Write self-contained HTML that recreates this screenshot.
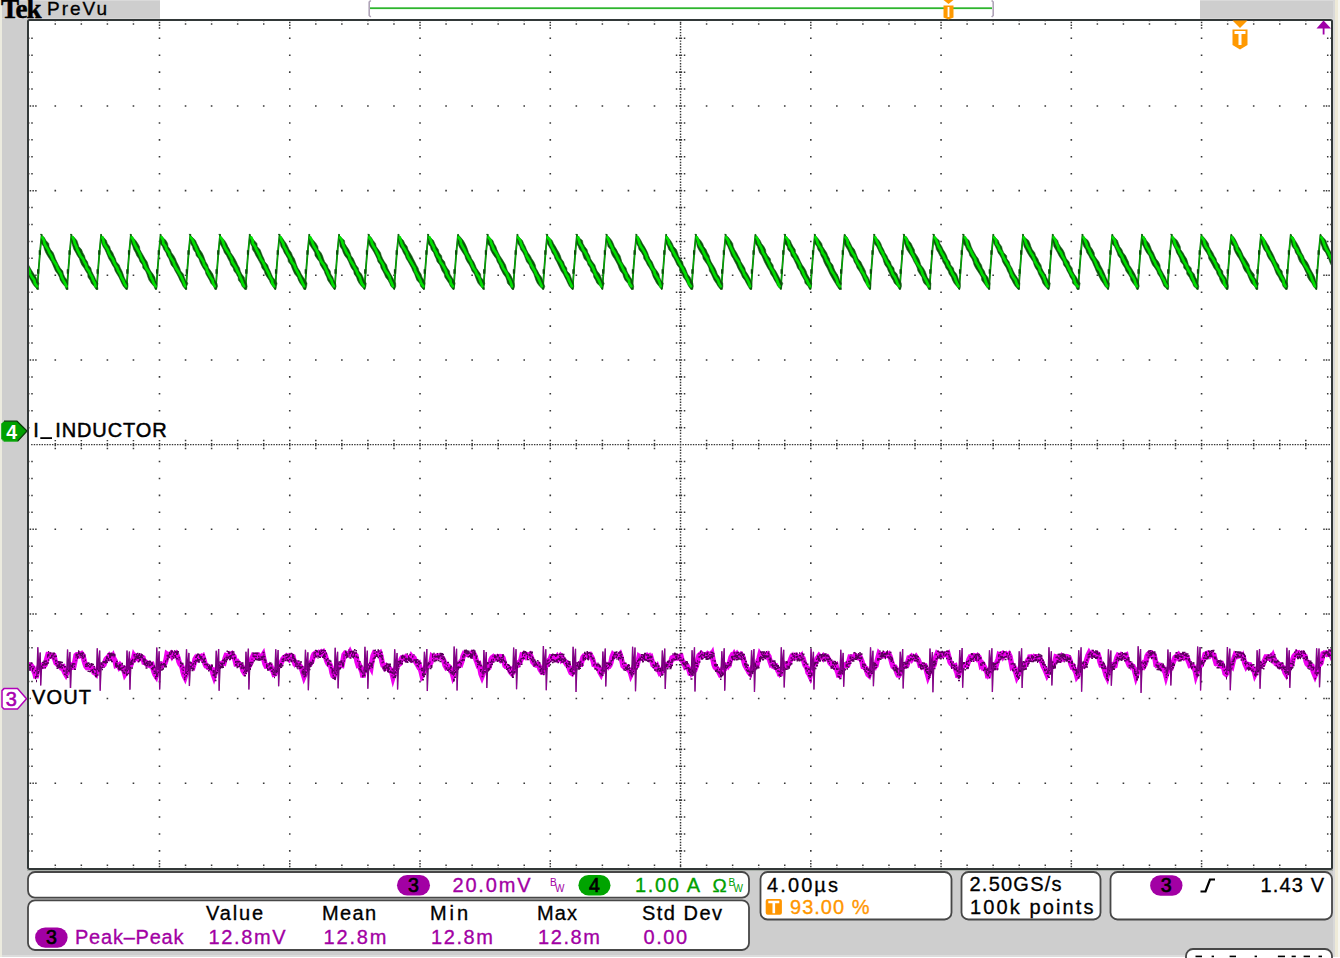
<!DOCTYPE html><html><head><meta charset="utf-8"><style>html,body{margin:0;padding:0;background:#fff;overflow:hidden}svg{display:block}</style></head><body><svg width="1340" height="958" viewBox="0 0 1340 958"><rect x="0" y="0" width="1340" height="958" fill="#cecece"/><rect x="0" y="0" width="2" height="958" fill="#ecebdf"/><rect x="1333" y="0" width="2" height="958" fill="#d9d9d9"/><rect x="1335" y="0" width="3" height="958" fill="#eeead8"/><rect x="1338" y="0" width="2" height="958" fill="#f6f6f0"/><rect x="2" y="0" width="1331" height="1" fill="#dadada"/><rect x="160" y="0" width="1040" height="19" fill="#ffffff"/><rect x="2" y="18" width="158" height="1" fill="#d8d8d8"/><rect x="1200" y="18" width="133" height="1" fill="#d8d8d8"/><rect x="2" y="955" width="1331" height="2" fill="#dcdcdc"/><rect x="0" y="957" width="1340" height="1" fill="#ffffff"/><rect x="28" y="20" width="1304" height="849" fill="#ffffff" stroke="#323838" stroke-width="2" rx="1.5"/><rect x="27" y="870" width="1306" height="1" fill="#aab0aa"/><path fill="#383838" d="M158.7 37.48h1.6v1.6h-1.6zM158.7 54.41h1.6v1.6h-1.6zM158.7 71.34h1.6v1.6h-1.6zM158.7 88.27h1.6v1.6h-1.6zM158.7 105.2h1.6v1.6h-1.6zM158.7 122.13h1.6v1.6h-1.6zM158.7 139.06h1.6v1.6h-1.6zM158.7 155.99h1.6v1.6h-1.6zM158.7 172.92h1.6v1.6h-1.6zM158.7 189.85h1.6v1.6h-1.6zM158.7 206.78h1.6v1.6h-1.6zM158.7 223.71h1.6v1.6h-1.6zM158.7 240.64h1.6v1.6h-1.6zM158.7 257.57h1.6v1.6h-1.6zM158.7 274.5h1.6v1.6h-1.6zM158.7 291.43h1.6v1.6h-1.6zM158.7 308.36h1.6v1.6h-1.6zM158.7 325.29h1.6v1.6h-1.6zM158.7 342.22h1.6v1.6h-1.6zM158.7 359.15h1.6v1.6h-1.6zM158.7 376.08h1.6v1.6h-1.6zM158.7 393.01h1.6v1.6h-1.6zM158.7 409.94h1.6v1.6h-1.6zM158.7 426.87h1.6v1.6h-1.6zM158.7 443.8h1.6v1.6h-1.6zM158.7 460.73h1.6v1.6h-1.6zM158.7 477.66h1.6v1.6h-1.6zM158.7 494.59h1.6v1.6h-1.6zM158.7 511.52h1.6v1.6h-1.6zM158.7 528.45h1.6v1.6h-1.6zM158.7 545.38h1.6v1.6h-1.6zM158.7 562.31h1.6v1.6h-1.6zM158.7 579.24h1.6v1.6h-1.6zM158.7 596.17h1.6v1.6h-1.6zM158.7 613.1h1.6v1.6h-1.6zM158.7 630.03h1.6v1.6h-1.6zM158.7 646.96h1.6v1.6h-1.6zM158.7 663.89h1.6v1.6h-1.6zM158.7 680.82h1.6v1.6h-1.6zM158.7 697.75h1.6v1.6h-1.6zM158.7 714.68h1.6v1.6h-1.6zM158.7 731.61h1.6v1.6h-1.6zM158.7 748.54h1.6v1.6h-1.6zM158.7 765.47h1.6v1.6h-1.6zM158.7 782.4h1.6v1.6h-1.6zM158.7 799.33h1.6v1.6h-1.6zM158.7 816.26h1.6v1.6h-1.6zM158.7 833.19h1.6v1.6h-1.6zM158.7 850.12h1.6v1.6h-1.6zM288.96 37.48h1.6v1.6h-1.6zM288.96 54.41h1.6v1.6h-1.6zM288.96 71.34h1.6v1.6h-1.6zM288.96 88.27h1.6v1.6h-1.6zM288.96 105.2h1.6v1.6h-1.6zM288.96 122.13h1.6v1.6h-1.6zM288.96 139.06h1.6v1.6h-1.6zM288.96 155.99h1.6v1.6h-1.6zM288.96 172.92h1.6v1.6h-1.6zM288.96 189.85h1.6v1.6h-1.6zM288.96 206.78h1.6v1.6h-1.6zM288.96 223.71h1.6v1.6h-1.6zM288.96 240.64h1.6v1.6h-1.6zM288.96 257.57h1.6v1.6h-1.6zM288.96 274.5h1.6v1.6h-1.6zM288.96 291.43h1.6v1.6h-1.6zM288.96 308.36h1.6v1.6h-1.6zM288.96 325.29h1.6v1.6h-1.6zM288.96 342.22h1.6v1.6h-1.6zM288.96 359.15h1.6v1.6h-1.6zM288.96 376.08h1.6v1.6h-1.6zM288.96 393.01h1.6v1.6h-1.6zM288.96 409.94h1.6v1.6h-1.6zM288.96 426.87h1.6v1.6h-1.6zM288.96 443.8h1.6v1.6h-1.6zM288.96 460.73h1.6v1.6h-1.6zM288.96 477.66h1.6v1.6h-1.6zM288.96 494.59h1.6v1.6h-1.6zM288.96 511.52h1.6v1.6h-1.6zM288.96 528.45h1.6v1.6h-1.6zM288.96 545.38h1.6v1.6h-1.6zM288.96 562.31h1.6v1.6h-1.6zM288.96 579.24h1.6v1.6h-1.6zM288.96 596.17h1.6v1.6h-1.6zM288.96 613.1h1.6v1.6h-1.6zM288.96 630.03h1.6v1.6h-1.6zM288.96 646.96h1.6v1.6h-1.6zM288.96 663.89h1.6v1.6h-1.6zM288.96 680.82h1.6v1.6h-1.6zM288.96 697.75h1.6v1.6h-1.6zM288.96 714.68h1.6v1.6h-1.6zM288.96 731.61h1.6v1.6h-1.6zM288.96 748.54h1.6v1.6h-1.6zM288.96 765.47h1.6v1.6h-1.6zM288.96 782.4h1.6v1.6h-1.6zM288.96 799.33h1.6v1.6h-1.6zM288.96 816.26h1.6v1.6h-1.6zM288.96 833.19h1.6v1.6h-1.6zM288.96 850.12h1.6v1.6h-1.6zM419.22 37.48h1.6v1.6h-1.6zM419.22 54.41h1.6v1.6h-1.6zM419.22 71.34h1.6v1.6h-1.6zM419.22 88.27h1.6v1.6h-1.6zM419.22 105.2h1.6v1.6h-1.6zM419.22 122.13h1.6v1.6h-1.6zM419.22 139.06h1.6v1.6h-1.6zM419.22 155.99h1.6v1.6h-1.6zM419.22 172.92h1.6v1.6h-1.6zM419.22 189.85h1.6v1.6h-1.6zM419.22 206.78h1.6v1.6h-1.6zM419.22 223.71h1.6v1.6h-1.6zM419.22 240.64h1.6v1.6h-1.6zM419.22 257.57h1.6v1.6h-1.6zM419.22 274.5h1.6v1.6h-1.6zM419.22 291.43h1.6v1.6h-1.6zM419.22 308.36h1.6v1.6h-1.6zM419.22 325.29h1.6v1.6h-1.6zM419.22 342.22h1.6v1.6h-1.6zM419.22 359.15h1.6v1.6h-1.6zM419.22 376.08h1.6v1.6h-1.6zM419.22 393.01h1.6v1.6h-1.6zM419.22 409.94h1.6v1.6h-1.6zM419.22 426.87h1.6v1.6h-1.6zM419.22 443.8h1.6v1.6h-1.6zM419.22 460.73h1.6v1.6h-1.6zM419.22 477.66h1.6v1.6h-1.6zM419.22 494.59h1.6v1.6h-1.6zM419.22 511.52h1.6v1.6h-1.6zM419.22 528.45h1.6v1.6h-1.6zM419.22 545.38h1.6v1.6h-1.6zM419.22 562.31h1.6v1.6h-1.6zM419.22 579.24h1.6v1.6h-1.6zM419.22 596.17h1.6v1.6h-1.6zM419.22 613.1h1.6v1.6h-1.6zM419.22 630.03h1.6v1.6h-1.6zM419.22 646.96h1.6v1.6h-1.6zM419.22 663.89h1.6v1.6h-1.6zM419.22 680.82h1.6v1.6h-1.6zM419.22 697.75h1.6v1.6h-1.6zM419.22 714.68h1.6v1.6h-1.6zM419.22 731.61h1.6v1.6h-1.6zM419.22 748.54h1.6v1.6h-1.6zM419.22 765.47h1.6v1.6h-1.6zM419.22 782.4h1.6v1.6h-1.6zM419.22 799.33h1.6v1.6h-1.6zM419.22 816.26h1.6v1.6h-1.6zM419.22 833.19h1.6v1.6h-1.6zM419.22 850.12h1.6v1.6h-1.6zM549.48 37.48h1.6v1.6h-1.6zM549.48 54.41h1.6v1.6h-1.6zM549.48 71.34h1.6v1.6h-1.6zM549.48 88.27h1.6v1.6h-1.6zM549.48 105.2h1.6v1.6h-1.6zM549.48 122.13h1.6v1.6h-1.6zM549.48 139.06h1.6v1.6h-1.6zM549.48 155.99h1.6v1.6h-1.6zM549.48 172.92h1.6v1.6h-1.6zM549.48 189.85h1.6v1.6h-1.6zM549.48 206.78h1.6v1.6h-1.6zM549.48 223.71h1.6v1.6h-1.6zM549.48 240.64h1.6v1.6h-1.6zM549.48 257.57h1.6v1.6h-1.6zM549.48 274.5h1.6v1.6h-1.6zM549.48 291.43h1.6v1.6h-1.6zM549.48 308.36h1.6v1.6h-1.6zM549.48 325.29h1.6v1.6h-1.6zM549.48 342.22h1.6v1.6h-1.6zM549.48 359.15h1.6v1.6h-1.6zM549.48 376.08h1.6v1.6h-1.6zM549.48 393.01h1.6v1.6h-1.6zM549.48 409.94h1.6v1.6h-1.6zM549.48 426.87h1.6v1.6h-1.6zM549.48 443.8h1.6v1.6h-1.6zM549.48 460.73h1.6v1.6h-1.6zM549.48 477.66h1.6v1.6h-1.6zM549.48 494.59h1.6v1.6h-1.6zM549.48 511.52h1.6v1.6h-1.6zM549.48 528.45h1.6v1.6h-1.6zM549.48 545.38h1.6v1.6h-1.6zM549.48 562.31h1.6v1.6h-1.6zM549.48 579.24h1.6v1.6h-1.6zM549.48 596.17h1.6v1.6h-1.6zM549.48 613.1h1.6v1.6h-1.6zM549.48 630.03h1.6v1.6h-1.6zM549.48 646.96h1.6v1.6h-1.6zM549.48 663.89h1.6v1.6h-1.6zM549.48 680.82h1.6v1.6h-1.6zM549.48 697.75h1.6v1.6h-1.6zM549.48 714.68h1.6v1.6h-1.6zM549.48 731.61h1.6v1.6h-1.6zM549.48 748.54h1.6v1.6h-1.6zM549.48 765.47h1.6v1.6h-1.6zM549.48 782.4h1.6v1.6h-1.6zM549.48 799.33h1.6v1.6h-1.6zM549.48 816.26h1.6v1.6h-1.6zM549.48 833.19h1.6v1.6h-1.6zM549.48 850.12h1.6v1.6h-1.6zM810 37.48h1.6v1.6h-1.6zM810 54.41h1.6v1.6h-1.6zM810 71.34h1.6v1.6h-1.6zM810 88.27h1.6v1.6h-1.6zM810 105.2h1.6v1.6h-1.6zM810 122.13h1.6v1.6h-1.6zM810 139.06h1.6v1.6h-1.6zM810 155.99h1.6v1.6h-1.6zM810 172.92h1.6v1.6h-1.6zM810 189.85h1.6v1.6h-1.6zM810 206.78h1.6v1.6h-1.6zM810 223.71h1.6v1.6h-1.6zM810 240.64h1.6v1.6h-1.6zM810 257.57h1.6v1.6h-1.6zM810 274.5h1.6v1.6h-1.6zM810 291.43h1.6v1.6h-1.6zM810 308.36h1.6v1.6h-1.6zM810 325.29h1.6v1.6h-1.6zM810 342.22h1.6v1.6h-1.6zM810 359.15h1.6v1.6h-1.6zM810 376.08h1.6v1.6h-1.6zM810 393.01h1.6v1.6h-1.6zM810 409.94h1.6v1.6h-1.6zM810 426.87h1.6v1.6h-1.6zM810 443.8h1.6v1.6h-1.6zM810 460.73h1.6v1.6h-1.6zM810 477.66h1.6v1.6h-1.6zM810 494.59h1.6v1.6h-1.6zM810 511.52h1.6v1.6h-1.6zM810 528.45h1.6v1.6h-1.6zM810 545.38h1.6v1.6h-1.6zM810 562.31h1.6v1.6h-1.6zM810 579.24h1.6v1.6h-1.6zM810 596.17h1.6v1.6h-1.6zM810 613.1h1.6v1.6h-1.6zM810 630.03h1.6v1.6h-1.6zM810 646.96h1.6v1.6h-1.6zM810 663.89h1.6v1.6h-1.6zM810 680.82h1.6v1.6h-1.6zM810 697.75h1.6v1.6h-1.6zM810 714.68h1.6v1.6h-1.6zM810 731.61h1.6v1.6h-1.6zM810 748.54h1.6v1.6h-1.6zM810 765.47h1.6v1.6h-1.6zM810 782.4h1.6v1.6h-1.6zM810 799.33h1.6v1.6h-1.6zM810 816.26h1.6v1.6h-1.6zM810 833.19h1.6v1.6h-1.6zM810 850.12h1.6v1.6h-1.6zM940.26 37.48h1.6v1.6h-1.6zM940.26 54.41h1.6v1.6h-1.6zM940.26 71.34h1.6v1.6h-1.6zM940.26 88.27h1.6v1.6h-1.6zM940.26 105.2h1.6v1.6h-1.6zM940.26 122.13h1.6v1.6h-1.6zM940.26 139.06h1.6v1.6h-1.6zM940.26 155.99h1.6v1.6h-1.6zM940.26 172.92h1.6v1.6h-1.6zM940.26 189.85h1.6v1.6h-1.6zM940.26 206.78h1.6v1.6h-1.6zM940.26 223.71h1.6v1.6h-1.6zM940.26 240.64h1.6v1.6h-1.6zM940.26 257.57h1.6v1.6h-1.6zM940.26 274.5h1.6v1.6h-1.6zM940.26 291.43h1.6v1.6h-1.6zM940.26 308.36h1.6v1.6h-1.6zM940.26 325.29h1.6v1.6h-1.6zM940.26 342.22h1.6v1.6h-1.6zM940.26 359.15h1.6v1.6h-1.6zM940.26 376.08h1.6v1.6h-1.6zM940.26 393.01h1.6v1.6h-1.6zM940.26 409.94h1.6v1.6h-1.6zM940.26 426.87h1.6v1.6h-1.6zM940.26 443.8h1.6v1.6h-1.6zM940.26 460.73h1.6v1.6h-1.6zM940.26 477.66h1.6v1.6h-1.6zM940.26 494.59h1.6v1.6h-1.6zM940.26 511.52h1.6v1.6h-1.6zM940.26 528.45h1.6v1.6h-1.6zM940.26 545.38h1.6v1.6h-1.6zM940.26 562.31h1.6v1.6h-1.6zM940.26 579.24h1.6v1.6h-1.6zM940.26 596.17h1.6v1.6h-1.6zM940.26 613.1h1.6v1.6h-1.6zM940.26 630.03h1.6v1.6h-1.6zM940.26 646.96h1.6v1.6h-1.6zM940.26 663.89h1.6v1.6h-1.6zM940.26 680.82h1.6v1.6h-1.6zM940.26 697.75h1.6v1.6h-1.6zM940.26 714.68h1.6v1.6h-1.6zM940.26 731.61h1.6v1.6h-1.6zM940.26 748.54h1.6v1.6h-1.6zM940.26 765.47h1.6v1.6h-1.6zM940.26 782.4h1.6v1.6h-1.6zM940.26 799.33h1.6v1.6h-1.6zM940.26 816.26h1.6v1.6h-1.6zM940.26 833.19h1.6v1.6h-1.6zM940.26 850.12h1.6v1.6h-1.6zM1070.52 37.48h1.6v1.6h-1.6zM1070.52 54.41h1.6v1.6h-1.6zM1070.52 71.34h1.6v1.6h-1.6zM1070.52 88.27h1.6v1.6h-1.6zM1070.52 105.2h1.6v1.6h-1.6zM1070.52 122.13h1.6v1.6h-1.6zM1070.52 139.06h1.6v1.6h-1.6zM1070.52 155.99h1.6v1.6h-1.6zM1070.52 172.92h1.6v1.6h-1.6zM1070.52 189.85h1.6v1.6h-1.6zM1070.52 206.78h1.6v1.6h-1.6zM1070.52 223.71h1.6v1.6h-1.6zM1070.52 240.64h1.6v1.6h-1.6zM1070.52 257.57h1.6v1.6h-1.6zM1070.52 274.5h1.6v1.6h-1.6zM1070.52 291.43h1.6v1.6h-1.6zM1070.52 308.36h1.6v1.6h-1.6zM1070.52 325.29h1.6v1.6h-1.6zM1070.52 342.22h1.6v1.6h-1.6zM1070.52 359.15h1.6v1.6h-1.6zM1070.52 376.08h1.6v1.6h-1.6zM1070.52 393.01h1.6v1.6h-1.6zM1070.52 409.94h1.6v1.6h-1.6zM1070.52 426.87h1.6v1.6h-1.6zM1070.52 443.8h1.6v1.6h-1.6zM1070.52 460.73h1.6v1.6h-1.6zM1070.52 477.66h1.6v1.6h-1.6zM1070.52 494.59h1.6v1.6h-1.6zM1070.52 511.52h1.6v1.6h-1.6zM1070.52 528.45h1.6v1.6h-1.6zM1070.52 545.38h1.6v1.6h-1.6zM1070.52 562.31h1.6v1.6h-1.6zM1070.52 579.24h1.6v1.6h-1.6zM1070.52 596.17h1.6v1.6h-1.6zM1070.52 613.1h1.6v1.6h-1.6zM1070.52 630.03h1.6v1.6h-1.6zM1070.52 646.96h1.6v1.6h-1.6zM1070.52 663.89h1.6v1.6h-1.6zM1070.52 680.82h1.6v1.6h-1.6zM1070.52 697.75h1.6v1.6h-1.6zM1070.52 714.68h1.6v1.6h-1.6zM1070.52 731.61h1.6v1.6h-1.6zM1070.52 748.54h1.6v1.6h-1.6zM1070.52 765.47h1.6v1.6h-1.6zM1070.52 782.4h1.6v1.6h-1.6zM1070.52 799.33h1.6v1.6h-1.6zM1070.52 816.26h1.6v1.6h-1.6zM1070.52 833.19h1.6v1.6h-1.6zM1070.52 850.12h1.6v1.6h-1.6zM1200.78 37.48h1.6v1.6h-1.6zM1200.78 54.41h1.6v1.6h-1.6zM1200.78 71.34h1.6v1.6h-1.6zM1200.78 88.27h1.6v1.6h-1.6zM1200.78 105.2h1.6v1.6h-1.6zM1200.78 122.13h1.6v1.6h-1.6zM1200.78 139.06h1.6v1.6h-1.6zM1200.78 155.99h1.6v1.6h-1.6zM1200.78 172.92h1.6v1.6h-1.6zM1200.78 189.85h1.6v1.6h-1.6zM1200.78 206.78h1.6v1.6h-1.6zM1200.78 223.71h1.6v1.6h-1.6zM1200.78 240.64h1.6v1.6h-1.6zM1200.78 257.57h1.6v1.6h-1.6zM1200.78 274.5h1.6v1.6h-1.6zM1200.78 291.43h1.6v1.6h-1.6zM1200.78 308.36h1.6v1.6h-1.6zM1200.78 325.29h1.6v1.6h-1.6zM1200.78 342.22h1.6v1.6h-1.6zM1200.78 359.15h1.6v1.6h-1.6zM1200.78 376.08h1.6v1.6h-1.6zM1200.78 393.01h1.6v1.6h-1.6zM1200.78 409.94h1.6v1.6h-1.6zM1200.78 426.87h1.6v1.6h-1.6zM1200.78 443.8h1.6v1.6h-1.6zM1200.78 460.73h1.6v1.6h-1.6zM1200.78 477.66h1.6v1.6h-1.6zM1200.78 494.59h1.6v1.6h-1.6zM1200.78 511.52h1.6v1.6h-1.6zM1200.78 528.45h1.6v1.6h-1.6zM1200.78 545.38h1.6v1.6h-1.6zM1200.78 562.31h1.6v1.6h-1.6zM1200.78 579.24h1.6v1.6h-1.6zM1200.78 596.17h1.6v1.6h-1.6zM1200.78 613.1h1.6v1.6h-1.6zM1200.78 630.03h1.6v1.6h-1.6zM1200.78 646.96h1.6v1.6h-1.6zM1200.78 663.89h1.6v1.6h-1.6zM1200.78 680.82h1.6v1.6h-1.6zM1200.78 697.75h1.6v1.6h-1.6zM1200.78 714.68h1.6v1.6h-1.6zM1200.78 731.61h1.6v1.6h-1.6zM1200.78 748.54h1.6v1.6h-1.6zM1200.78 765.47h1.6v1.6h-1.6zM1200.78 782.4h1.6v1.6h-1.6zM1200.78 799.33h1.6v1.6h-1.6zM1200.78 816.26h1.6v1.6h-1.6zM1200.78 833.19h1.6v1.6h-1.6zM1200.78 850.12h1.6v1.6h-1.6zM54.49 105.2h1.6v1.6h-1.6zM80.54 105.2h1.6v1.6h-1.6zM106.6 105.2h1.6v1.6h-1.6zM132.65 105.2h1.6v1.6h-1.6zM184.75 105.2h1.6v1.6h-1.6zM210.8 105.2h1.6v1.6h-1.6zM236.86 105.2h1.6v1.6h-1.6zM262.91 105.2h1.6v1.6h-1.6zM315.01 105.2h1.6v1.6h-1.6zM341.06 105.2h1.6v1.6h-1.6zM367.12 105.2h1.6v1.6h-1.6zM393.17 105.2h1.6v1.6h-1.6zM445.27 105.2h1.6v1.6h-1.6zM471.32 105.2h1.6v1.6h-1.6zM497.38 105.2h1.6v1.6h-1.6zM523.43 105.2h1.6v1.6h-1.6zM575.53 105.2h1.6v1.6h-1.6zM601.58 105.2h1.6v1.6h-1.6zM627.64 105.2h1.6v1.6h-1.6zM653.69 105.2h1.6v1.6h-1.6zM705.79 105.2h1.6v1.6h-1.6zM731.84 105.2h1.6v1.6h-1.6zM757.9 105.2h1.6v1.6h-1.6zM783.95 105.2h1.6v1.6h-1.6zM836.05 105.2h1.6v1.6h-1.6zM862.1 105.2h1.6v1.6h-1.6zM888.16 105.2h1.6v1.6h-1.6zM914.21 105.2h1.6v1.6h-1.6zM966.31 105.2h1.6v1.6h-1.6zM992.36 105.2h1.6v1.6h-1.6zM1018.42 105.2h1.6v1.6h-1.6zM1044.47 105.2h1.6v1.6h-1.6zM1096.57 105.2h1.6v1.6h-1.6zM1122.62 105.2h1.6v1.6h-1.6zM1148.68 105.2h1.6v1.6h-1.6zM1174.73 105.2h1.6v1.6h-1.6zM1226.83 105.2h1.6v1.6h-1.6zM1252.88 105.2h1.6v1.6h-1.6zM1278.94 105.2h1.6v1.6h-1.6zM1304.99 105.2h1.6v1.6h-1.6zM54.49 189.85h1.6v1.6h-1.6zM80.54 189.85h1.6v1.6h-1.6zM106.6 189.85h1.6v1.6h-1.6zM132.65 189.85h1.6v1.6h-1.6zM184.75 189.85h1.6v1.6h-1.6zM210.8 189.85h1.6v1.6h-1.6zM236.86 189.85h1.6v1.6h-1.6zM262.91 189.85h1.6v1.6h-1.6zM315.01 189.85h1.6v1.6h-1.6zM341.06 189.85h1.6v1.6h-1.6zM367.12 189.85h1.6v1.6h-1.6zM393.17 189.85h1.6v1.6h-1.6zM445.27 189.85h1.6v1.6h-1.6zM471.32 189.85h1.6v1.6h-1.6zM497.38 189.85h1.6v1.6h-1.6zM523.43 189.85h1.6v1.6h-1.6zM575.53 189.85h1.6v1.6h-1.6zM601.58 189.85h1.6v1.6h-1.6zM627.64 189.85h1.6v1.6h-1.6zM653.69 189.85h1.6v1.6h-1.6zM705.79 189.85h1.6v1.6h-1.6zM731.84 189.85h1.6v1.6h-1.6zM757.9 189.85h1.6v1.6h-1.6zM783.95 189.85h1.6v1.6h-1.6zM836.05 189.85h1.6v1.6h-1.6zM862.1 189.85h1.6v1.6h-1.6zM888.16 189.85h1.6v1.6h-1.6zM914.21 189.85h1.6v1.6h-1.6zM966.31 189.85h1.6v1.6h-1.6zM992.36 189.85h1.6v1.6h-1.6zM1018.42 189.85h1.6v1.6h-1.6zM1044.47 189.85h1.6v1.6h-1.6zM1096.57 189.85h1.6v1.6h-1.6zM1122.62 189.85h1.6v1.6h-1.6zM1148.68 189.85h1.6v1.6h-1.6zM1174.73 189.85h1.6v1.6h-1.6zM1226.83 189.85h1.6v1.6h-1.6zM1252.88 189.85h1.6v1.6h-1.6zM1278.94 189.85h1.6v1.6h-1.6zM1304.99 189.85h1.6v1.6h-1.6zM54.49 274.5h1.6v1.6h-1.6zM80.54 274.5h1.6v1.6h-1.6zM106.6 274.5h1.6v1.6h-1.6zM132.65 274.5h1.6v1.6h-1.6zM184.75 274.5h1.6v1.6h-1.6zM210.8 274.5h1.6v1.6h-1.6zM236.86 274.5h1.6v1.6h-1.6zM262.91 274.5h1.6v1.6h-1.6zM315.01 274.5h1.6v1.6h-1.6zM341.06 274.5h1.6v1.6h-1.6zM367.12 274.5h1.6v1.6h-1.6zM393.17 274.5h1.6v1.6h-1.6zM445.27 274.5h1.6v1.6h-1.6zM471.32 274.5h1.6v1.6h-1.6zM497.38 274.5h1.6v1.6h-1.6zM523.43 274.5h1.6v1.6h-1.6zM575.53 274.5h1.6v1.6h-1.6zM601.58 274.5h1.6v1.6h-1.6zM627.64 274.5h1.6v1.6h-1.6zM653.69 274.5h1.6v1.6h-1.6zM705.79 274.5h1.6v1.6h-1.6zM731.84 274.5h1.6v1.6h-1.6zM757.9 274.5h1.6v1.6h-1.6zM783.95 274.5h1.6v1.6h-1.6zM836.05 274.5h1.6v1.6h-1.6zM862.1 274.5h1.6v1.6h-1.6zM888.16 274.5h1.6v1.6h-1.6zM914.21 274.5h1.6v1.6h-1.6zM966.31 274.5h1.6v1.6h-1.6zM992.36 274.5h1.6v1.6h-1.6zM1018.42 274.5h1.6v1.6h-1.6zM1044.47 274.5h1.6v1.6h-1.6zM1096.57 274.5h1.6v1.6h-1.6zM1122.62 274.5h1.6v1.6h-1.6zM1148.68 274.5h1.6v1.6h-1.6zM1174.73 274.5h1.6v1.6h-1.6zM1226.83 274.5h1.6v1.6h-1.6zM1252.88 274.5h1.6v1.6h-1.6zM1278.94 274.5h1.6v1.6h-1.6zM1304.99 274.5h1.6v1.6h-1.6zM54.49 359.15h1.6v1.6h-1.6zM80.54 359.15h1.6v1.6h-1.6zM106.6 359.15h1.6v1.6h-1.6zM132.65 359.15h1.6v1.6h-1.6zM184.75 359.15h1.6v1.6h-1.6zM210.8 359.15h1.6v1.6h-1.6zM236.86 359.15h1.6v1.6h-1.6zM262.91 359.15h1.6v1.6h-1.6zM315.01 359.15h1.6v1.6h-1.6zM341.06 359.15h1.6v1.6h-1.6zM367.12 359.15h1.6v1.6h-1.6zM393.17 359.15h1.6v1.6h-1.6zM445.27 359.15h1.6v1.6h-1.6zM471.32 359.15h1.6v1.6h-1.6zM497.38 359.15h1.6v1.6h-1.6zM523.43 359.15h1.6v1.6h-1.6zM575.53 359.15h1.6v1.6h-1.6zM601.58 359.15h1.6v1.6h-1.6zM627.64 359.15h1.6v1.6h-1.6zM653.69 359.15h1.6v1.6h-1.6zM705.79 359.15h1.6v1.6h-1.6zM731.84 359.15h1.6v1.6h-1.6zM757.9 359.15h1.6v1.6h-1.6zM783.95 359.15h1.6v1.6h-1.6zM836.05 359.15h1.6v1.6h-1.6zM862.1 359.15h1.6v1.6h-1.6zM888.16 359.15h1.6v1.6h-1.6zM914.21 359.15h1.6v1.6h-1.6zM966.31 359.15h1.6v1.6h-1.6zM992.36 359.15h1.6v1.6h-1.6zM1018.42 359.15h1.6v1.6h-1.6zM1044.47 359.15h1.6v1.6h-1.6zM1096.57 359.15h1.6v1.6h-1.6zM1122.62 359.15h1.6v1.6h-1.6zM1148.68 359.15h1.6v1.6h-1.6zM1174.73 359.15h1.6v1.6h-1.6zM1226.83 359.15h1.6v1.6h-1.6zM1252.88 359.15h1.6v1.6h-1.6zM1278.94 359.15h1.6v1.6h-1.6zM1304.99 359.15h1.6v1.6h-1.6zM54.49 528.45h1.6v1.6h-1.6zM80.54 528.45h1.6v1.6h-1.6zM106.6 528.45h1.6v1.6h-1.6zM132.65 528.45h1.6v1.6h-1.6zM184.75 528.45h1.6v1.6h-1.6zM210.8 528.45h1.6v1.6h-1.6zM236.86 528.45h1.6v1.6h-1.6zM262.91 528.45h1.6v1.6h-1.6zM315.01 528.45h1.6v1.6h-1.6zM341.06 528.45h1.6v1.6h-1.6zM367.12 528.45h1.6v1.6h-1.6zM393.17 528.45h1.6v1.6h-1.6zM445.27 528.45h1.6v1.6h-1.6zM471.32 528.45h1.6v1.6h-1.6zM497.38 528.45h1.6v1.6h-1.6zM523.43 528.45h1.6v1.6h-1.6zM575.53 528.45h1.6v1.6h-1.6zM601.58 528.45h1.6v1.6h-1.6zM627.64 528.45h1.6v1.6h-1.6zM653.69 528.45h1.6v1.6h-1.6zM705.79 528.45h1.6v1.6h-1.6zM731.84 528.45h1.6v1.6h-1.6zM757.9 528.45h1.6v1.6h-1.6zM783.95 528.45h1.6v1.6h-1.6zM836.05 528.45h1.6v1.6h-1.6zM862.1 528.45h1.6v1.6h-1.6zM888.16 528.45h1.6v1.6h-1.6zM914.21 528.45h1.6v1.6h-1.6zM966.31 528.45h1.6v1.6h-1.6zM992.36 528.45h1.6v1.6h-1.6zM1018.42 528.45h1.6v1.6h-1.6zM1044.47 528.45h1.6v1.6h-1.6zM1096.57 528.45h1.6v1.6h-1.6zM1122.62 528.45h1.6v1.6h-1.6zM1148.68 528.45h1.6v1.6h-1.6zM1174.73 528.45h1.6v1.6h-1.6zM1226.83 528.45h1.6v1.6h-1.6zM1252.88 528.45h1.6v1.6h-1.6zM1278.94 528.45h1.6v1.6h-1.6zM1304.99 528.45h1.6v1.6h-1.6zM54.49 613.1h1.6v1.6h-1.6zM80.54 613.1h1.6v1.6h-1.6zM106.6 613.1h1.6v1.6h-1.6zM132.65 613.1h1.6v1.6h-1.6zM184.75 613.1h1.6v1.6h-1.6zM210.8 613.1h1.6v1.6h-1.6zM236.86 613.1h1.6v1.6h-1.6zM262.91 613.1h1.6v1.6h-1.6zM315.01 613.1h1.6v1.6h-1.6zM341.06 613.1h1.6v1.6h-1.6zM367.12 613.1h1.6v1.6h-1.6zM393.17 613.1h1.6v1.6h-1.6zM445.27 613.1h1.6v1.6h-1.6zM471.32 613.1h1.6v1.6h-1.6zM497.38 613.1h1.6v1.6h-1.6zM523.43 613.1h1.6v1.6h-1.6zM575.53 613.1h1.6v1.6h-1.6zM601.58 613.1h1.6v1.6h-1.6zM627.64 613.1h1.6v1.6h-1.6zM653.69 613.1h1.6v1.6h-1.6zM705.79 613.1h1.6v1.6h-1.6zM731.84 613.1h1.6v1.6h-1.6zM757.9 613.1h1.6v1.6h-1.6zM783.95 613.1h1.6v1.6h-1.6zM836.05 613.1h1.6v1.6h-1.6zM862.1 613.1h1.6v1.6h-1.6zM888.16 613.1h1.6v1.6h-1.6zM914.21 613.1h1.6v1.6h-1.6zM966.31 613.1h1.6v1.6h-1.6zM992.36 613.1h1.6v1.6h-1.6zM1018.42 613.1h1.6v1.6h-1.6zM1044.47 613.1h1.6v1.6h-1.6zM1096.57 613.1h1.6v1.6h-1.6zM1122.62 613.1h1.6v1.6h-1.6zM1148.68 613.1h1.6v1.6h-1.6zM1174.73 613.1h1.6v1.6h-1.6zM1226.83 613.1h1.6v1.6h-1.6zM1252.88 613.1h1.6v1.6h-1.6zM1278.94 613.1h1.6v1.6h-1.6zM1304.99 613.1h1.6v1.6h-1.6zM54.49 697.75h1.6v1.6h-1.6zM80.54 697.75h1.6v1.6h-1.6zM106.6 697.75h1.6v1.6h-1.6zM132.65 697.75h1.6v1.6h-1.6zM184.75 697.75h1.6v1.6h-1.6zM210.8 697.75h1.6v1.6h-1.6zM236.86 697.75h1.6v1.6h-1.6zM262.91 697.75h1.6v1.6h-1.6zM315.01 697.75h1.6v1.6h-1.6zM341.06 697.75h1.6v1.6h-1.6zM367.12 697.75h1.6v1.6h-1.6zM393.17 697.75h1.6v1.6h-1.6zM445.27 697.75h1.6v1.6h-1.6zM471.32 697.75h1.6v1.6h-1.6zM497.38 697.75h1.6v1.6h-1.6zM523.43 697.75h1.6v1.6h-1.6zM575.53 697.75h1.6v1.6h-1.6zM601.58 697.75h1.6v1.6h-1.6zM627.64 697.75h1.6v1.6h-1.6zM653.69 697.75h1.6v1.6h-1.6zM705.79 697.75h1.6v1.6h-1.6zM731.84 697.75h1.6v1.6h-1.6zM757.9 697.75h1.6v1.6h-1.6zM783.95 697.75h1.6v1.6h-1.6zM836.05 697.75h1.6v1.6h-1.6zM862.1 697.75h1.6v1.6h-1.6zM888.16 697.75h1.6v1.6h-1.6zM914.21 697.75h1.6v1.6h-1.6zM966.31 697.75h1.6v1.6h-1.6zM992.36 697.75h1.6v1.6h-1.6zM1018.42 697.75h1.6v1.6h-1.6zM1044.47 697.75h1.6v1.6h-1.6zM1096.57 697.75h1.6v1.6h-1.6zM1122.62 697.75h1.6v1.6h-1.6zM1148.68 697.75h1.6v1.6h-1.6zM1174.73 697.75h1.6v1.6h-1.6zM1226.83 697.75h1.6v1.6h-1.6zM1252.88 697.75h1.6v1.6h-1.6zM1278.94 697.75h1.6v1.6h-1.6zM1304.99 697.75h1.6v1.6h-1.6zM54.49 782.4h1.6v1.6h-1.6zM80.54 782.4h1.6v1.6h-1.6zM106.6 782.4h1.6v1.6h-1.6zM132.65 782.4h1.6v1.6h-1.6zM184.75 782.4h1.6v1.6h-1.6zM210.8 782.4h1.6v1.6h-1.6zM236.86 782.4h1.6v1.6h-1.6zM262.91 782.4h1.6v1.6h-1.6zM315.01 782.4h1.6v1.6h-1.6zM341.06 782.4h1.6v1.6h-1.6zM367.12 782.4h1.6v1.6h-1.6zM393.17 782.4h1.6v1.6h-1.6zM445.27 782.4h1.6v1.6h-1.6zM471.32 782.4h1.6v1.6h-1.6zM497.38 782.4h1.6v1.6h-1.6zM523.43 782.4h1.6v1.6h-1.6zM575.53 782.4h1.6v1.6h-1.6zM601.58 782.4h1.6v1.6h-1.6zM627.64 782.4h1.6v1.6h-1.6zM653.69 782.4h1.6v1.6h-1.6zM705.79 782.4h1.6v1.6h-1.6zM731.84 782.4h1.6v1.6h-1.6zM757.9 782.4h1.6v1.6h-1.6zM783.95 782.4h1.6v1.6h-1.6zM836.05 782.4h1.6v1.6h-1.6zM862.1 782.4h1.6v1.6h-1.6zM888.16 782.4h1.6v1.6h-1.6zM914.21 782.4h1.6v1.6h-1.6zM966.31 782.4h1.6v1.6h-1.6zM992.36 782.4h1.6v1.6h-1.6zM1018.42 782.4h1.6v1.6h-1.6zM1044.47 782.4h1.6v1.6h-1.6zM1096.57 782.4h1.6v1.6h-1.6zM1122.62 782.4h1.6v1.6h-1.6zM1148.68 782.4h1.6v1.6h-1.6zM1174.73 782.4h1.6v1.6h-1.6zM1226.83 782.4h1.6v1.6h-1.6zM1252.88 782.4h1.6v1.6h-1.6zM1278.94 782.4h1.6v1.6h-1.6zM1304.99 782.4h1.6v1.6h-1.6zM31.12 443.88h1.45v1.45h-1.45zM33.73 443.88h1.45v1.45h-1.45zM36.33 443.88h1.45v1.45h-1.45zM38.94 443.88h1.45v1.45h-1.45zM41.54 443.88h1.45v1.45h-1.45zM44.15 443.88h1.45v1.45h-1.45zM46.75 443.88h1.45v1.45h-1.45zM49.36 443.88h1.45v1.45h-1.45zM51.96 443.88h1.45v1.45h-1.45zM54.49 443h1.6v3.2h-1.6zM54.54 439.85h1.5v1.5h-1.5zM54.54 447.85h1.5v1.5h-1.5zM57.17 443.88h1.45v1.45h-1.45zM59.78 443.88h1.45v1.45h-1.45zM62.38 443.88h1.45v1.45h-1.45zM64.99 443.88h1.45v1.45h-1.45zM67.59 443.88h1.45v1.45h-1.45zM70.2 443.88h1.45v1.45h-1.45zM72.8 443.88h1.45v1.45h-1.45zM75.41 443.88h1.45v1.45h-1.45zM78.01 443.88h1.45v1.45h-1.45zM80.54 443h1.6v3.2h-1.6zM80.59 439.85h1.5v1.5h-1.5zM80.59 447.85h1.5v1.5h-1.5zM83.22 443.88h1.45v1.45h-1.45zM85.83 443.88h1.45v1.45h-1.45zM88.43 443.88h1.45v1.45h-1.45zM91.04 443.88h1.45v1.45h-1.45zM93.64 443.88h1.45v1.45h-1.45zM96.25 443.88h1.45v1.45h-1.45zM98.86 443.88h1.45v1.45h-1.45zM101.46 443.88h1.45v1.45h-1.45zM104.07 443.88h1.45v1.45h-1.45zM106.6 443h1.6v3.2h-1.6zM106.65 439.85h1.5v1.5h-1.5zM106.65 447.85h1.5v1.5h-1.5zM109.28 443.88h1.45v1.45h-1.45zM111.88 443.88h1.45v1.45h-1.45zM114.49 443.88h1.45v1.45h-1.45zM117.09 443.88h1.45v1.45h-1.45zM119.7 443.88h1.45v1.45h-1.45zM122.3 443.88h1.45v1.45h-1.45zM124.91 443.88h1.45v1.45h-1.45zM127.51 443.88h1.45v1.45h-1.45zM130.12 443.88h1.45v1.45h-1.45zM132.65 443h1.6v3.2h-1.6zM132.7 439.85h1.5v1.5h-1.5zM132.7 447.85h1.5v1.5h-1.5zM135.33 443.88h1.45v1.45h-1.45zM137.93 443.88h1.45v1.45h-1.45zM140.54 443.88h1.45v1.45h-1.45zM143.14 443.88h1.45v1.45h-1.45zM145.75 443.88h1.45v1.45h-1.45zM148.35 443.88h1.45v1.45h-1.45zM150.96 443.88h1.45v1.45h-1.45zM153.56 443.88h1.45v1.45h-1.45zM156.17 443.88h1.45v1.45h-1.45zM158.7 443h1.6v3.2h-1.6zM158.75 439.85h1.5v1.5h-1.5zM158.75 447.85h1.5v1.5h-1.5zM161.38 443.88h1.45v1.45h-1.45zM163.99 443.88h1.45v1.45h-1.45zM166.59 443.88h1.45v1.45h-1.45zM169.2 443.88h1.45v1.45h-1.45zM171.8 443.88h1.45v1.45h-1.45zM174.41 443.88h1.45v1.45h-1.45zM177.01 443.88h1.45v1.45h-1.45zM179.62 443.88h1.45v1.45h-1.45zM182.22 443.88h1.45v1.45h-1.45zM184.75 443h1.6v3.2h-1.6zM184.8 439.85h1.5v1.5h-1.5zM184.8 447.85h1.5v1.5h-1.5zM187.43 443.88h1.45v1.45h-1.45zM190.04 443.88h1.45v1.45h-1.45zM192.64 443.88h1.45v1.45h-1.45zM195.25 443.88h1.45v1.45h-1.45zM197.85 443.88h1.45v1.45h-1.45zM200.46 443.88h1.45v1.45h-1.45zM203.06 443.88h1.45v1.45h-1.45zM205.67 443.88h1.45v1.45h-1.45zM208.27 443.88h1.45v1.45h-1.45zM210.8 443h1.6v3.2h-1.6zM210.85 439.85h1.5v1.5h-1.5zM210.85 447.85h1.5v1.5h-1.5zM213.48 443.88h1.45v1.45h-1.45zM216.09 443.88h1.45v1.45h-1.45zM218.69 443.88h1.45v1.45h-1.45zM221.3 443.88h1.45v1.45h-1.45zM223.91 443.88h1.45v1.45h-1.45zM226.51 443.88h1.45v1.45h-1.45zM229.12 443.88h1.45v1.45h-1.45zM231.72 443.88h1.45v1.45h-1.45zM234.33 443.88h1.45v1.45h-1.45zM236.86 443h1.6v3.2h-1.6zM236.91 439.85h1.5v1.5h-1.5zM236.91 447.85h1.5v1.5h-1.5zM239.54 443.88h1.45v1.45h-1.45zM242.14 443.88h1.45v1.45h-1.45zM244.75 443.88h1.45v1.45h-1.45zM247.35 443.88h1.45v1.45h-1.45zM249.96 443.88h1.45v1.45h-1.45zM252.56 443.88h1.45v1.45h-1.45zM255.17 443.88h1.45v1.45h-1.45zM257.77 443.88h1.45v1.45h-1.45zM260.38 443.88h1.45v1.45h-1.45zM262.91 443h1.6v3.2h-1.6zM262.96 439.85h1.5v1.5h-1.5zM262.96 447.85h1.5v1.5h-1.5zM265.59 443.88h1.45v1.45h-1.45zM268.19 443.88h1.45v1.45h-1.45zM270.8 443.88h1.45v1.45h-1.45zM273.4 443.88h1.45v1.45h-1.45zM276.01 443.88h1.45v1.45h-1.45zM278.61 443.88h1.45v1.45h-1.45zM281.22 443.88h1.45v1.45h-1.45zM283.82 443.88h1.45v1.45h-1.45zM286.43 443.88h1.45v1.45h-1.45zM288.96 443h1.6v3.2h-1.6zM289.01 439.85h1.5v1.5h-1.5zM289.01 447.85h1.5v1.5h-1.5zM291.64 443.88h1.45v1.45h-1.45zM294.25 443.88h1.45v1.45h-1.45zM296.85 443.88h1.45v1.45h-1.45zM299.46 443.88h1.45v1.45h-1.45zM302.06 443.88h1.45v1.45h-1.45zM304.67 443.88h1.45v1.45h-1.45zM307.27 443.88h1.45v1.45h-1.45zM309.88 443.88h1.45v1.45h-1.45zM312.48 443.88h1.45v1.45h-1.45zM315.01 443h1.6v3.2h-1.6zM315.06 439.85h1.5v1.5h-1.5zM315.06 447.85h1.5v1.5h-1.5zM317.69 443.88h1.45v1.45h-1.45zM320.3 443.88h1.45v1.45h-1.45zM322.9 443.88h1.45v1.45h-1.45zM325.51 443.88h1.45v1.45h-1.45zM328.11 443.88h1.45v1.45h-1.45zM330.72 443.88h1.45v1.45h-1.45zM333.32 443.88h1.45v1.45h-1.45zM335.93 443.88h1.45v1.45h-1.45zM338.53 443.88h1.45v1.45h-1.45zM341.06 443h1.6v3.2h-1.6zM341.11 439.85h1.5v1.5h-1.5zM341.11 447.85h1.5v1.5h-1.5zM343.74 443.88h1.45v1.45h-1.45zM346.35 443.88h1.45v1.45h-1.45zM348.95 443.88h1.45v1.45h-1.45zM351.56 443.88h1.45v1.45h-1.45zM354.16 443.88h1.45v1.45h-1.45zM356.77 443.88h1.45v1.45h-1.45zM359.38 443.88h1.45v1.45h-1.45zM361.98 443.88h1.45v1.45h-1.45zM364.59 443.88h1.45v1.45h-1.45zM367.12 443h1.6v3.2h-1.6zM367.17 439.85h1.5v1.5h-1.5zM367.17 447.85h1.5v1.5h-1.5zM369.8 443.88h1.45v1.45h-1.45zM372.4 443.88h1.45v1.45h-1.45zM375.01 443.88h1.45v1.45h-1.45zM377.61 443.88h1.45v1.45h-1.45zM380.22 443.88h1.45v1.45h-1.45zM382.82 443.88h1.45v1.45h-1.45zM385.43 443.88h1.45v1.45h-1.45zM388.03 443.88h1.45v1.45h-1.45zM390.64 443.88h1.45v1.45h-1.45zM393.17 443h1.6v3.2h-1.6zM393.22 439.85h1.5v1.5h-1.5zM393.22 447.85h1.5v1.5h-1.5zM395.85 443.88h1.45v1.45h-1.45zM398.45 443.88h1.45v1.45h-1.45zM401.06 443.88h1.45v1.45h-1.45zM403.66 443.88h1.45v1.45h-1.45zM406.27 443.88h1.45v1.45h-1.45zM408.87 443.88h1.45v1.45h-1.45zM411.48 443.88h1.45v1.45h-1.45zM414.08 443.88h1.45v1.45h-1.45zM416.69 443.88h1.45v1.45h-1.45zM419.22 443h1.6v3.2h-1.6zM419.27 439.85h1.5v1.5h-1.5zM419.27 447.85h1.5v1.5h-1.5zM421.9 443.88h1.45v1.45h-1.45zM424.51 443.88h1.45v1.45h-1.45zM427.11 443.88h1.45v1.45h-1.45zM429.72 443.88h1.45v1.45h-1.45zM432.32 443.88h1.45v1.45h-1.45zM434.93 443.88h1.45v1.45h-1.45zM437.53 443.88h1.45v1.45h-1.45zM440.14 443.88h1.45v1.45h-1.45zM442.74 443.88h1.45v1.45h-1.45zM445.27 443h1.6v3.2h-1.6zM445.32 439.85h1.5v1.5h-1.5zM445.32 447.85h1.5v1.5h-1.5zM447.95 443.88h1.45v1.45h-1.45zM450.56 443.88h1.45v1.45h-1.45zM453.16 443.88h1.45v1.45h-1.45zM455.77 443.88h1.45v1.45h-1.45zM458.37 443.88h1.45v1.45h-1.45zM460.98 443.88h1.45v1.45h-1.45zM463.58 443.88h1.45v1.45h-1.45zM466.19 443.88h1.45v1.45h-1.45zM468.79 443.88h1.45v1.45h-1.45zM471.32 443h1.6v3.2h-1.6zM471.37 439.85h1.5v1.5h-1.5zM471.37 447.85h1.5v1.5h-1.5zM474 443.88h1.45v1.45h-1.45zM476.61 443.88h1.45v1.45h-1.45zM479.21 443.88h1.45v1.45h-1.45zM481.82 443.88h1.45v1.45h-1.45zM484.43 443.88h1.45v1.45h-1.45zM487.03 443.88h1.45v1.45h-1.45zM489.64 443.88h1.45v1.45h-1.45zM492.24 443.88h1.45v1.45h-1.45zM494.85 443.88h1.45v1.45h-1.45zM497.38 443h1.6v3.2h-1.6zM497.43 439.85h1.5v1.5h-1.5zM497.43 447.85h1.5v1.5h-1.5zM500.06 443.88h1.45v1.45h-1.45zM502.66 443.88h1.45v1.45h-1.45zM505.27 443.88h1.45v1.45h-1.45zM507.87 443.88h1.45v1.45h-1.45zM510.48 443.88h1.45v1.45h-1.45zM513.08 443.88h1.45v1.45h-1.45zM515.69 443.88h1.45v1.45h-1.45zM518.29 443.88h1.45v1.45h-1.45zM520.9 443.88h1.45v1.45h-1.45zM523.43 443h1.6v3.2h-1.6zM523.48 439.85h1.5v1.5h-1.5zM523.48 447.85h1.5v1.5h-1.5zM526.11 443.88h1.45v1.45h-1.45zM528.71 443.88h1.45v1.45h-1.45zM531.32 443.88h1.45v1.45h-1.45zM533.92 443.88h1.45v1.45h-1.45zM536.53 443.88h1.45v1.45h-1.45zM539.13 443.88h1.45v1.45h-1.45zM541.74 443.88h1.45v1.45h-1.45zM544.34 443.88h1.45v1.45h-1.45zM546.95 443.88h1.45v1.45h-1.45zM549.48 443h1.6v3.2h-1.6zM549.53 439.85h1.5v1.5h-1.5zM549.53 447.85h1.5v1.5h-1.5zM552.16 443.88h1.45v1.45h-1.45zM554.77 443.88h1.45v1.45h-1.45zM557.37 443.88h1.45v1.45h-1.45zM559.98 443.88h1.45v1.45h-1.45zM562.58 443.88h1.45v1.45h-1.45zM565.19 443.88h1.45v1.45h-1.45zM567.79 443.88h1.45v1.45h-1.45zM570.4 443.88h1.45v1.45h-1.45zM573 443.88h1.45v1.45h-1.45zM575.53 443h1.6v3.2h-1.6zM575.58 439.85h1.5v1.5h-1.5zM575.58 447.85h1.5v1.5h-1.5zM578.21 443.88h1.45v1.45h-1.45zM580.82 443.88h1.45v1.45h-1.45zM583.42 443.88h1.45v1.45h-1.45zM586.03 443.88h1.45v1.45h-1.45zM588.63 443.88h1.45v1.45h-1.45zM591.24 443.88h1.45v1.45h-1.45zM593.84 443.88h1.45v1.45h-1.45zM596.45 443.88h1.45v1.45h-1.45zM599.05 443.88h1.45v1.45h-1.45zM601.58 443h1.6v3.2h-1.6zM601.63 439.85h1.5v1.5h-1.5zM601.63 447.85h1.5v1.5h-1.5zM604.26 443.88h1.45v1.45h-1.45zM606.87 443.88h1.45v1.45h-1.45zM609.47 443.88h1.45v1.45h-1.45zM612.08 443.88h1.45v1.45h-1.45zM614.68 443.88h1.45v1.45h-1.45zM617.29 443.88h1.45v1.45h-1.45zM619.9 443.88h1.45v1.45h-1.45zM622.5 443.88h1.45v1.45h-1.45zM625.11 443.88h1.45v1.45h-1.45zM627.64 443h1.6v3.2h-1.6zM627.69 439.85h1.5v1.5h-1.5zM627.69 447.85h1.5v1.5h-1.5zM630.32 443.88h1.45v1.45h-1.45zM632.92 443.88h1.45v1.45h-1.45zM635.53 443.88h1.45v1.45h-1.45zM638.13 443.88h1.45v1.45h-1.45zM640.74 443.88h1.45v1.45h-1.45zM643.34 443.88h1.45v1.45h-1.45zM645.95 443.88h1.45v1.45h-1.45zM648.55 443.88h1.45v1.45h-1.45zM651.16 443.88h1.45v1.45h-1.45zM653.69 443h1.6v3.2h-1.6zM653.74 439.85h1.5v1.5h-1.5zM653.74 447.85h1.5v1.5h-1.5zM656.37 443.88h1.45v1.45h-1.45zM658.97 443.88h1.45v1.45h-1.45zM661.58 443.88h1.45v1.45h-1.45zM664.18 443.88h1.45v1.45h-1.45zM666.79 443.88h1.45v1.45h-1.45zM669.39 443.88h1.45v1.45h-1.45zM672 443.88h1.45v1.45h-1.45zM674.6 443.88h1.45v1.45h-1.45zM677.21 443.88h1.45v1.45h-1.45zM679.74 443.8h1.6v1.6h-1.6zM682.42 443.88h1.45v1.45h-1.45zM685.03 443.88h1.45v1.45h-1.45zM687.63 443.88h1.45v1.45h-1.45zM690.24 443.88h1.45v1.45h-1.45zM692.84 443.88h1.45v1.45h-1.45zM695.45 443.88h1.45v1.45h-1.45zM698.05 443.88h1.45v1.45h-1.45zM700.66 443.88h1.45v1.45h-1.45zM703.26 443.88h1.45v1.45h-1.45zM705.79 443h1.6v3.2h-1.6zM705.84 439.85h1.5v1.5h-1.5zM705.84 447.85h1.5v1.5h-1.5zM708.47 443.88h1.45v1.45h-1.45zM711.08 443.88h1.45v1.45h-1.45zM713.68 443.88h1.45v1.45h-1.45zM716.29 443.88h1.45v1.45h-1.45zM718.89 443.88h1.45v1.45h-1.45zM721.5 443.88h1.45v1.45h-1.45zM724.1 443.88h1.45v1.45h-1.45zM726.71 443.88h1.45v1.45h-1.45zM729.31 443.88h1.45v1.45h-1.45zM731.84 443h1.6v3.2h-1.6zM731.89 439.85h1.5v1.5h-1.5zM731.89 447.85h1.5v1.5h-1.5zM734.52 443.88h1.45v1.45h-1.45zM737.13 443.88h1.45v1.45h-1.45zM739.73 443.88h1.45v1.45h-1.45zM742.34 443.88h1.45v1.45h-1.45zM744.94 443.88h1.45v1.45h-1.45zM747.55 443.88h1.45v1.45h-1.45zM750.16 443.88h1.45v1.45h-1.45zM752.76 443.88h1.45v1.45h-1.45zM755.37 443.88h1.45v1.45h-1.45zM757.9 443h1.6v3.2h-1.6zM757.95 439.85h1.5v1.5h-1.5zM757.95 447.85h1.5v1.5h-1.5zM760.58 443.88h1.45v1.45h-1.45zM763.18 443.88h1.45v1.45h-1.45zM765.79 443.88h1.45v1.45h-1.45zM768.39 443.88h1.45v1.45h-1.45zM771 443.88h1.45v1.45h-1.45zM773.6 443.88h1.45v1.45h-1.45zM776.21 443.88h1.45v1.45h-1.45zM778.81 443.88h1.45v1.45h-1.45zM781.42 443.88h1.45v1.45h-1.45zM783.95 443h1.6v3.2h-1.6zM784 439.85h1.5v1.5h-1.5zM784 447.85h1.5v1.5h-1.5zM786.63 443.88h1.45v1.45h-1.45zM789.23 443.88h1.45v1.45h-1.45zM791.84 443.88h1.45v1.45h-1.45zM794.44 443.88h1.45v1.45h-1.45zM797.05 443.88h1.45v1.45h-1.45zM799.65 443.88h1.45v1.45h-1.45zM802.26 443.88h1.45v1.45h-1.45zM804.86 443.88h1.45v1.45h-1.45zM807.47 443.88h1.45v1.45h-1.45zM810 443h1.6v3.2h-1.6zM810.05 439.85h1.5v1.5h-1.5zM810.05 447.85h1.5v1.5h-1.5zM812.68 443.88h1.45v1.45h-1.45zM815.29 443.88h1.45v1.45h-1.45zM817.89 443.88h1.45v1.45h-1.45zM820.5 443.88h1.45v1.45h-1.45zM823.1 443.88h1.45v1.45h-1.45zM825.71 443.88h1.45v1.45h-1.45zM828.31 443.88h1.45v1.45h-1.45zM830.92 443.88h1.45v1.45h-1.45zM833.52 443.88h1.45v1.45h-1.45zM836.05 443h1.6v3.2h-1.6zM836.1 439.85h1.5v1.5h-1.5zM836.1 447.85h1.5v1.5h-1.5zM838.73 443.88h1.45v1.45h-1.45zM841.34 443.88h1.45v1.45h-1.45zM843.94 443.88h1.45v1.45h-1.45zM846.55 443.88h1.45v1.45h-1.45zM849.15 443.88h1.45v1.45h-1.45zM851.76 443.88h1.45v1.45h-1.45zM854.36 443.88h1.45v1.45h-1.45zM856.97 443.88h1.45v1.45h-1.45zM859.57 443.88h1.45v1.45h-1.45zM862.1 443h1.6v3.2h-1.6zM862.15 439.85h1.5v1.5h-1.5zM862.15 447.85h1.5v1.5h-1.5zM864.78 443.88h1.45v1.45h-1.45zM867.39 443.88h1.45v1.45h-1.45zM869.99 443.88h1.45v1.45h-1.45zM872.6 443.88h1.45v1.45h-1.45zM875.21 443.88h1.45v1.45h-1.45zM877.81 443.88h1.45v1.45h-1.45zM880.42 443.88h1.45v1.45h-1.45zM883.02 443.88h1.45v1.45h-1.45zM885.63 443.88h1.45v1.45h-1.45zM888.16 443h1.6v3.2h-1.6zM888.21 439.85h1.5v1.5h-1.5zM888.21 447.85h1.5v1.5h-1.5zM890.84 443.88h1.45v1.45h-1.45zM893.44 443.88h1.45v1.45h-1.45zM896.05 443.88h1.45v1.45h-1.45zM898.65 443.88h1.45v1.45h-1.45zM901.26 443.88h1.45v1.45h-1.45zM903.86 443.88h1.45v1.45h-1.45zM906.47 443.88h1.45v1.45h-1.45zM909.07 443.88h1.45v1.45h-1.45zM911.68 443.88h1.45v1.45h-1.45zM914.21 443h1.6v3.2h-1.6zM914.26 439.85h1.5v1.5h-1.5zM914.26 447.85h1.5v1.5h-1.5zM916.89 443.88h1.45v1.45h-1.45zM919.49 443.88h1.45v1.45h-1.45zM922.1 443.88h1.45v1.45h-1.45zM924.7 443.88h1.45v1.45h-1.45zM927.31 443.88h1.45v1.45h-1.45zM929.91 443.88h1.45v1.45h-1.45zM932.52 443.88h1.45v1.45h-1.45zM935.12 443.88h1.45v1.45h-1.45zM937.73 443.88h1.45v1.45h-1.45zM940.26 443h1.6v3.2h-1.6zM940.31 439.85h1.5v1.5h-1.5zM940.31 447.85h1.5v1.5h-1.5zM942.94 443.88h1.45v1.45h-1.45zM945.55 443.88h1.45v1.45h-1.45zM948.15 443.88h1.45v1.45h-1.45zM950.76 443.88h1.45v1.45h-1.45zM953.36 443.88h1.45v1.45h-1.45zM955.97 443.88h1.45v1.45h-1.45zM958.57 443.88h1.45v1.45h-1.45zM961.18 443.88h1.45v1.45h-1.45zM963.78 443.88h1.45v1.45h-1.45zM966.31 443h1.6v3.2h-1.6zM966.36 439.85h1.5v1.5h-1.5zM966.36 447.85h1.5v1.5h-1.5zM968.99 443.88h1.45v1.45h-1.45zM971.6 443.88h1.45v1.45h-1.45zM974.2 443.88h1.45v1.45h-1.45zM976.81 443.88h1.45v1.45h-1.45zM979.41 443.88h1.45v1.45h-1.45zM982.02 443.88h1.45v1.45h-1.45zM984.62 443.88h1.45v1.45h-1.45zM987.23 443.88h1.45v1.45h-1.45zM989.83 443.88h1.45v1.45h-1.45zM992.36 443h1.6v3.2h-1.6zM992.41 439.85h1.5v1.5h-1.5zM992.41 447.85h1.5v1.5h-1.5zM995.04 443.88h1.45v1.45h-1.45zM997.65 443.88h1.45v1.45h-1.45zM1000.25 443.88h1.45v1.45h-1.45zM1002.86 443.88h1.45v1.45h-1.45zM1005.47 443.88h1.45v1.45h-1.45zM1008.07 443.88h1.45v1.45h-1.45zM1010.68 443.88h1.45v1.45h-1.45zM1013.28 443.88h1.45v1.45h-1.45zM1015.89 443.88h1.45v1.45h-1.45zM1018.42 443h1.6v3.2h-1.6zM1018.47 439.85h1.5v1.5h-1.5zM1018.47 447.85h1.5v1.5h-1.5zM1021.1 443.88h1.45v1.45h-1.45zM1023.7 443.88h1.45v1.45h-1.45zM1026.31 443.88h1.45v1.45h-1.45zM1028.91 443.88h1.45v1.45h-1.45zM1031.52 443.88h1.45v1.45h-1.45zM1034.12 443.88h1.45v1.45h-1.45zM1036.73 443.88h1.45v1.45h-1.45zM1039.33 443.88h1.45v1.45h-1.45zM1041.94 443.88h1.45v1.45h-1.45zM1044.47 443h1.6v3.2h-1.6zM1044.52 439.85h1.5v1.5h-1.5zM1044.52 447.85h1.5v1.5h-1.5zM1047.15 443.88h1.45v1.45h-1.45zM1049.75 443.88h1.45v1.45h-1.45zM1052.36 443.88h1.45v1.45h-1.45zM1054.96 443.88h1.45v1.45h-1.45zM1057.57 443.88h1.45v1.45h-1.45zM1060.17 443.88h1.45v1.45h-1.45zM1062.78 443.88h1.45v1.45h-1.45zM1065.38 443.88h1.45v1.45h-1.45zM1067.99 443.88h1.45v1.45h-1.45zM1070.52 443h1.6v3.2h-1.6zM1070.57 439.85h1.5v1.5h-1.5zM1070.57 447.85h1.5v1.5h-1.5zM1073.2 443.88h1.45v1.45h-1.45zM1075.81 443.88h1.45v1.45h-1.45zM1078.41 443.88h1.45v1.45h-1.45zM1081.02 443.88h1.45v1.45h-1.45zM1083.62 443.88h1.45v1.45h-1.45zM1086.23 443.88h1.45v1.45h-1.45zM1088.83 443.88h1.45v1.45h-1.45zM1091.44 443.88h1.45v1.45h-1.45zM1094.04 443.88h1.45v1.45h-1.45zM1096.57 443h1.6v3.2h-1.6zM1096.62 439.85h1.5v1.5h-1.5zM1096.62 447.85h1.5v1.5h-1.5zM1099.25 443.88h1.45v1.45h-1.45zM1101.86 443.88h1.45v1.45h-1.45zM1104.46 443.88h1.45v1.45h-1.45zM1107.07 443.88h1.45v1.45h-1.45zM1109.67 443.88h1.45v1.45h-1.45zM1112.28 443.88h1.45v1.45h-1.45zM1114.88 443.88h1.45v1.45h-1.45zM1117.49 443.88h1.45v1.45h-1.45zM1120.09 443.88h1.45v1.45h-1.45zM1122.62 443h1.6v3.2h-1.6zM1122.67 439.85h1.5v1.5h-1.5zM1122.67 447.85h1.5v1.5h-1.5zM1125.3 443.88h1.45v1.45h-1.45zM1127.91 443.88h1.45v1.45h-1.45zM1130.51 443.88h1.45v1.45h-1.45zM1133.12 443.88h1.45v1.45h-1.45zM1135.72 443.88h1.45v1.45h-1.45zM1138.33 443.88h1.45v1.45h-1.45zM1140.94 443.88h1.45v1.45h-1.45zM1143.54 443.88h1.45v1.45h-1.45zM1146.15 443.88h1.45v1.45h-1.45zM1148.68 443h1.6v3.2h-1.6zM1148.73 439.85h1.5v1.5h-1.5zM1148.73 447.85h1.5v1.5h-1.5zM1151.36 443.88h1.45v1.45h-1.45zM1153.96 443.88h1.45v1.45h-1.45zM1156.57 443.88h1.45v1.45h-1.45zM1159.17 443.88h1.45v1.45h-1.45zM1161.78 443.88h1.45v1.45h-1.45zM1164.38 443.88h1.45v1.45h-1.45zM1166.99 443.88h1.45v1.45h-1.45zM1169.59 443.88h1.45v1.45h-1.45zM1172.2 443.88h1.45v1.45h-1.45zM1174.73 443h1.6v3.2h-1.6zM1174.78 439.85h1.5v1.5h-1.5zM1174.78 447.85h1.5v1.5h-1.5zM1177.41 443.88h1.45v1.45h-1.45zM1180.01 443.88h1.45v1.45h-1.45zM1182.62 443.88h1.45v1.45h-1.45zM1185.22 443.88h1.45v1.45h-1.45zM1187.83 443.88h1.45v1.45h-1.45zM1190.43 443.88h1.45v1.45h-1.45zM1193.04 443.88h1.45v1.45h-1.45zM1195.64 443.88h1.45v1.45h-1.45zM1198.25 443.88h1.45v1.45h-1.45zM1200.78 443h1.6v3.2h-1.6zM1200.83 439.85h1.5v1.5h-1.5zM1200.83 447.85h1.5v1.5h-1.5zM1203.46 443.88h1.45v1.45h-1.45zM1206.07 443.88h1.45v1.45h-1.45zM1208.67 443.88h1.45v1.45h-1.45zM1211.28 443.88h1.45v1.45h-1.45zM1213.88 443.88h1.45v1.45h-1.45zM1216.49 443.88h1.45v1.45h-1.45zM1219.09 443.88h1.45v1.45h-1.45zM1221.7 443.88h1.45v1.45h-1.45zM1224.3 443.88h1.45v1.45h-1.45zM1226.83 443h1.6v3.2h-1.6zM1226.88 439.85h1.5v1.5h-1.5zM1226.88 447.85h1.5v1.5h-1.5zM1229.51 443.88h1.45v1.45h-1.45zM1232.12 443.88h1.45v1.45h-1.45zM1234.72 443.88h1.45v1.45h-1.45zM1237.33 443.88h1.45v1.45h-1.45zM1239.93 443.88h1.45v1.45h-1.45zM1242.54 443.88h1.45v1.45h-1.45zM1245.14 443.88h1.45v1.45h-1.45zM1247.75 443.88h1.45v1.45h-1.45zM1250.35 443.88h1.45v1.45h-1.45zM1252.88 443h1.6v3.2h-1.6zM1252.93 439.85h1.5v1.5h-1.5zM1252.93 447.85h1.5v1.5h-1.5zM1255.56 443.88h1.45v1.45h-1.45zM1258.17 443.88h1.45v1.45h-1.45zM1260.77 443.88h1.45v1.45h-1.45zM1263.38 443.88h1.45v1.45h-1.45zM1265.98 443.88h1.45v1.45h-1.45zM1268.59 443.88h1.45v1.45h-1.45zM1271.2 443.88h1.45v1.45h-1.45zM1273.8 443.88h1.45v1.45h-1.45zM1276.41 443.88h1.45v1.45h-1.45zM1278.94 443h1.6v3.2h-1.6zM1278.99 439.85h1.5v1.5h-1.5zM1278.99 447.85h1.5v1.5h-1.5zM1281.62 443.88h1.45v1.45h-1.45zM1284.22 443.88h1.45v1.45h-1.45zM1286.83 443.88h1.45v1.45h-1.45zM1289.43 443.88h1.45v1.45h-1.45zM1292.04 443.88h1.45v1.45h-1.45zM1294.64 443.88h1.45v1.45h-1.45zM1297.25 443.88h1.45v1.45h-1.45zM1299.85 443.88h1.45v1.45h-1.45zM1302.46 443.88h1.45v1.45h-1.45zM1304.99 443h1.6v3.2h-1.6zM1305.04 439.85h1.5v1.5h-1.5zM1305.04 447.85h1.5v1.5h-1.5zM1307.67 443.88h1.45v1.45h-1.45zM1310.27 443.88h1.45v1.45h-1.45zM1312.88 443.88h1.45v1.45h-1.45zM1315.48 443.88h1.45v1.45h-1.45zM1318.09 443.88h1.45v1.45h-1.45zM1320.69 443.88h1.45v1.45h-1.45zM1323.3 443.88h1.45v1.45h-1.45zM1325.9 443.88h1.45v1.45h-1.45zM1328.51 443.88h1.45v1.45h-1.45zM679.81 23.45h1.45v1.45h-1.45zM679.81 26.27h1.45v1.45h-1.45zM679.81 29.09h1.45v1.45h-1.45zM679.81 31.91h1.45v1.45h-1.45zM679.81 34.73h1.45v1.45h-1.45zM678.94 37.48h3.2v1.6h-3.2zM675.79 37.53h1.5v1.5h-1.5zM683.79 37.53h1.5v1.5h-1.5zM679.81 40.38h1.45v1.45h-1.45zM679.81 43.2h1.45v1.45h-1.45zM679.81 46.02h1.45v1.45h-1.45zM679.81 48.84h1.45v1.45h-1.45zM679.81 51.66h1.45v1.45h-1.45zM678.94 54.41h3.2v1.6h-3.2zM675.79 54.46h1.5v1.5h-1.5zM683.79 54.46h1.5v1.5h-1.5zM679.81 57.31h1.45v1.45h-1.45zM679.81 60.13h1.45v1.45h-1.45zM679.81 62.95h1.45v1.45h-1.45zM679.81 65.77h1.45v1.45h-1.45zM679.81 68.59h1.45v1.45h-1.45zM678.94 71.34h3.2v1.6h-3.2zM675.79 71.39h1.5v1.5h-1.5zM683.79 71.39h1.5v1.5h-1.5zM679.81 74.24h1.45v1.45h-1.45zM679.81 77.06h1.45v1.45h-1.45zM679.81 79.88h1.45v1.45h-1.45zM679.81 82.7h1.45v1.45h-1.45zM679.81 85.52h1.45v1.45h-1.45zM678.94 88.27h3.2v1.6h-3.2zM675.79 88.32h1.5v1.5h-1.5zM683.79 88.32h1.5v1.5h-1.5zM679.81 91.17h1.45v1.45h-1.45zM679.81 93.99h1.45v1.45h-1.45zM679.81 96.81h1.45v1.45h-1.45zM679.81 99.63h1.45v1.45h-1.45zM679.81 102.45h1.45v1.45h-1.45zM678.94 105.2h3.2v1.6h-3.2zM675.79 105.25h1.5v1.5h-1.5zM683.79 105.25h1.5v1.5h-1.5zM679.81 108.1h1.45v1.45h-1.45zM679.81 110.92h1.45v1.45h-1.45zM679.81 113.74h1.45v1.45h-1.45zM679.81 116.56h1.45v1.45h-1.45zM679.81 119.38h1.45v1.45h-1.45zM678.94 122.13h3.2v1.6h-3.2zM675.79 122.18h1.5v1.5h-1.5zM683.79 122.18h1.5v1.5h-1.5zM679.81 125.03h1.45v1.45h-1.45zM679.81 127.85h1.45v1.45h-1.45zM679.81 130.67h1.45v1.45h-1.45zM679.81 133.49h1.45v1.45h-1.45zM679.81 136.31h1.45v1.45h-1.45zM678.94 139.06h3.2v1.6h-3.2zM675.79 139.11h1.5v1.5h-1.5zM683.79 139.11h1.5v1.5h-1.5zM679.81 141.96h1.45v1.45h-1.45zM679.81 144.78h1.45v1.45h-1.45zM679.81 147.6h1.45v1.45h-1.45zM679.81 150.42h1.45v1.45h-1.45zM679.81 153.24h1.45v1.45h-1.45zM678.94 155.99h3.2v1.6h-3.2zM675.79 156.04h1.5v1.5h-1.5zM683.79 156.04h1.5v1.5h-1.5zM679.81 158.89h1.45v1.45h-1.45zM679.81 161.71h1.45v1.45h-1.45zM679.81 164.53h1.45v1.45h-1.45zM679.81 167.35h1.45v1.45h-1.45zM679.81 170.17h1.45v1.45h-1.45zM678.94 172.92h3.2v1.6h-3.2zM675.79 172.97h1.5v1.5h-1.5zM683.79 172.97h1.5v1.5h-1.5zM679.81 175.82h1.45v1.45h-1.45zM679.81 178.64h1.45v1.45h-1.45zM679.81 181.46h1.45v1.45h-1.45zM679.81 184.28h1.45v1.45h-1.45zM679.81 187.1h1.45v1.45h-1.45zM678.94 189.85h3.2v1.6h-3.2zM675.79 189.9h1.5v1.5h-1.5zM683.79 189.9h1.5v1.5h-1.5zM679.81 192.75h1.45v1.45h-1.45zM679.81 195.57h1.45v1.45h-1.45zM679.81 198.39h1.45v1.45h-1.45zM679.81 201.21h1.45v1.45h-1.45zM679.81 204.03h1.45v1.45h-1.45zM678.94 206.78h3.2v1.6h-3.2zM675.79 206.83h1.5v1.5h-1.5zM683.79 206.83h1.5v1.5h-1.5zM679.81 209.68h1.45v1.45h-1.45zM679.81 212.5h1.45v1.45h-1.45zM679.81 215.32h1.45v1.45h-1.45zM679.81 218.14h1.45v1.45h-1.45zM679.81 220.96h1.45v1.45h-1.45zM678.94 223.71h3.2v1.6h-3.2zM675.79 223.76h1.5v1.5h-1.5zM683.79 223.76h1.5v1.5h-1.5zM679.81 226.61h1.45v1.45h-1.45zM679.81 229.43h1.45v1.45h-1.45zM679.81 232.25h1.45v1.45h-1.45zM679.81 235.07h1.45v1.45h-1.45zM679.81 237.89h1.45v1.45h-1.45zM678.94 240.64h3.2v1.6h-3.2zM675.79 240.69h1.5v1.5h-1.5zM683.79 240.69h1.5v1.5h-1.5zM679.81 243.54h1.45v1.45h-1.45zM679.81 246.36h1.45v1.45h-1.45zM679.81 249.18h1.45v1.45h-1.45zM679.81 252h1.45v1.45h-1.45zM679.81 254.82h1.45v1.45h-1.45zM678.94 257.57h3.2v1.6h-3.2zM675.79 257.62h1.5v1.5h-1.5zM683.79 257.62h1.5v1.5h-1.5zM679.81 260.47h1.45v1.45h-1.45zM679.81 263.29h1.45v1.45h-1.45zM679.81 266.11h1.45v1.45h-1.45zM679.81 268.93h1.45v1.45h-1.45zM679.81 271.75h1.45v1.45h-1.45zM678.94 274.5h3.2v1.6h-3.2zM675.79 274.55h1.5v1.5h-1.5zM683.79 274.55h1.5v1.5h-1.5zM679.81 277.4h1.45v1.45h-1.45zM679.81 280.22h1.45v1.45h-1.45zM679.81 283.04h1.45v1.45h-1.45zM679.81 285.86h1.45v1.45h-1.45zM679.81 288.68h1.45v1.45h-1.45zM678.94 291.43h3.2v1.6h-3.2zM675.79 291.48h1.5v1.5h-1.5zM683.79 291.48h1.5v1.5h-1.5zM679.81 294.33h1.45v1.45h-1.45zM679.81 297.15h1.45v1.45h-1.45zM679.81 299.97h1.45v1.45h-1.45zM679.81 302.79h1.45v1.45h-1.45zM679.81 305.61h1.45v1.45h-1.45zM678.94 308.36h3.2v1.6h-3.2zM675.79 308.41h1.5v1.5h-1.5zM683.79 308.41h1.5v1.5h-1.5zM679.81 311.26h1.45v1.45h-1.45zM679.81 314.08h1.45v1.45h-1.45zM679.81 316.9h1.45v1.45h-1.45zM679.81 319.72h1.45v1.45h-1.45zM679.81 322.54h1.45v1.45h-1.45zM678.94 325.29h3.2v1.6h-3.2zM675.79 325.34h1.5v1.5h-1.5zM683.79 325.34h1.5v1.5h-1.5zM679.81 328.19h1.45v1.45h-1.45zM679.81 331.01h1.45v1.45h-1.45zM679.81 333.83h1.45v1.45h-1.45zM679.81 336.65h1.45v1.45h-1.45zM679.81 339.47h1.45v1.45h-1.45zM678.94 342.22h3.2v1.6h-3.2zM675.79 342.27h1.5v1.5h-1.5zM683.79 342.27h1.5v1.5h-1.5zM679.81 345.12h1.45v1.45h-1.45zM679.81 347.94h1.45v1.45h-1.45zM679.81 350.76h1.45v1.45h-1.45zM679.81 353.58h1.45v1.45h-1.45zM679.81 356.4h1.45v1.45h-1.45zM678.94 359.15h3.2v1.6h-3.2zM675.79 359.2h1.5v1.5h-1.5zM683.79 359.2h1.5v1.5h-1.5zM679.81 362.05h1.45v1.45h-1.45zM679.81 364.87h1.45v1.45h-1.45zM679.81 367.69h1.45v1.45h-1.45zM679.81 370.51h1.45v1.45h-1.45zM679.81 373.33h1.45v1.45h-1.45zM678.94 376.08h3.2v1.6h-3.2zM675.79 376.13h1.5v1.5h-1.5zM683.79 376.13h1.5v1.5h-1.5zM679.81 378.98h1.45v1.45h-1.45zM679.81 381.8h1.45v1.45h-1.45zM679.81 384.62h1.45v1.45h-1.45zM679.81 387.44h1.45v1.45h-1.45zM679.81 390.26h1.45v1.45h-1.45zM678.94 393.01h3.2v1.6h-3.2zM675.79 393.06h1.5v1.5h-1.5zM683.79 393.06h1.5v1.5h-1.5zM679.81 395.91h1.45v1.45h-1.45zM679.81 398.73h1.45v1.45h-1.45zM679.81 401.55h1.45v1.45h-1.45zM679.81 404.37h1.45v1.45h-1.45zM679.81 407.19h1.45v1.45h-1.45zM678.94 409.94h3.2v1.6h-3.2zM675.79 409.99h1.5v1.5h-1.5zM683.79 409.99h1.5v1.5h-1.5zM679.81 412.84h1.45v1.45h-1.45zM679.81 415.66h1.45v1.45h-1.45zM679.81 418.48h1.45v1.45h-1.45zM679.81 421.3h1.45v1.45h-1.45zM679.81 424.12h1.45v1.45h-1.45zM678.94 426.87h3.2v1.6h-3.2zM675.79 426.92h1.5v1.5h-1.5zM683.79 426.92h1.5v1.5h-1.5zM679.81 429.77h1.45v1.45h-1.45zM679.81 432.59h1.45v1.45h-1.45zM679.81 435.41h1.45v1.45h-1.45zM679.81 438.23h1.45v1.45h-1.45zM679.81 441.05h1.45v1.45h-1.45zM679.81 446.7h1.45v1.45h-1.45zM679.81 449.52h1.45v1.45h-1.45zM679.81 452.34h1.45v1.45h-1.45zM679.81 455.16h1.45v1.45h-1.45zM679.81 457.98h1.45v1.45h-1.45zM678.94 460.73h3.2v1.6h-3.2zM675.79 460.78h1.5v1.5h-1.5zM683.79 460.78h1.5v1.5h-1.5zM679.81 463.63h1.45v1.45h-1.45zM679.81 466.45h1.45v1.45h-1.45zM679.81 469.27h1.45v1.45h-1.45zM679.81 472.09h1.45v1.45h-1.45zM679.81 474.91h1.45v1.45h-1.45zM678.94 477.66h3.2v1.6h-3.2zM675.79 477.71h1.5v1.5h-1.5zM683.79 477.71h1.5v1.5h-1.5zM679.81 480.56h1.45v1.45h-1.45zM679.81 483.38h1.45v1.45h-1.45zM679.81 486.2h1.45v1.45h-1.45zM679.81 489.02h1.45v1.45h-1.45zM679.81 491.84h1.45v1.45h-1.45zM678.94 494.59h3.2v1.6h-3.2zM675.79 494.64h1.5v1.5h-1.5zM683.79 494.64h1.5v1.5h-1.5zM679.81 497.49h1.45v1.45h-1.45zM679.81 500.31h1.45v1.45h-1.45zM679.81 503.13h1.45v1.45h-1.45zM679.81 505.95h1.45v1.45h-1.45zM679.81 508.77h1.45v1.45h-1.45zM678.94 511.52h3.2v1.6h-3.2zM675.79 511.57h1.5v1.5h-1.5zM683.79 511.57h1.5v1.5h-1.5zM679.81 514.42h1.45v1.45h-1.45zM679.81 517.24h1.45v1.45h-1.45zM679.81 520.06h1.45v1.45h-1.45zM679.81 522.88h1.45v1.45h-1.45zM679.81 525.7h1.45v1.45h-1.45zM678.94 528.45h3.2v1.6h-3.2zM675.79 528.5h1.5v1.5h-1.5zM683.79 528.5h1.5v1.5h-1.5zM679.81 531.35h1.45v1.45h-1.45zM679.81 534.17h1.45v1.45h-1.45zM679.81 536.99h1.45v1.45h-1.45zM679.81 539.81h1.45v1.45h-1.45zM679.81 542.63h1.45v1.45h-1.45zM678.94 545.38h3.2v1.6h-3.2zM675.79 545.43h1.5v1.5h-1.5zM683.79 545.43h1.5v1.5h-1.5zM679.81 548.28h1.45v1.45h-1.45zM679.81 551.1h1.45v1.45h-1.45zM679.81 553.92h1.45v1.45h-1.45zM679.81 556.74h1.45v1.45h-1.45zM679.81 559.56h1.45v1.45h-1.45zM678.94 562.31h3.2v1.6h-3.2zM675.79 562.36h1.5v1.5h-1.5zM683.79 562.36h1.5v1.5h-1.5zM679.81 565.21h1.45v1.45h-1.45zM679.81 568.03h1.45v1.45h-1.45zM679.81 570.85h1.45v1.45h-1.45zM679.81 573.67h1.45v1.45h-1.45zM679.81 576.49h1.45v1.45h-1.45zM678.94 579.24h3.2v1.6h-3.2zM675.79 579.29h1.5v1.5h-1.5zM683.79 579.29h1.5v1.5h-1.5zM679.81 582.14h1.45v1.45h-1.45zM679.81 584.96h1.45v1.45h-1.45zM679.81 587.78h1.45v1.45h-1.45zM679.81 590.6h1.45v1.45h-1.45zM679.81 593.42h1.45v1.45h-1.45zM678.94 596.17h3.2v1.6h-3.2zM675.79 596.22h1.5v1.5h-1.5zM683.79 596.22h1.5v1.5h-1.5zM679.81 599.07h1.45v1.45h-1.45zM679.81 601.89h1.45v1.45h-1.45zM679.81 604.71h1.45v1.45h-1.45zM679.81 607.53h1.45v1.45h-1.45zM679.81 610.35h1.45v1.45h-1.45zM678.94 613.1h3.2v1.6h-3.2zM675.79 613.15h1.5v1.5h-1.5zM683.79 613.15h1.5v1.5h-1.5zM679.81 616h1.45v1.45h-1.45zM679.81 618.82h1.45v1.45h-1.45zM679.81 621.64h1.45v1.45h-1.45zM679.81 624.46h1.45v1.45h-1.45zM679.81 627.28h1.45v1.45h-1.45zM678.94 630.03h3.2v1.6h-3.2zM675.79 630.08h1.5v1.5h-1.5zM683.79 630.08h1.5v1.5h-1.5zM679.81 632.93h1.45v1.45h-1.45zM679.81 635.75h1.45v1.45h-1.45zM679.81 638.57h1.45v1.45h-1.45zM679.81 641.39h1.45v1.45h-1.45zM679.81 644.21h1.45v1.45h-1.45zM678.94 646.96h3.2v1.6h-3.2zM675.79 647.01h1.5v1.5h-1.5zM683.79 647.01h1.5v1.5h-1.5zM679.81 649.86h1.45v1.45h-1.45zM679.81 652.68h1.45v1.45h-1.45zM679.81 655.5h1.45v1.45h-1.45zM679.81 658.32h1.45v1.45h-1.45zM679.81 661.14h1.45v1.45h-1.45zM678.94 663.89h3.2v1.6h-3.2zM675.79 663.94h1.5v1.5h-1.5zM683.79 663.94h1.5v1.5h-1.5zM679.81 666.79h1.45v1.45h-1.45zM679.81 669.61h1.45v1.45h-1.45zM679.81 672.43h1.45v1.45h-1.45zM679.81 675.25h1.45v1.45h-1.45zM679.81 678.07h1.45v1.45h-1.45zM678.94 680.82h3.2v1.6h-3.2zM675.79 680.87h1.5v1.5h-1.5zM683.79 680.87h1.5v1.5h-1.5zM679.81 683.72h1.45v1.45h-1.45zM679.81 686.54h1.45v1.45h-1.45zM679.81 689.36h1.45v1.45h-1.45zM679.81 692.18h1.45v1.45h-1.45zM679.81 695h1.45v1.45h-1.45zM678.94 697.75h3.2v1.6h-3.2zM675.79 697.8h1.5v1.5h-1.5zM683.79 697.8h1.5v1.5h-1.5zM679.81 700.65h1.45v1.45h-1.45zM679.81 703.47h1.45v1.45h-1.45zM679.81 706.29h1.45v1.45h-1.45zM679.81 709.11h1.45v1.45h-1.45zM679.81 711.93h1.45v1.45h-1.45zM678.94 714.68h3.2v1.6h-3.2zM675.79 714.73h1.5v1.5h-1.5zM683.79 714.73h1.5v1.5h-1.5zM679.81 717.58h1.45v1.45h-1.45zM679.81 720.4h1.45v1.45h-1.45zM679.81 723.22h1.45v1.45h-1.45zM679.81 726.04h1.45v1.45h-1.45zM679.81 728.86h1.45v1.45h-1.45zM678.94 731.61h3.2v1.6h-3.2zM675.79 731.66h1.5v1.5h-1.5zM683.79 731.66h1.5v1.5h-1.5zM679.81 734.51h1.45v1.45h-1.45zM679.81 737.33h1.45v1.45h-1.45zM679.81 740.15h1.45v1.45h-1.45zM679.81 742.97h1.45v1.45h-1.45zM679.81 745.79h1.45v1.45h-1.45zM678.94 748.54h3.2v1.6h-3.2zM675.79 748.59h1.5v1.5h-1.5zM683.79 748.59h1.5v1.5h-1.5zM679.81 751.44h1.45v1.45h-1.45zM679.81 754.26h1.45v1.45h-1.45zM679.81 757.08h1.45v1.45h-1.45zM679.81 759.9h1.45v1.45h-1.45zM679.81 762.72h1.45v1.45h-1.45zM678.94 765.47h3.2v1.6h-3.2zM675.79 765.52h1.5v1.5h-1.5zM683.79 765.52h1.5v1.5h-1.5zM679.81 768.37h1.45v1.45h-1.45zM679.81 771.19h1.45v1.45h-1.45zM679.81 774.01h1.45v1.45h-1.45zM679.81 776.83h1.45v1.45h-1.45zM679.81 779.65h1.45v1.45h-1.45zM678.94 782.4h3.2v1.6h-3.2zM675.79 782.45h1.5v1.5h-1.5zM683.79 782.45h1.5v1.5h-1.5zM679.81 785.3h1.45v1.45h-1.45zM679.81 788.12h1.45v1.45h-1.45zM679.81 790.94h1.45v1.45h-1.45zM679.81 793.76h1.45v1.45h-1.45zM679.81 796.58h1.45v1.45h-1.45zM678.94 799.33h3.2v1.6h-3.2zM675.79 799.38h1.5v1.5h-1.5zM683.79 799.38h1.5v1.5h-1.5zM679.81 802.23h1.45v1.45h-1.45zM679.81 805.05h1.45v1.45h-1.45zM679.81 807.87h1.45v1.45h-1.45zM679.81 810.69h1.45v1.45h-1.45zM679.81 813.51h1.45v1.45h-1.45zM678.94 816.26h3.2v1.6h-3.2zM675.79 816.31h1.5v1.5h-1.5zM683.79 816.31h1.5v1.5h-1.5zM679.81 819.16h1.45v1.45h-1.45zM679.81 821.98h1.45v1.45h-1.45zM679.81 824.8h1.45v1.45h-1.45zM679.81 827.62h1.45v1.45h-1.45zM679.81 830.44h1.45v1.45h-1.45zM678.94 833.19h3.2v1.6h-3.2zM675.79 833.24h1.5v1.5h-1.5zM683.79 833.24h1.5v1.5h-1.5zM679.81 836.09h1.45v1.45h-1.45zM679.81 838.91h1.45v1.45h-1.45zM679.81 841.73h1.45v1.45h-1.45zM679.81 844.55h1.45v1.45h-1.45zM679.81 847.37h1.45v1.45h-1.45zM678.94 850.12h3.2v1.6h-3.2zM675.79 850.17h1.5v1.5h-1.5zM683.79 850.17h1.5v1.5h-1.5zM679.81 853.02h1.45v1.45h-1.45zM679.81 855.84h1.45v1.45h-1.45zM679.81 858.66h1.45v1.45h-1.45zM679.81 861.48h1.45v1.45h-1.45zM679.81 864.3h1.45v1.45h-1.45zM54.54 19.75h1.5v1.5h-1.5zM54.54 23.15h1.5v1.5h-1.5zM54.54 867.65h1.5v1.5h-1.5zM54.54 864.45h1.5v1.5h-1.5zM80.59 19.75h1.5v1.5h-1.5zM80.59 23.15h1.5v1.5h-1.5zM80.59 867.65h1.5v1.5h-1.5zM80.59 864.45h1.5v1.5h-1.5zM106.65 19.75h1.5v1.5h-1.5zM106.65 23.15h1.5v1.5h-1.5zM106.65 867.65h1.5v1.5h-1.5zM106.65 864.45h1.5v1.5h-1.5zM132.7 19.75h1.5v1.5h-1.5zM132.7 23.15h1.5v1.5h-1.5zM132.7 867.65h1.5v1.5h-1.5zM132.7 864.45h1.5v1.5h-1.5zM158.75 21.85h1.5v1.5h-1.5zM158.75 865.65h1.5v1.5h-1.5zM158.75 24.5h1.5v1.5h-1.5zM158.75 863h1.5v1.5h-1.5zM158.75 27.15h1.5v1.5h-1.5zM158.75 860.35h1.5v1.5h-1.5zM184.8 19.75h1.5v1.5h-1.5zM184.8 23.15h1.5v1.5h-1.5zM184.8 867.65h1.5v1.5h-1.5zM184.8 864.45h1.5v1.5h-1.5zM210.85 19.75h1.5v1.5h-1.5zM210.85 23.15h1.5v1.5h-1.5zM210.85 867.65h1.5v1.5h-1.5zM210.85 864.45h1.5v1.5h-1.5zM236.91 19.75h1.5v1.5h-1.5zM236.91 23.15h1.5v1.5h-1.5zM236.91 867.65h1.5v1.5h-1.5zM236.91 864.45h1.5v1.5h-1.5zM262.96 19.75h1.5v1.5h-1.5zM262.96 23.15h1.5v1.5h-1.5zM262.96 867.65h1.5v1.5h-1.5zM262.96 864.45h1.5v1.5h-1.5zM289.01 21.85h1.5v1.5h-1.5zM289.01 865.65h1.5v1.5h-1.5zM289.01 24.5h1.5v1.5h-1.5zM289.01 863h1.5v1.5h-1.5zM289.01 27.15h1.5v1.5h-1.5zM289.01 860.35h1.5v1.5h-1.5zM315.06 19.75h1.5v1.5h-1.5zM315.06 23.15h1.5v1.5h-1.5zM315.06 867.65h1.5v1.5h-1.5zM315.06 864.45h1.5v1.5h-1.5zM341.11 19.75h1.5v1.5h-1.5zM341.11 23.15h1.5v1.5h-1.5zM341.11 867.65h1.5v1.5h-1.5zM341.11 864.45h1.5v1.5h-1.5zM367.17 19.75h1.5v1.5h-1.5zM367.17 23.15h1.5v1.5h-1.5zM367.17 867.65h1.5v1.5h-1.5zM367.17 864.45h1.5v1.5h-1.5zM393.22 19.75h1.5v1.5h-1.5zM393.22 23.15h1.5v1.5h-1.5zM393.22 867.65h1.5v1.5h-1.5zM393.22 864.45h1.5v1.5h-1.5zM419.27 21.85h1.5v1.5h-1.5zM419.27 865.65h1.5v1.5h-1.5zM419.27 24.5h1.5v1.5h-1.5zM419.27 863h1.5v1.5h-1.5zM419.27 27.15h1.5v1.5h-1.5zM419.27 860.35h1.5v1.5h-1.5zM445.32 19.75h1.5v1.5h-1.5zM445.32 23.15h1.5v1.5h-1.5zM445.32 867.65h1.5v1.5h-1.5zM445.32 864.45h1.5v1.5h-1.5zM471.37 19.75h1.5v1.5h-1.5zM471.37 23.15h1.5v1.5h-1.5zM471.37 867.65h1.5v1.5h-1.5zM471.37 864.45h1.5v1.5h-1.5zM497.43 19.75h1.5v1.5h-1.5zM497.43 23.15h1.5v1.5h-1.5zM497.43 867.65h1.5v1.5h-1.5zM497.43 864.45h1.5v1.5h-1.5zM523.48 19.75h1.5v1.5h-1.5zM523.48 23.15h1.5v1.5h-1.5zM523.48 867.65h1.5v1.5h-1.5zM523.48 864.45h1.5v1.5h-1.5zM549.53 21.85h1.5v1.5h-1.5zM549.53 865.65h1.5v1.5h-1.5zM549.53 24.5h1.5v1.5h-1.5zM549.53 863h1.5v1.5h-1.5zM549.53 27.15h1.5v1.5h-1.5zM549.53 860.35h1.5v1.5h-1.5zM575.58 19.75h1.5v1.5h-1.5zM575.58 23.15h1.5v1.5h-1.5zM575.58 867.65h1.5v1.5h-1.5zM575.58 864.45h1.5v1.5h-1.5zM601.63 19.75h1.5v1.5h-1.5zM601.63 23.15h1.5v1.5h-1.5zM601.63 867.65h1.5v1.5h-1.5zM601.63 864.45h1.5v1.5h-1.5zM627.69 19.75h1.5v1.5h-1.5zM627.69 23.15h1.5v1.5h-1.5zM627.69 867.65h1.5v1.5h-1.5zM627.69 864.45h1.5v1.5h-1.5zM653.74 19.75h1.5v1.5h-1.5zM653.74 23.15h1.5v1.5h-1.5zM653.74 867.65h1.5v1.5h-1.5zM653.74 864.45h1.5v1.5h-1.5zM679.79 21.85h1.5v1.5h-1.5zM679.79 865.65h1.5v1.5h-1.5zM705.84 19.75h1.5v1.5h-1.5zM705.84 23.15h1.5v1.5h-1.5zM705.84 867.65h1.5v1.5h-1.5zM705.84 864.45h1.5v1.5h-1.5zM731.89 19.75h1.5v1.5h-1.5zM731.89 23.15h1.5v1.5h-1.5zM731.89 867.65h1.5v1.5h-1.5zM731.89 864.45h1.5v1.5h-1.5zM757.95 19.75h1.5v1.5h-1.5zM757.95 23.15h1.5v1.5h-1.5zM757.95 867.65h1.5v1.5h-1.5zM757.95 864.45h1.5v1.5h-1.5zM784 19.75h1.5v1.5h-1.5zM784 23.15h1.5v1.5h-1.5zM784 867.65h1.5v1.5h-1.5zM784 864.45h1.5v1.5h-1.5zM810.05 21.85h1.5v1.5h-1.5zM810.05 865.65h1.5v1.5h-1.5zM810.05 24.5h1.5v1.5h-1.5zM810.05 863h1.5v1.5h-1.5zM810.05 27.15h1.5v1.5h-1.5zM810.05 860.35h1.5v1.5h-1.5zM836.1 19.75h1.5v1.5h-1.5zM836.1 23.15h1.5v1.5h-1.5zM836.1 867.65h1.5v1.5h-1.5zM836.1 864.45h1.5v1.5h-1.5zM862.15 19.75h1.5v1.5h-1.5zM862.15 23.15h1.5v1.5h-1.5zM862.15 867.65h1.5v1.5h-1.5zM862.15 864.45h1.5v1.5h-1.5zM888.21 19.75h1.5v1.5h-1.5zM888.21 23.15h1.5v1.5h-1.5zM888.21 867.65h1.5v1.5h-1.5zM888.21 864.45h1.5v1.5h-1.5zM914.26 19.75h1.5v1.5h-1.5zM914.26 23.15h1.5v1.5h-1.5zM914.26 867.65h1.5v1.5h-1.5zM914.26 864.45h1.5v1.5h-1.5zM940.31 21.85h1.5v1.5h-1.5zM940.31 865.65h1.5v1.5h-1.5zM940.31 24.5h1.5v1.5h-1.5zM940.31 863h1.5v1.5h-1.5zM940.31 27.15h1.5v1.5h-1.5zM940.31 860.35h1.5v1.5h-1.5zM966.36 19.75h1.5v1.5h-1.5zM966.36 23.15h1.5v1.5h-1.5zM966.36 867.65h1.5v1.5h-1.5zM966.36 864.45h1.5v1.5h-1.5zM992.41 19.75h1.5v1.5h-1.5zM992.41 23.15h1.5v1.5h-1.5zM992.41 867.65h1.5v1.5h-1.5zM992.41 864.45h1.5v1.5h-1.5zM1018.47 19.75h1.5v1.5h-1.5zM1018.47 23.15h1.5v1.5h-1.5zM1018.47 867.65h1.5v1.5h-1.5zM1018.47 864.45h1.5v1.5h-1.5zM1044.52 19.75h1.5v1.5h-1.5zM1044.52 23.15h1.5v1.5h-1.5zM1044.52 867.65h1.5v1.5h-1.5zM1044.52 864.45h1.5v1.5h-1.5zM1070.57 21.85h1.5v1.5h-1.5zM1070.57 865.65h1.5v1.5h-1.5zM1070.57 24.5h1.5v1.5h-1.5zM1070.57 863h1.5v1.5h-1.5zM1070.57 27.15h1.5v1.5h-1.5zM1070.57 860.35h1.5v1.5h-1.5zM1096.62 19.75h1.5v1.5h-1.5zM1096.62 23.15h1.5v1.5h-1.5zM1096.62 867.65h1.5v1.5h-1.5zM1096.62 864.45h1.5v1.5h-1.5zM1122.67 19.75h1.5v1.5h-1.5zM1122.67 23.15h1.5v1.5h-1.5zM1122.67 867.65h1.5v1.5h-1.5zM1122.67 864.45h1.5v1.5h-1.5zM1148.73 19.75h1.5v1.5h-1.5zM1148.73 23.15h1.5v1.5h-1.5zM1148.73 867.65h1.5v1.5h-1.5zM1148.73 864.45h1.5v1.5h-1.5zM1174.78 19.75h1.5v1.5h-1.5zM1174.78 23.15h1.5v1.5h-1.5zM1174.78 867.65h1.5v1.5h-1.5zM1174.78 864.45h1.5v1.5h-1.5zM1200.83 21.85h1.5v1.5h-1.5zM1200.83 865.65h1.5v1.5h-1.5zM1200.83 24.5h1.5v1.5h-1.5zM1200.83 863h1.5v1.5h-1.5zM1200.83 27.15h1.5v1.5h-1.5zM1200.83 860.35h1.5v1.5h-1.5zM1226.88 19.75h1.5v1.5h-1.5zM1226.88 23.15h1.5v1.5h-1.5zM1226.88 867.65h1.5v1.5h-1.5zM1226.88 864.45h1.5v1.5h-1.5zM1252.93 19.75h1.5v1.5h-1.5zM1252.93 23.15h1.5v1.5h-1.5zM1252.93 867.65h1.5v1.5h-1.5zM1252.93 864.45h1.5v1.5h-1.5zM1278.99 19.75h1.5v1.5h-1.5zM1278.99 23.15h1.5v1.5h-1.5zM1278.99 867.65h1.5v1.5h-1.5zM1278.99 864.45h1.5v1.5h-1.5zM1305.04 19.75h1.5v1.5h-1.5zM1305.04 23.15h1.5v1.5h-1.5zM1305.04 867.65h1.5v1.5h-1.5zM1305.04 864.45h1.5v1.5h-1.5zM27.95 37.53h1.5v1.5h-1.5zM31.25 37.53h1.5v1.5h-1.5zM1330.25 37.53h1.5v1.5h-1.5zM1326.95 37.53h1.5v1.5h-1.5zM27.95 54.46h1.5v1.5h-1.5zM31.25 54.46h1.5v1.5h-1.5zM1330.25 54.46h1.5v1.5h-1.5zM1326.95 54.46h1.5v1.5h-1.5zM27.95 71.39h1.5v1.5h-1.5zM31.25 71.39h1.5v1.5h-1.5zM1330.25 71.39h1.5v1.5h-1.5zM1326.95 71.39h1.5v1.5h-1.5zM27.95 88.32h1.5v1.5h-1.5zM31.25 88.32h1.5v1.5h-1.5zM1330.25 88.32h1.5v1.5h-1.5zM1326.95 88.32h1.5v1.5h-1.5zM29.65 105.25h1.5v1.5h-1.5zM1328.35 105.25h1.5v1.5h-1.5zM32.4 105.25h1.5v1.5h-1.5zM1325.8 105.25h1.5v1.5h-1.5zM35.15 105.25h1.5v1.5h-1.5zM1323.25 105.25h1.5v1.5h-1.5zM27.95 122.18h1.5v1.5h-1.5zM31.25 122.18h1.5v1.5h-1.5zM1330.25 122.18h1.5v1.5h-1.5zM1326.95 122.18h1.5v1.5h-1.5zM27.95 139.11h1.5v1.5h-1.5zM31.25 139.11h1.5v1.5h-1.5zM1330.25 139.11h1.5v1.5h-1.5zM1326.95 139.11h1.5v1.5h-1.5zM27.95 156.04h1.5v1.5h-1.5zM31.25 156.04h1.5v1.5h-1.5zM1330.25 156.04h1.5v1.5h-1.5zM1326.95 156.04h1.5v1.5h-1.5zM27.95 172.97h1.5v1.5h-1.5zM31.25 172.97h1.5v1.5h-1.5zM1330.25 172.97h1.5v1.5h-1.5zM1326.95 172.97h1.5v1.5h-1.5zM29.65 189.9h1.5v1.5h-1.5zM1328.35 189.9h1.5v1.5h-1.5zM32.4 189.9h1.5v1.5h-1.5zM1325.8 189.9h1.5v1.5h-1.5zM35.15 189.9h1.5v1.5h-1.5zM1323.25 189.9h1.5v1.5h-1.5zM27.95 206.83h1.5v1.5h-1.5zM31.25 206.83h1.5v1.5h-1.5zM1330.25 206.83h1.5v1.5h-1.5zM1326.95 206.83h1.5v1.5h-1.5zM27.95 223.76h1.5v1.5h-1.5zM31.25 223.76h1.5v1.5h-1.5zM1330.25 223.76h1.5v1.5h-1.5zM1326.95 223.76h1.5v1.5h-1.5zM27.95 240.69h1.5v1.5h-1.5zM31.25 240.69h1.5v1.5h-1.5zM1330.25 240.69h1.5v1.5h-1.5zM1326.95 240.69h1.5v1.5h-1.5zM27.95 257.62h1.5v1.5h-1.5zM31.25 257.62h1.5v1.5h-1.5zM1330.25 257.62h1.5v1.5h-1.5zM1326.95 257.62h1.5v1.5h-1.5zM29.65 274.55h1.5v1.5h-1.5zM1328.35 274.55h1.5v1.5h-1.5zM32.4 274.55h1.5v1.5h-1.5zM1325.8 274.55h1.5v1.5h-1.5zM35.15 274.55h1.5v1.5h-1.5zM1323.25 274.55h1.5v1.5h-1.5zM27.95 291.48h1.5v1.5h-1.5zM31.25 291.48h1.5v1.5h-1.5zM1330.25 291.48h1.5v1.5h-1.5zM1326.95 291.48h1.5v1.5h-1.5zM27.95 308.41h1.5v1.5h-1.5zM31.25 308.41h1.5v1.5h-1.5zM1330.25 308.41h1.5v1.5h-1.5zM1326.95 308.41h1.5v1.5h-1.5zM27.95 325.34h1.5v1.5h-1.5zM31.25 325.34h1.5v1.5h-1.5zM1330.25 325.34h1.5v1.5h-1.5zM1326.95 325.34h1.5v1.5h-1.5zM27.95 342.27h1.5v1.5h-1.5zM31.25 342.27h1.5v1.5h-1.5zM1330.25 342.27h1.5v1.5h-1.5zM1326.95 342.27h1.5v1.5h-1.5zM29.65 359.2h1.5v1.5h-1.5zM1328.35 359.2h1.5v1.5h-1.5zM32.4 359.2h1.5v1.5h-1.5zM1325.8 359.2h1.5v1.5h-1.5zM35.15 359.2h1.5v1.5h-1.5zM1323.25 359.2h1.5v1.5h-1.5zM27.95 376.13h1.5v1.5h-1.5zM31.25 376.13h1.5v1.5h-1.5zM1330.25 376.13h1.5v1.5h-1.5zM1326.95 376.13h1.5v1.5h-1.5zM27.95 393.06h1.5v1.5h-1.5zM31.25 393.06h1.5v1.5h-1.5zM1330.25 393.06h1.5v1.5h-1.5zM1326.95 393.06h1.5v1.5h-1.5zM27.95 409.99h1.5v1.5h-1.5zM31.25 409.99h1.5v1.5h-1.5zM1330.25 409.99h1.5v1.5h-1.5zM1326.95 409.99h1.5v1.5h-1.5zM27.95 426.92h1.5v1.5h-1.5zM31.25 426.92h1.5v1.5h-1.5zM1330.25 426.92h1.5v1.5h-1.5zM1326.95 426.92h1.5v1.5h-1.5zM27.95 460.78h1.5v1.5h-1.5zM31.25 460.78h1.5v1.5h-1.5zM1330.25 460.78h1.5v1.5h-1.5zM1326.95 460.78h1.5v1.5h-1.5zM27.95 477.71h1.5v1.5h-1.5zM31.25 477.71h1.5v1.5h-1.5zM1330.25 477.71h1.5v1.5h-1.5zM1326.95 477.71h1.5v1.5h-1.5zM27.95 494.64h1.5v1.5h-1.5zM31.25 494.64h1.5v1.5h-1.5zM1330.25 494.64h1.5v1.5h-1.5zM1326.95 494.64h1.5v1.5h-1.5zM27.95 511.57h1.5v1.5h-1.5zM31.25 511.57h1.5v1.5h-1.5zM1330.25 511.57h1.5v1.5h-1.5zM1326.95 511.57h1.5v1.5h-1.5zM29.65 528.5h1.5v1.5h-1.5zM1328.35 528.5h1.5v1.5h-1.5zM32.4 528.5h1.5v1.5h-1.5zM1325.8 528.5h1.5v1.5h-1.5zM35.15 528.5h1.5v1.5h-1.5zM1323.25 528.5h1.5v1.5h-1.5zM27.95 545.43h1.5v1.5h-1.5zM31.25 545.43h1.5v1.5h-1.5zM1330.25 545.43h1.5v1.5h-1.5zM1326.95 545.43h1.5v1.5h-1.5zM27.95 562.36h1.5v1.5h-1.5zM31.25 562.36h1.5v1.5h-1.5zM1330.25 562.36h1.5v1.5h-1.5zM1326.95 562.36h1.5v1.5h-1.5zM27.95 579.29h1.5v1.5h-1.5zM31.25 579.29h1.5v1.5h-1.5zM1330.25 579.29h1.5v1.5h-1.5zM1326.95 579.29h1.5v1.5h-1.5zM27.95 596.22h1.5v1.5h-1.5zM31.25 596.22h1.5v1.5h-1.5zM1330.25 596.22h1.5v1.5h-1.5zM1326.95 596.22h1.5v1.5h-1.5zM29.65 613.15h1.5v1.5h-1.5zM1328.35 613.15h1.5v1.5h-1.5zM32.4 613.15h1.5v1.5h-1.5zM1325.8 613.15h1.5v1.5h-1.5zM35.15 613.15h1.5v1.5h-1.5zM1323.25 613.15h1.5v1.5h-1.5zM27.95 630.08h1.5v1.5h-1.5zM31.25 630.08h1.5v1.5h-1.5zM1330.25 630.08h1.5v1.5h-1.5zM1326.95 630.08h1.5v1.5h-1.5zM27.95 647.01h1.5v1.5h-1.5zM31.25 647.01h1.5v1.5h-1.5zM1330.25 647.01h1.5v1.5h-1.5zM1326.95 647.01h1.5v1.5h-1.5zM27.95 663.94h1.5v1.5h-1.5zM31.25 663.94h1.5v1.5h-1.5zM1330.25 663.94h1.5v1.5h-1.5zM1326.95 663.94h1.5v1.5h-1.5zM27.95 680.87h1.5v1.5h-1.5zM31.25 680.87h1.5v1.5h-1.5zM1330.25 680.87h1.5v1.5h-1.5zM1326.95 680.87h1.5v1.5h-1.5zM29.65 697.8h1.5v1.5h-1.5zM1328.35 697.8h1.5v1.5h-1.5zM32.4 697.8h1.5v1.5h-1.5zM1325.8 697.8h1.5v1.5h-1.5zM35.15 697.8h1.5v1.5h-1.5zM1323.25 697.8h1.5v1.5h-1.5zM27.95 714.73h1.5v1.5h-1.5zM31.25 714.73h1.5v1.5h-1.5zM1330.25 714.73h1.5v1.5h-1.5zM1326.95 714.73h1.5v1.5h-1.5zM27.95 731.66h1.5v1.5h-1.5zM31.25 731.66h1.5v1.5h-1.5zM1330.25 731.66h1.5v1.5h-1.5zM1326.95 731.66h1.5v1.5h-1.5zM27.95 748.59h1.5v1.5h-1.5zM31.25 748.59h1.5v1.5h-1.5zM1330.25 748.59h1.5v1.5h-1.5zM1326.95 748.59h1.5v1.5h-1.5zM27.95 765.52h1.5v1.5h-1.5zM31.25 765.52h1.5v1.5h-1.5zM1330.25 765.52h1.5v1.5h-1.5zM1326.95 765.52h1.5v1.5h-1.5zM29.65 782.45h1.5v1.5h-1.5zM1328.35 782.45h1.5v1.5h-1.5zM32.4 782.45h1.5v1.5h-1.5zM1325.8 782.45h1.5v1.5h-1.5zM35.15 782.45h1.5v1.5h-1.5zM1323.25 782.45h1.5v1.5h-1.5zM27.95 799.38h1.5v1.5h-1.5zM31.25 799.38h1.5v1.5h-1.5zM1330.25 799.38h1.5v1.5h-1.5zM1326.95 799.38h1.5v1.5h-1.5zM27.95 816.31h1.5v1.5h-1.5zM31.25 816.31h1.5v1.5h-1.5zM1330.25 816.31h1.5v1.5h-1.5zM1326.95 816.31h1.5v1.5h-1.5zM27.95 833.24h1.5v1.5h-1.5zM31.25 833.24h1.5v1.5h-1.5zM1330.25 833.24h1.5v1.5h-1.5zM1326.95 833.24h1.5v1.5h-1.5zM27.95 850.17h1.5v1.5h-1.5zM31.25 850.17h1.5v1.5h-1.5zM1330.25 850.17h1.5v1.5h-1.5zM1326.95 850.17h1.5v1.5h-1.5z"/><clipPath id="pc"><rect x="29" y="21" width="1302" height="847"/></clipPath><g clip-path="url(#pc)" fill="none" stroke-linejoin="miter" stroke-linecap="butt"><path d="M7.46 289.4L9.06 267.4L10.16 253.4L11.96 234.3M37.2 289.4L38.8 267.4L39.9 253.4L41.7 234.3M66.94 289.4L68.54 267.4L69.64 253.4L71.44 234.3M96.68 289.4L98.28 267.4L99.38 253.4L101.18 234.3M126.42 289.4L128.02 267.4L129.12 253.4L130.92 234.3M156.16 289.4L157.76 267.4L158.86 253.4L160.66 234.3M185.9 289.4L187.5 267.4L188.6 253.4L190.4 234.3M215.64 289.4L217.24 267.4L218.34 253.4L220.14 234.3M245.38 289.4L246.98 267.4L248.08 253.4L249.88 234.3M275.12 289.4L276.72 267.4L277.82 253.4L279.62 234.3M304.86 289.4L306.46 267.4L307.56 253.4L309.36 234.3M334.6 289.4L336.2 267.4L337.3 253.4L339.1 234.3M364.34 289.4L365.94 267.4L367.04 253.4L368.84 234.3M394.08 289.4L395.68 267.4L396.78 253.4L398.58 234.3M423.82 289.4L425.42 267.4L426.52 253.4L428.32 234.3M453.56 289.4L455.16 267.4L456.26 253.4L458.06 234.3M483.3 289.4L484.9 267.4L486 253.4L487.8 234.3M513.04 289.4L514.64 267.4L515.74 253.4L517.54 234.3M542.78 289.4L544.38 267.4L545.48 253.4L547.28 234.3M572.52 289.4L574.12 267.4L575.22 253.4L577.02 234.3M602.26 289.4L603.86 267.4L604.96 253.4L606.76 234.3M632 289.4L633.6 267.4L634.7 253.4L636.5 234.3M661.74 289.4L663.34 267.4L664.44 253.4L666.24 234.3M691.48 289.4L693.08 267.4L694.18 253.4L695.98 234.3M721.22 289.4L722.82 267.4L723.92 253.4L725.72 234.3M750.96 289.4L752.56 267.4L753.66 253.4L755.46 234.3M780.7 289.4L782.3 267.4L783.4 253.4L785.2 234.3M810.44 289.4L812.04 267.4L813.14 253.4L814.94 234.3M840.18 289.4L841.78 267.4L842.88 253.4L844.68 234.3M869.92 289.4L871.52 267.4L872.62 253.4L874.42 234.3M899.66 289.4L901.26 267.4L902.36 253.4L904.16 234.3M929.4 289.4L931 267.4L932.1 253.4L933.9 234.3M959.14 289.4L960.74 267.4L961.84 253.4L963.64 234.3M988.88 289.4L990.48 267.4L991.58 253.4L993.38 234.3M1018.62 289.4L1020.22 267.4L1021.32 253.4L1023.12 234.3M1048.36 289.4L1049.96 267.4L1051.06 253.4L1052.86 234.3M1078.1 289.4L1079.7 267.4L1080.8 253.4L1082.6 234.3M1107.84 289.4L1109.44 267.4L1110.54 253.4L1112.34 234.3M1137.58 289.4L1139.18 267.4L1140.28 253.4L1142.08 234.3M1167.32 289.4L1168.92 267.4L1170.02 253.4L1171.82 234.3M1197.06 289.4L1198.66 267.4L1199.76 253.4L1201.56 234.3M1226.8 289.4L1228.4 267.4L1229.5 253.4L1231.3 234.3M1256.54 289.4L1258.14 267.4L1259.24 253.4L1261.04 234.3M1286.28 289.4L1287.88 267.4L1288.98 253.4L1290.78 234.3M1316.02 289.4L1317.62 267.4L1318.72 253.4L1320.52 234.3M1345.76 289.4L1347.36 267.4L1348.46 253.4L1350.26 234.3M1375.5 289.4L1377.1 267.4L1378.2 253.4L1380 234.3" stroke="#0b6a0b" stroke-width="1.8"/><path d="M7.46 289.4L9.06 267.4L10.16 253.4L11.96 234.3M37.2 289.4L38.8 267.4L39.9 253.4L41.7 234.3M66.94 289.4L68.54 267.4L69.64 253.4L71.44 234.3M96.68 289.4L98.28 267.4L99.38 253.4L101.18 234.3M126.42 289.4L128.02 267.4L129.12 253.4L130.92 234.3M156.16 289.4L157.76 267.4L158.86 253.4L160.66 234.3M185.9 289.4L187.5 267.4L188.6 253.4L190.4 234.3M215.64 289.4L217.24 267.4L218.34 253.4L220.14 234.3M245.38 289.4L246.98 267.4L248.08 253.4L249.88 234.3M275.12 289.4L276.72 267.4L277.82 253.4L279.62 234.3M304.86 289.4L306.46 267.4L307.56 253.4L309.36 234.3M334.6 289.4L336.2 267.4L337.3 253.4L339.1 234.3M364.34 289.4L365.94 267.4L367.04 253.4L368.84 234.3M394.08 289.4L395.68 267.4L396.78 253.4L398.58 234.3M423.82 289.4L425.42 267.4L426.52 253.4L428.32 234.3M453.56 289.4L455.16 267.4L456.26 253.4L458.06 234.3M483.3 289.4L484.9 267.4L486 253.4L487.8 234.3M513.04 289.4L514.64 267.4L515.74 253.4L517.54 234.3M542.78 289.4L544.38 267.4L545.48 253.4L547.28 234.3M572.52 289.4L574.12 267.4L575.22 253.4L577.02 234.3M602.26 289.4L603.86 267.4L604.96 253.4L606.76 234.3M632 289.4L633.6 267.4L634.7 253.4L636.5 234.3M661.74 289.4L663.34 267.4L664.44 253.4L666.24 234.3M691.48 289.4L693.08 267.4L694.18 253.4L695.98 234.3M721.22 289.4L722.82 267.4L723.92 253.4L725.72 234.3M750.96 289.4L752.56 267.4L753.66 253.4L755.46 234.3M780.7 289.4L782.3 267.4L783.4 253.4L785.2 234.3M810.44 289.4L812.04 267.4L813.14 253.4L814.94 234.3M840.18 289.4L841.78 267.4L842.88 253.4L844.68 234.3M869.92 289.4L871.52 267.4L872.62 253.4L874.42 234.3M899.66 289.4L901.26 267.4L902.36 253.4L904.16 234.3M929.4 289.4L931 267.4L932.1 253.4L933.9 234.3M959.14 289.4L960.74 267.4L961.84 253.4L963.64 234.3M988.88 289.4L990.48 267.4L991.58 253.4L993.38 234.3M1018.62 289.4L1020.22 267.4L1021.32 253.4L1023.12 234.3M1048.36 289.4L1049.96 267.4L1051.06 253.4L1052.86 234.3M1078.1 289.4L1079.7 267.4L1080.8 253.4L1082.6 234.3M1107.84 289.4L1109.44 267.4L1110.54 253.4L1112.34 234.3M1137.58 289.4L1139.18 267.4L1140.28 253.4L1142.08 234.3M1167.32 289.4L1168.92 267.4L1170.02 253.4L1171.82 234.3M1197.06 289.4L1198.66 267.4L1199.76 253.4L1201.56 234.3M1226.8 289.4L1228.4 267.4L1229.5 253.4L1231.3 234.3M1256.54 289.4L1258.14 267.4L1259.24 253.4L1261.04 234.3M1286.28 289.4L1287.88 267.4L1288.98 253.4L1290.78 234.3M1316.02 289.4L1317.62 267.4L1318.72 253.4L1320.52 234.3M1345.76 289.4L1347.36 267.4L1348.46 253.4L1350.26 234.3M1375.5 289.4L1377.1 267.4L1378.2 253.4L1380 234.3" stroke="#00c800" stroke-width="0.8"/><path d="M7.26 269.3h2.2v4.4h-2.2zM8.96 250.3h2.2v4.4h-2.2zM37 269.3h2.2v4.4h-2.2zM38.7 250.3h2.2v4.4h-2.2zM66.74 269.3h2.2v4.4h-2.2zM68.44 250.3h2.2v4.4h-2.2zM96.48 269.3h2.2v4.4h-2.2zM98.18 250.3h2.2v4.4h-2.2zM126.22 269.3h2.2v4.4h-2.2zM127.92 250.3h2.2v4.4h-2.2zM155.96 269.3h2.2v4.4h-2.2zM157.66 250.3h2.2v4.4h-2.2zM185.7 269.3h2.2v4.4h-2.2zM187.4 250.3h2.2v4.4h-2.2zM215.44 269.3h2.2v4.4h-2.2zM217.14 250.3h2.2v4.4h-2.2zM245.18 269.3h2.2v4.4h-2.2zM246.88 250.3h2.2v4.4h-2.2zM274.92 269.3h2.2v4.4h-2.2zM276.62 250.3h2.2v4.4h-2.2zM304.66 269.3h2.2v4.4h-2.2zM306.36 250.3h2.2v4.4h-2.2zM334.4 269.3h2.2v4.4h-2.2zM336.1 250.3h2.2v4.4h-2.2zM364.14 269.3h2.2v4.4h-2.2zM365.84 250.3h2.2v4.4h-2.2zM393.88 269.3h2.2v4.4h-2.2zM395.58 250.3h2.2v4.4h-2.2zM423.62 269.3h2.2v4.4h-2.2zM425.32 250.3h2.2v4.4h-2.2zM453.36 269.3h2.2v4.4h-2.2zM455.06 250.3h2.2v4.4h-2.2zM483.1 269.3h2.2v4.4h-2.2zM484.8 250.3h2.2v4.4h-2.2zM512.84 269.3h2.2v4.4h-2.2zM514.54 250.3h2.2v4.4h-2.2zM542.58 269.3h2.2v4.4h-2.2zM544.28 250.3h2.2v4.4h-2.2zM572.32 269.3h2.2v4.4h-2.2zM574.02 250.3h2.2v4.4h-2.2zM602.06 269.3h2.2v4.4h-2.2zM603.76 250.3h2.2v4.4h-2.2zM631.8 269.3h2.2v4.4h-2.2zM633.5 250.3h2.2v4.4h-2.2zM661.54 269.3h2.2v4.4h-2.2zM663.24 250.3h2.2v4.4h-2.2zM691.28 269.3h2.2v4.4h-2.2zM692.98 250.3h2.2v4.4h-2.2zM721.02 269.3h2.2v4.4h-2.2zM722.72 250.3h2.2v4.4h-2.2zM750.76 269.3h2.2v4.4h-2.2zM752.46 250.3h2.2v4.4h-2.2zM780.5 269.3h2.2v4.4h-2.2zM782.2 250.3h2.2v4.4h-2.2zM810.24 269.3h2.2v4.4h-2.2zM811.94 250.3h2.2v4.4h-2.2zM839.98 269.3h2.2v4.4h-2.2zM841.68 250.3h2.2v4.4h-2.2zM869.72 269.3h2.2v4.4h-2.2zM871.42 250.3h2.2v4.4h-2.2zM899.46 269.3h2.2v4.4h-2.2zM901.16 250.3h2.2v4.4h-2.2zM929.2 269.3h2.2v4.4h-2.2zM930.9 250.3h2.2v4.4h-2.2zM958.94 269.3h2.2v4.4h-2.2zM960.64 250.3h2.2v4.4h-2.2zM988.68 269.3h2.2v4.4h-2.2zM990.38 250.3h2.2v4.4h-2.2zM1018.42 269.3h2.2v4.4h-2.2zM1020.12 250.3h2.2v4.4h-2.2zM1048.16 269.3h2.2v4.4h-2.2zM1049.86 250.3h2.2v4.4h-2.2zM1077.9 269.3h2.2v4.4h-2.2zM1079.6 250.3h2.2v4.4h-2.2zM1107.64 269.3h2.2v4.4h-2.2zM1109.34 250.3h2.2v4.4h-2.2zM1137.38 269.3h2.2v4.4h-2.2zM1139.08 250.3h2.2v4.4h-2.2zM1167.12 269.3h2.2v4.4h-2.2zM1168.82 250.3h2.2v4.4h-2.2zM1196.86 269.3h2.2v4.4h-2.2zM1198.56 250.3h2.2v4.4h-2.2zM1226.6 269.3h2.2v4.4h-2.2zM1228.3 250.3h2.2v4.4h-2.2zM1256.34 269.3h2.2v4.4h-2.2zM1258.04 250.3h2.2v4.4h-2.2zM1286.08 269.3h2.2v4.4h-2.2zM1287.78 250.3h2.2v4.4h-2.2zM1315.82 269.3h2.2v4.4h-2.2zM1317.52 250.3h2.2v4.4h-2.2zM1345.56 269.3h2.2v4.4h-2.2zM1347.26 250.3h2.2v4.4h-2.2zM1375.3 269.3h2.2v4.4h-2.2zM1377 250.3h2.2v4.4h-2.2z" fill="#0b500b" stroke="none"/><path d="M12.26 234.3L12.01 237.36L11.76 240.42L11.51 243.48L13.7 246.54L14.51 249.61L16.07 252.67L18.47 255.73L20.44 258.79L21.55 261.85L22.41 264.91L24.5 267.97L25.59 271.03L26.93 274.09L29.06 277.16L30.74 280.22L32.27 283.28L34.4 286.34L37.5 289.4L38.69 289.4L38.24 286.34L38.9 283.28L37.31 280.22L36.03 277.16L33.93 274.09L32.06 271.03L30.24 267.97L28.61 264.91L27.89 261.85L26.82 258.79L23.96 255.73L23.47 252.67L21.2 249.61L20.32 246.54L18.37 243.48L16.91 240.42L14.02 237.36L11.14 234.3ZM42 234.3L41.75 237.36L41.5 240.42L41.46 243.48L43.61 246.54L44.46 249.61L45.76 252.67L47.49 255.73L49.43 258.79L51.39 261.85L52.83 264.91L54.09 267.97L55.44 271.03L57.75 274.09L59.43 277.16L60.3 280.22L62.21 283.28L64.88 286.34L66.2 289.4L68.12 289.4L67.89 286.34L67.85 283.28L67.35 280.22L64.88 277.16L63.45 274.09L62.82 271.03L60.19 267.97L58.5 264.91L56.95 261.85L55.47 258.79L54.43 255.73L53.2 252.67L50.66 249.61L49.12 246.54L48.74 243.48L45.95 240.42L44.2 237.36L40.2 234.3ZM71.74 234.3L71.49 237.36L71.24 240.42L71.97 243.48L72.88 246.54L73.91 249.61L75.75 252.67L77.34 255.73L79.38 258.79L80.36 261.85L81.77 264.91L84.02 267.97L85.66 271.03L87.65 274.09L87.95 277.16L90.11 280.22L91.3 283.28L94.04 286.34L96.09 289.4L98.03 289.4L97.51 286.34L97.97 283.28L95.97 280.22L94.7 277.16L93.05 274.09L91.59 271.03L90.83 267.97L88.39 264.91L87.52 261.85L85.36 258.79L84.54 255.73L82.81 252.67L81.6 249.61L78.84 246.54L77.97 243.48L76.9 240.42L74.16 237.36L70.11 234.3ZM101.48 234.3L101.23 237.36L100.98 240.42L101.75 243.48L102.99 246.54L104.82 249.61L106.27 252.67L107.53 255.73L108.82 258.79L110.7 261.85L112.31 264.91L114.21 267.97L115.08 271.03L116.92 274.09L118.84 277.16L120.28 280.22L121.64 283.28L123.3 286.34L126.02 289.4L127.38 289.4L128.05 286.34L127.87 283.28L125.67 280.22L124.18 277.16L123.12 274.09L121.97 271.03L120.4 267.97L119.2 264.91L116.36 261.85L115.5 258.79L114 255.73L112.77 252.67L110.58 249.61L109.69 246.54L107.36 243.48L106.42 240.42L103.62 237.36L100.61 234.3ZM131.22 234.3L130.97 237.36L130.72 240.42L131.38 243.48L132.77 246.54L133.72 249.61L135.53 252.67L136.76 255.73L138.9 258.79L140.03 261.85L142.53 264.91L142.82 267.97L145.5 271.03L146.84 274.09L147.84 277.16L149 280.22L151.17 283.28L153.88 286.34L155.26 289.4L156.33 289.4L157.14 286.34L156.97 283.28L155.56 280.22L154.91 277.16L153.04 274.09L150.74 271.03L149.16 267.97L148.19 264.91L147.16 261.85L145.12 258.79L143.44 255.73L141.69 252.67L139.97 249.61L139.5 246.54L137.8 243.48L135.74 240.42L132.77 237.36L129.86 234.3ZM160.96 234.3L160.71 237.36L160.46 240.42L160.21 243.48L162.52 246.54L163.71 249.61L165.91 252.67L167 255.73L168.88 258.79L169.98 261.85L171.18 264.91L173.6 267.97L175.02 271.03L176.84 274.09L178.51 277.16L179.82 280.22L181.55 283.28L182.95 286.34L185.42 289.4L186.77 289.4L186.66 286.34L187.87 283.28L185.56 280.22L184.3 277.16L183.36 274.09L180.72 271.03L179.75 267.97L178.3 264.91L176.64 261.85L175.49 258.79L173.83 255.73L171.57 252.67L170.35 249.61L168.1 246.54L167.66 243.48L166.06 240.42L162.62 237.36L159.92 234.3ZM190.7 234.3L190.45 237.36L190.2 240.42L190.58 243.48L192.43 246.54L193.25 249.61L195.56 252.67L196.23 255.73L198.86 258.79L199.87 261.85L201.38 264.91L203.04 267.97L205.12 271.03L205.88 274.09L207.67 277.16L209.42 280.22L210.77 283.28L213.54 286.34L214.92 289.4L216.4 289.4L217.58 286.34L216.99 283.28L214.94 280.22L213.97 277.16L212.84 274.09L210.88 271.03L208.64 267.97L207.74 264.91L205.75 261.85L204.64 258.79L203.53 255.73L202.04 252.67L199.75 249.61L198.44 246.54L196.82 243.48L195.55 240.42L192.55 237.36L188.92 234.3ZM220.44 234.3L220.19 237.36L219.94 240.42L219.71 243.48L221.6 246.54L223.14 249.61L224.34 252.67L226.57 255.73L227.99 258.79L229.67 261.85L230.7 264.91L233.07 267.97L233.94 271.03L236.36 274.09L238.02 277.16L238.38 280.22L240.77 283.28L242.07 286.34L244.87 289.4L246.59 289.4L247.19 286.34L246.52 283.28L244.93 280.22L244.27 277.16L241.77 274.09L240.34 271.03L239.6 267.97L237.81 264.91L236.41 261.85L234.84 258.79L232.98 255.73L230.81 252.67L229.7 249.61L227.92 246.54L226.57 243.48L224.62 240.42L221.72 237.36L218.69 234.3ZM250.18 234.3L249.93 237.36L249.68 240.42L250.35 243.48L252.03 246.54L252.38 249.61L254.51 252.67L255.88 255.73L257.71 258.79L259.39 261.85L261.09 264.91L261.93 267.97L264.28 271.03L265.08 274.09L267.08 277.16L269.18 280.22L270.48 283.28L272.56 286.34L274.86 289.4L275.93 289.4L276.33 286.34L277.1 283.28L275.45 280.22L272.79 277.16L271.43 274.09L270.21 271.03L268.71 267.97L267.7 264.91L264.97 261.85L263.99 258.79L262.48 255.73L261.33 252.67L260.03 249.61L257.27 246.54L256.96 243.48L254.29 240.42L251.49 237.36L249 234.3ZM279.92 234.3L279.67 237.36L279.42 240.42L280.23 243.48L280.95 246.54L282.83 249.61L284.15 252.67L286.06 255.73L287.79 258.79L288.32 261.85L290.89 264.91L291.98 267.97L293.25 271.03L294.68 274.09L297.37 277.16L298.38 280.22L300.03 283.28L302.31 286.34L303.87 289.4L305.8 289.4L306.64 286.34L307.03 283.28L305.42 280.22L303.28 277.16L301.29 274.09L299.91 271.03L297.89 267.97L296.61 264.91L295.55 261.85L294.5 258.79L292.55 255.73L291.4 252.67L289.18 249.61L287.8 246.54L286.24 243.48L284.07 240.42L281.92 237.36L278.03 234.3ZM309.66 234.3L309.41 237.36L309.16 240.42L308.91 243.48L310.76 246.54L312.82 249.61L314.72 252.67L315.01 255.73L317.07 258.79L319.39 261.85L320.33 264.91L322.17 267.97L324.09 271.03L325.13 274.09L326.72 277.16L327.7 280.22L329.71 283.28L331.78 286.34L334.14 289.4L335.07 289.4L336.18 286.34L335.55 283.28L333.88 280.22L332.88 277.16L330.84 274.09L330.26 271.03L328.21 267.97L327.31 264.91L324.77 261.85L323.54 258.79L322.57 255.73L321.06 252.67L318.25 249.61L317.87 246.54L316.11 243.48L313.55 240.42L310.79 237.36L308.76 234.3ZM339.4 234.3L339.15 237.36L338.9 240.42L339.62 243.48L340.04 246.54L342.11 249.61L343.22 252.67L344.74 255.73L347.15 258.79L348.65 261.85L350 264.91L351.38 267.97L353.63 271.03L354.19 274.09L356.46 277.16L357.45 280.22L359.07 283.28L361.42 286.34L364.62 289.4L364.9 289.4L365.9 286.34L366.25 283.28L364.14 280.22L363.06 277.16L361.56 274.09L358.96 271.03L358.34 267.97L356.03 264.91L354.69 261.85L353.38 258.79L351.16 255.73L350.24 252.67L348.79 249.61L346.73 246.54L344.85 243.48L344.51 240.42L340.86 237.36L338.55 234.3ZM369.14 234.3L368.89 237.36L368.64 240.42L368.63 243.48L370.21 246.54L372.25 249.61L374.11 252.67L375.66 255.73L377.07 258.79L377.95 261.85L380.38 264.91L380.98 267.97L382.71 271.03L384.32 274.09L385.6 277.16L388.01 280.22L389.62 283.28L390.89 286.34L394.21 289.4L394.57 289.4L395.79 286.34L395.64 283.28L394.05 280.22L392.52 277.16L390.71 274.09L389.11 271.03L387.54 267.97L386.73 264.91L384.47 261.85L382.77 258.79L381.4 255.73L380.54 252.67L378.45 249.61L376.26 246.54L375.55 243.48L373.17 240.42L371.22 237.36L367.67 234.3ZM398.88 234.3L398.63 237.36L398.38 240.42L398.94 243.48L399.91 246.54L401.94 249.61L403.31 252.67L405.11 255.73L406.26 258.79L408.18 261.85L409.94 264.91L411.62 267.97L412.84 271.03L414.5 274.09L415.66 277.16L416.83 280.22L419.58 283.28L420.61 286.34L423.31 289.4L424.33 289.4L424.75 286.34L425.12 283.28L424.07 280.22L422.06 277.16L421.03 274.09L419.07 271.03L418.12 267.97L416.38 264.91L414.84 261.85L413.24 258.79L411.8 255.73L409.97 252.67L408.09 249.61L407.19 246.54L404.82 243.48L403.44 240.42L400.3 237.36L397.89 234.3ZM428.62 234.3L428.37 237.36L428.12 240.42L428.05 243.48L430.32 246.54L431.1 249.61L433.58 252.67L434.63 255.73L436.1 258.79L437.06 261.85L439.68 264.91L440.86 267.97L442.06 271.03L444.16 274.09L444.82 277.16L446.89 280.22L448.93 283.28L450.34 286.34L452.91 289.4L454.02 289.4L454.43 286.34L455.18 283.28L453.89 280.22L451.87 277.16L449.98 274.09L449.47 271.03L447.24 267.97L445.49 264.91L444.72 261.85L442.14 258.79L441.6 255.73L439.18 252.67L438.38 249.61L436.24 246.54L434.78 243.48L433.51 240.42L430.12 237.36L427.03 234.3ZM458.36 234.3L458.11 237.36L457.86 240.42L457.93 243.48L459.04 246.54L460.77 249.61L462.78 252.67L464.77 255.73L465.6 258.79L467.16 261.85L469.29 264.91L470.82 267.97L471.97 271.03L474.34 274.09L475.46 277.16L476.64 280.22L478.01 283.28L480.5 286.34L483.59 289.4L484.52 289.4L483.96 286.34L484.86 283.28L483.5 280.22L480.96 277.16L480.54 274.09L478.47 271.03L476.4 267.97L475.2 264.91L473.78 261.85L471.67 258.79L470.44 255.73L468.66 252.67L467.64 249.61L466.47 246.54L465.03 243.48L463.29 240.42L460.67 237.36L457.8 234.3ZM488.1 234.3L487.85 237.36L487.6 240.42L487.35 243.48L489.83 246.54L490.34 249.61L492 252.67L493.91 255.73L496.2 258.79L497.19 261.85L499.11 264.91L500.14 267.97L501.74 271.03L503.28 274.09L505.66 277.16L506.77 280.22L507.44 283.28L510.08 286.34L512.09 289.4L513.67 289.4L514.6 286.34L514.28 283.28L513.1 280.22L511.79 277.16L510.1 274.09L507.58 271.03L506.46 267.97L505.58 264.91L503.78 261.85L501.9 258.79L499.85 255.73L498.35 252.67L496.93 249.61L495.88 246.54L494.05 243.48L492.92 240.42L489.34 237.36L486.33 234.3ZM517.84 234.3L517.59 237.36L517.34 240.42L517.81 243.48L519.69 246.54L520.6 249.61L522.88 252.67L524.35 255.73L525.43 258.79L526.58 261.85L529.16 264.91L530.18 267.97L532.05 271.03L533.72 274.09L534.83 277.16L535.85 280.22L537.26 283.28L539.59 286.34L543 289.4L543.8 289.4L544.81 286.34L543.6 283.28L542.76 280.22L541.59 277.16L539.2 274.09L537.7 271.03L535.91 267.97L535.32 264.91L533.88 261.85L531.83 258.79L530.24 255.73L528.11 252.67L526.53 249.61L525.3 246.54L523.69 243.48L522.47 240.42L519.06 237.36L516.82 234.3ZM547.58 234.3L547.33 237.36L547.08 240.42L547.23 243.48L549.01 246.54L550.76 249.61L551.94 252.67L554 255.73L554.96 258.79L556.74 261.85L558.25 264.91L559.68 267.97L561.09 271.03L563.22 274.09L564.79 277.16L566.38 280.22L567.72 283.28L569.25 286.34L572.12 289.4L573.18 289.4L573.79 286.34L573.39 283.28L572.16 280.22L571 277.16L569.86 274.09L567.12 271.03L566.74 267.97L564.65 264.91L563.62 261.85L561.39 258.79L560.42 255.73L559.05 252.67L557.15 249.61L555.5 246.54L553.55 243.48L552.25 240.42L548.89 237.36L545.73 234.3ZM577.32 234.3L577.07 237.36L576.82 240.42L576.57 243.48L578.29 246.54L579.52 249.61L582.14 252.67L583.06 255.73L584.19 258.79L586.95 261.85L587.95 264.91L590.18 267.97L590.67 271.03L593.24 274.09L593.78 277.16L595.57 280.22L596.87 283.28L600.21 286.34L602.05 289.4L602.63 289.4L603.19 286.34L604.26 283.28L602.13 280.22L601.08 277.16L599.6 274.09L597.19 271.03L595.88 267.97L594.96 264.91L592.52 261.85L590.57 258.79L589.78 255.73L587.96 252.67L587.09 249.61L584.73 246.54L583.05 243.48L582.48 240.42L578.6 237.36L575.56 234.3ZM607.06 234.3L606.81 237.36L606.56 240.42L607.29 243.48L607.93 246.54L610.47 249.61L611.13 252.67L612.43 255.73L614.48 258.79L616.17 261.85L617.83 264.91L618.91 267.97L620.24 271.03L622.74 274.09L623.64 277.16L625.07 280.22L627.76 283.28L629.21 286.34L631.44 289.4L633.4 289.4L633.7 286.34L632.82 283.28L632.47 280.22L630.41 277.16L628.43 274.09L626.92 271.03L626.08 267.97L623.79 264.91L621.89 261.85L621.01 258.79L620.08 255.73L618.04 252.67L616.51 249.61L614.43 246.54L613.28 243.48L611.81 240.42L609.27 237.36L605.49 234.3ZM636.8 234.3L636.55 237.36L636.3 240.42L636.47 243.48L638.17 246.54L638.97 249.61L641.48 252.67L643.27 255.73L643.82 258.79L645.86 261.85L647.35 264.91L649.41 267.97L651.13 271.03L652.18 274.09L653.32 277.16L654.99 280.22L656.55 283.28L659.03 286.34L661.46 289.4L661.96 289.4L662.76 286.34L663.38 283.28L661.01 280.22L659.59 277.16L658.93 274.09L657.06 271.03L654.8 267.97L653.5 264.91L652.18 261.85L650.03 258.79L648.7 255.73L647.68 252.67L646.15 249.61L644.45 246.54L642.5 243.48L640.96 240.42L639.01 237.36L635.52 234.3ZM666.54 234.3L666.29 237.36L666.04 240.42L666.08 243.48L667.69 246.54L668.7 249.61L671.29 252.67L672.11 255.73L674.12 258.79L675.56 261.85L676.98 264.91L679.41 267.97L679.66 271.03L682.07 274.09L683.21 277.16L685.5 280.22L687.09 283.28L688.59 286.34L690.91 289.4L692.67 289.4L693.31 286.34L692.9 283.28L691.52 280.22L690.1 277.16L687.65 274.09L686.56 271.03L685.29 267.97L683.35 264.91L682.62 261.85L680.09 258.79L678.54 255.73L677.65 252.67L676.45 249.61L673.6 246.54L672.35 243.48L670.56 240.42L667.98 237.36L665.68 234.3ZM696.28 234.3L696.03 237.36L695.78 240.42L696.56 243.48L697.21 246.54L698.61 249.61L700.46 252.67L702.54 255.73L703.12 258.79L705.19 261.85L707.45 264.91L708.86 267.97L709.42 271.03L711.24 274.09L712.68 277.16L714.07 280.22L716.19 283.28L717.97 286.34L720.48 289.4L722.34 289.4L722.86 286.34L722.75 283.28L720.87 280.22L719.7 277.16L717.36 274.09L716.29 271.03L714.9 267.97L713.07 264.91L711.17 261.85L709.94 258.79L709.19 255.73L707.43 252.67L706.11 249.61L703.74 246.54L702.67 243.48L700.66 240.42L697.64 237.36L694.76 234.3ZM726.02 234.3L725.77 237.36L725.52 240.42L725.94 243.48L727.79 246.54L729.02 249.61L730.3 252.67L731.35 255.73L733.29 258.79L734.78 261.85L736.52 264.91L737.75 267.97L739.42 271.03L741.12 274.09L742.42 277.16L744.75 280.22L746.31 283.28L748.07 286.34L749.95 289.4L751.63 289.4L752.12 286.34L751.77 283.28L750.94 280.22L749.42 277.16L747.63 274.09L745.61 271.03L744.85 267.97L743.02 264.91L741.01 261.85L739.92 258.79L738.2 255.73L736.65 252.67L734.66 249.61L733.3 246.54L732.75 243.48L730.81 240.42L728.41 237.36L724.54 234.3ZM755.76 234.3L755.51 237.36L755.26 240.42L755.33 243.48L757.47 246.54L758.41 249.61L759.49 252.67L761.71 255.73L763.07 258.79L764.34 261.85L766.01 264.91L767.59 267.97L769.58 271.03L770.72 274.09L772.86 277.16L774.38 280.22L776.24 283.28L777.73 286.34L780.84 289.4L781.24 289.4L781.83 286.34L782.83 283.28L780.7 280.22L779.11 277.16L777.47 274.09L775.77 271.03L773.66 267.97L773.05 264.91L770.8 261.85L770.33 258.79L767.84 255.73L766.03 252.67L765.55 249.61L763.94 246.54L761.54 243.48L760.16 240.42L757.75 237.36L755.18 234.3ZM785.5 234.3L785.25 237.36L785 240.42L784.75 243.48L787.13 246.54L787.84 249.61L790.4 252.67L791.1 255.73L793.42 258.79L794.87 261.85L796.44 264.91L797.46 267.97L799.74 271.03L800.92 274.09L802.68 277.16L804.41 280.22L804.99 283.28L807.94 286.34L809.6 289.4L810.56 289.4L811.41 286.34L811.74 283.28L810.77 280.22L808.96 277.16L807.11 274.09L806.12 271.03L804.46 267.97L802.29 264.91L800.62 261.85L799.26 258.79L797.85 255.73L795.65 252.67L795.23 249.61L793.13 246.54L791.52 243.48L790.31 240.42L786.7 237.36L783.78 234.3ZM815.24 234.3L814.99 237.36L814.74 240.42L814.66 243.48L816.97 246.54L817.91 249.61L819.99 252.67L821.03 255.73L822.81 258.79L823.82 261.85L825.32 264.91L827.09 267.97L828.47 271.03L829.89 274.09L831.63 277.16L833.37 280.22L835.23 283.28L837.1 286.34L839.17 289.4L841.53 289.4L840.9 286.34L841.47 283.28L839.71 280.22L838.7 277.16L837.06 274.09L835.15 271.03L833.82 267.97L832.88 264.91L830.26 261.85L829.57 258.79L827.86 255.73L826.69 252.67L824.62 249.61L822.59 246.54L821.75 243.48L819.59 240.42L817.11 237.36L813.8 234.3ZM844.98 234.3L844.73 237.36L844.48 240.42L844.23 243.48L845.7 246.54L847.6 249.61L849.09 252.67L850.24 255.73L853.13 258.79L854.09 261.85L856.02 264.91L857.04 267.97L859.2 271.03L860.98 274.09L862.5 277.16L863.72 280.22L865.57 283.28L867.29 286.34L869.36 289.4L870.54 289.4L870.89 286.34L870.73 283.28L869.48 280.22L868.13 277.16L866.14 274.09L865.51 271.03L864 267.97L862.34 264.91L860.88 261.85L858.2 258.79L856.92 255.73L855.78 252.67L854.55 249.61L852.04 246.54L850.61 243.48L849.05 240.42L847.25 237.36L844.47 234.3ZM874.72 234.3L874.47 237.36L874.22 240.42L874.16 243.48L876.61 246.54L878.07 249.61L879.46 252.67L881.35 255.73L882.87 258.79L883.66 261.85L884.9 264.91L887.16 267.97L888.23 271.03L889.84 274.09L891.11 277.16L893 280.22L894.33 283.28L897.46 286.34L899.44 289.4L900.47 289.4L901.51 286.34L901.3 283.28L899.77 280.22L898.2 277.16L897.13 274.09L894.44 271.03L893.94 267.97L891.44 264.91L890.48 261.85L888.23 258.79L886.97 255.73L884.95 252.67L883.69 249.61L881.96 246.54L880.86 243.48L879.11 240.42L875.84 237.36L873.31 234.3ZM904.46 234.3L904.21 237.36L903.96 240.42L904.48 243.48L905.58 246.54L906.75 249.61L908.83 252.67L910.88 255.73L912.58 258.79L913.95 261.85L915.78 264.91L917.17 267.97L917.87 271.03L919.72 274.09L921.86 277.16L922.6 280.22L923.88 283.28L927.06 286.34L928.64 289.4L930.62 289.4L930.73 286.34L930.95 283.28L929.51 280.22L927.32 277.16L926.23 274.09L925.05 271.03L923.35 267.97L920.88 264.91L919.95 261.85L918.83 258.79L917.01 255.73L914.87 252.67L914.36 249.61L912.63 246.54L911.24 243.48L908.72 240.42L906.96 237.36L902.77 234.3ZM934.2 234.3L933.95 237.36L933.7 240.42L934.21 243.48L935.69 246.54L936.34 249.61L938.32 252.67L939.83 255.73L941.98 258.79L942.75 261.85L944.79 264.91L945.86 267.97L948.11 271.03L949.1 274.09L951.35 277.16L952.45 280.22L954.08 283.28L956.58 286.34L959.19 289.4L959.81 289.4L960.38 286.34L960.12 283.28L958.78 280.22L957.82 277.16L956.62 274.09L954.16 271.03L953.41 267.97L950.71 264.91L949.94 261.85L947.66 258.79L946.69 255.73L945.16 252.67L943.19 249.61L941.76 246.54L939.87 243.48L939.25 240.42L935.6 237.36L932.4 234.3ZM963.94 234.3L963.69 237.36L963.44 240.42L963.34 243.48L965.43 246.54L966.63 249.61L968.87 252.67L969.77 255.73L971.9 258.79L973.14 261.85L974.01 264.91L975.56 267.97L977.52 271.03L979.5 274.09L981.38 277.16L981.72 280.22L983.91 283.28L986.09 286.34L988.72 289.4L989.83 289.4L989.97 286.34L990.16 283.28L988.98 280.22L987.86 277.16L985.44 274.09L984.41 271.03L982.35 267.97L981.53 264.91L979.47 261.85L978.34 258.79L976.06 255.73L974.37 252.67L972.64 249.61L971.24 246.54L970.3 243.48L969.1 240.42L965.44 237.36L962.13 234.3ZM993.68 234.3L993.43 237.36L993.18 240.42L993.71 243.48L995.37 246.54L996.88 249.61L998.02 252.67L1000.13 255.73L1001.74 258.79L1002.54 261.85L1004.36 264.91L1006.28 267.97L1007.45 271.03L1009.1 274.09L1009.99 277.16L1011.84 280.22L1013.34 283.28L1015.25 286.34L1018.15 289.4L1019.5 289.4L1019.57 286.34L1019.97 283.28L1018.92 280.22L1016.98 277.16L1014.88 274.09L1013.31 271.03L1012 267.97L1010.17 264.91L1009.2 261.85L1006.92 258.79L1006.65 255.73L1003.78 252.67L1002.36 249.61L1001.66 246.54L999.42 243.48L998.38 240.42L995.02 237.36L992.82 234.3ZM1023.42 234.3L1023.17 237.36L1022.92 240.42L1023.31 243.48L1024.04 246.54L1025.65 249.61L1027.26 252.67L1029.12 255.73L1031.14 258.79L1033.12 261.85L1034.05 264.91L1035.47 267.97L1037.52 271.03L1038.56 274.09L1040.27 277.16L1041.77 280.22L1042.8 283.28L1045.01 286.34L1048.03 289.4L1049.02 289.4L1049.75 286.34L1050.3 283.28L1048.2 280.22L1046.51 277.16L1045.04 274.09L1043.24 271.03L1041.74 267.97L1041.02 264.91L1038.99 261.85L1037.87 258.79L1035.75 255.73L1034.79 252.67L1032.3 249.61L1030.96 246.54L1030 243.48L1028.6 240.42L1024.68 237.36L1022.26 234.3ZM1053.16 234.3L1052.91 237.36L1052.66 240.42L1053.21 243.48L1053.84 246.54L1055.65 249.61L1057.44 252.67L1058.97 255.73L1060.92 258.79L1062.91 261.85L1063.55 264.91L1065.8 267.97L1067.12 271.03L1068.85 274.09L1070.22 277.16L1072.21 280.22L1072.5 283.28L1075.71 286.34L1077.01 289.4L1079.23 289.4L1079.56 286.34L1080.18 283.28L1078.2 280.22L1076.52 277.16L1074.25 274.09L1072.7 271.03L1072.16 267.97L1069.94 264.91L1069.09 261.85L1066.49 258.79L1065.2 255.73L1064.44 252.67L1062.79 249.61L1060.47 246.54L1058.62 243.48L1057.71 240.42L1054.71 237.36L1052.11 234.3ZM1082.9 234.3L1082.65 237.36L1082.4 240.42L1082.67 243.48L1083.75 246.54L1085.77 249.61L1086.75 252.67L1088.8 255.73L1090.31 258.79L1092.21 261.85L1093.52 264.91L1094.94 267.97L1096.11 271.03L1097.76 274.09L1099.37 277.16L1100.88 280.22L1103.04 283.28L1104.94 286.34L1107.92 289.4L1108.44 289.4L1109.29 286.34L1109.34 283.28L1107.54 280.22L1105.97 277.16L1104.74 274.09L1103.4 271.03L1101.89 267.97L1100.2 264.91L1098.97 261.85L1096.64 258.79L1094.59 255.73L1094.2 252.67L1092.59 249.61L1090.43 246.54L1089.58 243.48L1088.06 240.42L1084.17 237.36L1081.77 234.3ZM1112.64 234.3L1112.39 237.36L1112.14 240.42L1111.89 243.48L1114.38 246.54L1115.73 249.61L1117.09 252.67L1118.1 255.73L1120.52 258.79L1121.15 261.85L1122.88 264.91L1124.89 267.97L1125.87 271.03L1128.08 274.09L1130.12 277.16L1130.9 280.22L1132.96 283.28L1135.34 286.34L1136.85 289.4L1138.03 289.4L1139.25 286.34L1138.76 283.28L1138.12 280.22L1136.19 277.16L1134.92 274.09L1133.17 271.03L1131.39 267.97L1129.25 264.91L1128.51 261.85L1126.97 258.79L1125.61 255.73L1123.19 252.67L1121.95 249.61L1119.64 246.54L1118.46 243.48L1117.52 240.42L1114.43 237.36L1112.01 234.3ZM1142.38 234.3L1142.13 237.36L1141.88 240.42L1141.63 243.48L1143.44 246.54L1144.82 249.61L1146.58 252.67L1148.94 255.73L1149.98 258.79L1151.08 261.85L1152.47 264.91L1154.8 267.97L1156.7 271.03L1157.79 274.09L1159.95 277.16L1161.35 280.22L1162.63 283.28L1163.92 286.34L1167.6 289.4L1168.38 289.4L1168.77 286.34L1168.19 283.28L1166.62 280.22L1165.4 277.16L1163.57 274.09L1161.98 271.03L1160.38 267.97L1160.03 264.91L1158.48 261.85L1156.07 258.79L1154.73 255.73L1153.48 252.67L1151.53 249.61L1150.44 246.54L1149.08 243.48L1146.57 240.42L1144.77 237.36L1141.23 234.3ZM1172.12 234.3L1171.87 237.36L1171.62 240.42L1172.48 243.48L1173.97 246.54L1175.55 249.61L1176.49 252.67L1178.32 255.73L1179.79 258.79L1180.61 261.85L1183.4 264.91L1183.77 267.97L1186.52 271.03L1186.79 274.09L1189.27 277.16L1190.68 280.22L1192.56 283.28L1193.71 286.34L1197.33 289.4L1198.33 289.4L1198.82 286.34L1197.83 283.28L1197.33 280.22L1195.43 277.16L1194.3 274.09L1191.61 271.03L1191.23 267.97L1188.5 264.91L1187.62 261.85L1186.63 258.79L1184.62 255.73L1183.03 252.67L1180.66 249.61L1180.28 246.54L1178.84 243.48L1177.26 240.42L1173.7 237.36L1170.41 234.3ZM1201.86 234.3L1201.61 237.36L1201.36 240.42L1201.21 243.48L1202.67 246.54L1204.4 249.61L1206.56 252.67L1208.21 255.73L1208.78 258.79L1210.57 261.85L1212.37 264.91L1213.88 267.97L1216.2 271.03L1217.03 274.09L1219.15 277.16L1220.08 280.22L1221.7 283.28L1224.19 286.34L1226.37 289.4L1228.05 289.4L1228.49 286.34L1227.98 283.28L1227.12 280.22L1225.54 277.16L1223.07 274.09L1222.71 271.03L1220.26 267.97L1219.58 264.91L1216.93 261.85L1216.14 258.79L1214.26 255.73L1212.88 252.67L1210.84 249.61L1209.14 246.54L1208.48 243.48L1206.42 240.42L1203.88 237.36L1200.43 234.3ZM1231.6 234.3L1231.35 237.36L1231.1 240.42L1230.85 243.48L1233.47 246.54L1233.98 249.61L1235.35 252.67L1237.1 255.73L1239.14 258.79L1240.76 261.85L1242.27 264.91L1243.21 267.97L1244.77 271.03L1247.29 274.09L1248.49 277.16L1249.81 280.22L1251.33 283.28L1254.46 286.34L1256.28 289.4L1257.82 289.4L1257.83 286.34L1258.42 283.28L1256.55 280.22L1254.41 277.16L1253.92 274.09L1251.49 271.03L1249.81 267.97L1249.26 264.91L1247.44 261.85L1245.56 258.79L1243.42 255.73L1242.11 252.67L1240.6 249.61L1238.65 246.54L1237.37 243.48L1235.95 240.42L1234.04 237.36L1230.94 234.3ZM1261.34 234.3L1261.09 237.36L1260.84 240.42L1261.2 243.48L1262.56 246.54L1263.9 249.61L1266.26 252.67L1267.17 255.73L1268.79 258.79L1270.99 261.85L1272.58 264.91L1274.07 267.97L1275.11 271.03L1276.37 274.09L1278.54 277.16L1279.91 280.22L1281.98 283.28L1282.97 286.34L1285.67 289.4L1287.16 289.4L1287.89 286.34L1287.45 283.28L1285.71 280.22L1284.26 277.16L1282.6 274.09L1282.18 271.03L1279.46 267.97L1278.87 264.91L1276.44 261.85L1275.01 258.79L1273.74 255.73L1272.23 252.67L1270.36 249.61L1269.17 246.54L1267.25 243.48L1265.53 240.42L1262.87 237.36L1259.7 234.3ZM1291.08 234.3L1290.83 237.36L1290.58 240.42L1291.33 243.48L1292.23 246.54L1294.52 249.61L1295.44 252.67L1297.5 255.73L1298.37 258.79L1299.75 261.85L1302.14 264.91L1303.86 267.97L1305.26 271.03L1306.84 274.09L1307.51 277.16L1309.25 280.22L1311.68 283.28L1313.3 286.34L1316.03 289.4L1316.97 289.4L1317.15 286.34L1316.83 283.28L1315.57 280.22L1314.81 277.16L1313.23 274.09L1311.54 271.03L1309.94 267.97L1308.78 264.91L1307.02 261.85L1304.56 258.79L1303.43 255.73L1301.57 252.67L1300.28 249.61L1298.81 246.54L1297.18 243.48L1295.26 240.42L1293.35 237.36L1290.3 234.3ZM1320.82 234.3L1320.57 237.36L1320.32 240.42L1320.7 243.48L1321.91 246.54L1322.97 249.61L1325.61 252.67L1326.98 255.73L1328.6 258.79L1329.63 261.85L1331.02 264.91L1333.28 267.97L1334.34 271.03L1336.72 274.09L1338.34 277.16L1339.92 280.22L1340.6 283.28L1343.05 286.34L1344.71 289.4L1347.07 289.4L1347.09 286.34L1346.92 283.28L1346.05 280.22L1344.27 277.16L1342.25 274.09L1341.58 271.03L1340.04 267.97L1338.06 264.91L1335.97 261.85L1334.75 258.79L1333.55 255.73L1331.22 252.67L1329.56 249.61L1328.27 246.54L1326.9 243.48L1325.97 240.42L1323.15 237.36L1320 234.3ZM1350.56 234.3L1350.31 237.36L1350.06 240.42L1350.33 243.48L1352.43 246.54L1353.03 249.61L1355.64 252.67L1356.07 255.73L1357.45 258.79L1359.7 261.85L1361.5 264.91L1362.5 267.97L1364.53 271.03L1365.82 274.09L1366.9 277.16L1369.65 280.22L1369.95 283.28L1372.44 286.34L1375.01 289.4L1375.78 289.4L1377.12 286.34L1376.37 283.28L1375.95 280.22L1373.81 277.16L1372.19 274.09L1371.01 271.03L1369.53 267.97L1367.91 264.91L1365.71 261.85L1363.98 258.79L1363.28 255.73L1361.38 252.67L1359.83 249.61L1358.78 246.54L1356.85 243.48L1355.45 240.42L1352.27 237.36L1350 234.3ZM1380.3 234.3L1380.05 237.36L1379.8 240.42L1379.55 243.48L1381.16 246.54L1383.13 249.61L1384.54 252.67L1385.9 255.73L1388.1 258.79L1389.18 261.85L1390.87 264.91L1392.67 267.97L1393.79 271.03L1395.56 274.09L1397.72 277.16L1398.58 280.22L1400.98 283.28L1402.36 286.34L1405.18 289.4L1405.75 289.4L1406.83 286.34L1407.11 283.28L1405.71 280.22L1403.52 277.16L1401.99 274.09L1400.84 271.03L1398.77 267.97L1397.08 264.91L1395.68 261.85L1394.13 258.79L1393.05 255.73L1391.62 252.67L1389.39 249.61L1388.47 246.54L1386.12 243.48L1385.5 240.42L1382.23 237.36L1379.59 234.3Z" fill="#0c540c" stroke="#0c540c" stroke-width="0.5"/><path d="M13.16 237.36L14.59 240.42L14.97 243.48L16.44 246.54L18.07 249.61L19.41 252.67L21.67 255.73L22.87 258.79L24.88 261.85L25.98 264.91L28.11 267.97L29.57 271.03L30.28 274.09L32.06 277.16L34.32 280.22L34.84 283.28L36.92 286.34M42.39 237.36L43.92 240.42L44.46 243.48L46.04 246.54L48.1 249.61L49.32 252.67L51.24 255.73L52.58 258.79L54.22 261.85L56.29 264.91L57.38 267.97L59.03 271.03L60.89 274.09L61.77 277.16L63.3 280.22L65.02 283.28L66.49 286.34M72.78 237.36L74.02 240.42L74.82 243.48L76.28 246.54L77.4 249.61L78.86 252.67L80.4 255.73L82.86 258.79L84.21 261.85L86.04 264.91L86.66 267.97L88.84 271.03L90.25 274.09L92.06 277.16L93.21 280.22L94.85 283.28L95.49 286.34M102.46 237.36L103.36 240.42L103.88 243.48L105.73 246.54L107.67 249.61L108.76 252.67L110.29 255.73L112.59 258.79L113.91 261.85L115.26 264.91L117.27 267.97L118.27 271.03L120.17 274.09L121.27 277.16L123.06 280.22L124.4 283.28L126.07 286.34M131.91 237.36L133.29 240.42L134.24 243.48L135.83 246.54L137.54 249.61L139.26 252.67L140.55 255.73L141.63 258.79L143.47 261.85L144.73 264.91L146.13 267.97L148.15 271.03L149.96 274.09L150.99 277.16L152.64 280.22L153.68 283.28L155.59 286.34M161.79 237.36L163.07 240.42L163.38 243.48L165.72 246.54L166.54 249.61L168.84 252.67L169.78 255.73L171.5 258.79L173.52 261.85L174.43 264.91L176.01 267.97L177.94 271.03L179.71 274.09L181.39 277.16L182.8 280.22L184.02 283.28L185.13 286.34M190.89 237.36L192.76 240.42L193.91 243.48L195.55 246.54L196.69 249.61L198.1 252.67L199.53 255.73L201.52 258.79L203.4 261.85L204.16 264.91L206.38 267.97L207.18 271.03L208.92 274.09L210.51 277.16L212.54 280.22L213.14 283.28L214.73 286.34M220.63 237.36L222.47 240.42L223.52 243.48L224.41 246.54L226.16 249.61L228.2 252.67L229.99 255.73L231.62 258.79L232.33 261.85L234.28 264.91L236.09 267.97L237.4 271.03L239.15 274.09L240.22 277.16L241.66 280.22L242.66 283.28L244.15 286.34M251.23 237.36L252.61 240.42L252.83 243.48L255.04 246.54L256.44 249.61L258.04 252.67L259.64 255.73L260.79 258.79L262.85 261.85L264.39 264.91L265.77 267.97L267.41 271.03L268.97 274.09L270.17 277.16L272.05 280.22L272.36 283.28L274.2 286.34M280.74 237.36L281.59 240.42L283.24 243.48L284.03 246.54L285.91 249.61L287.17 252.67L289.06 255.73L290.74 258.79L291.75 261.85L294.2 264.91L295.24 267.97L296.91 271.03L298.54 274.09L299.87 277.16L301.36 280.22L302.69 283.28L304.16 286.34M310.31 237.36L311.71 240.42L312.83 243.48L314.14 246.54L316.17 249.61L317.69 252.67L319.04 255.73L320.11 258.79L321.54 261.85L323.89 264.91L325.34 267.97L326.74 271.03L328.04 274.09L329.52 277.16L331.5 280.22L332.34 283.28L333.93 286.34M340.01 237.36L341.77 240.42L342.71 243.48L343.78 246.54L345.29 249.61L346.58 252.67L348.92 255.73L349.69 258.79L351.25 261.85L353.3 264.91L354.78 267.97L356.55 271.03L357.72 274.09L359.76 277.16L360.63 280.22L361.73 283.28L363.74 286.34M369.23 237.36L371.28 240.42L372.07 243.48L373.66 246.54L375.62 249.61L376.87 252.67L378.59 255.73L379.41 258.79L381.46 261.85L383.26 264.91L384.12 267.97L385.68 271.03L387.9 274.09L389.63 277.16L390.37 280.22L391.89 283.28L392.96 286.34M399.91 237.36L400.57 240.42L401.58 243.48L402.95 246.54L405.04 249.61L406.74 252.67L407.7 255.73L409.15 258.79L411.11 261.85L412.8 264.91L414.69 267.97L415.38 271.03L417.01 274.09L418.65 277.16L420.25 280.22L421.23 283.28L423.27 286.34M429.55 237.36L430.76 240.42L431.65 243.48L433.57 246.54L434.4 249.61L436.23 252.67L437.41 255.73L439.6 258.79L440.39 261.85L442.77 264.91L444.36 267.97L445.9 271.03L446.73 274.09L448.48 277.16L450.49 280.22L450.83 283.28L452.78 286.34M458.63 237.36L460.6 240.42L461.04 243.48L462.69 246.54L464.42 249.61L465.74 252.67L467.34 255.73L468.96 258.79L470.8 261.85L471.95 264.91L473.46 267.97L475.55 271.03L476.71 274.09L478.89 277.16L480.07 280.22L481.2 283.28L482.37 286.34M488.67 237.36L490.52 240.42L491.32 243.48L492.66 246.54L493.78 249.61L495.95 252.67L497.65 255.73L498.85 258.79L500.22 261.85L501.93 264.91L503.14 267.97L505.27 271.03L507.11 274.09L508.2 277.16L509.97 280.22L511.05 283.28L511.97 286.34M518.21 237.36L520.14 240.42L520.97 243.48L522.17 246.54L523.95 249.61L525.72 252.67L526.5 255.73L528.25 258.79L530.08 261.85L531.32 264.91L533.12 267.97L534.87 271.03L536.04 274.09L537.95 277.16L539.25 280.22L540.52 283.28L541.85 286.34M547.7 237.36L549.9 240.42L550.5 243.48L551.77 246.54L553.4 249.61L555.06 252.67L556.46 255.73L557.86 258.79L560.26 261.85L561.88 264.91L563.14 267.97L564.91 271.03L566.02 274.09L567.97 277.16L568.95 280.22L570.44 283.28L571.82 286.34M578.26 237.36L579 240.42L579.82 243.48L582 246.54L583.15 249.61L585.3 252.67L586.83 255.73L588.24 258.79L589.22 261.85L591.35 264.91L593.15 267.97L594.23 271.03L595.42 274.09L597.13 277.16L598.78 280.22L600.14 283.28L601.19 286.34M607.62 237.36L608.87 240.42L610.01 243.48L611.66 246.54L612.94 249.61L614.8 252.67L616.49 255.73L617.78 258.79L619.34 261.85L621.24 264.91L622.64 267.97L624.04 271.03L626.03 274.09L626.82 277.16L628.99 280.22L629.34 283.28L631.34 286.34M637.68 237.36L638.6 240.42L639.44 243.48L640.91 246.54L643.01 249.61L644.71 252.67L646.23 255.73L647.07 258.79L648.98 261.85L650.5 264.91L651.91 267.97L654.23 271.03L654.87 274.09L656.88 277.16L658.71 280.22L659.9 283.28L660.62 286.34M666.82 237.36L668.51 240.42L669.11 243.48L671.04 246.54L672.22 249.61L673.82 252.67L675.4 255.73L677.21 258.79L678.62 261.85L680.32 264.91L682.43 267.97L683.68 271.03L685.43 274.09L686.33 277.16L688.07 280.22L688.73 283.28L690.91 286.34M697.01 237.36L698.05 240.42L698.87 243.48L700.51 246.54L702.51 249.61L703.77 252.67L705.31 255.73L707.35 258.79L708.28 261.85L709.91 264.91L711.52 267.97L712.96 271.03L714.34 274.09L715.89 277.16L718.06 280.22L718.96 283.28L720.77 286.34M726.14 237.36L728.14 240.42L729 243.48L730.44 246.54L731.86 249.61L733.35 252.67L734.69 255.73L736.57 258.79L738.68 261.85L739.92 264.91L741.18 267.97L743.15 271.03L744.23 274.09L746.08 277.16L747.79 280.22L749.09 283.28L750.06 286.34M756.54 237.36L758.08 240.42L758.84 243.48L760.68 246.54L762.1 249.61L763 252.67L765.02 255.73L766.46 258.79L768.09 261.85L769.46 264.91L770.94 267.97L772.97 271.03L774.32 274.09L775.58 277.16L777.16 280.22L778.2 283.28L779.61 286.34M786.15 237.36L788.07 240.42L788.86 243.48L789.59 246.54L791.7 249.61L793 252.67L794.77 255.73L796.1 258.79L798.2 261.85L799.82 264.91L800.45 267.97L802.67 271.03L803.64 274.09L805.13 277.16L806.94 280.22L808.34 283.28L810.17 286.34M815.61 237.36L816.95 240.42L817.81 243.48L819.68 246.54L821.75 249.61L822.52 252.67L824.75 255.73L825.93 258.79L827.42 261.85L829.38 264.91L830.53 267.97L831.76 271.03L833.81 274.09L835.48 277.16L837.01 280.22L837.63 283.28L839.86 286.34M845.7 237.36L847.42 240.42L847.73 243.48L849.57 246.54L850.85 249.61L852.34 252.67L854.53 255.73L855.51 258.79L856.84 261.85L858.65 264.91L860.62 267.97L861.65 271.03L863.75 274.09L865.11 277.16L866.81 280.22L867.27 283.28L868.76 286.34M875.35 237.36L876.46 240.42L877.95 243.48L879.36 246.54L880.69 249.61L882.47 252.67L883.78 255.73L885.31 258.79L886.72 261.85L888.65 264.91L890.19 267.97L891.7 271.03L892.78 274.09L894.93 277.16L896.32 280.22L897.43 283.28L898.99 286.34M905.38 237.36L906.86 240.42L907.4 243.48L909.32 246.54L910.77 249.61L911.69 252.67L913.47 255.73L914.77 258.79L916.27 261.85L918.14 264.91L920.22 267.97L921.75 271.03L922.6 274.09L924.23 277.16L926 280.22L927.42 283.28L928.75 286.34M934.72 237.36L936.33 240.42L937.53 243.48L938.5 246.54L940.42 249.61L941.52 252.67L943.42 255.73L944.69 258.79L946.84 261.85L947.82 264.91L949.95 267.97L951.34 271.03L952.68 274.09L954.72 277.16L955.74 280.22L957.06 283.28L958.48 286.34M964.97 237.36L966.54 240.42L967.32 243.48L968.29 246.54L970.29 249.61L971.67 252.67L973.28 255.73L975.14 258.79L975.78 261.85L977.74 264.91L979.24 267.97L981.06 271.03L982.18 274.09L984.52 277.16L985.3 280.22L986.42 283.28L987.76 286.34M994.2 237.36L996.16 240.42L996.17 243.48L998.48 246.54L999.35 249.61L1001.73 252.67L1002.85 255.73L1004.29 258.79L1006.06 261.85L1007.88 264.91L1009.54 267.97L1010.55 271.03L1011.71 274.09L1013.42 277.16L1015.65 280.22L1016.53 283.28L1018.07 286.34M1023.71 237.36L1025.15 240.42L1026.18 243.48L1027.69 246.54L1029.42 249.61L1030.73 252.67L1032.81 255.73L1034.11 258.79L1035.2 261.85L1037.16 264.91L1039.28 267.97L1039.89 271.03L1042.04 274.09L1043.97 277.16L1044.94 280.22L1046.13 283.28L1047.47 286.34M1053.64 237.36L1055.47 240.42L1056.53 243.48L1058.03 246.54L1058.75 249.61L1061.02 252.67L1062.24 255.73L1064.12 258.79L1065.31 261.85L1066.94 264.91L1068.49 267.97L1069.74 271.03L1071.5 274.09L1073.48 277.16L1074.38 280.22L1075.39 283.28L1077.67 286.34M1083.55 237.36L1085.01 240.42L1086.27 243.48L1087.18 246.54L1089.11 249.61L1090.21 252.67L1091.8 255.73L1093.84 258.79L1095.24 261.85L1096.49 264.91L1097.86 267.97L1100.18 271.03L1101.3 274.09L1103.2 277.16L1104.48 280.22L1105.63 283.28L1107.14 286.34M1112.72 237.36L1114.8 240.42L1115.28 243.48L1116.89 246.54L1118.41 249.61L1119.85 252.67L1121.77 255.73L1123.12 258.79L1124.7 261.85L1126.25 264.91L1128.05 267.97L1129.97 271.03L1130.82 274.09L1133.09 277.16L1134.64 280.22L1135.36 283.28L1136.86 286.34M1143.3 237.36L1144.79 240.42L1145.29 243.48L1146.41 246.54L1148.42 249.61L1149.64 252.67L1151.55 255.73L1152.94 258.79L1154.65 261.85L1155.91 264.91L1157.98 267.97L1159.26 271.03L1160.89 274.09L1162.05 277.16L1164.02 280.22L1165.05 283.28L1167.03 286.34M1172.59 237.36L1174.08 240.42L1174.86 243.48L1176.09 246.54L1178.41 249.61L1179.46 252.67L1181.35 255.73L1182.85 258.79L1184.23 261.85L1186.13 264.91L1187.47 267.97L1188.81 271.03L1191.03 274.09L1191.88 277.16L1193.42 280.22L1194.49 283.28L1196.28 286.34M1201.94 237.36L1203.99 240.42L1204.63 243.48L1205.88 246.54L1208.29 249.61L1209.08 252.67L1210.71 255.73L1212.94 258.79L1214.59 261.85L1216.12 264.91L1217.1 267.97L1219.25 271.03L1220.03 274.09L1222.16 277.16L1223.96 280.22L1224.17 283.28L1225.67 286.34M1232.13 237.36L1233.42 240.42L1234.93 243.48L1236.53 246.54L1237.14 249.61L1239.44 252.67L1240.64 255.73L1241.86 258.79L1243.53 261.85L1245.11 264.91L1247.23 267.97L1248.27 271.03L1249.64 274.09L1251.41 277.16L1253.55 280.22L1254.21 283.28L1255.93 286.34M1261.9 237.36L1263.89 240.42L1264.24 243.48L1265.67 246.54L1266.86 249.61L1268.92 252.67L1270.25 255.73L1272.12 258.79L1273.74 261.85L1275.14 264.91L1276.33 267.97L1278.3 271.03L1279.85 274.09L1281.57 277.16L1283.46 280.22L1283.73 283.28L1285.46 286.34M1292.05 237.36L1293.64 240.42L1294.11 243.48L1295.1 246.54L1297.26 249.61L1298.27 252.67L1300.71 255.73L1302.16 258.79L1303.16 261.85L1304.6 264.91L1306.67 267.97L1308.3 271.03L1310.09 274.09L1311.29 277.16L1312.36 280.22L1313.92 283.28L1314.82 286.34M1321.42 237.36L1322.92 240.42L1323.95 243.48L1325.02 246.54L1326.54 249.61L1328.48 252.67L1329.7 255.73L1331.35 258.79L1332.66 261.85L1334.21 264.91L1336.07 267.97L1337.81 271.03L1339.79 274.09L1341.05 277.16L1342.38 280.22L1343.34 283.28L1344.73 286.34M1351.05 237.36L1352.76 240.42L1353.69 243.48L1354.92 246.54L1356.73 249.61L1358.32 252.67L1359.82 255.73L1360.81 258.79L1363.04 261.85L1364.02 264.91L1365.51 267.97L1367.49 271.03L1368.6 274.09L1370.22 277.16L1372.1 280.22L1373.14 283.28L1374.34 286.34M1381.09 237.36L1382.88 240.42L1383.35 243.48L1384.92 246.54L1386.25 249.61L1388.03 252.67L1389.17 255.73L1391.28 258.79L1392.61 261.85L1394.61 264.91L1395.54 267.97L1397.47 271.03L1398.34 274.09L1400.3 277.16L1402.22 280.22L1402.67 283.28L1404.59 286.34" stroke="#00e000" stroke-width="2.7" stroke-linecap="round"/><path d="M28 666.74L29 667.01L30 665.17L31 665.53L32 667.62L33 667.8L34 671.18L35 673.84L36 678.09L37 672.52L38 670.14L39 666.8L40 665.76L41 665.44L42 665.99L43 666.41L44 666.06L45 664.85L46 662.02L47 657.97L48 654.5L49 654.48L50 655.53L51 655.18L52 655.32L53 656.55L54 656.32L55 660.02L56 662.87L57 663.74L58 664.78L59 664.64L60 665.85L61 667.34L62 666.87L63 666.65L64 670.8L65 673.01L66 674.72L67 672.76L68 670.05L69 667.74L70 665.67L71 667.21L72 667.21L73 665.32L74 665.54L75 660.77L76 655.49L77 654.55L78 654.45L79 655.49L80 654.48L81 655.27L82 654.12L83 655.39L84 660.05L85 663.68L86 666.47L87 667.6L88 667.42L89 667.14L90 666.79L91 667.33L92 668.52L93 668.5L94 672.31L95 672.8L96 673.84L97 670.24L98 669.64L99 666.88L100 665.84L101 665.67L102 665.79L103 665.43L104 664.57L105 661.88L106 659.46L107 658.13L108 657.38L109 656.07L110 657.86L111 657.63L112 658.07L113 656.35L114 659.07L115 660.58L116 665.15L117 664.73L118 664.95L119 666.83L120 665.31L121 666.64L122 667.76L123 668.13L124 670.21L125 673.98L126 672.43L127 670.87L128 666.96L129 665.59L130 664.08L131 664.23L132 661L133 660.71L134 656.28L135 657.97L136 656.27L137 656.83L138 658.17L139 656.6L140 656.66L141 657.88L142 657.15L143 657.68L144 662.33L145 662.55L146 662.56L147 663.58L148 664.52L149 665.11L150 663.88L151 664.71L152 664.46L153 668.26L154 671.82L155 674.56L156 676.04L157 672.28L158 669.12L159 666.42L160 665.63L161 664.81L162 665.63L163 664.58L164 663.84L165 662.91L166 660L167 654.26L168 655.01L169 654.54L170 654.84L171 653.95L172 655.91L173 654.22L174 655.06L175 654.61L176 653.65L177 655.11L178 658.05L179 661.79L180 664.03L181 665.24L182 666.95L183 671.94L184 675.34L185 677.36L186 674.24L187 671.39L188 666.56L189 665.91L190 665.53L191 666.42L192 666.58L193 667.08L194 663.8L195 659.26L196 657.55L197 657.8L198 656.55L199 656.62L200 657.52L201 656.8L202 658.27L203 657.11L204 660.14L205 663.79L206 665.88L207 666.19L208 667.26L209 667.46L210 667.43L211 668.57L212 669.29L213 673.64L214 676.46L215 673.45L216 670.54L217 668.53L218 666.5L219 664.47L220 664.83L221 664.56L222 663.22L223 662.48L224 662.9L225 658.67L226 655.86L227 656.14L228 655.39L229 654.62L230 656.29L231 654.82L232 653.97L233 655.57L234 656.45L235 660.12L236 663.98L237 663.95L238 662.75L239 664.17L240 664.44L241 665L242 666.8L243 670.53L244 672.1L245 671.1L246 669.36L247 668.76L248 664.94L249 666.22L250 664.52L251 662.29L252 658.26L253 656.13L254 656.82L255 655.96L256 655.31L257 655.31L258 655.21L259 657.05L260 656.55L261 657.32L262 656.68L263 655.07L264 660.06L265 663.94L266 665.92L267 665.75L268 665.79L269 666.4L270 667.6L271 666.88L272 669.35L273 671.08L274 674.07L275 673.75L276 671.38L277 668.47L278 665.26L279 664.43L280 664.38L281 663.11L282 660.88L283 658.85L284 658.19L285 657.39L286 657.95L287 656.21L288 656.84L289 658.38L290 656.33L291 656.98L292 656.14L293 656.65L294 661.23L295 664.08L296 664.37L297 663.5L298 664.28L299 664.51L300 665.94L301 667.39L302 669.96L303 673.31L304 676.61L305 674.2L306 671.75L307 667.85L308 664.47L309 664.62L310 664.22L311 662.26L312 661.01L313 656.44L314 654.24L315 653.53L316 654.94L317 654.44L318 653.93L319 652.9L320 653.62L321 652.63L322 653.98L323 654.67L324 652.99L325 654.72L326 658.18L327 661.53L328 663.59L329 664.77L330 664.85L331 667.33L332 672.89L333 675.76L334 676.35L335 672.99L336 670.09L337 667.16L338 664.97L339 665.52L340 664.59L341 664.81L342 665.15L343 660.55L344 654.9L345 653.5L346 654.09L347 654.5L348 653.94L349 654.34L350 652.42L351 654.65L352 654.13L353 653.84L354 654.55L355 654.5L356 655.75L357 661.62L358 664.82L359 664.31L360 666.47L361 669.43L362 672.1L363 677.19L364 671.44L365 670.36L366 667.71L367 665.42L368 666.24L369 666.08L370 665.53L371 667.43L372 661.03L373 655.82L374 653.68L375 654.52L376 654.09L377 654.32L378 653.67L379 654.13L380 653.31L381 656.23L382 661.84L383 665.22L384 665.63L385 667.54L386 666.43L387 668.1L388 668.47L389 667.85L390 669.03L391 671.11L392 673.1L393 677.24L394 673.92L395 671.06L396 667.88L397 665.19L398 663.74L399 664.29L400 663.43L401 659.51L402 657.77L403 657.4L404 657.55L405 658.57L406 657.22L407 658.04L408 657.64L409 657.78L410 658.68L411 656.67L412 658.46L413 657.21L414 658.03L415 660.29L416 662.42L417 663.81L418 665.58L419 664.49L420 667.84L421 671.18L422 675.43L423 673.85L424 671.61L425 669.09L426 666.21L427 665.26L428 665.65L429 664.96L430 664.07L431 662.3L432 656.87L433 657.75L434 656.7L435 656.67L436 656.55L437 655.98L438 656.89L439 656.19L440 656.85L441 656.49L442 657.94L443 659L444 661.25L445 665.13L446 666.91L447 665.95L448 665.89L449 666.71L450 668.07L451 671.19L452 672.4L453 676.03L454 673.69L455 668.95L456 666.94L457 665.75L458 664.59L459 665L460 663.24L461 663.92L462 661.12L463 656.43L464 654.12L465 654.74L466 654.25L467 654.27L468 654.55L469 654.71L470 654.27L471 654.81L472 653.16L473 653.96L474 654.07L475 655.97L476 659.71L477 662.27L478 665.03L479 664.46L480 668.8L481 674.05L482 676.6L483 674L484 669.54L485 666.84L486 665.65L487 665.73L488 667.13L489 667.11L490 663.96L491 659.75L492 657.73L493 657L494 658.43L495 657.37L496 657.11L497 657.96L498 656.79L499 657.19L500 658.65L501 656.66L502 656.77L503 658.09L504 661.63L505 665.46L506 666.06L507 666.83L508 667.15L509 668L510 671.01L511 672.48L512 673.54L513 672.27L514 668.36L515 666.34L516 666.49L517 664.72L518 664.79L519 662.48L520 661.99L521 659.61L522 655.23L523 655.57L524 655.19L525 654.67L526 656.12L527 654.67L528 654.86L529 655.21L530 654.49L531 656.5L532 659.08L533 662.21L534 663.19L535 664.64L536 665.02L537 665.05L538 664.5L539 665.94L540 669.13L541 670.9L542 672.25L543 672.18L544 667.91L545 667.66L546 665.51L547 664.81L548 661.45L549 660.11L550 659.41L551 656.81L552 657.04L553 657.63L554 657.2L555 657.14L556 658.39L557 657.01L558 659.12L559 658.34L560 656.9L561 658.94L562 657.36L563 658.75L564 660.82L565 661.69L566 663.28L567 662.84L568 663.8L569 667.81L570 670.5L571 672.71L572 673.4L573 671.56L574 667.49L575 666.03L576 664.93L577 664.71L578 664.5L579 664.56L580 663.99L581 664.07L582 660.64L583 657.4L584 656.19L585 656.3L586 655.85L587 655.34L588 656.33L589 654.52L590 654.38L591 656.09L592 657.72L593 660.53L594 664.6L595 664.9L596 665.72L597 666.2L598 666.62L599 669.91L600 672.31L601 674.08L602 671.54L603 669.05L604 668.18L605 667.18L606 665.39L607 666.56L608 666.58L609 666.51L610 665.04L611 662.26L612 657.12L613 654.66L614 655.59L615 655.75L616 655.7L617 655.98L618 655.88L619 655.34L620 654.31L621 657.06L622 661.49L623 665.82L624 666.73L625 665.83L626 666.65L627 666.89L628 668.88L629 670.3L630 671.08L631 674.6L632 672.51L633 670.17L634 666.99L635 665.37L636 664.9L637 665L638 661.44L639 657.17L640 658.24L641 657.44L642 657.06L643 657.07L644 657.8L645 657.17L646 657.66L647 656.37L648 657.76L649 656.73L650 658.26L651 657.52L652 661.06L653 664.82L654 665.53L655 666.32L656 667.74L657 666.48L658 669.08L659 670.9L660 673.12L661 672.7L662 670.61L663 668.24L664 666.44L665 665.18L666 664.72L667 665.1L668 664.12L669 664.48L670 664.43L671 661.02L672 657.81L673 657.3L674 657.91L675 656.38L676 657.32L677 657.43L678 657.97L679 657.48L680 656.58L681 656.34L682 660.14L683 661.72L684 663.23L685 665.86L686 664.81L687 665.65L688 667.58L689 669.77L690 673.24L691 673.48L692 671.08L693 668.39L694 666.8L695 665.04L696 666.58L697 663.64L698 659.02L699 655.44L700 654.53L701 653.78L702 655.04L703 655.82L704 655.17L705 654.82L706 655.55L707 655.82L708 653.99L709 654.35L710 655.94L711 655.85L712 654.11L713 659.4L714 664.47L715 667.03L716 668.15L717 668.6L718 670.13L719 672.31L720 674.17L721 673.72L722 669.76L723 668.23L724 665.71L725 665.71L726 666.88L727 665.39L728 665.48L729 665.14L730 661.29L731 657.36L732 655.62L733 656.3L734 654.56L735 656.61L736 655.96L737 654.47L738 656.04L739 655.3L740 655.58L741 654.58L742 655.57L743 657.22L744 661.8L745 665.26L746 667.03L747 668.72L748 670.12L749 672.28L750 673.45L751 670.44L752 668.31L753 666.57L754 665.82L755 665.49L756 665.06L757 665.26L758 660.88L759 658.5L760 654.32L761 655.73L762 655.17L763 654.45L764 654.86L765 655.7L766 655.25L767 656.38L768 654.97L769 656.46L770 661.34L771 664.05L772 663.41L773 665.41L774 664.77L775 666.54L776 666.16L777 668.08L778 670.78L779 672.34L780 675.78L781 670.82L782 668.87L783 667.35L784 664.53L785 665.77L786 666.19L787 665.15L788 665.14L789 662.89L790 661.4L791 658.55L792 656.17L793 656.13L794 657.02L795 655.51L796 655.23L797 656.54L798 657.44L799 657.11L800 656.74L801 655.83L802 657.36L803 658.29L804 661.8L805 665.15L806 666.57L807 668.14L808 672.51L809 673.74L810 675.85L811 671.31L812 668.43L813 665.2L814 663.89L815 663.98L816 662L817 658.7L818 657.38L819 655.94L820 657.06L821 657.09L822 656.79L823 658.01L824 656.12L825 656.84L826 656.92L827 656.71L828 658.33L829 660.13L830 662.77L831 664.01L832 664.36L833 665.96L834 665.96L835 665.96L836 665.36L837 670.16L838 672.81L839 677.11L840 672.79L841 671.46L842 669.16L843 666.3L844 666.05L845 665.19L846 665.56L847 665.53L848 664.73L849 660.79L850 657.11L851 657.23L852 657.71L853 657.4L854 656.92L855 655.49L856 656.15L857 657.44L858 657.76L859 656.74L860 656.79L861 659.06L862 661.57L863 666.09L864 665.99L865 667.87L866 668.38L867 671.76L868 674.41L869 675.27L870 672.41L871 670.9L872 667.74L873 665.74L874 665.82L875 666.64L876 665.63L877 661.07L878 657.48L879 653.85L880 655L881 655.06L882 654.65L883 655.88L884 655.89L885 654.5L886 655.04L887 655.4L888 655.23L889 654.43L890 656.37L891 659.62L892 663.46L893 666.43L894 667.03L895 667.09L896 669.07L897 672.82L898 674.97L899 675.06L900 673.33L901 669.58L902 666.24L903 666.14L904 666.23L905 666.25L906 665.46L907 665.01L908 661.54L909 657.85L910 657.65L911 656.83L912 658.82L913 657.42L914 658.01L915 658.31L916 656.98L917 658.56L918 659.38L919 661.62L920 665.15L921 665.04L922 666.65L923 665.89L924 665.42L925 665.61L926 668.3L927 672.52L928 676.16L929 673.54L930 671.24L931 668.62L932 666.87L933 666.24L934 665.04L935 660.59L936 656.54L937 653.96L938 654.9L939 653.83L940 654.16L941 655.42L942 654.79L943 655.17L944 654.55L945 654.1L946 654.64L947 654.8L948 654.01L949 657.76L950 661.97L951 663.63L952 664.28L953 666.15L954 666.43L955 666.02L956 670.18L957 672.64L958 677.43L959 672.75L960 670.09L961 666.77L962 665.71L963 665.7L964 665.25L965 664.64L966 664.51L967 665.26L968 662.6L969 659.21L970 657.37L971 657.79L972 656.21L973 656.39L974 657.58L975 655.89L976 656.09L977 657.76L978 656.36L979 657.29L980 660.99L981 665.24L982 664.37L983 667.03L984 666.24L985 668.15L986 670.4L987 672.06L988 678.02L989 672.91L990 671.19L991 668.14L992 665.89L993 667.1L994 664.94L995 665.14L996 665.94L997 662.04L998 659.44L999 655.14L1000 655.79L1001 654.56L1002 653.94L1003 656.01L1004 654.38L1005 654.88L1006 654.18L1007 655.28L1008 654.99L1009 654.35L1010 656.43L1011 661.51L1012 666.71L1013 666.02L1014 667.02L1015 670.17L1016 673.29L1017 676.77L1018 674.88L1019 672.64L1020 668.24L1021 667.34L1022 664.61L1023 664.54L1024 664.21L1025 665.53L1026 664.28L1027 662.56L1028 659.96L1029 658.89L1030 658.08L1031 657.45L1032 658.9L1033 658.36L1034 657.07L1035 657.93L1036 656.65L1037 656.65L1038 658.14L1039 658.33L1040 658.7L1041 661.17L1042 662.41L1043 665.82L1044 667.63L1045 669.63L1046 672.1L1047 674.59L1048 672.6L1049 671.27L1050 669.41L1051 665.04L1052 666.46L1053 666.36L1054 663.48L1055 661.64L1056 656.97L1057 657.24L1058 657.88L1059 658.63L1060 657.8L1061 656.73L1062 658.75L1063 657.89L1064 658.39L1065 657.07L1066 657.32L1067 656.73L1068 656.97L1069 657.68L1070 660.64L1071 664.25L1072 666.52L1073 666.15L1074 668.66L1075 670.67L1076 672.59L1077 676.54L1078 675.25L1079 671.39L1080 666.79L1081 666.35L1082 665.37L1083 665.23L1084 665.82L1085 664.27L1086 662.07L1087 658.5L1088 655.24L1089 653.28L1090 655.07L1091 654.8L1092 653.5L1093 654.66L1094 654.56L1095 654.78L1096 654.36L1097 653.83L1098 654.28L1099 657.37L1100 662.11L1101 664.85L1102 664.81L1103 665.78L1104 667.78L1105 671.24L1106 674.98L1107 677.04L1108 672.74L1109 670.32L1110 666.67L1111 665.21L1112 664.8L1113 666.56L1114 666.29L1115 665.84L1116 660.77L1117 657.23L1118 655.36L1119 655.83L1120 656.13L1121 655.12L1122 656.12L1123 656.76L1124 657.11L1125 655.56L1126 655.11L1127 659.97L1128 662.47L1129 664.75L1130 664.79L1131 665.49L1132 665.91L1133 666.32L1134 668.55L1135 672.49L1136 676.45L1137 673.61L1138 671.25L1139 668.79L1140 667.03L1141 666.47L1142 666.81L1143 664.68L1144 666.01L1145 664.44L1146 660.77L1147 656.29L1148 654.4L1149 653.79L1150 653.19L1151 653.04L1152 655.25L1153 655.15L1154 655.29L1155 658.75L1156 664.9L1157 665.33L1158 665.55L1159 666.24L1160 665.38L1161 665.82L1162 667.54L1163 667.64L1164 670.7L1165 672.03L1166 675.97L1167 672.6L1168 669.67L1169 668.59L1170 665.09L1171 664.31L1172 665.53L1173 662.55L1174 660.23L1175 657.54L1176 656.77L1177 655.67L1178 657.03L1179 655.24L1180 656.49L1181 657.29L1182 656.45L1183 655.87L1184 657.53L1185 656.88L1186 657.04L1187 657.29L1188 660.3L1189 662.66L1190 665.42L1191 665.26L1192 665.29L1193 666.25L1194 668.39L1195 670L1196 674.94L1197 671.98L1198 670.77L1199 666.28L1200 666.26L1201 663.89L1202 663.25L1203 660.78L1204 658.72L1205 654.45L1206 654.02L1207 653.34L1208 653.02L1209 653.78L1210 655.24L1211 653.97L1212 654.52L1213 655.01L1214 655.36L1215 659.67L1216 663.07L1217 662.91L1218 663.58L1219 664.6L1220 663.59L1221 665.23L1222 664.57L1223 666.94L1224 668.81L1225 673.32L1226 674.14L1227 672.61L1228 670.41L1229 666.95L1230 664.59L1231 665.03L1232 666.12L1233 661.85L1234 658.36L1235 655.54L1236 656.65L1237 656.57L1238 655.86L1239 655.81L1240 654.64L1241 654.41L1242 654.89L1243 656.14L1244 660.18L1245 663.74L1246 666.02L1247 664.26L1248 664.55L1249 665.39L1250 665.11L1251 666.77L1252 667.89L1253 669.72L1254 670.41L1255 674.34L1256 672.32L1257 670.35L1258 667.81L1259 665.45L1260 666.51L1261 666.12L1262 665.24L1263 664.4L1264 661.43L1265 659.39L1266 656.94L1267 656.95L1268 656.88L1269 657.97L1270 658L1271 656.79L1272 658.53L1273 656.37L1274 659.06L1275 660.78L1276 663.56L1277 663.83L1278 665.16L1279 665.96L1280 664.7L1281 664.87L1282 666.8L1283 667.62L1284 669.47L1285 672.59L1286 674.18L1287 671.03L1288 667.99L1289 664.86L1290 665.98L1291 664.73L1292 663.94L1293 659.08L1294 656.25L1295 655.12L1296 655.22L1297 652.92L1298 653.56L1299 653.03L1300 653.96L1301 654.4L1302 654.28L1303 653.67L1304 655.13L1305 656.17L1306 661.06L1307 663.68L1308 664.75L1309 663.86L1310 665.33L1311 666.02L1312 666.17L1313 670.79L1314 673.3L1315 675.68L1316 673.26L1317 670.17L1318 666.61L1319 664.78L1320 664.22L1321 662.89L1322 658.39L1323 653.86L1324 653.54L1325 653.47L1326 653.06L1327 654.14L1328 653.86L1329 653.51L1330 652.73L1331 654.92L1332 652.84L1333 653" stroke="#ee00ee" stroke-width="5.4"/><path d="M28 664.38L29.5 664.18L31 666.02L32.5 665.31L34 668.69L35.5 675.6L37 674.27L38.5 670.23L40 667.2L41.5 664.24L43 665.4L44.5 663.79L46 660.58L47.5 654.82L49 654.24L50.5 657.66L52 657.19L53.5 657.08L55 661.32L56.5 663.26L58 664.29L59.5 666.28L61 667.26L62.5 668.31L64 671.68L65.5 671.54L67 672.29L68.5 669.05L70 666.05L71.5 664.53L73 666.01L74.5 660.62L76 657.66L77.5 656.23L79 654.7L80.5 653.52L82 656.44L83.5 657.1L85 665.61L86.5 668.12L88 666.92L89.5 666.9L91 668.22L92.5 667.96L94 669.71L95.5 673.44L97 672.2L98.5 665.27L100 663.66L101.5 666.13L103 664.17L104.5 664.33L106 659.29L107.5 656.33L109 659.47L110.5 655.63L112 656.67L113.5 655.66L115 662.27L116.5 664.04L118 664.91L119.5 667.28L121 665.72L122.5 667.94L124 672.85L125.5 671.83L127 668.24L128.5 665.65L130 666.14L131.5 663.74L133 658.36L134.5 656.61L136 655.87L137.5 657.22L139 655.23L140.5 658.37L142 659.32L143.5 662.15L145 664.51L146.5 666.02L148 661.93L149.5 663.66L151 667.34L152.5 668.31L154 670.75L155.5 678.91L157 672.24L158.5 668.07L160 664.7L161.5 663.88L163 664.75L164.5 662.93L166 658.53L167.5 657.02L169 653.99L170.5 652.45L172 652.62L173.5 653.22L175 656.16L176.5 654.14L178 657.9L179.5 662.76L181 668.37L182.5 669.4L184 673.92L185.5 672.58L187 668.06L188.5 664.42L190 666.97L191.5 664.56L193 664.15L194.5 661.53L196 656.53L197.5 660.12L199 655.92L200.5 657.87L202 659.05L203.5 658.93L205 666.89L206.5 666.59L208 665.97L209.5 667.29L211 666.01L212.5 670.94L214 674.14L215.5 673.67L217 670.09L218.5 665.8L220 662.78L221.5 663.06L223 662.22L224.5 659.18L226 654.52L227.5 656.9L229 653.41L230.5 652.97L232 657.18L233.5 656.13L235 662.94L236.5 662.88L238 665.84L239.5 665.21L241 666.43L242.5 670.08L244 673.1L245.5 668.69L247 666.33L248.5 667.58L250 667.18L251.5 662.36L253 655.43L254.5 656.97L256 657.65L257.5 656.9L259 657.73L260.5 656.35L262 656.96L263.5 658.77L265 662.17L266.5 667.6L268 668.32L269.5 664.65L271 669.69L272.5 672.42L274 673.79L275.5 669.49L277 669.58L278.5 663.63L280 666.66L281.5 663.17L283 656.31L284.5 655.59L286 657.83L287.5 657.52L289 658.37L290.5 659.24L292 655.83L293.5 656.58L295 664.94L296.5 661.87L298 666.58L299.5 663.5L301 668.45L302.5 673.04L304 679.35L305.5 672.63L307 669.05L308.5 663.58L310 664.53L311.5 661.02L313 658.41L314.5 655.07L316 653.62L317.5 653.88L319 651.48L320.5 651.52L322 654.21L323.5 653.7L325 656.44L326.5 660.51L328 661.35L329.5 663.38L331 668.68L332.5 674.09L334 673.41L335.5 672.66L337 667.89L338.5 663.44L340 665.03L341.5 663.64L343 661.6L344.5 653.09L346 652.3L347.5 653.52L349 655.82L350.5 651.64L352 651.73L353.5 654.16L355 655.43L356.5 658.85L358 663.86L359.5 667.17L361 670.55L362.5 672.57L364 674.14L365.5 667.52L367 665.06L368.5 667.74L370 665.86L371.5 666.01L373 655.41L374.5 655.51L376 652.16L377.5 652.03L379 653.68L380.5 653.49L382 662.03L383.5 668.44L385 667.94L386.5 664.99L388 666.89L389.5 668.44L391 670.35L392.5 674.16L394 674.65L395.5 667.62L397 664.46L398.5 666.21L400 661.62L401.5 659.87L403 660.02L404.5 658.29L406 658.53L407.5 658.21L409 656.79L410.5 659.66L412 657.53L413.5 659.66L415 658.64L416.5 665.06L418 666.14L419.5 666.36L421 671.16L422.5 675.59L424 672.2L425.5 667.07L427 666.68L428.5 663.92L430 662.6L431.5 657.8L433 658.47L434.5 655.44L436 658.92L437.5 656.38L439 657.35L440.5 656.27L442 657.57L443.5 657.74L445 664.33L446.5 668.22L448 665.31L449.5 668.58L451 669.93L452.5 677.11L454 670.69L455.5 665.59L457 667.59L458.5 666.11L460 665.06L461.5 663.42L463 658.6L464.5 652.03L466 654.07L467.5 653.64L469 654.02L470.5 655.77L472 654.91L473.5 655.91L475 654.44L476.5 662.53L478 664.77L479.5 667.91L481 673.67L482.5 675.72L484 669.49L485.5 668.79L487 665.62L488.5 666.63L490 665.23L491.5 659.17L493 656.72L494.5 656.34L496 656.8L497.5 658.24L499 660.01L500.5 659.55L502 657.15L503.5 660.03L505 667.17L506.5 665.9L508 667.33L509.5 667.35L511 671.35L512.5 672.93L514 670.34L515.5 666.64L517 664.24L518.5 665.91L520 662.52L521.5 655.55L523 652.85L524.5 657.2L526 657.27L527.5 656.94L529 655.42L530.5 654.02L532 656.88L533.5 661.74L535 662.14L536.5 666.1L538 666.49L539.5 668.95L541 670.31L542.5 670.84L544 667.84L545.5 667.87L547 662.19L548.5 662.91L550 659.56L551.5 658.21L553 660.19L554.5 656.84L556 658.1L557.5 656.34L559 656.05L560.5 655.74L562 657.1L563.5 657.92L565 660.46L566.5 665.95L568 663.51L569.5 670.14L571 673.63L572.5 672.92L574 669.1L575.5 668.08L577 667.44L578.5 666.4L580 665.35L581.5 663.77L583 658.18L584.5 655.58L586 655.34L587.5 653.67L589 656.98L590.5 655.25L592 655.34L593.5 661.55L595 667.19L596.5 664.96L598 666.34L599.5 671.25L601 675.66L602.5 669.76L604 667L605.5 665.65L607 663.8L608.5 667.92L610 663.85L611.5 662.19L613 653.73L614.5 653.75L616 657.07L617.5 656.95L619 654.11L620.5 655.65L622 660.6L623.5 667.32L625 665.42L626.5 669.17L628 670.94L629.5 672L631 675.53L632.5 672.39L634 666.49L635.5 667.4L637 665.82L638.5 659.75L640 655.39L641.5 657.85L643 659.25L644.5 656.34L646 657.98L647.5 659.18L649 657.75L650.5 655.05L652 662.1L653.5 664.39L655 667.98L656.5 667.74L658 667.5L659.5 673.33L661 673.43L662.5 668.89L664 668.11L665.5 667.5L667 667.05L668.5 666.55L670 665.01L671.5 660.99L673 657.55L674.5 657.18L676 659.39L677.5 656.34L679 655.04L680.5 658.07L682 659.32L683.5 663.86L685 665.44L686.5 664.62L688 666.58L689.5 669.47L691 675.21L692.5 671.86L694 666.95L695.5 664.45L697 666.82L698.5 659.09L700 654.87L701.5 652.43L703 656.48L704.5 655.42L706 655.41L707.5 652.51L709 655.95L710.5 652.59L712 654.72L713.5 659.54L715 666.14L716.5 669.96L718 671.96L719.5 675.63L721 672.35L722.5 668.75L724 666.47L725.5 663.57L727 665.23L728.5 667.77L730 663.2L731.5 657.79L733 654.58L734.5 656.46L736 656.93L737.5 656.52L739 655.24L740.5 653.98L742 653.23L743.5 661L745 667.14L746.5 666.07L748 672.02L749.5 674.29L751 671.95L752.5 669.72L754 664.87L755.5 665.54L757 663.03L758.5 660.15L760 653.06L761.5 654.18L763 654.3L764.5 657.31L766 653.55L767.5 656.56L769 654.86L770.5 664.39L772 662.75L773.5 662.95L775 664.08L776.5 668.19L778 670.64L779.5 675.43L781 671.95L782.5 666.04L784 664.95L785.5 664.96L787 666.98L788.5 662.49L790 660.08L791.5 658.43L793 654.47L794.5 658.58L796 655.35L797.5 656.64L799 657.09L800.5 658.28L802 654.35L803.5 662.57L805 662.92L806.5 667.85L808 669.26L809.5 678.53L811 670.81L812.5 666.03L814 662.84L815.5 662.54L817 658.4L818.5 659.34L820 657.53L821.5 656.37L823 659.37L824.5 655.44L826 655.65L827.5 659.21L829 662.13L830.5 664.85L832 666.81L833.5 662.93L835 667.54L836.5 669.04L838 674.51L839.5 677.06L841 669.07L842.5 665.09L844 664.14L845.5 665.65L847 665.83L848.5 663.32L850 657.12L851.5 657.8L853 658.25L854.5 657.87L856 654.41L857.5 654.96L859 655.28L860.5 655.58L862 662.53L863.5 664.48L865 667.64L866.5 669.17L868 673.62L869.5 674.84L871 671.95L872.5 664.51L874 665.08L875.5 667.94L877 659.33L878.5 652.49L880 653.28L881.5 656.33L883 655.87L884.5 656.87L886 654.75L887.5 652.56L889 653.83L890.5 658.87L892 663.79L893.5 664.62L895 666.71L896.5 670.19L898 673.54L899.5 673.56L901 667.66L902.5 663.66L904 666.91L905.5 666.29L907 664.21L908.5 658.52L910 656.77L911.5 658.03L913 659.65L914.5 657.67L916 660.03L917.5 658.52L919 661.1L920.5 665.64L922 666.13L923.5 666.68L925 667.84L926.5 668.69L928 675.34L929.5 674.57L931 666.94L932.5 663.32L934 662.62L935.5 657.28L937 654.32L938.5 653.74L940 655.27L941.5 653.04L943 653.89L944.5 655.47L946 654.84L947.5 656.83L949 659.02L950.5 661.6L952 664.11L953.5 665.83L955 666.89L956.5 670.98L958 678.3L959.5 669.84L961 667.45L962.5 664.02L964 667.42L965.5 665.78L967 667.12L968.5 658.27L970 658.1L971.5 657.55L973 654.94L974.5 658.63L976 658.89L977.5 655.08L979 660.17L980.5 664.2L982 666.04L983.5 666.62L985 666.84L986.5 669.59L988 676.81L989.5 673.83L991 665.83L992.5 665.86L994 664.95L995.5 666.9L997 665.27L998.5 658.38L1000 654.06L1001.5 654.68L1003 652.69L1004.5 655.22L1006 656.77L1007.5 656.73L1009 653.02L1010.5 659.4L1012 664.02L1013.5 666.9L1015 671.87L1016.5 673.46L1018 676.2L1019.5 672.62L1021 667.86L1022.5 664.17L1024 667.17L1025.5 666.76L1027 663.94L1028.5 655.46L1030 655.42L1031.5 656.8L1033 657.89L1034.5 657.44L1036 655.85L1037.5 658.48L1039 658.61L1040.5 659.82L1042 663.34L1043.5 666.09L1045 670.12L1046.5 671.52L1048 673.34L1049.5 667.89L1051 664.06L1052.5 666.81L1054 662.99L1055.5 658.53L1057 656.65L1058.5 658.14L1060 655.89L1061.5 658.4L1063 655.66L1064.5 659.9L1066 656.07L1067.5 659L1069 658.05L1070.5 662L1072 664.78L1073.5 666.29L1075 671.54L1076.5 674.41L1078 674.33L1079.5 668.24L1081 666.5L1082.5 663.96L1084 665.1L1085.5 665.46L1087 658.62L1088.5 654.66L1090 654.61L1091.5 652.8L1093 656.47L1094.5 655.16L1096 655.36L1097.5 656.46L1099 657.77L1100.5 663.53L1102 664.81L1103.5 665.87L1105 670.53L1106.5 675.61L1108 671.92L1109.5 668.55L1111 664.87L1112.5 664.93L1114 666.04L1115.5 662.42L1117 659.81L1118.5 657.73L1120 655.48L1121.5 657.91L1123 654.75L1124.5 654.37L1126 658.68L1127.5 658.77L1129 662.82L1130.5 667.6L1132 664.09L1133.5 668.31L1135 672.71L1136.5 674.04L1138 670.22L1139.5 669.76L1141 665.32L1142.5 664.31L1144 665L1145.5 663.87L1147 655.22L1148.5 652.25L1150 655.62L1151.5 652.28L1153 652.09L1154.5 655.19L1156 666.46L1157.5 665.15L1159 667.05L1160.5 666.62L1162 669.06L1163.5 667.46L1165 671.47L1166.5 673.54L1168 667.26L1169.5 665.99L1171 666.58L1172.5 664.85L1174 660.14L1175.5 658.44L1177 656.02L1178.5 657.45L1180 655.82L1181.5 654.35L1183 655.8L1184.5 654.95L1186 654.07L1187.5 656.62L1189 660.68L1190.5 664.74L1192 667.02L1193.5 669.11L1195 672.98L1196.5 672.56L1198 670.6L1199.5 668.01L1201 664.13L1202.5 665.08L1204 655.72L1205.5 656.12L1207 655.93L1208.5 656.4L1210 655.69L1211.5 655.11L1213 653.79L1214.5 659.31L1216 665.09L1217.5 664.08L1219 664.75L1220.5 666.65L1222 664.03L1223.5 667.28L1225 670.39L1226.5 674.88L1228 669.9L1229.5 666.75L1231 664.1L1232.5 661.84L1234 657.64L1235.5 657.4L1237 654.9L1238.5 655.22L1240 655.2L1241.5 657.25L1243 653.8L1244.5 662.98L1246 662.75L1247.5 666.49L1249 667.24L1250.5 666.27L1252 668.02L1253.5 669.01L1255 672.23L1256.5 670.27L1258 666.9L1259.5 666.84L1261 665.46L1262.5 665.28L1264 664.83L1265.5 659.93L1267 658.96L1268.5 659.82L1270 659.62L1271.5 658.72L1273 656.83L1274.5 659.31L1276 664.44L1277.5 665.9L1279 666.97L1280.5 666.74L1282 666.92L1283.5 668.14L1285 673.19L1286.5 671.83L1288 669.21L1289.5 663.98L1291 662.26L1292.5 663.76L1294 657.37L1295.5 653.08L1297 651.83L1298.5 655.55L1300 655.32L1301.5 652.36L1303 655.54L1304.5 655.64L1306 660.22L1307.5 663.11L1309 662.69L1310.5 663.36L1312 666.52L1313.5 673.4L1315 676.44L1316.5 670.29L1318 668.88L1319.5 662.92L1321 663.07L1322.5 655L1324 651.55L1325.5 652.46L1327 655.35L1328.5 652.58L1330 651.59L1331.5 653.84L1333 653.2" stroke="#ee00ee" stroke-width="2.2"/><path d="M28 664.93h1.5v1.5h-1.5zM28 663.29h1v1.5h-1zM28 668.32h1v1.5h-1zM28 663.89h1.5v1.5h-1.5zM29 664.14h2v1.5h-2zM29 667.22h2v1.5h-2zM29 664.52h2v1.5h-2zM29 669.29h2v1.5h-2zM30.5 663.1h1v1.5h-1zM30.5 662.21h1v1.5h-1zM30.5 666.03h2v1.5h-2zM30.5 662.31h2v1.5h-2zM32 668.85h1v1.5h-1zM32 669.93h1v1.5h-1zM32 667.88h2v1.5h-2zM32 668.88h1v1.5h-1zM33.5 672.06h1.5v1.5h-1.5zM33.5 666.77h1v1.5h-1zM33.5 666.08h1v1.5h-1zM33.5 671.79h1v1.5h-1zM35 676.81h1v1.5h-1zM35 669.9h1.5v1.5h-1.5zM35 675.89h1v1.5h-1zM35 677.8h1v1.5h-1zM36 679.66h1v1.5h-1zM36 680.76h1v1.5h-1zM36 676.01h1v1.5h-1zM36 674.35h1v1.5h-1zM37 672.48h2v1.5h-2zM37 675.4h1.5v1.5h-1.5zM37 668.25h1v1.5h-1zM37 673.03h1v1.5h-1zM38 666.8h2v1.5h-2zM38 671.39h1v1.5h-1zM38 665.8h2v1.5h-2zM38 671.09h1v1.5h-1zM39.5 668.05h2v1.5h-2zM39.5 670.25h1v1.5h-1zM39.5 669.16h1.5v1.5h-1.5zM39.5 669.85h1v1.5h-1zM40.5 666.34h1v1.5h-1zM40.5 667.39h2v1.5h-2zM40.5 665.6h2v1.5h-2zM40.5 667.72h1v1.5h-1zM42 661.78h2v1.5h-2zM42 663.93h1v1.5h-1zM42 664.23h2v1.5h-2zM42 667.12h1.5v1.5h-1.5zM43.5 660.51h1v1.5h-1zM43.5 662.29h1.5v1.5h-1.5zM43.5 662.77h1v1.5h-1zM43.5 663.08h1.5v1.5h-1.5zM44.5 664.61h1v1.5h-1zM44.5 660.48h2v1.5h-2zM44.5 667.05h1.5v1.5h-1.5zM44.5 663.17h1v1.5h-1zM45.5 662.93h1v1.5h-1zM45.5 660.17h1.5v1.5h-1.5zM45.5 663.65h2v1.5h-2zM45.5 662.47h2v1.5h-2zM47 655.36h1.5v1.5h-1.5zM47 654.17h1v1.5h-1zM47 656.13h1v1.5h-1zM47 662.21h2v1.5h-2zM48 651.11h1v1.5h-1zM48 654.79h1.5v1.5h-1.5zM48 653.48h1v1.5h-1zM48 659.13h1.5v1.5h-1.5zM49.5 652.19h2v1.5h-2zM49.5 653.34h1v1.5h-1zM49.5 657.29h1.5v1.5h-1.5zM49.5 656.86h1v1.5h-1zM51 654.8h2v1.5h-2zM51 655.73h1.5v1.5h-1.5zM51 655.95h1v1.5h-1zM51 656.58h1.5v1.5h-1.5zM52.5 653.94h1v1.5h-1zM52.5 653.34h1v1.5h-1zM52.5 652.47h2v1.5h-2zM52.5 657.9h1v1.5h-1zM53.5 658.23h1v1.5h-1zM53.5 652.49h1.5v1.5h-1.5zM53.5 655.98h2v1.5h-2zM53.5 654.27h1v1.5h-1zM55 660.26h1.5v1.5h-1.5zM55 659.78h2v1.5h-2zM55 655.52h2v1.5h-2zM55 662.75h2v1.5h-2zM56.5 664.53h2v1.5h-2zM56.5 665.52h1v1.5h-1zM56.5 667.5h2v1.5h-2zM56.5 664.68h1.5v1.5h-1.5zM57.5 666.53h2v1.5h-2zM57.5 661.6h1v1.5h-1zM57.5 666.32h1.5v1.5h-1.5zM57.5 660.95h2v1.5h-2zM58.5 666.46h1v1.5h-1zM58.5 663.89h1.5v1.5h-1.5zM58.5 662.7h2v1.5h-2zM58.5 665.57h1.5v1.5h-1.5zM59.5 661.37h2v1.5h-2zM59.5 661.78h1v1.5h-1zM59.5 666.77h1.5v1.5h-1.5zM59.5 666.02h1v1.5h-1zM60.5 661.67h1v1.5h-1zM60.5 662.09h1v1.5h-1zM60.5 664.37h1.5v1.5h-1.5zM60.5 665.98h1.5v1.5h-1.5zM61.5 667.61h1v1.5h-1zM61.5 664.5h1.5v1.5h-1.5zM61.5 661.77h1.5v1.5h-1.5zM61.5 666.66h1.5v1.5h-1.5zM63 669.8h1v1.5h-1zM63 670.31h2v1.5h-2zM63 664.75h1v1.5h-1zM63 664.42h1v1.5h-1zM64 666.18h1v1.5h-1zM64 665.88h2v1.5h-2zM64 673.46h1.5v1.5h-1.5zM64 666.13h1v1.5h-1zM65.5 674.19h1v1.5h-1zM65.5 672.03h2v1.5h-2zM65.5 669.61h1v1.5h-1zM65.5 671.08h2v1.5h-2zM66.5 668.5h1.5v1.5h-1.5zM66.5 676.3h1v1.5h-1zM66.5 676.44h2v1.5h-2zM66.5 675.09h1v1.5h-1zM68 668.81h1.5v1.5h-1.5zM68 669.9h1v1.5h-1zM68 670.18h2v1.5h-2zM68 667.13h1.5v1.5h-1.5zM69 669.17h1.5v1.5h-1.5zM69 669.05h1.5v1.5h-1.5zM69 670.26h1.5v1.5h-1.5zM69 670.57h1v1.5h-1zM70 664.09h1v1.5h-1zM70 664.92h1.5v1.5h-1.5zM70 665.55h1.5v1.5h-1.5zM70 668.82h1.5v1.5h-1.5zM71.5 663.23h1.5v1.5h-1.5zM71.5 664.01h1.5v1.5h-1.5zM71.5 666.61h2v1.5h-2zM71.5 665.31h1.5v1.5h-1.5zM72.5 664.29h1v1.5h-1zM72.5 664.25h1v1.5h-1zM72.5 664.18h1v1.5h-1zM72.5 663.1h2v1.5h-2zM74 665.86h1v1.5h-1zM74 668.26h1v1.5h-1zM74 663.17h1.5v1.5h-1.5zM74 668.41h2v1.5h-2zM75.5 655.09h2v1.5h-2zM75.5 659.8h1v1.5h-1zM75.5 653.48h2v1.5h-2zM75.5 656.86h1v1.5h-1zM77 656.29h2v1.5h-2zM77 654.1h1.5v1.5h-1.5zM77 655.9h1.5v1.5h-1.5zM77 657.58h1v1.5h-1zM78 651.75h1.5v1.5h-1.5zM78 650.23h1v1.5h-1zM78 652.64h2v1.5h-2zM78 650.68h1.5v1.5h-1.5zM79.5 653.15h2v1.5h-2zM79.5 654.13h1v1.5h-1zM79.5 654.15h1.5v1.5h-1.5zM79.5 652.89h1.5v1.5h-1.5zM80.5 652.57h1.5v1.5h-1.5zM80.5 654.64h2v1.5h-2zM80.5 656.4h1v1.5h-1zM80.5 654.67h1v1.5h-1zM82 655.62h1v1.5h-1zM82 652.21h2v1.5h-2zM82 657.15h2v1.5h-2zM82 653.46h1v1.5h-1zM83.5 654.55h2v1.5h-2zM83.5 655.95h2v1.5h-2zM83.5 660.51h1v1.5h-1zM83.5 654.94h2v1.5h-2zM85 665.42h1v1.5h-1zM85 663.75h1.5v1.5h-1.5zM85 659.39h1v1.5h-1zM85 663.69h2v1.5h-2zM86 665.52h1.5v1.5h-1.5zM86 663.48h2v1.5h-2zM86 662.83h1.5v1.5h-1.5zM86 663.53h1v1.5h-1zM87.5 662.22h2v1.5h-2zM87.5 670.53h2v1.5h-2zM87.5 665.12h1.5v1.5h-1.5zM87.5 662.65h1.5v1.5h-1.5zM89 666.25h2v1.5h-2zM89 670.67h2v1.5h-2zM89 663.4h1v1.5h-1zM89 670.67h1v1.5h-1zM90.5 665.19h1v1.5h-1zM90.5 669.45h2v1.5h-2zM90.5 664.57h2v1.5h-2zM90.5 663.11h2v1.5h-2zM92 669.07h1v1.5h-1zM92 663.67h2v1.5h-2zM92 670.61h2v1.5h-2zM92 671.59h2v1.5h-2zM93.5 668.1h1v1.5h-1zM93.5 668.49h1.5v1.5h-1.5zM93.5 666.02h1.5v1.5h-1.5zM93.5 672.62h1v1.5h-1zM95 672.66h2v1.5h-2zM95 669.11h1v1.5h-1zM95 675.81h2v1.5h-2zM95 674.73h2v1.5h-2zM96.5 674.28h2v1.5h-2zM96.5 668.46h1.5v1.5h-1.5zM96.5 667.46h1.5v1.5h-1.5zM96.5 668.36h1.5v1.5h-1.5zM98 670.23h2v1.5h-2zM98 669.29h1v1.5h-1zM98 668.25h1.5v1.5h-1.5zM98 668.32h1.5v1.5h-1.5zM99.5 666.48h1.5v1.5h-1.5zM99.5 665.84h1v1.5h-1zM99.5 667.54h2v1.5h-2zM99.5 665.78h1.5v1.5h-1.5zM100.5 662.86h1v1.5h-1zM100.5 662.79h2v1.5h-2zM100.5 662.17h1.5v1.5h-1.5zM100.5 663.61h1v1.5h-1zM101.5 666.55h1.5v1.5h-1.5zM101.5 668.79h1.5v1.5h-1.5zM101.5 668.85h1.5v1.5h-1.5zM101.5 663.64h1v1.5h-1zM102.5 661.84h1v1.5h-1zM102.5 661.47h1v1.5h-1zM102.5 660.89h2v1.5h-2zM102.5 664.41h1.5v1.5h-1.5zM103.5 661.31h1.5v1.5h-1.5zM103.5 666.47h1v1.5h-1zM103.5 661.02h2v1.5h-2zM103.5 661.83h2v1.5h-2zM105 661.04h2v1.5h-2zM105 659.6h2v1.5h-2zM105 660.91h2v1.5h-2zM105 662.31h1.5v1.5h-1.5zM106 656.18h2v1.5h-2zM106 657.46h1.5v1.5h-1.5zM106 657.27h1.5v1.5h-1.5zM106 661.53h2v1.5h-2zM107.5 658.77h1v1.5h-1zM107.5 652.97h1.5v1.5h-1.5zM107.5 659.38h2v1.5h-2zM107.5 658.02h1.5v1.5h-1.5zM109 655.55h1.5v1.5h-1.5zM109 653.03h1.5v1.5h-1.5zM109 656.76h2v1.5h-2zM109 654.02h2v1.5h-2zM110 659.2h2v1.5h-2zM110 655.2h1.5v1.5h-1.5zM110 652.65h1.5v1.5h-1.5zM110 653.15h1.5v1.5h-1.5zM111 660.67h1.5v1.5h-1.5zM111 653.91h1v1.5h-1zM111 654.52h2v1.5h-2zM111 652.55h1v1.5h-1zM112 654.17h2v1.5h-2zM112 653.34h2v1.5h-2zM112 654.79h1v1.5h-1zM112 660.65h1v1.5h-1zM113.5 653.7h2v1.5h-2zM113.5 656.02h1v1.5h-1zM113.5 654.15h1.5v1.5h-1.5zM113.5 654.87h2v1.5h-2zM115 663.82h2v1.5h-2zM115 662.45h1.5v1.5h-1.5zM115 665.26h2v1.5h-2zM115 663.53h1.5v1.5h-1.5zM116 665.15h2v1.5h-2zM116 666.15h1v1.5h-1zM116 660.87h2v1.5h-2zM116 663.02h1.5v1.5h-1.5zM117 665.61h2v1.5h-2zM117 665.8h2v1.5h-2zM117 664.78h1.5v1.5h-1.5zM117 665.18h1v1.5h-1zM118 666.91h1.5v1.5h-1.5zM118 666.9h1v1.5h-1zM118 668.23h2v1.5h-2zM118 666.88h2v1.5h-2zM119 663.65h1.5v1.5h-1.5zM119 665.62h1.5v1.5h-1.5zM119 668.76h1.5v1.5h-1.5zM119 664.05h1v1.5h-1zM120 667.5h1.5v1.5h-1.5zM120 667.5h1.5v1.5h-1.5zM120 664.44h1v1.5h-1zM120 669.06h1.5v1.5h-1.5zM121.5 669.79h2v1.5h-2zM121.5 664.3h1v1.5h-1zM121.5 667.26h1.5v1.5h-1.5zM121.5 662.73h1.5v1.5h-1.5zM122.5 666.86h1.5v1.5h-1.5zM122.5 666.86h1v1.5h-1zM122.5 671.35h1v1.5h-1zM122.5 670.05h1v1.5h-1zM123.5 665.9h2v1.5h-2zM123.5 672.5h1.5v1.5h-1.5zM123.5 665.3h1.5v1.5h-1.5zM123.5 671.76h1.5v1.5h-1.5zM124.5 668.72h1v1.5h-1zM124.5 669.63h1v1.5h-1zM124.5 668.4h1v1.5h-1zM124.5 669.5h1.5v1.5h-1.5zM126 669.88h2v1.5h-2zM126 673.85h2v1.5h-2zM126 674.26h1.5v1.5h-1.5zM126 672.74h1v1.5h-1zM127.5 672.73h2v1.5h-2zM127.5 666.88h1v1.5h-1zM127.5 668h1v1.5h-1zM127.5 666.76h1v1.5h-1zM128.5 668.67h2v1.5h-2zM128.5 667.38h1v1.5h-1zM128.5 666.18h1v1.5h-1zM128.5 667.39h2v1.5h-2zM130 663.58h1.5v1.5h-1.5zM130 661.39h1.5v1.5h-1.5zM130 667.05h1v1.5h-1zM130 663.27h2v1.5h-2zM131 660.12h1v1.5h-1zM131 662.26h1.5v1.5h-1.5zM131 667.16h2v1.5h-2zM131 661.06h1.5v1.5h-1.5zM132 662.66h1.5v1.5h-1.5zM132 663.15h1.5v1.5h-1.5zM132 658.72h1v1.5h-1zM132 659.86h1v1.5h-1zM133.5 658.98h1.5v1.5h-1.5zM133.5 660.72h1v1.5h-1zM133.5 654.06h2v1.5h-2zM133.5 655.11h1v1.5h-1zM134.5 657.94h2v1.5h-2zM134.5 660.44h1v1.5h-1zM134.5 656.34h2v1.5h-2zM134.5 658.62h2v1.5h-2zM136 653.44h1v1.5h-1zM136 655.18h2v1.5h-2zM136 657.07h1v1.5h-1zM136 656.83h1.5v1.5h-1.5zM137 655.91h1v1.5h-1zM137 657.59h2v1.5h-2zM137 655.19h1v1.5h-1zM137 652.83h1.5v1.5h-1.5zM138 657.21h1.5v1.5h-1.5zM138 660.75h1.5v1.5h-1.5zM138 654.49h2v1.5h-2zM138 655.66h1v1.5h-1zM139 659.95h1v1.5h-1zM139 652.89h1.5v1.5h-1.5zM139 658.78h2v1.5h-2zM139 656.86h2v1.5h-2zM140 659.06h1v1.5h-1zM140 655.34h2v1.5h-2zM140 655.37h1v1.5h-1zM140 656.48h1v1.5h-1zM141 653.6h1v1.5h-1zM141 654.63h1v1.5h-1zM141 656.68h2v1.5h-2zM141 654.37h2v1.5h-2zM142.5 657.96h1v1.5h-1zM142.5 659.59h2v1.5h-2zM142.5 660.46h2v1.5h-2zM142.5 655.15h1v1.5h-1zM143.5 658.43h1v1.5h-1zM143.5 662.52h1.5v1.5h-1.5zM143.5 661.22h1.5v1.5h-1.5zM143.5 663.14h2v1.5h-2zM144.5 659.23h2v1.5h-2zM144.5 658.19h1v1.5h-1zM144.5 663.69h1.5v1.5h-1.5zM144.5 663.63h1v1.5h-1zM145.5 667.27h2v1.5h-2zM145.5 665.08h2v1.5h-2zM145.5 662.78h1.5v1.5h-1.5zM145.5 661.59h2v1.5h-2zM147 664.32h1v1.5h-1zM147 661.01h1.5v1.5h-1.5zM147 663.07h1.5v1.5h-1.5zM147 664.18h1v1.5h-1zM148.5 661.12h1v1.5h-1zM148.5 663.35h2v1.5h-2zM148.5 661.35h1.5v1.5h-1.5zM148.5 665.02h2v1.5h-2zM149.5 661.21h1.5v1.5h-1.5zM149.5 660.66h1.5v1.5h-1.5zM149.5 664.38h1.5v1.5h-1.5zM149.5 661.07h1.5v1.5h-1.5zM151 663.97h1.5v1.5h-1.5zM151 662.33h2v1.5h-2zM151 663.82h2v1.5h-2zM151 668.06h1.5v1.5h-1.5zM152 662.66h1v1.5h-1zM152 668.19h1.5v1.5h-1.5zM152 667.07h2v1.5h-2zM152 668.75h1.5v1.5h-1.5zM153.5 670.49h2v1.5h-2zM153.5 672.54h2v1.5h-2zM153.5 665.34h1.5v1.5h-1.5zM153.5 666.72h2v1.5h-2zM155 671.53h1v1.5h-1zM155 675.91h1.5v1.5h-1.5zM155 671.35h1.5v1.5h-1.5zM155 677.67h1.5v1.5h-1.5zM156 672.23h1v1.5h-1zM156 673.21h2v1.5h-2zM156 673.89h1.5v1.5h-1.5zM156 675.55h2v1.5h-2zM157.5 668.25h1v1.5h-1zM157.5 671.28h1v1.5h-1zM157.5 668.83h1v1.5h-1zM157.5 671.68h1.5v1.5h-1.5zM159 664.32h2v1.5h-2zM159 665.97h1v1.5h-1zM159 666.59h2v1.5h-2zM159 664.82h2v1.5h-2zM160.5 661.11h1v1.5h-1zM160.5 662.96h1.5v1.5h-1.5zM160.5 669.36h2v1.5h-2zM160.5 664.25h2v1.5h-2zM161.5 663.68h1.5v1.5h-1.5zM161.5 666.33h1v1.5h-1zM161.5 668.8h1.5v1.5h-1.5zM161.5 668.32h1v1.5h-1zM163 667.79h1v1.5h-1zM163 668.33h1v1.5h-1zM163 663.98h1.5v1.5h-1.5zM163 663.01h2v1.5h-2zM164 663.45h2v1.5h-2zM164 665.9h1.5v1.5h-1.5zM164 665.14h2v1.5h-2zM164 663.06h1v1.5h-1zM165 664.76h1.5v1.5h-1.5zM165 661.28h1v1.5h-1zM165 666.02h2v1.5h-2zM165 660.3h1v1.5h-1zM166.5 658.22h2v1.5h-2zM166.5 658.85h1.5v1.5h-1.5zM166.5 660.26h1v1.5h-1zM166.5 655.01h2v1.5h-2zM167.5 657.72h1v1.5h-1zM167.5 657.35h1v1.5h-1zM167.5 654.41h2v1.5h-2zM167.5 655.77h2v1.5h-2zM169 652.06h1v1.5h-1zM169 652.78h1v1.5h-1zM169 653.43h2v1.5h-2zM169 656.82h1v1.5h-1zM170.5 652.1h1.5v1.5h-1.5zM170.5 653.31h1v1.5h-1zM170.5 650.22h1.5v1.5h-1.5zM170.5 650.88h2v1.5h-2zM171.5 658.27h1v1.5h-1zM171.5 651.62h1v1.5h-1zM171.5 655.74h2v1.5h-2zM171.5 650.46h1.5v1.5h-1.5zM173 654.04h1v1.5h-1zM173 657.35h1.5v1.5h-1.5zM173 652.27h2v1.5h-2zM173 657.27h1.5v1.5h-1.5zM174 654.76h2v1.5h-2zM174 655.09h2v1.5h-2zM174 654.69h2v1.5h-2zM174 650.24h1v1.5h-1zM175 656.54h1.5v1.5h-1.5zM175 650.89h1v1.5h-1zM175 651.18h2v1.5h-2zM175 651.56h2v1.5h-2zM176 653.51h2v1.5h-2zM176 652.03h2v1.5h-2zM176 652.43h2v1.5h-2zM176 658.03h2v1.5h-2zM177 652.38h1v1.5h-1zM177 652.36h1.5v1.5h-1.5zM177 651.09h2v1.5h-2zM177 650.59h1v1.5h-1zM178.5 659.01h1v1.5h-1zM178.5 656.48h1v1.5h-1zM178.5 656.5h1v1.5h-1zM178.5 657.03h1.5v1.5h-1.5zM180 665.24h1.5v1.5h-1.5zM180 662.62h2v1.5h-2zM180 661.15h1v1.5h-1zM180 665.79h1v1.5h-1zM181.5 668.37h1v1.5h-1zM181.5 662.73h2v1.5h-2zM181.5 663.26h2v1.5h-2zM181.5 663.96h1v1.5h-1zM182.5 672.37h1v1.5h-1zM182.5 666.79h2v1.5h-2zM182.5 672.81h1v1.5h-1zM182.5 669.51h1.5v1.5h-1.5zM184 676.64h1.5v1.5h-1.5zM184 678.6h1.5v1.5h-1.5zM184 678.73h1v1.5h-1zM184 673.64h1v1.5h-1zM185.5 675.85h1v1.5h-1zM185.5 672.62h2v1.5h-2zM185.5 675.04h1.5v1.5h-1.5zM185.5 671.4h1.5v1.5h-1.5zM187 670.49h1v1.5h-1zM187 673.26h1v1.5h-1zM187 667.8h1v1.5h-1zM187 666.92h2v1.5h-2zM188 669.67h1.5v1.5h-1.5zM188 669.04h1.5v1.5h-1.5zM188 663.23h1v1.5h-1zM188 669.48h2v1.5h-2zM189 667.74h1v1.5h-1zM189 665.29h1v1.5h-1zM189 661.57h2v1.5h-2zM189 669.5h1.5v1.5h-1.5zM190 662.27h2v1.5h-2zM190 661.91h1.5v1.5h-1.5zM190 667.41h2v1.5h-2zM190 665.69h2v1.5h-2zM191.5 669.47h2v1.5h-2zM191.5 667.6h2v1.5h-2zM191.5 669.77h2v1.5h-2zM191.5 664.18h2v1.5h-2zM192.5 668.22h1.5v1.5h-1.5zM192.5 668.05h1v1.5h-1zM192.5 662.95h2v1.5h-2zM192.5 667.83h1.5v1.5h-1.5zM193.5 660.98h2v1.5h-2zM193.5 668.01h1v1.5h-1zM193.5 665.86h1v1.5h-1zM193.5 660.63h2v1.5h-2zM195 661.97h1v1.5h-1zM195 656.49h2v1.5h-2zM195 659.69h2v1.5h-2zM195 663.42h1v1.5h-1zM196 660.2h1.5v1.5h-1.5zM196 655.12h2v1.5h-2zM196 660.03h2v1.5h-2zM196 654.84h1v1.5h-1zM197 659.04h2v1.5h-2zM197 654h1.5v1.5h-1.5zM197 657.88h1v1.5h-1zM197 653.41h2v1.5h-2zM198 661.28h2v1.5h-2zM198 660.17h1.5v1.5h-1.5zM198 653.75h1.5v1.5h-1.5zM198 660.47h1v1.5h-1zM199 656.16h1v1.5h-1zM199 659.05h1.5v1.5h-1.5zM199 654.71h1.5v1.5h-1.5zM199 654.73h1.5v1.5h-1.5zM200 657.25h1.5v1.5h-1.5zM200 656.04h1.5v1.5h-1.5zM200 657.35h2v1.5h-2zM200 657.75h1.5v1.5h-1.5zM201.5 661.38h2v1.5h-2zM201.5 658.92h1v1.5h-1zM201.5 658.2h2v1.5h-2zM201.5 655.9h1v1.5h-1zM203 660.4h2v1.5h-2zM203 659.42h1v1.5h-1zM203 660.87h1.5v1.5h-1.5zM203 653.92h1.5v1.5h-1.5zM204 661.32h1.5v1.5h-1.5zM204 663.87h1v1.5h-1zM204 658.8h1v1.5h-1zM204 657.76h2v1.5h-2zM205 663.62h1v1.5h-1zM205 663.61h2v1.5h-2zM205 663.79h1v1.5h-1zM205 661.06h1v1.5h-1zM206.5 665.08h1.5v1.5h-1.5zM206.5 667.74h1v1.5h-1zM206.5 663.53h2v1.5h-2zM206.5 664.93h1.5v1.5h-1.5zM208 670.01h1.5v1.5h-1.5zM208 667.62h2v1.5h-2zM208 666.85h1.5v1.5h-1.5zM208 665.92h2v1.5h-2zM209 667.64h1.5v1.5h-1.5zM209 668.75h1.5v1.5h-1.5zM209 664.49h1v1.5h-1zM209 667.1h1v1.5h-1zM210 666.96h2v1.5h-2zM210 668.55h2v1.5h-2zM210 667.83h2v1.5h-2zM210 666.34h1.5v1.5h-1.5zM211 664.62h2v1.5h-2zM211 665.61h2v1.5h-2zM211 664.5h1v1.5h-1zM211 669.23h1v1.5h-1zM212.5 674.46h2v1.5h-2zM212.5 671.26h1.5v1.5h-1.5zM212.5 670.07h1.5v1.5h-1.5zM212.5 674.33h2v1.5h-2zM213.5 672.34h1.5v1.5h-1.5zM213.5 674.82h2v1.5h-2zM213.5 673.89h1v1.5h-1zM213.5 670.36h1.5v1.5h-1.5zM214.5 675.23h1v1.5h-1zM214.5 673.95h1v1.5h-1zM214.5 679.81h2v1.5h-2zM214.5 676.51h2v1.5h-2zM215.5 672.58h1.5v1.5h-1.5zM215.5 673.04h1.5v1.5h-1.5zM215.5 672.31h1.5v1.5h-1.5zM215.5 671.82h1.5v1.5h-1.5zM217 669.41h1v1.5h-1zM217 671.77h1v1.5h-1zM217 664.2h1.5v1.5h-1.5zM217 669.04h1v1.5h-1zM218.5 667.43h1.5v1.5h-1.5zM218.5 661.47h1v1.5h-1zM218.5 664.61h2v1.5h-2zM218.5 666.59h1.5v1.5h-1.5zM220 662.62h1v1.5h-1zM220 667.54h1v1.5h-1zM220 666.03h2v1.5h-2zM220 666.28h2v1.5h-2zM221 662.99h2v1.5h-2zM221 664.11h2v1.5h-2zM221 662.45h2v1.5h-2zM221 666.73h2v1.5h-2zM222 665.04h1.5v1.5h-1.5zM222 666.59h2v1.5h-2zM222 662.65h2v1.5h-2zM222 659.83h2v1.5h-2zM223 659.73h1.5v1.5h-1.5zM223 662.79h1.5v1.5h-1.5zM223 662.82h2v1.5h-2zM223 659.13h2v1.5h-2zM224 660.78h1v1.5h-1zM224 659.94h2v1.5h-2zM224 661.91h1v1.5h-1zM224 657.86h1v1.5h-1zM225.5 656.77h2v1.5h-2zM225.5 658.82h1v1.5h-1zM225.5 660.4h1.5v1.5h-1.5zM225.5 660.88h1v1.5h-1zM226.5 655.29h1v1.5h-1zM226.5 657.09h2v1.5h-2zM226.5 650.59h1.5v1.5h-1.5zM226.5 658.77h1.5v1.5h-1.5zM228 652.39h2v1.5h-2zM228 657.23h1v1.5h-1zM228 656.19h1.5v1.5h-1.5zM228 651.03h1v1.5h-1zM229 658.49h2v1.5h-2zM229 651.82h1.5v1.5h-1.5zM229 652.63h1v1.5h-1zM229 655.58h1.5v1.5h-1.5zM230 658.3h1v1.5h-1zM230 656.81h1.5v1.5h-1.5zM230 655.81h1.5v1.5h-1.5zM230 655.06h2v1.5h-2zM231.5 650.91h1v1.5h-1zM231.5 651.63h1.5v1.5h-1.5zM231.5 653.5h2v1.5h-2zM231.5 657.54h2v1.5h-2zM232.5 651.26h2v1.5h-2zM232.5 653.55h2v1.5h-2zM232.5 654.45h1v1.5h-1zM232.5 651.35h1.5v1.5h-1.5zM234 658.71h1v1.5h-1zM234 657.64h1.5v1.5h-1.5zM234 653.82h1v1.5h-1zM234 656.76h2v1.5h-2zM235 661.05h1.5v1.5h-1.5zM235 664.01h2v1.5h-2zM235 661.62h1.5v1.5h-1.5zM235 664.14h1.5v1.5h-1.5zM236.5 663.09h1v1.5h-1zM236.5 666.83h1.5v1.5h-1.5zM236.5 660.82h2v1.5h-2zM236.5 664.88h1v1.5h-1zM237.5 666.09h1.5v1.5h-1.5zM237.5 661.73h1v1.5h-1zM237.5 660.92h1.5v1.5h-1.5zM237.5 661.1h1.5v1.5h-1.5zM239 665.55h1v1.5h-1zM239 664.54h1v1.5h-1zM239 663.57h1.5v1.5h-1.5zM239 661.01h1.5v1.5h-1.5zM240.5 667.83h1v1.5h-1zM240.5 666.58h1.5v1.5h-1.5zM240.5 663.77h1.5v1.5h-1.5zM240.5 663.46h1v1.5h-1zM241.5 667.25h1.5v1.5h-1.5zM241.5 665.14h2v1.5h-2zM241.5 664.53h2v1.5h-2zM241.5 662.18h2v1.5h-2zM243 671.82h1v1.5h-1zM243 667.01h2v1.5h-2zM243 667.98h1v1.5h-1zM243 666.75h1.5v1.5h-1.5zM244 670.61h1v1.5h-1zM244 670.17h1.5v1.5h-1.5zM244 675.11h2v1.5h-2zM244 674.86h1v1.5h-1zM245 668h1.5v1.5h-1.5zM245 672.71h2v1.5h-2zM245 667.76h1.5v1.5h-1.5zM245 668.35h1.5v1.5h-1.5zM246 669.52h1v1.5h-1zM246 667.05h1.5v1.5h-1.5zM246 670.47h1.5v1.5h-1.5zM246 669.96h1.5v1.5h-1.5zM247.5 668.51h1.5v1.5h-1.5zM247.5 669.35h2v1.5h-2zM247.5 663.3h2v1.5h-2zM247.5 668.7h2v1.5h-2zM249 666.27h1v1.5h-1zM249 662.28h1.5v1.5h-1.5zM249 663.9h2v1.5h-2zM249 665.55h2v1.5h-2zM250 668.39h1v1.5h-1zM250 661.85h1.5v1.5h-1.5zM250 667.76h1v1.5h-1zM250 665.03h2v1.5h-2zM251.5 661.76h2v1.5h-2zM251.5 663.63h1v1.5h-1zM251.5 662.11h1v1.5h-1zM251.5 658.59h1v1.5h-1zM252.5 652.77h1v1.5h-1zM252.5 653.9h1v1.5h-1zM252.5 652.21h1v1.5h-1zM252.5 655.43h1v1.5h-1zM253.5 659.94h1.5v1.5h-1.5zM253.5 655.97h1.5v1.5h-1.5zM253.5 655.58h2v1.5h-2zM253.5 652.54h2v1.5h-2zM255 657.89h1.5v1.5h-1.5zM255 658.87h1.5v1.5h-1.5zM255 655.63h2v1.5h-2zM255 652.38h2v1.5h-2zM256.5 652.55h2v1.5h-2zM256.5 653.86h1v1.5h-1zM256.5 659.09h2v1.5h-2zM256.5 658.65h2v1.5h-2zM258 655.61h1v1.5h-1zM258 657.83h1.5v1.5h-1.5zM258 659.13h1.5v1.5h-1.5zM258 657.86h2v1.5h-2zM259.5 657.61h1v1.5h-1zM259.5 655.78h1v1.5h-1zM259.5 659.46h1v1.5h-1zM259.5 658.7h2v1.5h-2zM261 656.4h1.5v1.5h-1.5zM261 656.33h1.5v1.5h-1.5zM261 658.28h1v1.5h-1zM261 658.55h2v1.5h-2zM262.5 651.65h2v1.5h-2zM262.5 655.58h2v1.5h-2zM262.5 657.07h1v1.5h-1zM262.5 656.01h1v1.5h-1zM263.5 653.87h1v1.5h-1zM263.5 655.88h2v1.5h-2zM263.5 659.16h2v1.5h-2zM263.5 658.56h1v1.5h-1zM264.5 661.27h2v1.5h-2zM264.5 661.52h2v1.5h-2zM264.5 659.47h2v1.5h-2zM264.5 658.46h1v1.5h-1zM266 663.77h1.5v1.5h-1.5zM266 666.19h1.5v1.5h-1.5zM266 666.58h1v1.5h-1zM266 665.27h1v1.5h-1zM267 669.21h2v1.5h-2zM267 667.92h1v1.5h-1zM267 669.23h1v1.5h-1zM267 665.25h1.5v1.5h-1.5zM268.5 663.98h1.5v1.5h-1.5zM268.5 662.95h1v1.5h-1zM268.5 664.06h1v1.5h-1zM268.5 668.28h1v1.5h-1zM269.5 668.24h1.5v1.5h-1.5zM269.5 666.67h2v1.5h-2zM269.5 662.9h2v1.5h-2zM269.5 662.23h2v1.5h-2zM271 666.41h1.5v1.5h-1.5zM271 663.96h1v1.5h-1zM271 670.39h2v1.5h-2zM271 667.43h1.5v1.5h-1.5zM272.5 673.58h1.5v1.5h-1.5zM272.5 671.69h2v1.5h-2zM272.5 669.97h1v1.5h-1zM272.5 668.84h1.5v1.5h-1.5zM274 674.09h1.5v1.5h-1.5zM274 670.17h1.5v1.5h-1.5zM274 676.68h1v1.5h-1zM274 670.89h1v1.5h-1zM275.5 674.5h1v1.5h-1zM275.5 668.96h2v1.5h-2zM275.5 671.83h1.5v1.5h-1.5zM275.5 670.6h1.5v1.5h-1.5zM277 663.65h1v1.5h-1zM277 670.73h1v1.5h-1zM277 668.9h1.5v1.5h-1.5zM277 667.86h1.5v1.5h-1.5zM278.5 665.76h1.5v1.5h-1.5zM278.5 665.48h1v1.5h-1zM278.5 669.05h1v1.5h-1zM278.5 664.13h2v1.5h-2zM280 666.53h2v1.5h-2zM280 665.39h1v1.5h-1zM280 663.01h2v1.5h-2zM280 664.25h2v1.5h-2zM281.5 660.44h2v1.5h-2zM281.5 658.46h1.5v1.5h-1.5zM281.5 664.72h2v1.5h-2zM281.5 665.74h1v1.5h-1zM283 657.83h1.5v1.5h-1.5zM283 658.51h1v1.5h-1zM283 660.27h1v1.5h-1zM283 654.93h1v1.5h-1zM284.5 654.53h2v1.5h-2zM284.5 659.71h1.5v1.5h-1.5zM284.5 659.46h1.5v1.5h-1.5zM284.5 654.89h1v1.5h-1zM285.5 653.99h1.5v1.5h-1.5zM285.5 653.66h1.5v1.5h-1.5zM285.5 657.62h1v1.5h-1zM285.5 657.04h1.5v1.5h-1.5zM286.5 656.69h1v1.5h-1zM286.5 659.78h2v1.5h-2zM286.5 653.92h2v1.5h-2zM286.5 659.26h1.5v1.5h-1.5zM287.5 655.76h2v1.5h-2zM287.5 655.33h1v1.5h-1zM287.5 660.03h1.5v1.5h-1.5zM287.5 656.52h1v1.5h-1zM289 658.73h1.5v1.5h-1.5zM289 653.56h1.5v1.5h-1.5zM289 654.07h1v1.5h-1zM289 654.93h1v1.5h-1zM290.5 659.57h2v1.5h-2zM290.5 657.02h1v1.5h-1zM290.5 652.87h1.5v1.5h-1.5zM290.5 660.74h2v1.5h-2zM292 653.47h1v1.5h-1zM292 657.31h1.5v1.5h-1.5zM292 655.77h2v1.5h-2zM292 654.97h1.5v1.5h-1.5zM293 660.02h1.5v1.5h-1.5zM293 654.1h1v1.5h-1zM293 657.75h2v1.5h-2zM293 656.06h1.5v1.5h-1.5zM294 661.51h1v1.5h-1zM294 659.86h1.5v1.5h-1.5zM294 660.49h2v1.5h-2zM294 658.57h2v1.5h-2zM295 665.2h1.5v1.5h-1.5zM295 661.3h1.5v1.5h-1.5zM295 663.17h2v1.5h-2zM295 659.89h1.5v1.5h-1.5zM296.5 666.92h1v1.5h-1zM296.5 663.13h2v1.5h-2zM296.5 662.32h1v1.5h-1zM296.5 665.77h2v1.5h-2zM297.5 660.29h2v1.5h-2zM297.5 665.66h1v1.5h-1zM297.5 665.2h2v1.5h-2zM297.5 668.01h1v1.5h-1zM299 663.19h2v1.5h-2zM299 665.86h1v1.5h-1zM299 665.4h1.5v1.5h-1.5zM299 667.62h2v1.5h-2zM300 666.85h1v1.5h-1zM300 666.54h2v1.5h-2zM300 667.09h2v1.5h-2zM300 661.18h2v1.5h-2zM301.5 672.29h2v1.5h-2zM301.5 666.06h2v1.5h-2zM301.5 670.76h2v1.5h-2zM301.5 670.51h1.5v1.5h-1.5zM302.5 668.52h1v1.5h-1zM302.5 669.05h1.5v1.5h-1.5zM302.5 673.9h1v1.5h-1zM302.5 671.45h2v1.5h-2zM303.5 670.95h2v1.5h-2zM303.5 673.14h2v1.5h-2zM303.5 672.49h2v1.5h-2zM303.5 676.03h1.5v1.5h-1.5zM304.5 675.38h1v1.5h-1zM304.5 674.08h2v1.5h-2zM304.5 674.2h1v1.5h-1zM304.5 672.74h1.5v1.5h-1.5zM305.5 671.67h1.5v1.5h-1.5zM305.5 671.2h1v1.5h-1zM305.5 668.1h2v1.5h-2zM305.5 674.98h1v1.5h-1zM307 669.99h2v1.5h-2zM307 668.78h1.5v1.5h-1.5zM307 665.94h1.5v1.5h-1.5zM307 663.82h1.5v1.5h-1.5zM308.5 662.97h1.5v1.5h-1.5zM308.5 668.79h2v1.5h-2zM308.5 664.44h1.5v1.5h-1.5zM308.5 666.17h2v1.5h-2zM309.5 663.59h1v1.5h-1zM309.5 665.09h1.5v1.5h-1.5zM309.5 661.45h1v1.5h-1zM309.5 664.61h2v1.5h-2zM310.5 665.42h1v1.5h-1zM310.5 662.15h1.5v1.5h-1.5zM310.5 661.66h1.5v1.5h-1.5zM310.5 663.43h2v1.5h-2zM312 659.61h1v1.5h-1zM312 659.92h1.5v1.5h-1.5zM312 662.25h2v1.5h-2zM312 660.37h2v1.5h-2zM313.5 653.75h1v1.5h-1zM313.5 652.18h2v1.5h-2zM313.5 655.36h1v1.5h-1zM313.5 656.89h1.5v1.5h-1.5zM315 654.28h1v1.5h-1zM315 655.84h1.5v1.5h-1.5zM315 649.68h1.5v1.5h-1.5zM315 652.1h1v1.5h-1zM316 649.94h1.5v1.5h-1.5zM316 650.73h2v1.5h-2zM316 655.85h1v1.5h-1zM316 655.38h1v1.5h-1zM317.5 655.08h1v1.5h-1zM317.5 657.2h1v1.5h-1zM317.5 655.7h2v1.5h-2zM317.5 651.56h1v1.5h-1zM319 656.5h2v1.5h-2zM319 652.05h2v1.5h-2zM319 650.6h1v1.5h-1zM319 653.46h2v1.5h-2zM320.5 649.73h2v1.5h-2zM320.5 650.39h1.5v1.5h-1.5zM320.5 649.89h1v1.5h-1zM320.5 652.85h1.5v1.5h-1.5zM322 652.36h1v1.5h-1zM322 656.28h1.5v1.5h-1.5zM322 656.49h1.5v1.5h-1.5zM322 649.57h2v1.5h-2zM323 654.48h2v1.5h-2zM323 655.5h1.5v1.5h-1.5zM323 656.87h1.5v1.5h-1.5zM323 651.62h1v1.5h-1zM324 657.38h1.5v1.5h-1.5zM324 655.5h2v1.5h-2zM324 649.92h2v1.5h-2zM324 653.22h1v1.5h-1zM325.5 659.1h2v1.5h-2zM325.5 653.51h1v1.5h-1zM325.5 652.57h1.5v1.5h-1.5zM325.5 659.88h1.5v1.5h-1.5zM327 658.01h1.5v1.5h-1.5zM327 662.11h2v1.5h-2zM327 664.7h1v1.5h-1zM327 663.4h2v1.5h-2zM328.5 661.32h1v1.5h-1zM328.5 663.26h1v1.5h-1zM328.5 663.26h2v1.5h-2zM328.5 659.64h2v1.5h-2zM330 660.4h1.5v1.5h-1.5zM330 667.11h2v1.5h-2zM330 664.14h2v1.5h-2zM330 666.82h1.5v1.5h-1.5zM331.5 669.77h2v1.5h-2zM331.5 671.95h1v1.5h-1zM331.5 671.28h1.5v1.5h-1.5zM331.5 668.32h2v1.5h-2zM332.5 669.91h2v1.5h-2zM332.5 677.59h2v1.5h-2zM332.5 673.17h1v1.5h-1zM332.5 675.1h1.5v1.5h-1.5zM334 678.24h2v1.5h-2zM334 676.49h1.5v1.5h-1.5zM334 676.75h2v1.5h-2zM334 672.2h2v1.5h-2zM335.5 673.64h2v1.5h-2zM335.5 670.37h1v1.5h-1zM335.5 669.75h1.5v1.5h-1.5zM335.5 673.9h1v1.5h-1zM336.5 669.06h1v1.5h-1zM336.5 667.76h1.5v1.5h-1.5zM336.5 671.67h1.5v1.5h-1.5zM336.5 666.74h2v1.5h-2zM337.5 668.6h2v1.5h-2zM337.5 663.64h1v1.5h-1zM337.5 668.86h2v1.5h-2zM337.5 663.3h2v1.5h-2zM338.5 668.05h1v1.5h-1zM338.5 661.2h2v1.5h-2zM338.5 667.76h1.5v1.5h-1.5zM338.5 663.05h1v1.5h-1zM339.5 666.9h2v1.5h-2zM339.5 664.1h1v1.5h-1zM339.5 667.88h1.5v1.5h-1.5zM339.5 667.18h1.5v1.5h-1.5zM340.5 660.14h2v1.5h-2zM340.5 663.19h1v1.5h-1zM340.5 661.53h1.5v1.5h-1.5zM340.5 662.62h1v1.5h-1zM342 665.31h2v1.5h-2zM342 662.27h2v1.5h-2zM342 664.03h2v1.5h-2zM342 663.34h1.5v1.5h-1.5zM343.5 654.23h1v1.5h-1zM343.5 660.28h1.5v1.5h-1.5zM343.5 656.33h1v1.5h-1zM343.5 657.91h1v1.5h-1zM345 654.14h2v1.5h-2zM345 650.54h1.5v1.5h-1.5zM345 654.6h1.5v1.5h-1.5zM345 652.1h2v1.5h-2zM346 652.32h1v1.5h-1zM346 656.37h2v1.5h-2zM346 656.9h1v1.5h-1zM346 653.63h1v1.5h-1zM347 655.01h1v1.5h-1zM347 656.19h1.5v1.5h-1.5zM347 655.96h1v1.5h-1zM347 653.21h1v1.5h-1zM348.5 651.33h1v1.5h-1zM348.5 649.28h1v1.5h-1zM348.5 653.09h1.5v1.5h-1.5zM348.5 654.66h1v1.5h-1zM349.5 651.1h2v1.5h-2zM349.5 657.37h1.5v1.5h-1.5zM349.5 652.34h1.5v1.5h-1.5zM349.5 657.21h2v1.5h-2zM351 654.15h1.5v1.5h-1.5zM351 655.32h1.5v1.5h-1.5zM351 650.7h2v1.5h-2zM351 654.4h1v1.5h-1zM352 652.69h1.5v1.5h-1.5zM352 656.32h1v1.5h-1zM352 651.17h1v1.5h-1zM352 651.62h1.5v1.5h-1.5zM353 651.33h1.5v1.5h-1.5zM353 657.08h1v1.5h-1zM353 655.47h2v1.5h-2zM353 650.41h1v1.5h-1zM354 649.03h1.5v1.5h-1.5zM354 654.07h1v1.5h-1zM354 652.58h1.5v1.5h-1.5zM354 649.2h1v1.5h-1zM355.5 650.04h1.5v1.5h-1.5zM355.5 655.62h1.5v1.5h-1.5zM355.5 656.18h2v1.5h-2zM355.5 652.24h1.5v1.5h-1.5zM357 656.78h2v1.5h-2zM357 660.14h1v1.5h-1zM357 657.04h1.5v1.5h-1.5zM357 656.83h1.5v1.5h-1.5zM358.5 664.94h1v1.5h-1zM358.5 667.93h1v1.5h-1zM358.5 663.31h1.5v1.5h-1.5zM358.5 661.09h2v1.5h-2zM359.5 668.88h2v1.5h-2zM359.5 666.16h1v1.5h-1zM359.5 667.21h1v1.5h-1zM359.5 665.73h1v1.5h-1zM360.5 670.42h2v1.5h-2zM360.5 671.05h2v1.5h-2zM360.5 666.98h1v1.5h-1zM360.5 665.18h2v1.5h-2zM362 676.03h1.5v1.5h-1.5zM362 672.15h1.5v1.5h-1.5zM362 674.75h1.5v1.5h-1.5zM362 675.63h1v1.5h-1zM363.5 674.87h2v1.5h-2zM363.5 669.55h1v1.5h-1zM363.5 674.16h1.5v1.5h-1.5zM363.5 673.83h1v1.5h-1zM365 670.25h1v1.5h-1zM365 668.73h1v1.5h-1zM365 671.08h2v1.5h-2zM365 666.32h1.5v1.5h-1.5zM366 669.58h1v1.5h-1zM366 667.75h2v1.5h-2zM366 666.69h1.5v1.5h-1.5zM366 663.45h2v1.5h-2zM367.5 667.77h2v1.5h-2zM367.5 668.23h1v1.5h-1zM367.5 669.14h1.5v1.5h-1.5zM367.5 664.25h1.5v1.5h-1.5zM369 667.51h1.5v1.5h-1.5zM369 665.91h1v1.5h-1zM369 665.16h1.5v1.5h-1.5zM369 662.16h1.5v1.5h-1.5zM370.5 663.14h1.5v1.5h-1.5zM370.5 662.76h2v1.5h-2zM370.5 664.42h1v1.5h-1zM370.5 665.36h2v1.5h-2zM371.5 666.64h1.5v1.5h-1.5zM371.5 663.69h1v1.5h-1zM371.5 665.99h1v1.5h-1zM371.5 664.37h1.5v1.5h-1.5zM372.5 658.18h1v1.5h-1zM372.5 662.09h1v1.5h-1zM372.5 661.28h1v1.5h-1zM372.5 660.69h2v1.5h-2zM373.5 652.53h2v1.5h-2zM373.5 657.47h1.5v1.5h-1.5zM373.5 656.99h2v1.5h-2zM373.5 649.99h1v1.5h-1zM374.5 655.35h1v1.5h-1zM374.5 656.91h1.5v1.5h-1.5zM374.5 649.44h1.5v1.5h-1.5zM374.5 655.9h1.5v1.5h-1.5zM376 653.94h1.5v1.5h-1.5zM376 651.22h1v1.5h-1zM376 655.45h2v1.5h-2zM376 655.56h2v1.5h-2zM377.5 650.18h2v1.5h-2zM377.5 649.35h1.5v1.5h-1.5zM377.5 651.62h1v1.5h-1zM377.5 656.67h1.5v1.5h-1.5zM379 655.06h1v1.5h-1zM379 652.79h2v1.5h-2zM379 655.6h2v1.5h-2zM379 655.36h1v1.5h-1zM380.5 651.62h2v1.5h-2zM380.5 656.2h2v1.5h-2zM380.5 654.53h1.5v1.5h-1.5zM380.5 654.54h1.5v1.5h-1.5zM381.5 658.73h2v1.5h-2zM381.5 655.02h1.5v1.5h-1.5zM381.5 661.88h1v1.5h-1zM381.5 657.64h1.5v1.5h-1.5zM382.5 661.32h1.5v1.5h-1.5zM382.5 667.6h1v1.5h-1zM382.5 666.32h2v1.5h-2zM382.5 667.75h2v1.5h-2zM383.5 669.42h2v1.5h-2zM383.5 667.5h1.5v1.5h-1.5zM383.5 666.48h2v1.5h-2zM383.5 669.86h1.5v1.5h-1.5zM384.5 667.77h1.5v1.5h-1.5zM384.5 669.83h1.5v1.5h-1.5zM384.5 665.07h2v1.5h-2zM384.5 668h1.5v1.5h-1.5zM386 666.41h2v1.5h-2zM386 664.21h1.5v1.5h-1.5zM386 663.3h2v1.5h-2zM386 667.27h1v1.5h-1zM387 670.8h2v1.5h-2zM387 667.63h2v1.5h-2zM387 666.82h2v1.5h-2zM387 669.55h1v1.5h-1zM388 665.19h1.5v1.5h-1.5zM388 663.46h1v1.5h-1zM388 669.33h1v1.5h-1zM388 671.29h2v1.5h-2zM389 665.8h1.5v1.5h-1.5zM389 668.26h1v1.5h-1zM389 663.5h2v1.5h-2zM389 664.39h1.5v1.5h-1.5zM390 670.69h1v1.5h-1zM390 670.45h1.5v1.5h-1.5zM390 671.6h2v1.5h-2zM390 665.42h1v1.5h-1zM391.5 672.33h1v1.5h-1zM391.5 674.9h1v1.5h-1zM391.5 668.38h2v1.5h-2zM391.5 671.86h1.5v1.5h-1.5zM392.5 672.63h2v1.5h-2zM392.5 672.58h2v1.5h-2zM392.5 670h1v1.5h-1zM392.5 676.64h1.5v1.5h-1.5zM393.5 672.53h1.5v1.5h-1.5zM393.5 676.34h2v1.5h-2zM393.5 673.34h1v1.5h-1zM393.5 673.26h1.5v1.5h-1.5zM394.5 671.98h2v1.5h-2zM394.5 671.26h1.5v1.5h-1.5zM394.5 676.52h1.5v1.5h-1.5zM394.5 674.96h2v1.5h-2zM396 669.39h1v1.5h-1zM396 665.58h1v1.5h-1zM396 667.19h2v1.5h-2zM396 669.2h2v1.5h-2zM397.5 665.26h1.5v1.5h-1.5zM397.5 661.07h2v1.5h-2zM397.5 668.83h1v1.5h-1zM397.5 663.52h2v1.5h-2zM398.5 663.86h1v1.5h-1zM398.5 665.98h1v1.5h-1zM398.5 668h1v1.5h-1zM398.5 661.24h2v1.5h-2zM399.5 660.04h2v1.5h-2zM399.5 662.37h2v1.5h-2zM399.5 661.38h2v1.5h-2zM399.5 662.69h2v1.5h-2zM401 657.18h1.5v1.5h-1.5zM401 657.02h1v1.5h-1zM401 663.03h2v1.5h-2zM401 655.77h1.5v1.5h-1.5zM402 656.09h1.5v1.5h-1.5zM402 654.82h1.5v1.5h-1.5zM402 657.48h1v1.5h-1zM402 660.7h1v1.5h-1zM403.5 655.7h2v1.5h-2zM403.5 659.48h1.5v1.5h-1.5zM403.5 657.12h1.5v1.5h-1.5zM403.5 656.36h1.5v1.5h-1.5zM405 657.67h2v1.5h-2zM405 661.01h1.5v1.5h-1.5zM405 657.89h1v1.5h-1zM405 659.13h2v1.5h-2zM406.5 653.31h1.5v1.5h-1.5zM406.5 661.38h2v1.5h-2zM406.5 660.89h1.5v1.5h-1.5zM406.5 658.15h1.5v1.5h-1.5zM408 655.8h1v1.5h-1zM408 657.19h2v1.5h-2zM408 658.46h2v1.5h-2zM408 659.43h2v1.5h-2zM409.5 653.93h1.5v1.5h-1.5zM409.5 660.45h1.5v1.5h-1.5zM409.5 658.66h1v1.5h-1zM409.5 658.2h1v1.5h-1zM410.5 658.08h1v1.5h-1zM410.5 659.64h1v1.5h-1zM410.5 659.16h1.5v1.5h-1.5zM410.5 661.2h2v1.5h-2zM412 656.09h1.5v1.5h-1.5zM412 655.61h1v1.5h-1zM412 656.25h1v1.5h-1zM412 660.7h1.5v1.5h-1.5zM413.5 659.83h1v1.5h-1zM413.5 653.95h1v1.5h-1zM413.5 659.75h1v1.5h-1zM413.5 659.14h2v1.5h-2zM415 660.87h2v1.5h-2zM415 659.26h2v1.5h-2zM415 659.4h2v1.5h-2zM415 661.9h2v1.5h-2zM416.5 661.77h1.5v1.5h-1.5zM416.5 659.08h2v1.5h-2zM416.5 665.12h1.5v1.5h-1.5zM416.5 664.95h2v1.5h-2zM418 663.22h2v1.5h-2zM418 661.02h2v1.5h-2zM418 660.62h1.5v1.5h-1.5zM418 666.06h1v1.5h-1zM419.5 662.21h2v1.5h-2zM419.5 662.49h2v1.5h-2zM419.5 668.47h1v1.5h-1zM419.5 662.26h1v1.5h-1zM421 667.8h2v1.5h-2zM421 669.7h2v1.5h-2zM421 669.72h1v1.5h-1zM421 669.45h2v1.5h-2zM422 674.52h1v1.5h-1zM422 674.05h2v1.5h-2zM422 679.06h2v1.5h-2zM422 672.99h1.5v1.5h-1.5zM423 675.45h2v1.5h-2zM423 670.01h2v1.5h-2zM423 675.84h2v1.5h-2zM423 671.74h1.5v1.5h-1.5zM424 670.14h1v1.5h-1zM424 669.42h1.5v1.5h-1.5zM424 673.52h2v1.5h-2zM424 668.83h1v1.5h-1zM425.5 666.84h1v1.5h-1zM425.5 663.8h2v1.5h-2zM425.5 666.16h1v1.5h-1zM425.5 663.5h2v1.5h-2zM426.5 664.77h2v1.5h-2zM426.5 668.25h1v1.5h-1zM426.5 664.39h1.5v1.5h-1.5zM426.5 668.19h2v1.5h-2zM428 662.96h1v1.5h-1zM428 663.84h1v1.5h-1zM428 663.02h2v1.5h-2zM428 662.29h1v1.5h-1zM429.5 667.81h2v1.5h-2zM429.5 661.23h1v1.5h-1zM429.5 667.65h1v1.5h-1zM429.5 661.97h1v1.5h-1zM430.5 665.08h2v1.5h-2zM430.5 666.28h2v1.5h-2zM430.5 666.59h1.5v1.5h-1.5zM430.5 666.25h1v1.5h-1zM432 653.39h1.5v1.5h-1.5zM432 654.63h1v1.5h-1zM432 659.25h1v1.5h-1zM432 656.36h1v1.5h-1zM433.5 655.88h2v1.5h-2zM433.5 660.37h1v1.5h-1zM433.5 658.08h1v1.5h-1zM433.5 652.47h1v1.5h-1zM434.5 659.8h2v1.5h-2zM434.5 660.78h1v1.5h-1zM434.5 654.42h1v1.5h-1zM434.5 655.25h1v1.5h-1zM435.5 656.56h1v1.5h-1zM435.5 659.55h2v1.5h-2zM435.5 655.77h2v1.5h-2zM435.5 659.83h2v1.5h-2zM437 656.21h2v1.5h-2zM437 653.07h1v1.5h-1zM437 655.37h2v1.5h-2zM437 655.63h1.5v1.5h-1.5zM438 655.47h2v1.5h-2zM438 659.86h1.5v1.5h-1.5zM438 657.19h1.5v1.5h-1.5zM438 656.48h1.5v1.5h-1.5zM439.5 655.8h1v1.5h-1zM439.5 652.66h2v1.5h-2zM439.5 654.41h2v1.5h-2zM439.5 660.65h2v1.5h-2zM441 652.94h2v1.5h-2zM441 655.24h1.5v1.5h-1.5zM441 653.59h2v1.5h-2zM441 657.51h2v1.5h-2zM442.5 658.77h1.5v1.5h-1.5zM442.5 658.68h1v1.5h-1zM442.5 653.8h1.5v1.5h-1.5zM442.5 656.19h2v1.5h-2zM443.5 662.16h2v1.5h-2zM443.5 657.76h1.5v1.5h-1.5zM443.5 657.89h1.5v1.5h-1.5zM443.5 657.87h1v1.5h-1zM444.5 658.74h1v1.5h-1zM444.5 661.56h1v1.5h-1zM444.5 665.85h1v1.5h-1zM444.5 660.43h1.5v1.5h-1.5zM445.5 667.89h1.5v1.5h-1.5zM445.5 663.62h1v1.5h-1zM445.5 667.17h1.5v1.5h-1.5zM445.5 667.29h2v1.5h-2zM447 669.25h2v1.5h-2zM447 661.8h2v1.5h-2zM447 664.83h1v1.5h-1zM447 669.4h1.5v1.5h-1.5zM448.5 667.86h1v1.5h-1zM448.5 666.98h1v1.5h-1zM448.5 668.58h2v1.5h-2zM448.5 670.8h1v1.5h-1zM450 667.28h1.5v1.5h-1.5zM450 669.88h1.5v1.5h-1.5zM450 665.74h2v1.5h-2zM450 672.06h2v1.5h-2zM451.5 671.28h1.5v1.5h-1.5zM451.5 673.36h2v1.5h-2zM451.5 672.02h1.5v1.5h-1.5zM451.5 672.24h1.5v1.5h-1.5zM453 678.85h1.5v1.5h-1.5zM453 679.28h2v1.5h-2zM453 674.34h1v1.5h-1zM453 680.15h1.5v1.5h-1.5zM454 671.92h1v1.5h-1zM454 673.18h1v1.5h-1zM454 676.4h2v1.5h-2zM454 669.83h1v1.5h-1zM455 671.62h1.5v1.5h-1.5zM455 670.83h1v1.5h-1zM455 666.71h1.5v1.5h-1.5zM455 671.2h1v1.5h-1zM456.5 662.55h2v1.5h-2zM456.5 667.02h1.5v1.5h-1.5zM456.5 667.2h1v1.5h-1zM456.5 667.19h1v1.5h-1zM457.5 661.89h1.5v1.5h-1.5zM457.5 668.14h1.5v1.5h-1.5zM457.5 666.88h2v1.5h-2zM457.5 666.2h1.5v1.5h-1.5zM459 660.88h1v1.5h-1zM459 666.49h2v1.5h-2zM459 661.71h2v1.5h-2zM459 666.84h1v1.5h-1zM460.5 664.24h1v1.5h-1zM460.5 662.63h1.5v1.5h-1.5zM460.5 659.82h2v1.5h-2zM460.5 662.72h1v1.5h-1zM462 658.76h1.5v1.5h-1.5zM462 655.57h1v1.5h-1zM462 656.27h2v1.5h-2zM462 660.12h1v1.5h-1zM463 654.05h2v1.5h-2zM463 654.37h2v1.5h-2zM463 656.32h1.5v1.5h-1.5zM463 659.21h2v1.5h-2zM464 650.68h1.5v1.5h-1.5zM464 649.73h1.5v1.5h-1.5zM464 651.73h1.5v1.5h-1.5zM464 654.72h1.5v1.5h-1.5zM465.5 652.42h1.5v1.5h-1.5zM465.5 649.42h1.5v1.5h-1.5zM465.5 650.86h1.5v1.5h-1.5zM465.5 650.06h2v1.5h-2zM466.5 653.23h1v1.5h-1zM466.5 651.63h1v1.5h-1zM466.5 650.97h2v1.5h-2zM466.5 652.85h1.5v1.5h-1.5zM467.5 656.09h1.5v1.5h-1.5zM467.5 652.72h1.5v1.5h-1.5zM467.5 651.14h1.5v1.5h-1.5zM467.5 650.5h2v1.5h-2zM469 652.32h1v1.5h-1zM469 655.12h2v1.5h-2zM469 655.04h1v1.5h-1zM469 655.38h2v1.5h-2zM470 654.38h1v1.5h-1zM470 653.09h1.5v1.5h-1.5zM470 655.05h2v1.5h-2zM470 656.91h1v1.5h-1zM471 653.91h2v1.5h-2zM471 655.63h1v1.5h-1zM471 650.16h2v1.5h-2zM471 657.23h2v1.5h-2zM472 655.54h1v1.5h-1zM472 649.78h2v1.5h-2zM472 654.01h1.5v1.5h-1.5zM472 652.22h2v1.5h-2zM473 652.25h1v1.5h-1zM473 649.51h1.5v1.5h-1.5zM473 649.89h1.5v1.5h-1.5zM473 652.32h2v1.5h-2zM474 650.9h1.5v1.5h-1.5zM474 654.14h1.5v1.5h-1.5zM474 652.85h2v1.5h-2zM474 650.37h1.5v1.5h-1.5zM475.5 656.25h1.5v1.5h-1.5zM475.5 657.68h1.5v1.5h-1.5zM475.5 655.62h2v1.5h-2zM475.5 660.31h1.5v1.5h-1.5zM477 665.95h1v1.5h-1zM477 659.99h1.5v1.5h-1.5zM477 663.81h2v1.5h-2zM477 661.43h2v1.5h-2zM478.5 662.77h2v1.5h-2zM478.5 661.27h2v1.5h-2zM478.5 663.89h2v1.5h-2zM478.5 663.27h1v1.5h-1zM480 665.04h2v1.5h-2zM480 670.51h1v1.5h-1zM480 664.86h2v1.5h-2zM480 668.95h2v1.5h-2zM481.5 671.24h1.5v1.5h-1.5zM481.5 671.93h1.5v1.5h-1.5zM481.5 671.14h1.5v1.5h-1.5zM481.5 675.68h2v1.5h-2zM482.5 673.75h1v1.5h-1zM482.5 672.69h2v1.5h-2zM482.5 670.72h1.5v1.5h-1.5zM482.5 671.15h1.5v1.5h-1.5zM484 668.57h1v1.5h-1zM484 670.95h1.5v1.5h-1.5zM484 671.1h1v1.5h-1zM484 666.04h1v1.5h-1zM485 671.17h1v1.5h-1zM485 667h1v1.5h-1zM485 664.91h1.5v1.5h-1.5zM485 666.29h1.5v1.5h-1.5zM486.5 663.01h2v1.5h-2zM486.5 661.95h1.5v1.5h-1.5zM486.5 669.32h2v1.5h-2zM486.5 669.78h1v1.5h-1zM488 667.79h2v1.5h-2zM488 668.96h2v1.5h-2zM488 669.9h1v1.5h-1zM488 662.16h1v1.5h-1zM489.5 666.12h2v1.5h-2zM489.5 661.42h1.5v1.5h-1.5zM489.5 664.13h2v1.5h-2zM489.5 666.48h2v1.5h-2zM491 663.42h2v1.5h-2zM491 659.18h1v1.5h-1zM491 659.43h1v1.5h-1zM491 661.09h1.5v1.5h-1.5zM492.5 661.14h2v1.5h-2zM492.5 655.46h1v1.5h-1zM492.5 658.79h1.5v1.5h-1.5zM492.5 659.22h1v1.5h-1zM494 655.61h2v1.5h-2zM494 654.46h1.5v1.5h-1.5zM494 656.81h2v1.5h-2zM494 655.54h2v1.5h-2zM495.5 660.28h1v1.5h-1zM495.5 658.51h1.5v1.5h-1.5zM495.5 658.44h1.5v1.5h-1.5zM495.5 656.16h2v1.5h-2zM497 655.08h2v1.5h-2zM497 653.91h1.5v1.5h-1.5zM497 659.39h2v1.5h-2zM497 660.39h1.5v1.5h-1.5zM498.5 659.58h1.5v1.5h-1.5zM498.5 657.16h2v1.5h-2zM498.5 659.52h1v1.5h-1zM498.5 656.71h1v1.5h-1zM499.5 657.05h1v1.5h-1zM499.5 658.86h1.5v1.5h-1.5zM499.5 658.17h1v1.5h-1zM499.5 660.88h1.5v1.5h-1.5zM501 658.95h1.5v1.5h-1.5zM501 660.31h1v1.5h-1zM501 657.1h1v1.5h-1zM501 661.14h2v1.5h-2zM502 654.25h2v1.5h-2zM502 659.13h1.5v1.5h-1.5zM502 654.89h2v1.5h-2zM502 656.71h1.5v1.5h-1.5zM503 655.21h1v1.5h-1zM503 658.59h1v1.5h-1zM503 659.85h1v1.5h-1zM503 655.81h1v1.5h-1zM504 664.05h2v1.5h-2zM504 660.88h1v1.5h-1zM504 660.2h1v1.5h-1zM504 660.15h1.5v1.5h-1.5zM505 661.41h2v1.5h-2zM505 663.16h1v1.5h-1zM505 662.81h1v1.5h-1zM505 663.4h1v1.5h-1zM506 666.43h1v1.5h-1zM506 668.58h2v1.5h-2zM506 666.11h1v1.5h-1zM506 666.56h1v1.5h-1zM507 667.98h1.5v1.5h-1.5zM507 668.93h1v1.5h-1zM507 664.05h2v1.5h-2zM507 669.07h1v1.5h-1zM508 670.74h1v1.5h-1zM508 670.35h1.5v1.5h-1.5zM508 664.6h1v1.5h-1zM508 667.53h1.5v1.5h-1.5zM509 671.9h2v1.5h-2zM509 664.87h1v1.5h-1zM509 666.71h1.5v1.5h-1.5zM509 672.37h1v1.5h-1zM510 666.75h1v1.5h-1zM510 668.28h1v1.5h-1zM510 666.69h1.5v1.5h-1.5zM510 666.54h1.5v1.5h-1.5zM511 674.25h2v1.5h-2zM511 670.38h1v1.5h-1zM511 671.14h1v1.5h-1zM511 671.02h2v1.5h-2zM512 671.93h2v1.5h-2zM512 673.64h1.5v1.5h-1.5zM512 676.43h2v1.5h-2zM512 675.83h1.5v1.5h-1.5zM513.5 672.27h1v1.5h-1zM513.5 670.66h2v1.5h-2zM513.5 671.38h2v1.5h-2zM513.5 668.22h1.5v1.5h-1.5zM515 667.23h2v1.5h-2zM515 665.46h1.5v1.5h-1.5zM515 667.44h1.5v1.5h-1.5zM515 664.26h1v1.5h-1zM516.5 662.04h1v1.5h-1zM516.5 666.79h1.5v1.5h-1.5zM516.5 665.31h1.5v1.5h-1.5zM516.5 663.1h2v1.5h-2zM518 662.62h1.5v1.5h-1.5zM518 663.27h2v1.5h-2zM518 663.65h1v1.5h-1zM518 662.09h1v1.5h-1zM519.5 659.42h1.5v1.5h-1.5zM519.5 665.7h1v1.5h-1zM519.5 660.16h2v1.5h-2zM519.5 659.76h1.5v1.5h-1.5zM520.5 661.17h1.5v1.5h-1.5zM520.5 658.07h1.5v1.5h-1.5zM520.5 663.59h2v1.5h-2zM520.5 660.13h1v1.5h-1zM522 653.45h1v1.5h-1zM522 654.74h1v1.5h-1zM522 652.11h2v1.5h-2zM522 657.61h2v1.5h-2zM523 652.58h1.5v1.5h-1.5zM523 656.96h1v1.5h-1zM523 650.63h2v1.5h-2zM523 658.01h1.5v1.5h-1.5zM524 650.9h2v1.5h-2zM524 657.73h1v1.5h-1zM524 651.62h1.5v1.5h-1.5zM524 654.79h1.5v1.5h-1.5zM525.5 651.71h1.5v1.5h-1.5zM525.5 652.49h1v1.5h-1zM525.5 653.22h2v1.5h-2zM525.5 651.92h1v1.5h-1zM527 657.15h1v1.5h-1zM527 653.74h1v1.5h-1zM527 658.7h2v1.5h-2zM527 655.72h1v1.5h-1zM528.5 653.69h2v1.5h-2zM528.5 654.53h2v1.5h-2zM528.5 653.63h2v1.5h-2zM528.5 653.77h1v1.5h-1zM529.5 655.16h2v1.5h-2zM529.5 657.78h1.5v1.5h-1.5zM529.5 651.8h2v1.5h-2zM529.5 651.28h1.5v1.5h-1.5zM531 658.62h1v1.5h-1zM531 652.83h1.5v1.5h-1.5zM531 651.48h2v1.5h-2zM531 659.2h2v1.5h-2zM532 659.16h1.5v1.5h-1.5zM532 656.3h1v1.5h-1zM532 660.89h2v1.5h-2zM532 657.32h2v1.5h-2zM533.5 659.23h2v1.5h-2zM533.5 663.94h1v1.5h-1zM533.5 663.33h1v1.5h-1zM533.5 665.52h1v1.5h-1zM534.5 661.9h1.5v1.5h-1.5zM534.5 661.14h1v1.5h-1zM534.5 664.37h2v1.5h-2zM534.5 660.68h2v1.5h-2zM535.5 662.87h1.5v1.5h-1.5zM535.5 662.98h1.5v1.5h-1.5zM535.5 663.84h1.5v1.5h-1.5zM535.5 660.64h1v1.5h-1zM537 664.66h1v1.5h-1zM537 660.08h1.5v1.5h-1.5zM537 664.15h1.5v1.5h-1.5zM537 659.98h1.5v1.5h-1.5zM538.5 665.97h1.5v1.5h-1.5zM538.5 661.85h1v1.5h-1zM538.5 662.35h2v1.5h-2zM538.5 662h1.5v1.5h-1.5zM539.5 670.14h2v1.5h-2zM539.5 668.94h1.5v1.5h-1.5zM539.5 664.62h1v1.5h-1zM539.5 666.32h2v1.5h-2zM540.5 672.69h2v1.5h-2zM540.5 668.95h1v1.5h-1zM540.5 668.12h1.5v1.5h-1.5zM540.5 670.7h1v1.5h-1zM542 670.94h1.5v1.5h-1.5zM542 669.96h1v1.5h-1zM542 672.44h1v1.5h-1zM542 669.26h1v1.5h-1zM543 669.08h1v1.5h-1zM543 668.43h1.5v1.5h-1.5zM543 673.63h1.5v1.5h-1.5zM543 671.7h1.5v1.5h-1.5zM544.5 663.81h2v1.5h-2zM544.5 665.32h1.5v1.5h-1.5zM544.5 666.43h1.5v1.5h-1.5zM544.5 668.75h1.5v1.5h-1.5zM545.5 663.48h2v1.5h-2zM545.5 662.65h1v1.5h-1zM545.5 667.34h1v1.5h-1zM545.5 665.64h1v1.5h-1zM547 659.66h1.5v1.5h-1.5zM547 662.41h1v1.5h-1zM547 660.18h1v1.5h-1zM547 662.71h2v1.5h-2zM548.5 665.13h1.5v1.5h-1.5zM548.5 661.76h1.5v1.5h-1.5zM548.5 659h1v1.5h-1zM548.5 659.22h1v1.5h-1zM550 656.31h2v1.5h-2zM550 657.17h1.5v1.5h-1.5zM550 660.83h1.5v1.5h-1.5zM550 656.77h1.5v1.5h-1.5zM551 658.93h2v1.5h-2zM551 656.79h1v1.5h-1zM551 654.2h1.5v1.5h-1.5zM551 654.43h2v1.5h-2zM552 661.66h1.5v1.5h-1.5zM552 659.25h2v1.5h-2zM552 653.45h1.5v1.5h-1.5zM552 658.98h1.5v1.5h-1.5zM553.5 661h1.5v1.5h-1.5zM553.5 654.24h1.5v1.5h-1.5zM553.5 659.67h2v1.5h-2zM553.5 653.97h1.5v1.5h-1.5zM555 655.44h1.5v1.5h-1.5zM555 654.67h2v1.5h-2zM555 660.74h1.5v1.5h-1.5zM555 653.88h2v1.5h-2zM556 654.03h1.5v1.5h-1.5zM556 659.49h1v1.5h-1zM556 659.24h1.5v1.5h-1.5zM556 660.19h2v1.5h-2zM557.5 658.28h2v1.5h-2zM557.5 661.71h1.5v1.5h-1.5zM557.5 658.52h2v1.5h-2zM557.5 654.08h1v1.5h-1zM559 653.49h1v1.5h-1zM559 655.71h1v1.5h-1zM559 659.16h2v1.5h-2zM559 657.76h1v1.5h-1zM560 653.84h1.5v1.5h-1.5zM560 657.33h1v1.5h-1zM560 656.3h1.5v1.5h-1.5zM560 659.61h2v1.5h-2zM561 661.3h1v1.5h-1zM561 653.53h2v1.5h-2zM561 661.17h1.5v1.5h-1.5zM561 658.17h2v1.5h-2zM562.5 655.4h1.5v1.5h-1.5zM562.5 659.08h1.5v1.5h-1.5zM562.5 661.25h1.5v1.5h-1.5zM562.5 653.66h2v1.5h-2zM563.5 657.43h2v1.5h-2zM563.5 660.14h2v1.5h-2zM563.5 659.77h1.5v1.5h-1.5zM563.5 659.23h1.5v1.5h-1.5zM565 662.7h1.5v1.5h-1.5zM565 659.32h1v1.5h-1zM565 660.03h1v1.5h-1zM565 658.63h1.5v1.5h-1.5zM566 664.75h2v1.5h-2zM566 663.81h1v1.5h-1zM566 662.34h1v1.5h-1zM566 666.59h1v1.5h-1zM567.5 665.79h2v1.5h-2zM567.5 663.06h1v1.5h-1zM567.5 665.63h2v1.5h-2zM567.5 660.6h1v1.5h-1zM568.5 662.56h2v1.5h-2zM568.5 663.59h1v1.5h-1zM568.5 660.94h2v1.5h-2zM568.5 665.96h1v1.5h-1zM569.5 670.59h1v1.5h-1zM569.5 663.72h1.5v1.5h-1.5zM569.5 669h1.5v1.5h-1.5zM569.5 670.61h2v1.5h-2zM570.5 667.68h1.5v1.5h-1.5zM570.5 668.19h2v1.5h-2zM570.5 668.28h1v1.5h-1zM570.5 670.71h1.5v1.5h-1.5zM572 671.97h1.5v1.5h-1.5zM572 672.42h2v1.5h-2zM572 674.57h1v1.5h-1zM572 672.33h1.5v1.5h-1.5zM573 672.34h2v1.5h-2zM573 673.31h1.5v1.5h-1.5zM573 668.76h1v1.5h-1zM573 666.52h2v1.5h-2zM574.5 664.3h1.5v1.5h-1.5zM574.5 664.71h1v1.5h-1zM574.5 669.43h2v1.5h-2zM574.5 669.71h1v1.5h-1zM575.5 662.16h1v1.5h-1zM575.5 668.66h2v1.5h-2zM575.5 667.66h2v1.5h-2zM575.5 665.07h1.5v1.5h-1.5zM577 664.13h1v1.5h-1zM577 663.88h1.5v1.5h-1.5zM577 665.29h1.5v1.5h-1.5zM577 662.13h1.5v1.5h-1.5zM578 668.24h2v1.5h-2zM578 665.65h2v1.5h-2zM578 661.35h1.5v1.5h-1.5zM578 667.11h2v1.5h-2zM579 663.68h2v1.5h-2zM579 665.01h1.5v1.5h-1.5zM579 667.46h2v1.5h-2zM579 662.29h1.5v1.5h-1.5zM580 665.42h1v1.5h-1zM580 660.77h1.5v1.5h-1.5zM580 661.48h1v1.5h-1zM580 661.22h1.5v1.5h-1.5zM581.5 662.92h1.5v1.5h-1.5zM581.5 664.51h2v1.5h-2zM581.5 664.83h1.5v1.5h-1.5zM581.5 663.94h1.5v1.5h-1.5zM582.5 657.09h1.5v1.5h-1.5zM582.5 655.29h1.5v1.5h-1.5zM582.5 658.37h2v1.5h-2zM582.5 659.29h2v1.5h-2zM584 657.84h1.5v1.5h-1.5zM584 651.84h1.5v1.5h-1.5zM584 654.91h1v1.5h-1zM584 652.84h2v1.5h-2zM585 656.88h1v1.5h-1zM585 658.76h1v1.5h-1zM585 653.15h1v1.5h-1zM585 658.79h1v1.5h-1zM586.5 653.71h1.5v1.5h-1.5zM586.5 652.49h2v1.5h-2zM586.5 650.92h1.5v1.5h-1.5zM586.5 657.99h2v1.5h-2zM587.5 656.92h1.5v1.5h-1.5zM587.5 655.13h1.5v1.5h-1.5zM587.5 656.34h1v1.5h-1zM587.5 658.85h1.5v1.5h-1.5zM588.5 651.99h1v1.5h-1zM588.5 656.33h1v1.5h-1zM588.5 652.23h1v1.5h-1zM588.5 652.09h2v1.5h-2zM590 653.03h1.5v1.5h-1.5zM590 653.29h2v1.5h-2zM590 655.62h2v1.5h-2zM590 655.84h2v1.5h-2zM591.5 652.74h1v1.5h-1zM591.5 657.9h1v1.5h-1zM591.5 658.21h2v1.5h-2zM591.5 657.26h2v1.5h-2zM593 660.32h2v1.5h-2zM593 660.22h1.5v1.5h-1.5zM593 657.75h1.5v1.5h-1.5zM593 664.25h1.5v1.5h-1.5zM594.5 663.37h1v1.5h-1zM594.5 667.98h2v1.5h-2zM594.5 662.36h1v1.5h-1zM594.5 668.37h2v1.5h-2zM596 664.63h1v1.5h-1zM596 665h1v1.5h-1zM596 663.95h1.5v1.5h-1.5zM596 669.19h2v1.5h-2zM597.5 662.62h1v1.5h-1zM597.5 664.58h1v1.5h-1zM597.5 665.61h1v1.5h-1zM597.5 663.79h2v1.5h-2zM599 665.08h1.5v1.5h-1.5zM599 672.74h2v1.5h-2zM599 666.03h2v1.5h-2zM599 671.57h1v1.5h-1zM600.5 674.95h1v1.5h-1zM600.5 673.66h2v1.5h-2zM600.5 673.24h2v1.5h-2zM600.5 669.5h1.5v1.5h-1.5zM602 668.52h1.5v1.5h-1.5zM602 674.47h1.5v1.5h-1.5zM602 667.25h1v1.5h-1zM602 670.29h2v1.5h-2zM603.5 665.33h1v1.5h-1zM603.5 670.37h2v1.5h-2zM603.5 672.28h1v1.5h-1zM603.5 670.01h1v1.5h-1zM605 662.56h1v1.5h-1zM605 665.77h2v1.5h-2zM605 662.42h1v1.5h-1zM605 662.45h1.5v1.5h-1.5zM606.5 667.51h1.5v1.5h-1.5zM606.5 662.54h2v1.5h-2zM606.5 662.61h2v1.5h-2zM606.5 664.56h1v1.5h-1zM608 662.52h1.5v1.5h-1.5zM608 663.52h2v1.5h-2zM608 666.64h1v1.5h-1zM608 663.58h1.5v1.5h-1.5zM609 664.97h1v1.5h-1zM609 664h1v1.5h-1zM609 662.54h1.5v1.5h-1.5zM609 665.01h1.5v1.5h-1.5zM610.5 663.05h1v1.5h-1zM610.5 659.94h1.5v1.5h-1.5zM610.5 661.13h1v1.5h-1zM610.5 663.71h1.5v1.5h-1.5zM612 657.92h1v1.5h-1zM612 659.26h1.5v1.5h-1.5zM612 656.3h2v1.5h-2zM612 656.67h1.5v1.5h-1.5zM613 654.31h1v1.5h-1zM613 657.12h1.5v1.5h-1.5zM613 657.78h2v1.5h-2zM613 656.16h1.5v1.5h-1.5zM614 654.05h2v1.5h-2zM614 652.77h1v1.5h-1zM614 651.84h1v1.5h-1zM614 651.99h2v1.5h-2zM615.5 651.36h2v1.5h-2zM615.5 653.63h2v1.5h-2zM615.5 651.58h1.5v1.5h-1.5zM615.5 656.41h1.5v1.5h-1.5zM616.5 655.1h1v1.5h-1zM616.5 658.55h1v1.5h-1zM616.5 653.9h1v1.5h-1zM616.5 654.58h1.5v1.5h-1.5zM618 652.29h2v1.5h-2zM618 657.08h2v1.5h-2zM618 658.89h1v1.5h-1zM618 658.45h1v1.5h-1zM619.5 654.83h1v1.5h-1zM619.5 651.37h2v1.5h-2zM619.5 652.04h1.5v1.5h-1.5zM619.5 657.73h2v1.5h-2zM620.5 656.74h1v1.5h-1zM620.5 655.02h1v1.5h-1zM620.5 656.28h1.5v1.5h-1.5zM620.5 653.71h2v1.5h-2zM622 656.91h2v1.5h-2zM622 659.03h1.5v1.5h-1.5zM622 660.03h1v1.5h-1zM622 663.15h1v1.5h-1zM623.5 665.5h1v1.5h-1zM623.5 669.3h1.5v1.5h-1.5zM623.5 662.59h2v1.5h-2zM623.5 668.07h1v1.5h-1zM625 669.49h1v1.5h-1zM625 666.61h1v1.5h-1zM625 667.46h1v1.5h-1zM625 662.47h1.5v1.5h-1.5zM626 668.83h1.5v1.5h-1.5zM626 667.84h1.5v1.5h-1.5zM626 666.51h2v1.5h-2zM626 666.39h1.5v1.5h-1.5zM627 668.86h1.5v1.5h-1.5zM627 665.1h1v1.5h-1zM627 668.69h1v1.5h-1zM627 667.18h1v1.5h-1zM628 668.07h2v1.5h-2zM628 665.28h1.5v1.5h-1.5zM628 664.61h2v1.5h-2zM628 663.96h1v1.5h-1zM629 667.32h1v1.5h-1zM629 670.07h2v1.5h-2zM629 667.45h1.5v1.5h-1.5zM629 672.02h1.5v1.5h-1.5zM630.5 672.72h1v1.5h-1zM630.5 672.25h1.5v1.5h-1.5zM630.5 674.04h2v1.5h-2zM630.5 671.51h1v1.5h-1zM631.5 667.98h2v1.5h-2zM631.5 674.51h1v1.5h-1zM631.5 675.83h1v1.5h-1zM631.5 672.06h1.5v1.5h-1.5zM633 670.4h1v1.5h-1zM633 670.87h1v1.5h-1zM633 672.97h1.5v1.5h-1.5zM633 665.2h1v1.5h-1zM634 664.83h1v1.5h-1zM634 667h1.5v1.5h-1.5zM634 667.6h1v1.5h-1zM634 664.71h2v1.5h-2zM635.5 668.59h2v1.5h-2zM635.5 664.21h1v1.5h-1zM635.5 667.98h1.5v1.5h-1.5zM635.5 662.26h2v1.5h-2zM637 667.13h1v1.5h-1zM637 660.62h1v1.5h-1zM637 665.09h2v1.5h-2zM637 659.94h1.5v1.5h-1.5zM638 659.71h1.5v1.5h-1.5zM638 662.66h1v1.5h-1zM638 664.59h1v1.5h-1zM638 658.42h1.5v1.5h-1.5zM639.5 658.98h1.5v1.5h-1.5zM639.5 658.64h1.5v1.5h-1.5zM639.5 656.43h1v1.5h-1zM639.5 657.74h1.5v1.5h-1.5zM641 656.45h2v1.5h-2zM641 656.11h1v1.5h-1zM641 653.88h2v1.5h-2zM641 659.17h1.5v1.5h-1.5zM642 660.88h1.5v1.5h-1.5zM642 660.8h2v1.5h-2zM642 659.34h1v1.5h-1zM642 656.95h1v1.5h-1zM643 654.3h2v1.5h-2zM643 657.5h2v1.5h-2zM643 658.01h2v1.5h-2zM643 655.77h2v1.5h-2zM644 652.76h2v1.5h-2zM644 659.02h1.5v1.5h-1.5zM644 656.09h1v1.5h-1zM644 658.68h2v1.5h-2zM645.5 659.67h1v1.5h-1zM645.5 658.68h1v1.5h-1zM645.5 659.47h2v1.5h-2zM645.5 654.31h1.5v1.5h-1.5zM647 656.55h1v1.5h-1zM647 660.28h1.5v1.5h-1.5zM647 657.49h2v1.5h-2zM647 654.19h2v1.5h-2zM648 656.76h1.5v1.5h-1.5zM648 659.81h1.5v1.5h-1.5zM648 654.84h1v1.5h-1zM648 660.7h1.5v1.5h-1.5zM649.5 659.64h2v1.5h-2zM649.5 656.63h2v1.5h-2zM649.5 655.46h1.5v1.5h-1.5zM649.5 656.92h1.5v1.5h-1.5zM651 660.06h1v1.5h-1zM651 660.97h2v1.5h-2zM651 656.81h1.5v1.5h-1.5zM651 655.8h1.5v1.5h-1.5zM652.5 663.92h1v1.5h-1zM652.5 666.69h1.5v1.5h-1.5zM652.5 664.52h2v1.5h-2zM652.5 659.11h1v1.5h-1zM654 669.13h2v1.5h-2zM654 665.87h1v1.5h-1zM654 665.22h1v1.5h-1zM654 669.37h1v1.5h-1zM655 663.13h1.5v1.5h-1.5zM655 661.75h1v1.5h-1zM655 665.28h2v1.5h-2zM655 664.15h1.5v1.5h-1.5zM656.5 668.96h1v1.5h-1zM656.5 662.99h1.5v1.5h-1.5zM656.5 669.69h1v1.5h-1zM656.5 670.31h1.5v1.5h-1.5zM657.5 667.98h2v1.5h-2zM657.5 665.99h1.5v1.5h-1.5zM657.5 668.53h1.5v1.5h-1.5zM657.5 665.23h1.5v1.5h-1.5zM658.5 668h2v1.5h-2zM658.5 670.04h1.5v1.5h-1.5zM658.5 665.15h1v1.5h-1zM658.5 670.29h1.5v1.5h-1.5zM660 676h1v1.5h-1zM660 670.21h1.5v1.5h-1.5zM660 667.88h1v1.5h-1zM660 669.36h1v1.5h-1zM661 674.35h2v1.5h-2zM661 672.1h1v1.5h-1zM661 669.58h2v1.5h-2zM661 669.57h1v1.5h-1zM662 673.83h1.5v1.5h-1.5zM662 667.1h1v1.5h-1zM662 668.36h1v1.5h-1zM662 669.16h2v1.5h-2zM663.5 666.22h2v1.5h-2zM663.5 671.25h1.5v1.5h-1.5zM663.5 665.01h1.5v1.5h-1.5zM663.5 664.4h2v1.5h-2zM664.5 668.65h1v1.5h-1zM664.5 667.62h1.5v1.5h-1.5zM664.5 668.99h1v1.5h-1zM664.5 667.05h1v1.5h-1zM665.5 665.8h2v1.5h-2zM665.5 664.8h2v1.5h-2zM665.5 664.3h1.5v1.5h-1.5zM665.5 663.53h1.5v1.5h-1.5zM667 661.81h1.5v1.5h-1.5zM667 664.07h1.5v1.5h-1.5zM667 667.88h1v1.5h-1zM667 660.87h2v1.5h-2zM668.5 660.16h1.5v1.5h-1.5zM668.5 665.97h2v1.5h-2zM668.5 661.88h1v1.5h-1zM668.5 668.01h1v1.5h-1zM670 661.65h1.5v1.5h-1.5zM670 667.8h1.5v1.5h-1.5zM670 666.16h2v1.5h-2zM670 663.91h1v1.5h-1zM671 659.17h1.5v1.5h-1.5zM671 661.19h2v1.5h-2zM671 664.49h2v1.5h-2zM671 664.93h1v1.5h-1zM672.5 658.31h2v1.5h-2zM672.5 653.99h1v1.5h-1zM672.5 653.05h1v1.5h-1zM672.5 659.93h1v1.5h-1zM674 652.74h2v1.5h-2zM674 658.73h2v1.5h-2zM674 653.53h1.5v1.5h-1.5zM674 654.08h1.5v1.5h-1.5zM675 654.08h2v1.5h-2zM675 656.26h1.5v1.5h-1.5zM675 656.2h1v1.5h-1zM675 653.14h1.5v1.5h-1.5zM676 657.12h1v1.5h-1zM676 658.43h1v1.5h-1zM676 655.91h1.5v1.5h-1.5zM676 653.54h2v1.5h-2zM677.5 658.54h1v1.5h-1zM677.5 654.5h1v1.5h-1zM677.5 657.5h2v1.5h-2zM677.5 657.58h1.5v1.5h-1.5zM679 654.74h1.5v1.5h-1.5zM679 659.65h1.5v1.5h-1.5zM679 656.52h1.5v1.5h-1.5zM679 659.85h1v1.5h-1zM680.5 656.94h1v1.5h-1zM680.5 659.78h2v1.5h-2zM680.5 658.89h1v1.5h-1zM680.5 652.83h2v1.5h-2zM682 659.43h1.5v1.5h-1.5zM682 659.68h1.5v1.5h-1.5zM682 662.28h2v1.5h-2zM682 659.66h1.5v1.5h-1.5zM683 658.72h1v1.5h-1zM683 663.22h2v1.5h-2zM683 658.32h1v1.5h-1zM683 663.66h1.5v1.5h-1.5zM684.5 664.36h1.5v1.5h-1.5zM684.5 662.04h1.5v1.5h-1.5zM684.5 668.21h1v1.5h-1zM684.5 665.33h1v1.5h-1zM685.5 661.09h2v1.5h-2zM685.5 662.91h1.5v1.5h-1.5zM685.5 667.43h1.5v1.5h-1.5zM685.5 665.56h1v1.5h-1zM686.5 667.25h1.5v1.5h-1.5zM686.5 661.57h1.5v1.5h-1.5zM686.5 663.12h2v1.5h-2zM686.5 667.17h1.5v1.5h-1.5zM688 667.45h1.5v1.5h-1.5zM688 670.33h2v1.5h-2zM688 669.06h1.5v1.5h-1.5zM688 667.12h1v1.5h-1zM689 669.04h2v1.5h-2zM689 673.89h1v1.5h-1zM689 668.24h1.5v1.5h-1.5zM689 671.75h2v1.5h-2zM690.5 673.27h2v1.5h-2zM690.5 670.78h1.5v1.5h-1.5zM690.5 674.15h1v1.5h-1zM690.5 678.21h2v1.5h-2zM692 672.16h1v1.5h-1zM692 674.18h2v1.5h-2zM692 668.88h2v1.5h-2zM692 670.57h1.5v1.5h-1.5zM693 667.37h1v1.5h-1zM693 671.25h1.5v1.5h-1.5zM693 668.07h2v1.5h-2zM693 672.17h2v1.5h-2zM694 661.69h2v1.5h-2zM694 661.49h1v1.5h-1zM694 662h2v1.5h-2zM694 662.39h1.5v1.5h-1.5zM695.5 662.61h2v1.5h-2zM695.5 668.25h1.5v1.5h-1.5zM695.5 665.11h2v1.5h-2zM695.5 662.52h1.5v1.5h-1.5zM697 665.66h1.5v1.5h-1.5zM697 665.06h1v1.5h-1zM697 662.64h1v1.5h-1zM697 660.3h1v1.5h-1zM698.5 661.29h2v1.5h-2zM698.5 656.5h1v1.5h-1zM698.5 656.03h2v1.5h-2zM698.5 653.11h1v1.5h-1zM700 655.23h1.5v1.5h-1.5zM700 650.6h1.5v1.5h-1.5zM700 651.86h1v1.5h-1zM700 654.75h1v1.5h-1zM701 658.3h2v1.5h-2zM701 653.83h2v1.5h-2zM701 656.85h1v1.5h-1zM701 657.76h1.5v1.5h-1.5zM702.5 654.62h1.5v1.5h-1.5zM702.5 654.79h2v1.5h-2zM702.5 651.65h1v1.5h-1zM702.5 657.67h1v1.5h-1zM704 653.65h1v1.5h-1zM704 652.36h1.5v1.5h-1.5zM704 654.69h1v1.5h-1zM704 656.42h1.5v1.5h-1.5zM705.5 653.48h1v1.5h-1zM705.5 656.12h1.5v1.5h-1.5zM705.5 656.91h2v1.5h-2zM705.5 658.51h1.5v1.5h-1.5zM706.5 655.82h1v1.5h-1zM706.5 653.4h1.5v1.5h-1.5zM706.5 658.47h2v1.5h-2zM706.5 652.3h1v1.5h-1zM707.5 655.24h1.5v1.5h-1.5zM707.5 651.86h1v1.5h-1zM707.5 657.99h2v1.5h-2zM707.5 652.18h1v1.5h-1zM709 654.12h1.5v1.5h-1.5zM709 656.58h2v1.5h-2zM709 657.81h1.5v1.5h-1.5zM709 657.72h2v1.5h-2zM710.5 651.58h1v1.5h-1zM710.5 654.12h2v1.5h-2zM710.5 656.34h1.5v1.5h-1.5zM710.5 656.08h2v1.5h-2zM711.5 656.9h1.5v1.5h-1.5zM711.5 651.74h1.5v1.5h-1.5zM711.5 655.15h1v1.5h-1zM711.5 656.31h1.5v1.5h-1.5zM712.5 653.12h2v1.5h-2zM712.5 659.78h1v1.5h-1zM712.5 652.54h1.5v1.5h-1.5zM712.5 655.31h2v1.5h-2zM714 663.97h2v1.5h-2zM714 660.14h2v1.5h-2zM714 664.7h1.5v1.5h-1.5zM714 664.17h1.5v1.5h-1.5zM715 665.25h2v1.5h-2zM715 663.82h2v1.5h-2zM715 670.48h1.5v1.5h-1.5zM715 669.64h1.5v1.5h-1.5zM716.5 670.16h1v1.5h-1zM716.5 663.92h1.5v1.5h-1.5zM716.5 668.63h1.5v1.5h-1.5zM716.5 664.47h1.5v1.5h-1.5zM717.5 666.85h1v1.5h-1zM717.5 671.65h2v1.5h-2zM717.5 670.79h1v1.5h-1zM717.5 671.24h1.5v1.5h-1.5zM719 672.84h1v1.5h-1zM719 672.86h1v1.5h-1zM719 671.25h1v1.5h-1zM719 668.64h1.5v1.5h-1.5zM720 673.71h1v1.5h-1zM720 678.43h1.5v1.5h-1.5zM720 675.33h1v1.5h-1zM720 676.06h2v1.5h-2zM721 672.68h1.5v1.5h-1.5zM721 671.31h1.5v1.5h-1.5zM721 675.45h1v1.5h-1zM721 674.84h2v1.5h-2zM722 666.72h1v1.5h-1zM722 674.04h1.5v1.5h-1.5zM722 673.26h2v1.5h-2zM722 672.34h1.5v1.5h-1.5zM723.5 663.13h1v1.5h-1zM723.5 664.19h2v1.5h-2zM723.5 666.59h1.5v1.5h-1.5zM723.5 665.99h2v1.5h-2zM724.5 662.87h1v1.5h-1zM724.5 666.95h1v1.5h-1zM724.5 667.76h1.5v1.5h-1.5zM724.5 665.7h1v1.5h-1zM725.5 667.32h1.5v1.5h-1.5zM725.5 666.29h1v1.5h-1zM725.5 666.01h1v1.5h-1zM725.5 664.66h2v1.5h-2zM727 666.57h1v1.5h-1zM727 665.25h2v1.5h-2zM727 662.03h2v1.5h-2zM727 662.02h1.5v1.5h-1.5zM728.5 664.15h2v1.5h-2zM728.5 664.53h1v1.5h-1zM728.5 664.7h1v1.5h-1zM728.5 663.97h1v1.5h-1zM729.5 662.61h2v1.5h-2zM729.5 660.36h1.5v1.5h-1.5zM729.5 664.28h2v1.5h-2zM729.5 664.35h2v1.5h-2zM731 656.93h1.5v1.5h-1.5zM731 660.98h1v1.5h-1zM731 656.04h1v1.5h-1zM731 657.04h2v1.5h-2zM732 655.86h1v1.5h-1zM732 658.73h1v1.5h-1zM732 656.28h1.5v1.5h-1.5zM732 658.41h2v1.5h-2zM733.5 651.8h1v1.5h-1zM733.5 659.1h2v1.5h-2zM733.5 655.38h1v1.5h-1zM733.5 652.16h2v1.5h-2zM734.5 655.8h2v1.5h-2zM734.5 654.14h2v1.5h-2zM734.5 657.88h1v1.5h-1zM734.5 657.53h1v1.5h-1zM736 658.91h1.5v1.5h-1.5zM736 654.97h2v1.5h-2zM736 652.33h1.5v1.5h-1.5zM736 656.8h2v1.5h-2zM737 658.67h1.5v1.5h-1.5zM737 651.85h1v1.5h-1zM737 655.63h1v1.5h-1zM737 655.02h1.5v1.5h-1.5zM738 658.37h2v1.5h-2zM738 651.74h1v1.5h-1zM738 657.14h1.5v1.5h-1.5zM738 653.64h2v1.5h-2zM739.5 654.84h1.5v1.5h-1.5zM739.5 652.65h1.5v1.5h-1.5zM739.5 658.28h2v1.5h-2zM739.5 652.8h1.5v1.5h-1.5zM740.5 655.77h1v1.5h-1zM740.5 658.76h2v1.5h-2zM740.5 652.16h1.5v1.5h-1.5zM740.5 656.08h1.5v1.5h-1.5zM741.5 656.86h1v1.5h-1zM741.5 653.55h1.5v1.5h-1.5zM741.5 654.47h2v1.5h-2zM741.5 651.72h1v1.5h-1zM743 657.46h1.5v1.5h-1.5zM743 657.65h1v1.5h-1zM743 655.55h1v1.5h-1zM743 653.81h2v1.5h-2zM744 663.08h2v1.5h-2zM744 657.16h1.5v1.5h-1.5zM744 658.78h1.5v1.5h-1.5zM744 663.96h2v1.5h-2zM745 660.69h2v1.5h-2zM745 666.35h2v1.5h-2zM745 664.19h1.5v1.5h-1.5zM745 663.43h2v1.5h-2zM746 666.04h1v1.5h-1zM746 669.21h1v1.5h-1zM746 664.15h1v1.5h-1zM746 663.4h1.5v1.5h-1.5zM747 670.56h2v1.5h-2zM747 669.79h1.5v1.5h-1.5zM747 667.12h1v1.5h-1zM747 664.57h2v1.5h-2zM748.5 673.9h2v1.5h-2zM748.5 669.5h1v1.5h-1zM748.5 674.33h1.5v1.5h-1.5zM748.5 671.11h1.5v1.5h-1.5zM749.5 673.17h1v1.5h-1zM749.5 671.51h1v1.5h-1zM749.5 671.82h1.5v1.5h-1.5zM749.5 678.31h1.5v1.5h-1.5zM750.5 674.65h1v1.5h-1zM750.5 670.93h1.5v1.5h-1.5zM750.5 675.72h1v1.5h-1zM750.5 674.2h1v1.5h-1zM751.5 671.17h2v1.5h-2zM751.5 670.15h2v1.5h-2zM751.5 672.59h2v1.5h-2zM751.5 666.83h1.5v1.5h-1.5zM752.5 670.41h2v1.5h-2zM752.5 668.41h1.5v1.5h-1.5zM752.5 665.64h2v1.5h-2zM752.5 665.07h1v1.5h-1zM754 664.28h2v1.5h-2zM754 662.44h1.5v1.5h-1.5zM754 662.39h1v1.5h-1zM754 663.14h2v1.5h-2zM755 664.43h1.5v1.5h-1.5zM755 668.85h1.5v1.5h-1.5zM755 666.01h1.5v1.5h-1.5zM755 668.17h1.5v1.5h-1.5zM756 667.84h1.5v1.5h-1.5zM756 666.48h1.5v1.5h-1.5zM756 660.98h1v1.5h-1zM756 667.39h1.5v1.5h-1.5zM757.5 664.86h1v1.5h-1zM757.5 667.06h2v1.5h-2zM757.5 666.25h1.5v1.5h-1.5zM757.5 661.36h1v1.5h-1zM759 657.12h1.5v1.5h-1.5zM759 658.54h1v1.5h-1zM759 660.29h2v1.5h-2zM759 659.5h2v1.5h-2zM760 651.14h1.5v1.5h-1.5zM760 658.07h1.5v1.5h-1.5zM760 656.05h1v1.5h-1zM760 657.78h1.5v1.5h-1.5zM761 656.6h1.5v1.5h-1.5zM761 653.31h1.5v1.5h-1.5zM761 657.16h2v1.5h-2zM761 651.45h1v1.5h-1zM762 656.71h1v1.5h-1zM762 658.99h2v1.5h-2zM762 654.58h2v1.5h-2zM762 651.31h2v1.5h-2zM763 656.16h1v1.5h-1zM763 652.57h1.5v1.5h-1.5zM763 657.04h1.5v1.5h-1.5zM763 655.5h1.5v1.5h-1.5zM764 654.41h1.5v1.5h-1.5zM764 651.18h1v1.5h-1zM764 655.18h2v1.5h-2zM764 656.69h1v1.5h-1zM765 655.9h1.5v1.5h-1.5zM765 657.74h1v1.5h-1zM765 652.6h1v1.5h-1zM765 655.25h2v1.5h-2zM766 650.93h1v1.5h-1zM766 656.25h1.5v1.5h-1.5zM766 655.69h1v1.5h-1zM766 655.55h2v1.5h-2zM767.5 652.45h1.5v1.5h-1.5zM767.5 655.31h1.5v1.5h-1.5zM767.5 655.9h2v1.5h-2zM767.5 655.37h2v1.5h-2zM768.5 654.7h1v1.5h-1zM768.5 658.86h2v1.5h-2zM768.5 651.01h1v1.5h-1zM768.5 653.52h1v1.5h-1zM769.5 661.3h2v1.5h-2zM769.5 657.53h1.5v1.5h-1.5zM769.5 659.55h1v1.5h-1zM769.5 660.37h2v1.5h-2zM770.5 658.45h1v1.5h-1zM770.5 664.28h1.5v1.5h-1.5zM770.5 658.19h1v1.5h-1zM770.5 660.01h1v1.5h-1zM772 663.25h1.5v1.5h-1.5zM772 660.48h2v1.5h-2zM772 664.49h1.5v1.5h-1.5zM772 666.03h1.5v1.5h-1.5zM773.5 666.93h2v1.5h-2zM773.5 660.65h2v1.5h-2zM773.5 665h1.5v1.5h-1.5zM773.5 660.35h2v1.5h-2zM774.5 662.21h1.5v1.5h-1.5zM774.5 667.03h1.5v1.5h-1.5zM774.5 668.38h2v1.5h-2zM774.5 664.22h1.5v1.5h-1.5zM775.5 665.3h1.5v1.5h-1.5zM775.5 667.96h1.5v1.5h-1.5zM775.5 664.59h1v1.5h-1zM775.5 663.68h1.5v1.5h-1.5zM777 670.17h2v1.5h-2zM777 667.4h1.5v1.5h-1.5zM777 664.89h2v1.5h-2zM777 665.84h2v1.5h-2zM778.5 670.8h1.5v1.5h-1.5zM778.5 673.83h1.5v1.5h-1.5zM778.5 666.77h2v1.5h-2zM778.5 674.6h2v1.5h-2zM780 673.05h1v1.5h-1zM780 675.59h1.5v1.5h-1.5zM780 672.92h1.5v1.5h-1.5zM780 671.12h1.5v1.5h-1.5zM781.5 668.99h2v1.5h-2zM781.5 666.89h1.5v1.5h-1.5zM781.5 671.95h1.5v1.5h-1.5zM781.5 667.33h1v1.5h-1zM782.5 669.07h1.5v1.5h-1.5zM782.5 664.28h1.5v1.5h-1.5zM782.5 666.97h1.5v1.5h-1.5zM782.5 664.17h1v1.5h-1zM784 666.8h1v1.5h-1zM784 668.83h1v1.5h-1zM784 667.63h1.5v1.5h-1.5zM784 668.61h1.5v1.5h-1.5zM785.5 661.04h2v1.5h-2zM785.5 662.5h1v1.5h-1zM785.5 668.42h1.5v1.5h-1.5zM785.5 661.9h2v1.5h-2zM786.5 668.34h2v1.5h-2zM786.5 664.81h1v1.5h-1zM786.5 661.68h1.5v1.5h-1.5zM786.5 666.21h2v1.5h-2zM788 665.79h2v1.5h-2zM788 666.15h2v1.5h-2zM788 667.03h1.5v1.5h-1.5zM788 667.14h2v1.5h-2zM789.5 664.38h1v1.5h-1zM789.5 661.79h1v1.5h-1zM789.5 663.71h2v1.5h-2zM789.5 664.61h1v1.5h-1zM790.5 657.17h1.5v1.5h-1.5zM790.5 663.09h2v1.5h-2zM790.5 660.06h1v1.5h-1zM790.5 662.95h1v1.5h-1zM791.5 659.32h2v1.5h-2zM791.5 652.87h1v1.5h-1zM791.5 653.5h2v1.5h-2zM791.5 652.88h1.5v1.5h-1.5zM792.5 654.17h1v1.5h-1zM792.5 657.65h1v1.5h-1zM792.5 659.45h1v1.5h-1zM792.5 655.38h2v1.5h-2zM794 657.1h1v1.5h-1zM794 659.25h1.5v1.5h-1.5zM794 655.22h1v1.5h-1zM794 652.77h1v1.5h-1zM795.5 656.41h2v1.5h-2zM795.5 653.84h2v1.5h-2zM795.5 652.74h2v1.5h-2zM795.5 656.05h2v1.5h-2zM796.5 653.16h1v1.5h-1zM796.5 659.9h2v1.5h-2zM796.5 658.89h1.5v1.5h-1.5zM796.5 658.71h1.5v1.5h-1.5zM797.5 657.82h2v1.5h-2zM797.5 657.85h1v1.5h-1zM797.5 655.55h1v1.5h-1zM797.5 659.17h1.5v1.5h-1.5zM799 659.9h1.5v1.5h-1.5zM799 659.29h2v1.5h-2zM799 652.15h1v1.5h-1zM799 655.1h2v1.5h-2zM800.5 656.46h1v1.5h-1zM800.5 655.68h1v1.5h-1zM800.5 658.74h2v1.5h-2zM800.5 659.23h2v1.5h-2zM801.5 658.2h2v1.5h-2zM801.5 652.93h1.5v1.5h-1.5zM801.5 657.23h1v1.5h-1zM801.5 652.63h1.5v1.5h-1.5zM802.5 653.86h2v1.5h-2zM802.5 653.38h2v1.5h-2zM802.5 654.71h1v1.5h-1zM802.5 655.65h1v1.5h-1zM803.5 660.44h2v1.5h-2zM803.5 663.98h1.5v1.5h-1.5zM803.5 661h2v1.5h-2zM803.5 657.85h1v1.5h-1zM805 668.11h1.5v1.5h-1.5zM805 667.34h2v1.5h-2zM805 662.29h2v1.5h-2zM805 667.57h1.5v1.5h-1.5zM806.5 663.53h2v1.5h-2zM806.5 668.07h1v1.5h-1zM806.5 669.97h1.5v1.5h-1.5zM806.5 670.17h1.5v1.5h-1.5zM808 668.6h2v1.5h-2zM808 674.99h2v1.5h-2zM808 672.56h2v1.5h-2zM808 668.21h1v1.5h-1zM809.5 675.16h2v1.5h-2zM809.5 674.91h1.5v1.5h-1.5zM809.5 679.67h2v1.5h-2zM809.5 676.28h1.5v1.5h-1.5zM811 673.06h1v1.5h-1zM811 674.05h1.5v1.5h-1.5zM811 674.4h1.5v1.5h-1.5zM811 672.44h1.5v1.5h-1.5zM812.5 662.95h1.5v1.5h-1.5zM812.5 664.95h2v1.5h-2zM812.5 669.46h1v1.5h-1zM812.5 667.98h2v1.5h-2zM813.5 664.21h1.5v1.5h-1.5zM813.5 664.02h1.5v1.5h-1.5zM813.5 662.43h1v1.5h-1zM813.5 667.58h1v1.5h-1zM814.5 667.11h1v1.5h-1zM814.5 662.92h1.5v1.5h-1.5zM814.5 661.69h2v1.5h-2zM814.5 667.63h2v1.5h-2zM816 665.02h2v1.5h-2zM816 658.47h1.5v1.5h-1.5zM816 661.98h2v1.5h-2zM816 664.83h1.5v1.5h-1.5zM817 661.49h1v1.5h-1zM817 655.55h1v1.5h-1zM817 662.18h1.5v1.5h-1.5zM817 657.31h2v1.5h-2zM818 659.49h2v1.5h-2zM818 658.12h2v1.5h-2zM818 659.74h1.5v1.5h-1.5zM818 655.75h1.5v1.5h-1.5zM819 659.5h2v1.5h-2zM819 657.86h1v1.5h-1zM819 660.17h2v1.5h-2zM819 654.2h1.5v1.5h-1.5zM820.5 657.1h2v1.5h-2zM820.5 654.09h1.5v1.5h-1.5zM820.5 654.37h1v1.5h-1zM820.5 655.54h2v1.5h-2zM822 659.83h1.5v1.5h-1.5zM822 653.47h1v1.5h-1zM822 655.27h1.5v1.5h-1.5zM822 653.56h1.5v1.5h-1.5zM823 654.49h1.5v1.5h-1.5zM823 654.63h1.5v1.5h-1.5zM823 655.34h2v1.5h-2zM823 658.63h1.5v1.5h-1.5zM824 658.53h1v1.5h-1zM824 653.57h2v1.5h-2zM824 659.96h2v1.5h-2zM824 654.01h2v1.5h-2zM825.5 656.17h1v1.5h-1zM825.5 654.95h1.5v1.5h-1.5zM825.5 658.31h1.5v1.5h-1.5zM825.5 653h1v1.5h-1zM826.5 654.8h2v1.5h-2zM826.5 658.76h1.5v1.5h-1.5zM826.5 655.02h1v1.5h-1zM826.5 658.48h1.5v1.5h-1.5zM827.5 655.81h2v1.5h-2zM827.5 660.48h1.5v1.5h-1.5zM827.5 658.52h2v1.5h-2zM827.5 660.66h2v1.5h-2zM829 658.3h1v1.5h-1zM829 657.36h1v1.5h-1zM829 657.93h2v1.5h-2zM829 662.79h1v1.5h-1zM830.5 659.8h1v1.5h-1zM830.5 667.33h2v1.5h-2zM830.5 665.63h1.5v1.5h-1.5zM830.5 659.59h2v1.5h-2zM832 666.94h1v1.5h-1zM832 661.27h1.5v1.5h-1.5zM832 665.3h1.5v1.5h-1.5zM832 662.72h2v1.5h-2zM833 668.36h2v1.5h-2zM833 665.89h1v1.5h-1zM833 661.72h1v1.5h-1zM833 668.03h2v1.5h-2zM834 663.3h1.5v1.5h-1.5zM834 662.81h2v1.5h-2zM834 663.93h1.5v1.5h-1.5zM834 660.68h1.5v1.5h-1.5zM835 662.36h1v1.5h-1zM835 662.36h2v1.5h-2zM835 661.08h1v1.5h-1zM835 665.68h1v1.5h-1zM836 667.82h1v1.5h-1zM836 668.41h2v1.5h-2zM836 663.25h1v1.5h-1zM836 662.4h2v1.5h-2zM837.5 667.82h1v1.5h-1zM837.5 668.47h1v1.5h-1zM837.5 675.55h1v1.5h-1zM837.5 672.86h2v1.5h-2zM838.5 671.4h1v1.5h-1zM838.5 675.9h1.5v1.5h-1.5zM838.5 671h2v1.5h-2zM838.5 676.43h1v1.5h-1zM839.5 677.76h2v1.5h-2zM839.5 673.18h1.5v1.5h-1.5zM839.5 677.65h2v1.5h-2zM839.5 672.42h1.5v1.5h-1.5zM840.5 669.09h1v1.5h-1zM840.5 672.05h1v1.5h-1zM840.5 669.94h1v1.5h-1zM840.5 669.57h1.5v1.5h-1.5zM841.5 672.99h1.5v1.5h-1.5zM841.5 669.69h2v1.5h-2zM841.5 670.45h1.5v1.5h-1.5zM841.5 671.33h1.5v1.5h-1.5zM842.5 664.53h1v1.5h-1zM842.5 662.71h1v1.5h-1zM842.5 667.59h1v1.5h-1zM842.5 662.58h1v1.5h-1zM844 668.42h1v1.5h-1zM844 669.06h2v1.5h-2zM844 669.28h1v1.5h-1zM844 668.61h1.5v1.5h-1.5zM845.5 661.76h1v1.5h-1zM845.5 661.22h1.5v1.5h-1.5zM845.5 664.14h2v1.5h-2zM845.5 665.28h1v1.5h-1zM846.5 668.13h1.5v1.5h-1.5zM846.5 663.55h1.5v1.5h-1.5zM846.5 665.59h1.5v1.5h-1.5zM846.5 667.64h1v1.5h-1zM848 666.21h1v1.5h-1zM848 663.02h2v1.5h-2zM848 660.87h2v1.5h-2zM848 666.14h1.5v1.5h-1.5zM849.5 662.45h2v1.5h-2zM849.5 657.5h2v1.5h-2zM849.5 656.25h1.5v1.5h-1.5zM849.5 660.38h1v1.5h-1zM850.5 656.23h1v1.5h-1zM850.5 658.85h1v1.5h-1zM850.5 653.9h1v1.5h-1zM850.5 659.53h2v1.5h-2zM852 660h2v1.5h-2zM852 656.63h1.5v1.5h-1.5zM852 660.28h1.5v1.5h-1.5zM852 659.08h1.5v1.5h-1.5zM853.5 660.24h1v1.5h-1zM853.5 658.2h2v1.5h-2zM853.5 652.09h2v1.5h-2zM853.5 657.75h1v1.5h-1zM855 653.14h1.5v1.5h-1.5zM855 655.04h1.5v1.5h-1.5zM855 656.64h1.5v1.5h-1.5zM855 658.4h2v1.5h-2zM856.5 655.87h1.5v1.5h-1.5zM856.5 657.26h1.5v1.5h-1.5zM856.5 657.85h2v1.5h-2zM856.5 654.48h1v1.5h-1zM858 656.78h1.5v1.5h-1.5zM858 654.64h1.5v1.5h-1.5zM858 655.16h1v1.5h-1zM858 652.88h1v1.5h-1zM859 652.35h2v1.5h-2zM859 657.41h2v1.5h-2zM859 654.2h2v1.5h-2zM859 660.08h2v1.5h-2zM860.5 653.16h2v1.5h-2zM860.5 656.66h2v1.5h-2zM860.5 657.97h2v1.5h-2zM860.5 653.45h2v1.5h-2zM862 663.72h1.5v1.5h-1.5zM862 660.81h1v1.5h-1zM862 665.54h1.5v1.5h-1.5zM862 663.43h1v1.5h-1zM863.5 664.09h2v1.5h-2zM863.5 663.41h1.5v1.5h-1.5zM863.5 666.53h1.5v1.5h-1.5zM863.5 668.61h2v1.5h-2zM864.5 670.14h1.5v1.5h-1.5zM864.5 663.9h1v1.5h-1zM864.5 664.55h1v1.5h-1zM864.5 664.59h1.5v1.5h-1.5zM866 668.06h1.5v1.5h-1.5zM866 667.12h1.5v1.5h-1.5zM866 668.42h1v1.5h-1zM866 671.26h1v1.5h-1zM867.5 668.48h2v1.5h-2zM867.5 672.88h2v1.5h-2zM867.5 672.28h2v1.5h-2zM867.5 669.38h2v1.5h-2zM868.5 675.19h2v1.5h-2zM868.5 676.14h2v1.5h-2zM868.5 675.63h1.5v1.5h-1.5zM868.5 674.82h1v1.5h-1zM869.5 674.75h1.5v1.5h-1.5zM869.5 676.14h1v1.5h-1zM869.5 669.43h2v1.5h-2zM869.5 671.25h1.5v1.5h-1.5zM871 666.87h2v1.5h-2zM871 670.64h1.5v1.5h-1.5zM871 672.42h2v1.5h-2zM871 666.75h1v1.5h-1zM872.5 664.33h2v1.5h-2zM872.5 663.76h2v1.5h-2zM872.5 669.64h1.5v1.5h-1.5zM872.5 662.12h2v1.5h-2zM874 662.81h2v1.5h-2zM874 664.4h2v1.5h-2zM874 665.35h1v1.5h-1zM874 667.27h2v1.5h-2zM875.5 664.44h2v1.5h-2zM875.5 666.66h1.5v1.5h-1.5zM875.5 664.03h1v1.5h-1zM875.5 666.71h1v1.5h-1zM877 658.74h1.5v1.5h-1.5zM877 657.97h2v1.5h-2zM877 659.14h2v1.5h-2zM877 658.51h1.5v1.5h-1.5zM878.5 653.07h1v1.5h-1zM878.5 652.85h1.5v1.5h-1.5zM878.5 653.27h1v1.5h-1zM878.5 657.97h1v1.5h-1zM879.5 650.29h1v1.5h-1zM879.5 658.48h2v1.5h-2zM879.5 655.56h1v1.5h-1zM879.5 657.88h1v1.5h-1zM880.5 653.38h1v1.5h-1zM880.5 655.91h2v1.5h-2zM880.5 652.65h1v1.5h-1zM880.5 654.62h2v1.5h-2zM881.5 655.55h1v1.5h-1zM881.5 652.75h2v1.5h-2zM881.5 657.39h1v1.5h-1zM881.5 652.02h1.5v1.5h-1.5zM882.5 655.46h1.5v1.5h-1.5zM882.5 653.83h2v1.5h-2zM882.5 650.52h1.5v1.5h-1.5zM882.5 654.14h2v1.5h-2zM884 652.93h2v1.5h-2zM884 654.11h1v1.5h-1zM884 656.02h2v1.5h-2zM884 653.57h1.5v1.5h-1.5zM885 654h1.5v1.5h-1.5zM885 656.82h1v1.5h-1zM885 656.65h1v1.5h-1zM885 657.65h1v1.5h-1zM886 651.33h1.5v1.5h-1.5zM886 651.66h2v1.5h-2zM886 653h1v1.5h-1zM886 653.3h2v1.5h-2zM887 650.93h1v1.5h-1zM887 656.2h2v1.5h-2zM887 656.28h1v1.5h-1zM887 650.19h1v1.5h-1zM888.5 653.03h1v1.5h-1zM888.5 653.51h1v1.5h-1zM888.5 657.2h1v1.5h-1zM888.5 657.54h1.5v1.5h-1.5zM889.5 658.18h1v1.5h-1zM889.5 655.92h2v1.5h-2zM889.5 654.25h1v1.5h-1zM889.5 651.79h2v1.5h-2zM890.5 658.64h2v1.5h-2zM890.5 660.4h1.5v1.5h-1.5zM890.5 659.74h1v1.5h-1zM890.5 657.1h1.5v1.5h-1.5zM891.5 657.57h1.5v1.5h-1.5zM891.5 658.93h1.5v1.5h-1.5zM891.5 659.52h1v1.5h-1zM891.5 657.62h1v1.5h-1zM892.5 667.95h2v1.5h-2zM892.5 661.42h1.5v1.5h-1.5zM892.5 667.75h1v1.5h-1zM892.5 666.98h2v1.5h-2zM893.5 664.68h1v1.5h-1zM893.5 664.75h2v1.5h-2zM893.5 669.61h2v1.5h-2zM893.5 669.86h2v1.5h-2zM895 666.42h2v1.5h-2zM895 668.21h1.5v1.5h-1.5zM895 668.44h1v1.5h-1zM895 669.76h1v1.5h-1zM896 668.03h2v1.5h-2zM896 671.16h1.5v1.5h-1.5zM896 669.66h1.5v1.5h-1.5zM896 670.18h1v1.5h-1zM897 670.51h1v1.5h-1zM897 672.03h1v1.5h-1zM897 674.07h1v1.5h-1zM897 668.28h1.5v1.5h-1.5zM898.5 673.2h2v1.5h-2zM898.5 677.91h1.5v1.5h-1.5zM898.5 674.3h2v1.5h-2zM898.5 672.39h1.5v1.5h-1.5zM900 669.74h1.5v1.5h-1.5zM900 670.18h2v1.5h-2zM900 674.32h1.5v1.5h-1.5zM900 670.33h2v1.5h-2zM901.5 665.27h1.5v1.5h-1.5zM901.5 669.51h2v1.5h-2zM901.5 663.67h1.5v1.5h-1.5zM901.5 670.92h2v1.5h-2zM903 667.47h2v1.5h-2zM903 662.08h1.5v1.5h-1.5zM903 666.99h1v1.5h-1zM903 664.08h1v1.5h-1zM904.5 663.84h1v1.5h-1zM904.5 666.3h1v1.5h-1zM904.5 661.57h1v1.5h-1zM904.5 662.57h2v1.5h-2zM905.5 666.14h1.5v1.5h-1.5zM905.5 666h1.5v1.5h-1.5zM905.5 667.03h1.5v1.5h-1.5zM905.5 663.36h2v1.5h-2zM906.5 662.72h1.5v1.5h-1.5zM906.5 665.03h1v1.5h-1zM906.5 661.09h2v1.5h-2zM906.5 666.84h2v1.5h-2zM907.5 660.44h1v1.5h-1zM907.5 659.72h1.5v1.5h-1.5zM907.5 662.03h1v1.5h-1zM907.5 659.07h2v1.5h-2zM908.5 660.01h2v1.5h-2zM908.5 663.26h1v1.5h-1zM908.5 659.72h1v1.5h-1zM908.5 656.18h1v1.5h-1zM910 657.89h1v1.5h-1zM910 658.34h1.5v1.5h-1.5zM910 659.28h1v1.5h-1zM910 654.38h1.5v1.5h-1.5zM911.5 657.77h1v1.5h-1zM911.5 659.07h1.5v1.5h-1.5zM911.5 655.42h2v1.5h-2zM911.5 658.27h1v1.5h-1zM913 653.9h1v1.5h-1zM913 654.47h1.5v1.5h-1.5zM913 657.92h1.5v1.5h-1.5zM913 653.72h1v1.5h-1zM914 654.54h2v1.5h-2zM914 656.1h2v1.5h-2zM914 655.89h1v1.5h-1zM914 660.09h2v1.5h-2zM915 660.11h2v1.5h-2zM915 657.86h2v1.5h-2zM915 657.58h2v1.5h-2zM915 659.95h1.5v1.5h-1.5zM916 657.73h1.5v1.5h-1.5zM916 657.16h1v1.5h-1zM916 657.98h1v1.5h-1zM916 655.27h1.5v1.5h-1.5zM917 656.01h2v1.5h-2zM917 660.79h1v1.5h-1zM917 656.12h1v1.5h-1zM917 658.94h2v1.5h-2zM918.5 663.93h2v1.5h-2zM918.5 660.77h1v1.5h-1zM918.5 662.36h1v1.5h-1zM918.5 664.92h1v1.5h-1zM920 664.27h2v1.5h-2zM920 666.6h1v1.5h-1zM920 665.62h1.5v1.5h-1.5zM920 667.66h2v1.5h-2zM921 668.06h1.5v1.5h-1.5zM921 667.8h2v1.5h-2zM921 663.71h1v1.5h-1zM921 664.93h1.5v1.5h-1.5zM922 665.8h1.5v1.5h-1.5zM922 662.34h1.5v1.5h-1.5zM922 665.01h1v1.5h-1zM922 667.74h2v1.5h-2zM923.5 664.41h2v1.5h-2zM923.5 667.12h1v1.5h-1zM923.5 662.54h1.5v1.5h-1.5zM923.5 664.97h2v1.5h-2zM925 668.39h2v1.5h-2zM925 664.35h1.5v1.5h-1.5zM925 670.06h1v1.5h-1zM925 666.55h2v1.5h-2zM926 672.11h1.5v1.5h-1.5zM926 665.46h2v1.5h-2zM926 668.17h1v1.5h-1zM926 670.54h1v1.5h-1zM927 672.62h1.5v1.5h-1.5zM927 671.04h1.5v1.5h-1.5zM927 668.41h1v1.5h-1zM927 668.34h1.5v1.5h-1.5zM928 672.97h1v1.5h-1zM928 675.83h1.5v1.5h-1.5zM928 677.81h1.5v1.5h-1.5zM928 673.54h1.5v1.5h-1.5zM929 670.55h1.5v1.5h-1.5zM929 674.19h2v1.5h-2zM929 676.48h1.5v1.5h-1.5zM929 672.23h1v1.5h-1zM930 670.63h1v1.5h-1zM930 668.9h1.5v1.5h-1.5zM930 669.11h2v1.5h-2zM930 672.55h1v1.5h-1zM931 667.67h1.5v1.5h-1.5zM931 664.75h1.5v1.5h-1.5zM931 670.76h2v1.5h-2zM931 672.03h1.5v1.5h-1.5zM932.5 661.74h2v1.5h-2zM932.5 663.96h2v1.5h-2zM932.5 661.15h1v1.5h-1zM932.5 661.8h1v1.5h-1zM933.5 667.72h2v1.5h-2zM933.5 660.81h1.5v1.5h-1.5zM933.5 665.59h1v1.5h-1zM933.5 664.27h2v1.5h-2zM934.5 662.97h2v1.5h-2zM934.5 662.45h1v1.5h-1zM934.5 659.95h1v1.5h-1zM934.5 662.49h1.5v1.5h-1.5zM935.5 658.03h2v1.5h-2zM935.5 658.33h2v1.5h-2zM935.5 653.76h1.5v1.5h-1.5zM935.5 661.11h1v1.5h-1zM937 657.27h1.5v1.5h-1.5zM937 650.38h2v1.5h-2zM937 655.8h1v1.5h-1zM937 650.41h1v1.5h-1zM938.5 655.35h2v1.5h-2zM938.5 656.04h1.5v1.5h-1.5zM938.5 651.78h2v1.5h-2zM938.5 656.99h2v1.5h-2zM939.5 653.81h2v1.5h-2zM939.5 655.98h1v1.5h-1zM939.5 657.7h1v1.5h-1zM939.5 651.87h1.5v1.5h-1.5zM940.5 655.52h2v1.5h-2zM940.5 654.17h1v1.5h-1zM940.5 651.58h2v1.5h-2zM940.5 658.23h1v1.5h-1zM941.5 651.79h1.5v1.5h-1.5zM941.5 657.29h1v1.5h-1zM941.5 651.35h2v1.5h-2zM941.5 650.86h1.5v1.5h-1.5zM943 654.21h1v1.5h-1zM943 657.67h1v1.5h-1zM943 652.74h1.5v1.5h-1.5zM943 651.68h2v1.5h-2zM944.5 651.3h1v1.5h-1zM944.5 654.19h2v1.5h-2zM944.5 655.08h1v1.5h-1zM944.5 651.71h1v1.5h-1zM946 650.52h2v1.5h-2zM946 657.84h1.5v1.5h-1.5zM946 650.49h1v1.5h-1zM946 653.3h1v1.5h-1zM947.5 650.73h1v1.5h-1zM947.5 651.1h2v1.5h-2zM947.5 653.71h2v1.5h-2zM947.5 650.26h1v1.5h-1zM948.5 656.21h2v1.5h-2zM948.5 655.64h1.5v1.5h-1.5zM948.5 654.55h1v1.5h-1zM948.5 658.61h2v1.5h-2zM950 658.03h2v1.5h-2zM950 657.38h2v1.5h-2zM950 661.58h1.5v1.5h-1.5zM950 660.84h1.5v1.5h-1.5zM951 667.58h1v1.5h-1zM951 662.99h1.5v1.5h-1.5zM951 666.18h1v1.5h-1zM951 664.19h1.5v1.5h-1.5zM952.5 664.61h2v1.5h-2zM952.5 667h1.5v1.5h-1.5zM952.5 664.69h2v1.5h-2zM952.5 661.36h1.5v1.5h-1.5zM954 667.73h1v1.5h-1zM954 668.86h1.5v1.5h-1.5zM954 664.54h1v1.5h-1zM954 665.72h1.5v1.5h-1.5zM955.5 664.65h1.5v1.5h-1.5zM955.5 667.79h1.5v1.5h-1.5zM955.5 669.11h1.5v1.5h-1.5zM955.5 667.21h2v1.5h-2zM956.5 673.14h1v1.5h-1zM956.5 670.79h2v1.5h-2zM956.5 675.14h1.5v1.5h-1.5zM956.5 669.78h2v1.5h-2zM958 679.65h2v1.5h-2zM958 677.37h2v1.5h-2zM958 675.11h2v1.5h-2zM958 676.72h2v1.5h-2zM959 668.43h1.5v1.5h-1.5zM959 675.87h2v1.5h-2zM959 668.34h1v1.5h-1zM959 671.27h2v1.5h-2zM960.5 668.09h2v1.5h-2zM960.5 666.35h1.5v1.5h-1.5zM960.5 671.1h1v1.5h-1zM960.5 670.6h1v1.5h-1zM961.5 662.45h1v1.5h-1zM961.5 663.51h2v1.5h-2zM961.5 664.59h1v1.5h-1zM961.5 668.78h2v1.5h-2zM963 667.91h1.5v1.5h-1.5zM963 662.46h2v1.5h-2zM963 662.08h1v1.5h-1zM963 662.08h2v1.5h-2zM964.5 669.1h1.5v1.5h-1.5zM964.5 665.5h1.5v1.5h-1.5zM964.5 669.03h1v1.5h-1zM964.5 665.67h1v1.5h-1zM966 662.15h1v1.5h-1zM966 661.11h1v1.5h-1zM966 667.81h1.5v1.5h-1.5zM966 663.4h1v1.5h-1zM967 666.94h2v1.5h-2zM967 660.66h1v1.5h-1zM967 663.27h1v1.5h-1zM967 667.3h2v1.5h-2zM968 664.62h1.5v1.5h-1.5zM968 660.7h1v1.5h-1zM968 664.27h1.5v1.5h-1.5zM968 659.81h1v1.5h-1zM969.5 656.14h1v1.5h-1zM969.5 659.87h2v1.5h-2zM969.5 657.97h2v1.5h-2zM969.5 656.03h1v1.5h-1zM971 653.07h2v1.5h-2zM971 658.57h2v1.5h-2zM971 660.6h1v1.5h-1zM971 653.75h2v1.5h-2zM972.5 657.8h1v1.5h-1zM972.5 657.55h1.5v1.5h-1.5zM972.5 660.5h1.5v1.5h-1.5zM972.5 658.45h1v1.5h-1zM973.5 655.75h2v1.5h-2zM973.5 654.21h1v1.5h-1zM973.5 656.07h2v1.5h-2zM973.5 656.43h1.5v1.5h-1.5zM975 654.93h1.5v1.5h-1.5zM975 653.97h1.5v1.5h-1.5zM975 657.43h2v1.5h-2zM975 659.32h2v1.5h-2zM976 656.35h1v1.5h-1zM976 657.34h1v1.5h-1zM976 654.04h1v1.5h-1zM976 653.84h2v1.5h-2zM977.5 654.91h2v1.5h-2zM977.5 653.31h1v1.5h-1zM977.5 659.6h1.5v1.5h-1.5zM977.5 654.95h1v1.5h-1zM978.5 656.11h1.5v1.5h-1.5zM978.5 656.2h1v1.5h-1zM978.5 658.08h2v1.5h-2zM978.5 653.75h1.5v1.5h-1.5zM980 663.33h1v1.5h-1zM980 657.4h1.5v1.5h-1.5zM980 664.29h2v1.5h-2zM980 656.97h1.5v1.5h-1.5zM981.5 662.03h1.5v1.5h-1.5zM981.5 662.15h2v1.5h-2zM981.5 664.59h1v1.5h-1zM981.5 663.48h1v1.5h-1zM983 662.22h1.5v1.5h-1.5zM983 669.53h1v1.5h-1zM983 661.79h2v1.5h-2zM983 662.1h1.5v1.5h-1.5zM984 667.22h2v1.5h-2zM984 668.98h2v1.5h-2zM984 663.42h1v1.5h-1zM984 668.39h1v1.5h-1zM985.5 672.51h1.5v1.5h-1.5zM985.5 672.2h1v1.5h-1zM985.5 671h1.5v1.5h-1.5zM985.5 668.88h1v1.5h-1zM986.5 669.56h1.5v1.5h-1.5zM986.5 668.16h2v1.5h-2zM986.5 668.37h2v1.5h-2zM986.5 674.07h1.5v1.5h-1.5zM987.5 674.91h1v1.5h-1zM987.5 671.39h1v1.5h-1zM987.5 675h1.5v1.5h-1.5zM987.5 673.36h1.5v1.5h-1.5zM989 670.67h2v1.5h-2zM989 676.63h1v1.5h-1zM989 671.23h1v1.5h-1zM989 671.96h1v1.5h-1zM990.5 667.78h2v1.5h-2zM990.5 665.6h1.5v1.5h-1.5zM990.5 671.38h1v1.5h-1zM990.5 666h1.5v1.5h-1.5zM992 669.5h2v1.5h-2zM992 664.12h1.5v1.5h-1.5zM992 663.1h1v1.5h-1zM992 662.51h2v1.5h-2zM993 665.51h1v1.5h-1zM993 663.38h2v1.5h-2zM993 665.35h2v1.5h-2zM993 667.37h1.5v1.5h-1.5zM994 668.87h2v1.5h-2zM994 663.12h1.5v1.5h-1.5zM994 667.94h1v1.5h-1zM994 667.7h2v1.5h-2zM995 663.11h1.5v1.5h-1.5zM995 662.87h1.5v1.5h-1.5zM995 663.47h1v1.5h-1zM995 665.67h1.5v1.5h-1.5zM996.5 662.24h1.5v1.5h-1.5zM996.5 668.84h1v1.5h-1zM996.5 661.48h2v1.5h-2zM996.5 668.24h2v1.5h-2zM998 659.3h2v1.5h-2zM998 654.36h1.5v1.5h-1.5zM998 661.35h1.5v1.5h-1.5zM998 655.65h1v1.5h-1zM999.5 654.29h1v1.5h-1zM999.5 658.63h2v1.5h-2zM999.5 656.1h1.5v1.5h-1.5zM999.5 651.61h1.5v1.5h-1.5zM1000.5 655.72h1v1.5h-1zM1000.5 657.03h2v1.5h-2zM1000.5 656.45h1.5v1.5h-1.5zM1000.5 658.32h1v1.5h-1zM1001.5 653.11h1v1.5h-1zM1001.5 656.88h2v1.5h-2zM1001.5 652.92h2v1.5h-2zM1001.5 655.8h1.5v1.5h-1.5zM1003 656.76h2v1.5h-2zM1003 651.1h1.5v1.5h-1.5zM1003 650.65h1v1.5h-1zM1003 651.85h1v1.5h-1zM1004.5 651.25h1v1.5h-1zM1004.5 658.72h2v1.5h-2zM1004.5 656.07h2v1.5h-2zM1004.5 655.98h1v1.5h-1zM1006 653.04h2v1.5h-2zM1006 653.02h1.5v1.5h-1.5zM1006 652.4h1v1.5h-1zM1006 655.47h1v1.5h-1zM1007.5 655.31h1.5v1.5h-1.5zM1007.5 658.26h2v1.5h-2zM1007.5 657.19h1v1.5h-1zM1007.5 657.32h2v1.5h-2zM1009 654.06h1.5v1.5h-1.5zM1009 653.63h1v1.5h-1zM1009 653.11h1v1.5h-1zM1009 651.32h1.5v1.5h-1.5zM1010.5 663.18h2v1.5h-2zM1010.5 655.97h1v1.5h-1zM1010.5 658.73h1.5v1.5h-1.5zM1010.5 659.33h1v1.5h-1zM1012 668.5h1.5v1.5h-1.5zM1012 662.77h1.5v1.5h-1.5zM1012 669.79h1.5v1.5h-1.5zM1012 669.2h1v1.5h-1zM1013.5 666.73h1.5v1.5h-1.5zM1013.5 664.15h2v1.5h-2zM1013.5 663.29h2v1.5h-2zM1013.5 670.19h1v1.5h-1zM1015 668.97h2v1.5h-2zM1015 666.61h1v1.5h-1zM1015 666.09h1v1.5h-1zM1015 672.64h1.5v1.5h-1.5zM1016 671.13h1.5v1.5h-1.5zM1016 674.99h1v1.5h-1zM1016 675.46h1.5v1.5h-1.5zM1016 671.73h1.5v1.5h-1.5zM1017 676.48h2v1.5h-2zM1017 675.34h1v1.5h-1zM1017 673.11h1v1.5h-1zM1017 674.37h1v1.5h-1zM1018 677.27h2v1.5h-2zM1018 676.22h1v1.5h-1zM1018 670.22h1.5v1.5h-1.5zM1018 678.3h1v1.5h-1zM1019 668.96h1v1.5h-1zM1019 674.77h1.5v1.5h-1.5zM1019 670.41h1.5v1.5h-1.5zM1019 669.12h2v1.5h-2zM1020.5 668.35h2v1.5h-2zM1020.5 668.93h2v1.5h-2zM1020.5 670.6h1v1.5h-1zM1020.5 670.75h1.5v1.5h-1.5zM1021.5 662.59h1v1.5h-1zM1021.5 663.27h1.5v1.5h-1.5zM1021.5 665.26h2v1.5h-2zM1021.5 668.89h1v1.5h-1zM1022.5 665.82h2v1.5h-2zM1022.5 669.03h1v1.5h-1zM1022.5 661.03h2v1.5h-2zM1022.5 668.56h1.5v1.5h-1.5zM1023.5 661.97h2v1.5h-2zM1023.5 666.76h1v1.5h-1zM1023.5 669.09h1v1.5h-1zM1023.5 665.37h1.5v1.5h-1.5zM1024.5 664.03h1v1.5h-1zM1024.5 668.53h1v1.5h-1zM1024.5 665.24h1.5v1.5h-1.5zM1024.5 668.03h2v1.5h-2zM1025.5 667.61h1v1.5h-1zM1025.5 668.33h1.5v1.5h-1.5zM1025.5 660.87h2v1.5h-2zM1025.5 660.49h1v1.5h-1zM1027 665.2h1.5v1.5h-1.5zM1027 663.29h2v1.5h-2zM1027 657.75h1.5v1.5h-1.5zM1027 657.21h1v1.5h-1zM1028 662.61h1.5v1.5h-1.5zM1028 660.14h1.5v1.5h-1.5zM1028 656.41h1.5v1.5h-1.5zM1028 657.57h1.5v1.5h-1.5zM1029.5 660.36h1v1.5h-1zM1029.5 659.99h1v1.5h-1zM1029.5 658.19h1.5v1.5h-1.5zM1029.5 660.53h1.5v1.5h-1.5zM1031 656.12h1.5v1.5h-1.5zM1031 660.39h1v1.5h-1zM1031 657.07h1.5v1.5h-1.5zM1031 655.25h2v1.5h-2zM1032 657.18h1v1.5h-1zM1032 660.8h2v1.5h-2zM1032 657.19h1v1.5h-1zM1032 658.31h1v1.5h-1zM1033 660h2v1.5h-2zM1033 660h2v1.5h-2zM1033 655.96h1v1.5h-1zM1033 657.07h1v1.5h-1zM1034.5 658.94h1.5v1.5h-1.5zM1034.5 657.08h1.5v1.5h-1.5zM1034.5 654.54h2v1.5h-2zM1034.5 659.74h1.5v1.5h-1.5zM1036 659.69h1v1.5h-1zM1036 656.12h2v1.5h-2zM1036 656.57h1.5v1.5h-1.5zM1036 658.61h1.5v1.5h-1.5zM1037 661.38h1v1.5h-1zM1037 660.36h1.5v1.5h-1.5zM1037 655.88h2v1.5h-2zM1037 660.17h2v1.5h-2zM1038 653.51h1.5v1.5h-1.5zM1038 659.63h2v1.5h-2zM1038 655.54h2v1.5h-2zM1038 659.25h1v1.5h-1zM1039.5 659.61h1v1.5h-1zM1039.5 659.24h1.5v1.5h-1.5zM1039.5 654.27h1.5v1.5h-1.5zM1039.5 655.92h2v1.5h-2zM1040.5 657.87h2v1.5h-2zM1040.5 655.17h2v1.5h-2zM1040.5 654.86h1.5v1.5h-1.5zM1040.5 661.4h2v1.5h-2zM1042 663.46h1v1.5h-1zM1042 663.06h1.5v1.5h-1.5zM1042 663.68h1.5v1.5h-1.5zM1042 659.5h2v1.5h-2zM1043 662.29h1.5v1.5h-1.5zM1043 664.11h2v1.5h-2zM1043 666.41h1v1.5h-1zM1043 661.54h1.5v1.5h-1.5zM1044 668.45h1v1.5h-1zM1044 669.18h1v1.5h-1zM1044 669.69h2v1.5h-2zM1044 664.33h2v1.5h-2zM1045.5 669.37h1v1.5h-1zM1045.5 668.76h1.5v1.5h-1.5zM1045.5 666.08h1.5v1.5h-1.5zM1045.5 672.53h2v1.5h-2zM1047 672.23h1v1.5h-1zM1047 671.57h2v1.5h-2zM1047 670.55h1.5v1.5h-1.5zM1047 675.27h1.5v1.5h-1.5zM1048 669.81h2v1.5h-2zM1048 676.51h2v1.5h-2zM1048 672.42h1v1.5h-1zM1048 676.17h1v1.5h-1zM1049.5 665.21h1v1.5h-1zM1049.5 671.69h1.5v1.5h-1.5zM1049.5 666.86h1.5v1.5h-1.5zM1049.5 673.24h2v1.5h-2zM1050.5 668.88h2v1.5h-2zM1050.5 669.07h2v1.5h-2zM1050.5 670.05h1.5v1.5h-1.5zM1050.5 664.51h1v1.5h-1zM1051.5 664.29h1v1.5h-1zM1051.5 665.91h2v1.5h-2zM1051.5 662.8h1v1.5h-1zM1051.5 661.48h2v1.5h-2zM1052.5 667.51h1.5v1.5h-1.5zM1052.5 665.98h2v1.5h-2zM1052.5 664.87h1v1.5h-1zM1052.5 661.23h1v1.5h-1zM1054 664.35h1.5v1.5h-1.5zM1054 663.3h1v1.5h-1zM1054 665.8h2v1.5h-2zM1054 666.94h2v1.5h-2zM1055.5 662.72h2v1.5h-2zM1055.5 656.7h1v1.5h-1zM1055.5 662.15h1v1.5h-1zM1055.5 662.55h2v1.5h-2zM1056.5 656.37h1.5v1.5h-1.5zM1056.5 661.04h1v1.5h-1zM1056.5 659.91h2v1.5h-2zM1056.5 660.89h2v1.5h-2zM1057.5 660.43h2v1.5h-2zM1057.5 653.83h1v1.5h-1zM1057.5 657.23h2v1.5h-2zM1057.5 661.45h1v1.5h-1zM1058.5 653.81h1v1.5h-1zM1058.5 653.59h2v1.5h-2zM1058.5 658.59h1.5v1.5h-1.5zM1058.5 661.26h2v1.5h-2zM1059.5 658.13h1.5v1.5h-1.5zM1059.5 655.14h1v1.5h-1zM1059.5 656.12h2v1.5h-2zM1059.5 661.39h1.5v1.5h-1.5zM1060.5 658.24h1v1.5h-1zM1060.5 660.02h1.5v1.5h-1.5zM1060.5 655.03h1v1.5h-1zM1060.5 654.39h2v1.5h-2zM1061.5 656.81h2v1.5h-2zM1061.5 656.37h2v1.5h-2zM1061.5 654.08h2v1.5h-2zM1061.5 653.23h2v1.5h-2zM1062.5 657.3h1v1.5h-1zM1062.5 657.94h1.5v1.5h-1.5zM1062.5 654.78h1v1.5h-1zM1062.5 655.44h2v1.5h-2zM1063.5 653.44h1v1.5h-1zM1063.5 658.71h1.5v1.5h-1.5zM1063.5 653.97h2v1.5h-2zM1063.5 660.71h1v1.5h-1zM1064.5 656.44h2v1.5h-2zM1064.5 655.56h1v1.5h-1zM1064.5 658.68h2v1.5h-2zM1064.5 655.54h1.5v1.5h-1.5zM1065.5 660.36h1.5v1.5h-1.5zM1065.5 658.81h1.5v1.5h-1.5zM1065.5 657.87h1v1.5h-1zM1065.5 659.43h1v1.5h-1zM1067 660.01h1v1.5h-1zM1067 656.21h1v1.5h-1zM1067 658.58h1v1.5h-1zM1067 656.95h1v1.5h-1zM1068 658.62h2v1.5h-2zM1068 657.42h1.5v1.5h-1.5zM1068 660.99h2v1.5h-2zM1068 661.28h1v1.5h-1zM1069.5 655.02h1v1.5h-1zM1069.5 658.87h1.5v1.5h-1.5zM1069.5 657.22h1.5v1.5h-1.5zM1069.5 661.89h1v1.5h-1zM1071 662.4h2v1.5h-2zM1071 661.2h2v1.5h-2zM1071 665.31h2v1.5h-2zM1071 660.63h2v1.5h-2zM1072.5 664.58h1v1.5h-1zM1072.5 667.55h1.5v1.5h-1.5zM1072.5 668.03h1v1.5h-1zM1072.5 668.82h1.5v1.5h-1.5zM1074 664.73h1.5v1.5h-1.5zM1074 669h1.5v1.5h-1.5zM1074 663.92h1.5v1.5h-1.5zM1074 664.99h1.5v1.5h-1.5zM1075 669h2v1.5h-2zM1075 669.85h1.5v1.5h-1.5zM1075 672.58h2v1.5h-2zM1075 667.03h1v1.5h-1zM1076 669.56h1.5v1.5h-1.5zM1076 674.25h1.5v1.5h-1.5zM1076 670.88h2v1.5h-2zM1076 673.11h1v1.5h-1zM1077.5 671.24h1v1.5h-1zM1077.5 677.37h2v1.5h-2zM1077.5 676.92h1.5v1.5h-1.5zM1077.5 671.39h1.5v1.5h-1.5zM1078.5 669.12h1.5v1.5h-1.5zM1078.5 668.49h1.5v1.5h-1.5zM1078.5 675.62h1.5v1.5h-1.5zM1078.5 673.61h1v1.5h-1zM1079.5 671.37h2v1.5h-2zM1079.5 669.09h1v1.5h-1zM1079.5 666.95h1v1.5h-1zM1079.5 670.77h2v1.5h-2zM1080.5 669.21h2v1.5h-2zM1080.5 665.77h1v1.5h-1zM1080.5 669.95h1.5v1.5h-1.5zM1080.5 666.52h1.5v1.5h-1.5zM1081.5 669.07h1.5v1.5h-1.5zM1081.5 662.38h2v1.5h-2zM1081.5 666.28h1.5v1.5h-1.5zM1081.5 668.88h1v1.5h-1zM1082.5 663.32h1.5v1.5h-1.5zM1082.5 661.23h1.5v1.5h-1.5zM1082.5 661.59h2v1.5h-2zM1082.5 661.2h1v1.5h-1zM1083.5 661.13h1v1.5h-1zM1083.5 667.16h1.5v1.5h-1.5zM1083.5 665.02h1v1.5h-1zM1083.5 665.77h1v1.5h-1zM1085 661.48h1v1.5h-1zM1085 666.3h1v1.5h-1zM1085 664.04h1.5v1.5h-1.5zM1085 661.88h2v1.5h-2zM1086 659.37h2v1.5h-2zM1086 663.63h2v1.5h-2zM1086 665.71h1v1.5h-1zM1086 666.26h2v1.5h-2zM1087.5 653.96h1v1.5h-1zM1087.5 653.97h2v1.5h-2zM1087.5 656.37h2v1.5h-2zM1087.5 657.21h1v1.5h-1zM1088.5 652.68h1.5v1.5h-1.5zM1088.5 656.06h2v1.5h-2zM1088.5 653.74h1v1.5h-1zM1088.5 653.52h2v1.5h-2zM1089.5 651.76h2v1.5h-2zM1089.5 652.51h1v1.5h-1zM1089.5 651.46h1v1.5h-1zM1089.5 655.7h1v1.5h-1zM1091 653.41h1v1.5h-1zM1091 654.29h1.5v1.5h-1.5zM1091 655.34h1.5v1.5h-1.5zM1091 657.26h1.5v1.5h-1.5zM1092 652.95h1v1.5h-1zM1092 649.81h2v1.5h-2zM1092 655.52h1.5v1.5h-1.5zM1092 657.61h1v1.5h-1zM1093.5 655.24h2v1.5h-2zM1093.5 651.37h2v1.5h-2zM1093.5 651.86h1v1.5h-1zM1093.5 656.52h1.5v1.5h-1.5zM1095 656.94h1.5v1.5h-1.5zM1095 650.33h1.5v1.5h-1.5zM1095 652.01h1.5v1.5h-1.5zM1095 657.55h2v1.5h-2zM1096 656.53h1.5v1.5h-1.5zM1096 652.92h2v1.5h-2zM1096 650.42h2v1.5h-2zM1096 652.6h2v1.5h-2zM1097 656.31h1.5v1.5h-1.5zM1097 651.83h1v1.5h-1zM1097 653.24h1.5v1.5h-1.5zM1097 657.17h1v1.5h-1zM1098.5 654.12h1v1.5h-1zM1098.5 652.83h1.5v1.5h-1.5zM1098.5 654.27h1v1.5h-1zM1098.5 652.56h1.5v1.5h-1.5zM1099.5 663.67h1v1.5h-1zM1099.5 661.01h2v1.5h-2zM1099.5 657.36h2v1.5h-2zM1099.5 657.75h2v1.5h-2zM1101 664.11h2v1.5h-2zM1101 667.01h2v1.5h-2zM1101 664.63h2v1.5h-2zM1101 664.36h2v1.5h-2zM1102.5 661.56h1.5v1.5h-1.5zM1102.5 663.02h2v1.5h-2zM1102.5 667.75h1v1.5h-1zM1102.5 662h1.5v1.5h-1.5zM1103.5 664.93h1v1.5h-1zM1103.5 662.4h1v1.5h-1zM1103.5 667.25h1v1.5h-1zM1103.5 663.14h1.5v1.5h-1.5zM1104.5 667.36h1v1.5h-1zM1104.5 667.82h2v1.5h-2zM1104.5 671.79h1.5v1.5h-1.5zM1104.5 665.65h1.5v1.5h-1.5zM1106 675.63h1.5v1.5h-1.5zM1106 677.67h2v1.5h-2zM1106 674.55h2v1.5h-2zM1106 673.22h1.5v1.5h-1.5zM1107 679.25h2v1.5h-2zM1107 675.81h1v1.5h-1zM1107 678.36h1v1.5h-1zM1107 672.58h1.5v1.5h-1.5zM1108.5 670.33h1.5v1.5h-1.5zM1108.5 671.94h1v1.5h-1zM1108.5 673.65h2v1.5h-2zM1108.5 669.34h1.5v1.5h-1.5zM1110 664.97h1.5v1.5h-1.5zM1110 664.3h1.5v1.5h-1.5zM1110 666.22h1.5v1.5h-1.5zM1110 663.25h1v1.5h-1zM1111 665.68h2v1.5h-2zM1111 669.24h2v1.5h-2zM1111 666.62h2v1.5h-2zM1111 668.58h1.5v1.5h-1.5zM1112 666.89h1.5v1.5h-1.5zM1112 663.69h1.5v1.5h-1.5zM1112 663.69h1v1.5h-1zM1112 668.28h1v1.5h-1zM1113 668.62h2v1.5h-2zM1113 662.42h1.5v1.5h-1.5zM1113 665.66h2v1.5h-2zM1113 667.84h1.5v1.5h-1.5zM1114.5 661.92h1v1.5h-1zM1114.5 661.93h2v1.5h-2zM1114.5 664.29h1v1.5h-1zM1114.5 665.19h1v1.5h-1zM1115.5 662.87h1.5v1.5h-1.5zM1115.5 661h1v1.5h-1zM1115.5 661.24h1.5v1.5h-1.5zM1115.5 658.88h2v1.5h-2zM1116.5 656.49h1v1.5h-1zM1116.5 656.64h1.5v1.5h-1.5zM1116.5 658.84h1v1.5h-1zM1116.5 657.5h2v1.5h-2zM1118 653.18h1.5v1.5h-1.5zM1118 657.51h1v1.5h-1zM1118 657.96h2v1.5h-2zM1118 659.83h1.5v1.5h-1.5zM1119 655.96h1.5v1.5h-1.5zM1119 658.4h1.5v1.5h-1.5zM1119 653.26h2v1.5h-2zM1119 656.03h1.5v1.5h-1.5zM1120.5 659.47h2v1.5h-2zM1120.5 655.34h1.5v1.5h-1.5zM1120.5 658.59h1v1.5h-1zM1120.5 658.33h2v1.5h-2zM1121.5 651.91h1.5v1.5h-1.5zM1121.5 654.35h1.5v1.5h-1.5zM1121.5 657.02h2v1.5h-2zM1121.5 658.2h1v1.5h-1zM1122.5 656.07h2v1.5h-2zM1122.5 656.99h1v1.5h-1zM1122.5 658.26h1v1.5h-1zM1122.5 653.09h1.5v1.5h-1.5zM1124 652.67h1.5v1.5h-1.5zM1124 657.38h1.5v1.5h-1.5zM1124 659.93h1.5v1.5h-1.5zM1124 653.23h1v1.5h-1zM1125 657.58h1v1.5h-1zM1125 654.04h2v1.5h-2zM1125 653.31h2v1.5h-2zM1125 660h1.5v1.5h-1.5zM1126 658.8h2v1.5h-2zM1126 658.42h1v1.5h-1zM1126 653.52h1.5v1.5h-1.5zM1126 653.54h1v1.5h-1zM1127.5 659.29h2v1.5h-2zM1127.5 658.25h2v1.5h-2zM1127.5 656.9h2v1.5h-2zM1127.5 659.11h1v1.5h-1zM1128.5 667.37h1v1.5h-1zM1128.5 666.92h2v1.5h-2zM1128.5 664.77h2v1.5h-2zM1128.5 660.97h2v1.5h-2zM1129.5 664.99h2v1.5h-2zM1129.5 665.24h1.5v1.5h-1.5zM1129.5 664.87h1.5v1.5h-1.5zM1129.5 661.02h2v1.5h-2zM1131 663.97h2v1.5h-2zM1131 666.14h1.5v1.5h-1.5zM1131 666.32h1v1.5h-1zM1131 662.95h1.5v1.5h-1.5zM1132.5 665.59h2v1.5h-2zM1132.5 663.68h1v1.5h-1zM1132.5 667.39h2v1.5h-2zM1132.5 666.71h1v1.5h-1zM1134 671.01h2v1.5h-2zM1134 668.64h1.5v1.5h-1.5zM1134 672.79h1.5v1.5h-1.5zM1134 669.54h1v1.5h-1zM1135 671.03h1v1.5h-1zM1135 672.97h2v1.5h-2zM1135 670.65h1.5v1.5h-1.5zM1135 674.6h1.5v1.5h-1.5zM1136 673.11h1v1.5h-1zM1136 675.08h1v1.5h-1zM1136 679.01h2v1.5h-2zM1136 677.29h2v1.5h-2zM1137 672.18h2v1.5h-2zM1137 670.68h1.5v1.5h-1.5zM1137 675.68h2v1.5h-2zM1137 676.71h2v1.5h-2zM1138.5 667.79h2v1.5h-2zM1138.5 665.92h2v1.5h-2zM1138.5 665.81h1.5v1.5h-1.5zM1138.5 666.19h1.5v1.5h-1.5zM1140 668.14h1v1.5h-1zM1140 665.71h1v1.5h-1zM1140 667.11h2v1.5h-2zM1140 665.6h1.5v1.5h-1.5zM1141 668.74h2v1.5h-2zM1141 662.1h1v1.5h-1zM1141 668.3h1v1.5h-1zM1141 661.54h1.5v1.5h-1.5zM1142.5 662.72h1v1.5h-1zM1142.5 666.32h1v1.5h-1zM1142.5 663.08h1.5v1.5h-1.5zM1142.5 662.55h2v1.5h-2zM1144 661.27h1.5v1.5h-1.5zM1144 664.76h1v1.5h-1zM1144 666.93h2v1.5h-2zM1144 661.2h2v1.5h-2zM1145 661.35h1v1.5h-1zM1145 665.48h1v1.5h-1zM1145 662.11h1.5v1.5h-1.5zM1145 663.28h2v1.5h-2zM1146.5 660.42h2v1.5h-2zM1146.5 654.33h1v1.5h-1zM1146.5 660.82h2v1.5h-2zM1146.5 654.31h1v1.5h-1zM1147.5 651.15h1.5v1.5h-1.5zM1147.5 651.3h2v1.5h-2zM1147.5 656.94h2v1.5h-2zM1147.5 656.53h1v1.5h-1zM1148.5 652.93h1.5v1.5h-1.5zM1148.5 650.17h1.5v1.5h-1.5zM1148.5 655h2v1.5h-2zM1148.5 652.85h1v1.5h-1zM1150 649.9h1.5v1.5h-1.5zM1150 653.47h2v1.5h-2zM1150 654.28h2v1.5h-2zM1150 652.02h2v1.5h-2zM1151 656.99h1v1.5h-1zM1151 654.24h1v1.5h-1zM1151 657.8h1v1.5h-1zM1151 652.66h2v1.5h-2zM1152 651.08h1v1.5h-1zM1152 656.97h1.5v1.5h-1.5zM1152 653.05h1v1.5h-1zM1152 651.92h2v1.5h-2zM1153.5 652.8h2v1.5h-2zM1153.5 653.02h1.5v1.5h-1.5zM1153.5 651.23h2v1.5h-2zM1153.5 652.01h2v1.5h-2zM1154.5 656.74h2v1.5h-2zM1154.5 654.25h2v1.5h-2zM1154.5 658.21h2v1.5h-2zM1154.5 657.59h1v1.5h-1zM1155.5 664.54h2v1.5h-2zM1155.5 658.69h1.5v1.5h-1.5zM1155.5 663.83h1v1.5h-1zM1155.5 658.53h1v1.5h-1zM1156.5 661.68h2v1.5h-2zM1156.5 665.22h2v1.5h-2zM1156.5 668.86h2v1.5h-2zM1156.5 665.89h2v1.5h-2zM1157.5 661.58h1v1.5h-1zM1157.5 665.68h2v1.5h-2zM1157.5 666.86h1.5v1.5h-1.5zM1157.5 664.83h2v1.5h-2zM1158.5 669.01h1.5v1.5h-1.5zM1158.5 667.85h2v1.5h-2zM1158.5 665.47h1v1.5h-1zM1158.5 668.28h1v1.5h-1zM1160 669.47h2v1.5h-2zM1160 663.97h1v1.5h-1zM1160 669.87h2v1.5h-2zM1160 668.6h1v1.5h-1zM1161.5 662.8h1v1.5h-1zM1161.5 665.54h2v1.5h-2zM1161.5 666.15h2v1.5h-2zM1161.5 664.49h1.5v1.5h-1.5zM1163 665.97h1v1.5h-1zM1163 666.52h2v1.5h-2zM1163 664.92h1v1.5h-1zM1163 663.52h1v1.5h-1zM1164.5 667.53h1v1.5h-1zM1164.5 668.47h1v1.5h-1zM1164.5 667.36h2v1.5h-2zM1164.5 671.57h1v1.5h-1zM1165.5 674.33h1v1.5h-1zM1165.5 676.55h1.5v1.5h-1.5zM1165.5 670.11h1v1.5h-1zM1165.5 673.64h1.5v1.5h-1.5zM1166.5 671.36h1v1.5h-1zM1166.5 669.97h2v1.5h-2zM1166.5 668.98h1.5v1.5h-1.5zM1166.5 672.26h1.5v1.5h-1.5zM1167.5 667.24h1v1.5h-1zM1167.5 669.42h1v1.5h-1zM1167.5 667.21h1.5v1.5h-1.5zM1167.5 674.44h1.5v1.5h-1.5zM1169 666.86h1v1.5h-1zM1169 663.25h2v1.5h-2zM1169 665.91h2v1.5h-2zM1169 663.98h2v1.5h-2zM1170.5 661.66h1v1.5h-1zM1170.5 663.72h1v1.5h-1zM1170.5 668.94h2v1.5h-2zM1170.5 665.5h2v1.5h-2zM1172 662.87h1v1.5h-1zM1172 663.81h1.5v1.5h-1.5zM1172 664.47h2v1.5h-2zM1172 666.97h2v1.5h-2zM1173 664.4h2v1.5h-2zM1173 663.65h2v1.5h-2zM1173 663.92h1v1.5h-1zM1173 662.41h1v1.5h-1zM1174.5 655.12h2v1.5h-2zM1174.5 654.99h2v1.5h-2zM1174.5 658.94h1v1.5h-1zM1174.5 656.41h1.5v1.5h-1.5zM1175.5 656.51h1.5v1.5h-1.5zM1175.5 655.49h2v1.5h-2zM1175.5 651.92h2v1.5h-2zM1175.5 655.18h1.5v1.5h-1.5zM1177 657.43h2v1.5h-2zM1177 654.35h2v1.5h-2zM1177 656.35h2v1.5h-2zM1177 656.6h1v1.5h-1zM1178.5 655.59h1.5v1.5h-1.5zM1178.5 660.14h1v1.5h-1zM1178.5 659.92h1.5v1.5h-1.5zM1178.5 659.73h1.5v1.5h-1.5zM1179.5 655.51h1v1.5h-1zM1179.5 653.15h1v1.5h-1zM1179.5 660.08h2v1.5h-2zM1179.5 659.73h1v1.5h-1zM1180.5 655.45h1.5v1.5h-1.5zM1180.5 653.34h2v1.5h-2zM1180.5 659.03h1.5v1.5h-1.5zM1180.5 656.43h1.5v1.5h-1.5zM1182 658.39h1v1.5h-1zM1182 653.27h2v1.5h-2zM1182 656.16h1.5v1.5h-1.5zM1182 651.84h1.5v1.5h-1.5zM1183.5 658.84h1v1.5h-1zM1183.5 654.47h2v1.5h-2zM1183.5 654.17h1v1.5h-1zM1183.5 651.81h2v1.5h-2zM1185 655h2v1.5h-2zM1185 658.02h1v1.5h-1zM1185 657.78h2v1.5h-2zM1185 653.4h2v1.5h-2zM1186.5 655.61h2v1.5h-2zM1186.5 653.35h2v1.5h-2zM1186.5 653.27h1.5v1.5h-1.5zM1186.5 658.27h1v1.5h-1zM1188 655.34h1.5v1.5h-1.5zM1188 658.9h2v1.5h-2zM1188 658.56h2v1.5h-2zM1188 659.66h1v1.5h-1zM1189 657.93h1v1.5h-1zM1189 659.47h1v1.5h-1zM1189 661.28h1.5v1.5h-1.5zM1189 660.02h1v1.5h-1zM1190 663.1h2v1.5h-2zM1190 663.88h2v1.5h-2zM1190 661.13h2v1.5h-2zM1190 665.14h1v1.5h-1zM1191 666.13h1.5v1.5h-1.5zM1191 666.53h2v1.5h-2zM1191 666.6h1v1.5h-1zM1191 667.66h1.5v1.5h-1.5zM1192.5 663.49h1v1.5h-1zM1192.5 665.63h1v1.5h-1zM1192.5 662.13h2v1.5h-2zM1192.5 662.09h1v1.5h-1zM1194 665.95h1.5v1.5h-1.5zM1194 670.83h2v1.5h-2zM1194 666.57h2v1.5h-2zM1194 666.37h1.5v1.5h-1.5zM1195.5 668.14h2v1.5h-2zM1195.5 667.64h1.5v1.5h-1.5zM1195.5 669.63h2v1.5h-2zM1195.5 673.69h1v1.5h-1zM1196.5 674.96h2v1.5h-2zM1196.5 673.94h2v1.5h-2zM1196.5 676h1v1.5h-1zM1196.5 673.49h1.5v1.5h-1.5zM1197.5 669.22h2v1.5h-2zM1197.5 674.6h2v1.5h-2zM1197.5 674.47h1.5v1.5h-1.5zM1197.5 669.73h2v1.5h-2zM1199 663.93h1v1.5h-1zM1199 667.86h1.5v1.5h-1.5zM1199 666.76h2v1.5h-2zM1199 664.38h1v1.5h-1zM1200.5 661.06h1.5v1.5h-1.5zM1200.5 667.65h1.5v1.5h-1.5zM1200.5 663.83h1v1.5h-1zM1200.5 662.39h1.5v1.5h-1.5zM1201.5 662.94h2v1.5h-2zM1201.5 659.96h1.5v1.5h-1.5zM1201.5 661.86h2v1.5h-2zM1201.5 661.84h1.5v1.5h-1.5zM1203 664.65h1v1.5h-1zM1203 657.15h2v1.5h-2zM1203 661.97h1v1.5h-1zM1203 664.31h1v1.5h-1zM1204 655.11h1v1.5h-1zM1204 655.01h1.5v1.5h-1.5zM1204 659.98h2v1.5h-2zM1204 661.01h1v1.5h-1zM1205 653.19h2v1.5h-2zM1205 651.66h1v1.5h-1zM1205 651.51h1.5v1.5h-1.5zM1205 657.45h2v1.5h-2zM1206 651.53h1v1.5h-1zM1206 653.93h1.5v1.5h-1.5zM1206 657.89h1v1.5h-1zM1206 654.95h1v1.5h-1zM1207 655.93h1v1.5h-1zM1207 656.67h2v1.5h-2zM1207 657.89h1.5v1.5h-1.5zM1207 657.55h1v1.5h-1zM1208 650.43h2v1.5h-2zM1208 656.9h1v1.5h-1zM1208 656.89h1v1.5h-1zM1208 655.79h1v1.5h-1zM1209 651.65h1v1.5h-1zM1209 653.96h2v1.5h-2zM1209 653.46h1v1.5h-1zM1209 655.42h1v1.5h-1zM1210 650.87h1v1.5h-1zM1210 653.11h1.5v1.5h-1.5zM1210 655.49h2v1.5h-2zM1210 652.84h1.5v1.5h-1.5zM1211 649.92h2v1.5h-2zM1211 654.39h1.5v1.5h-1.5zM1211 655.26h1.5v1.5h-1.5zM1211 651.73h1.5v1.5h-1.5zM1212.5 649.63h2v1.5h-2zM1212.5 650.43h1.5v1.5h-1.5zM1212.5 650.42h1v1.5h-1zM1212.5 656.27h1v1.5h-1zM1214 657.77h1.5v1.5h-1.5zM1214 652.66h1.5v1.5h-1.5zM1214 656.39h2v1.5h-2zM1214 657.76h2v1.5h-2zM1215 656.83h1v1.5h-1zM1215 656.81h1.5v1.5h-1.5zM1215 657.26h1v1.5h-1zM1215 658h1.5v1.5h-1.5zM1216.5 660.59h2v1.5h-2zM1216.5 662.22h1.5v1.5h-1.5zM1216.5 666.96h1.5v1.5h-1.5zM1216.5 658.87h1v1.5h-1zM1218 666.93h1.5v1.5h-1.5zM1218 659.91h1.5v1.5h-1.5zM1218 664.6h2v1.5h-2zM1218 661.44h1.5v1.5h-1.5zM1219 663.93h2v1.5h-2zM1219 662.46h2v1.5h-2zM1219 660.26h1.5v1.5h-1.5zM1219 664.58h1.5v1.5h-1.5zM1220.5 664.47h2v1.5h-2zM1220.5 662.78h1v1.5h-1zM1220.5 661.93h1v1.5h-1zM1220.5 660.62h2v1.5h-2zM1222 664.57h1v1.5h-1zM1222 662.72h1.5v1.5h-1.5zM1222 663.69h1v1.5h-1zM1222 666.16h1v1.5h-1zM1223.5 666.2h1.5v1.5h-1.5zM1223.5 663.74h1.5v1.5h-1.5zM1223.5 669.66h1.5v1.5h-1.5zM1223.5 664.8h1.5v1.5h-1.5zM1225 672.22h1.5v1.5h-1.5zM1225 668.67h1v1.5h-1zM1225 672.53h1v1.5h-1zM1225 672.35h1.5v1.5h-1.5zM1226 677.92h1v1.5h-1zM1226 673.31h2v1.5h-2zM1226 672.03h1v1.5h-1zM1226 676.49h1v1.5h-1zM1227.5 669.22h2v1.5h-2zM1227.5 669.43h1v1.5h-1zM1227.5 666.44h1.5v1.5h-1.5zM1227.5 668.75h2v1.5h-2zM1229 662.97h1.5v1.5h-1.5zM1229 669.92h2v1.5h-2zM1229 665.01h2v1.5h-2zM1229 668.75h1v1.5h-1zM1230 666.43h1v1.5h-1zM1230 665.05h1.5v1.5h-1.5zM1230 668.03h1.5v1.5h-1.5zM1230 663.85h1.5v1.5h-1.5zM1231.5 667.28h1v1.5h-1zM1231.5 661.06h1v1.5h-1zM1231.5 663.62h1.5v1.5h-1.5zM1231.5 667.15h1v1.5h-1zM1232.5 660.79h2v1.5h-2zM1232.5 662.98h1.5v1.5h-1.5zM1232.5 664.28h1v1.5h-1zM1232.5 659.22h1v1.5h-1zM1233.5 655.22h1v1.5h-1zM1233.5 657.21h1.5v1.5h-1.5zM1233.5 658.71h1.5v1.5h-1.5zM1233.5 659.95h1v1.5h-1zM1235 651.26h1v1.5h-1zM1235 651.62h1v1.5h-1zM1235 651.08h1.5v1.5h-1.5zM1235 655.89h1.5v1.5h-1.5zM1236 653.66h2v1.5h-2zM1236 656.97h1v1.5h-1zM1236 651.19h1.5v1.5h-1.5zM1236 656.39h1.5v1.5h-1.5zM1237 654.39h2v1.5h-2zM1237 651.87h2v1.5h-2zM1237 651.35h2v1.5h-2zM1237 656.05h2v1.5h-2zM1238.5 651.55h2v1.5h-2zM1238.5 652.4h1v1.5h-1zM1238.5 656.3h1v1.5h-1zM1238.5 655.61h1v1.5h-1zM1239.5 656.14h1.5v1.5h-1.5zM1239.5 651.81h1.5v1.5h-1.5zM1239.5 652.3h2v1.5h-2zM1239.5 651.22h1v1.5h-1zM1240.5 659.24h1.5v1.5h-1.5zM1240.5 655.04h1.5v1.5h-1.5zM1240.5 659.25h2v1.5h-2zM1240.5 653.2h2v1.5h-2zM1241.5 656.65h1.5v1.5h-1.5zM1241.5 652.48h2v1.5h-2zM1241.5 659.37h1v1.5h-1zM1241.5 656.88h2v1.5h-2zM1243 659.32h1v1.5h-1zM1243 652.41h1v1.5h-1zM1243 653.81h2v1.5h-2zM1243 658.13h2v1.5h-2zM1244 655h1.5v1.5h-1.5zM1244 662.6h2v1.5h-2zM1244 655.72h2v1.5h-2zM1244 658.04h1v1.5h-1zM1245 658.56h1v1.5h-1zM1245 664.21h1v1.5h-1zM1245 660.87h1.5v1.5h-1.5zM1245 663.06h1.5v1.5h-1.5zM1246.5 668.09h2v1.5h-2zM1246.5 667.33h2v1.5h-2zM1246.5 662.14h2v1.5h-2zM1246.5 667.67h1.5v1.5h-1.5zM1248 667.64h2v1.5h-2zM1248 663.67h1v1.5h-1zM1248 669.31h1.5v1.5h-1.5zM1248 666.52h1.5v1.5h-1.5zM1249.5 667.93h2v1.5h-2zM1249.5 667.11h1v1.5h-1zM1249.5 668.59h1v1.5h-1zM1249.5 664.13h2v1.5h-2zM1251 664.44h1.5v1.5h-1.5zM1251 665.52h1v1.5h-1zM1251 669.83h2v1.5h-2zM1251 665.6h1v1.5h-1zM1252.5 670.28h1v1.5h-1zM1252.5 668.42h1v1.5h-1zM1252.5 670.73h2v1.5h-2zM1252.5 663.96h2v1.5h-2zM1254 674.23h1v1.5h-1zM1254 666.76h1.5v1.5h-1.5zM1254 673.45h2v1.5h-2zM1254 673.74h2v1.5h-2zM1255 672.24h2v1.5h-2zM1255 675.18h1v1.5h-1zM1255 673.91h2v1.5h-2zM1255 670.74h1v1.5h-1zM1256.5 670.94h1v1.5h-1zM1256.5 668.65h1v1.5h-1zM1256.5 670.83h2v1.5h-2zM1256.5 673.8h2v1.5h-2zM1257.5 668.6h2v1.5h-2zM1257.5 669.38h2v1.5h-2zM1257.5 665.15h1v1.5h-1zM1257.5 670.77h1.5v1.5h-1.5zM1258.5 669.02h1v1.5h-1zM1258.5 664.9h1.5v1.5h-1.5zM1258.5 667.57h1.5v1.5h-1.5zM1258.5 665.43h1v1.5h-1zM1260 661h1v1.5h-1zM1260 664.66h1.5v1.5h-1.5zM1260 661.78h2v1.5h-2zM1260 666.73h1.5v1.5h-1.5zM1261.5 663.84h1.5v1.5h-1.5zM1261.5 663.55h1.5v1.5h-1.5zM1261.5 667.21h1.5v1.5h-1.5zM1261.5 665.48h1v1.5h-1zM1263 667.95h1.5v1.5h-1.5zM1263 662.71h1.5v1.5h-1.5zM1263 665.23h2v1.5h-2zM1263 660.36h1.5v1.5h-1.5zM1264.5 662.29h1v1.5h-1zM1264.5 662.22h1v1.5h-1zM1264.5 657.74h1.5v1.5h-1.5zM1264.5 661.6h1.5v1.5h-1.5zM1266 657.83h1v1.5h-1zM1266 656.23h1.5v1.5h-1.5zM1266 661h1v1.5h-1zM1266 659.21h1.5v1.5h-1.5zM1267.5 658.04h1v1.5h-1zM1267.5 654.55h2v1.5h-2zM1267.5 656.72h1.5v1.5h-1.5zM1267.5 656.55h2v1.5h-2zM1269 657.13h1.5v1.5h-1.5zM1269 656.98h1.5v1.5h-1.5zM1269 657.02h1.5v1.5h-1.5zM1269 660.4h1v1.5h-1zM1270.5 656.67h1v1.5h-1zM1270.5 661.32h2v1.5h-2zM1270.5 655.63h1.5v1.5h-1.5zM1270.5 653.48h1v1.5h-1zM1271.5 658.96h1v1.5h-1zM1271.5 657.64h1v1.5h-1zM1271.5 656.13h1.5v1.5h-1.5zM1271.5 660.24h2v1.5h-2zM1272.5 656.18h2v1.5h-2zM1272.5 655.48h1.5v1.5h-1.5zM1272.5 656.01h1.5v1.5h-1.5zM1272.5 658.99h1v1.5h-1zM1274 661.23h1.5v1.5h-1.5zM1274 660.48h1.5v1.5h-1.5zM1274 656.27h1.5v1.5h-1.5zM1274 653.92h1.5v1.5h-1.5zM1275.5 660.63h2v1.5h-2zM1275.5 657.82h1v1.5h-1zM1275.5 664.69h1.5v1.5h-1.5zM1275.5 661.94h2v1.5h-2zM1277 667.11h1.5v1.5h-1.5zM1277 665.82h1v1.5h-1zM1277 659.78h1.5v1.5h-1.5zM1277 660.79h2v1.5h-2zM1278.5 667.81h2v1.5h-2zM1278.5 660.89h1v1.5h-1zM1278.5 663.76h2v1.5h-2zM1278.5 666.57h1.5v1.5h-1.5zM1280 665h1v1.5h-1zM1280 663.38h1.5v1.5h-1.5zM1280 667h2v1.5h-2zM1280 663.74h1v1.5h-1zM1281.5 662.24h1.5v1.5h-1.5zM1281.5 669.11h1v1.5h-1zM1281.5 662.55h2v1.5h-2zM1281.5 666.36h1v1.5h-1zM1282.5 666.29h1.5v1.5h-1.5zM1282.5 664.53h1v1.5h-1zM1282.5 667.81h1.5v1.5h-1.5zM1282.5 666.59h2v1.5h-2zM1284 666.43h2v1.5h-2zM1284 671.02h2v1.5h-2zM1284 668.79h1.5v1.5h-1.5zM1284 666.93h1v1.5h-1zM1285 672.78h1.5v1.5h-1.5zM1285 671.01h2v1.5h-2zM1285 668.93h1.5v1.5h-1.5zM1285 671.01h2v1.5h-2zM1286 675.32h1v1.5h-1zM1286 677.16h2v1.5h-2zM1286 670.84h2v1.5h-2zM1286 671.5h1.5v1.5h-1.5zM1287.5 673.5h1.5v1.5h-1.5zM1287.5 671.96h1.5v1.5h-1.5zM1287.5 667.93h2v1.5h-2zM1287.5 671.16h1.5v1.5h-1.5zM1288.5 668.6h1v1.5h-1zM1288.5 662.42h1.5v1.5h-1.5zM1288.5 670.03h2v1.5h-2zM1288.5 667.26h1.5v1.5h-1.5zM1290 668.69h2v1.5h-2zM1290 668.04h1.5v1.5h-1.5zM1290 662.83h1.5v1.5h-1.5zM1290 666.89h2v1.5h-2zM1291.5 667.31h1.5v1.5h-1.5zM1291.5 663.05h1.5v1.5h-1.5zM1291.5 660.18h1v1.5h-1zM1291.5 666.66h2v1.5h-2zM1292.5 663.43h1.5v1.5h-1.5zM1292.5 664.73h2v1.5h-2zM1292.5 658.56h1v1.5h-1zM1292.5 661.35h2v1.5h-2zM1294 651.54h1.5v1.5h-1.5zM1294 655.61h1.5v1.5h-1.5zM1294 658.6h1v1.5h-1zM1294 655.38h2v1.5h-2zM1295.5 649.57h1.5v1.5h-1.5zM1295.5 650.21h1v1.5h-1zM1295.5 653.9h2v1.5h-2zM1295.5 653.14h1v1.5h-1zM1297 655.97h1.5v1.5h-1.5zM1297 653.3h2v1.5h-2zM1297 657.74h2v1.5h-2zM1297 657.32h1v1.5h-1zM1298 653.42h1.5v1.5h-1.5zM1298 653.73h2v1.5h-2zM1298 651.55h1v1.5h-1zM1298 656.64h1v1.5h-1zM1299 656.13h1v1.5h-1zM1299 655.83h1v1.5h-1zM1299 653.31h1v1.5h-1zM1299 656.89h1v1.5h-1zM1300 656.62h1.5v1.5h-1.5zM1300 653.86h1v1.5h-1zM1300 657.74h1v1.5h-1zM1300 650.93h1v1.5h-1zM1301 653.03h1v1.5h-1zM1301 654.99h2v1.5h-2zM1301 652.41h1v1.5h-1zM1301 650.64h1v1.5h-1zM1302.5 652.36h1.5v1.5h-1.5zM1302.5 657.56h1.5v1.5h-1.5zM1302.5 650.56h1.5v1.5h-1.5zM1302.5 652.11h1v1.5h-1zM1304 657.53h1v1.5h-1zM1304 652.49h1.5v1.5h-1.5zM1304 650.85h1v1.5h-1zM1304 652.53h1.5v1.5h-1.5zM1305 658.69h1.5v1.5h-1.5zM1305 658.92h2v1.5h-2zM1305 653.15h1v1.5h-1zM1305 656.15h1.5v1.5h-1.5zM1306 659.11h1.5v1.5h-1.5zM1306 656.72h2v1.5h-2zM1306 657.43h2v1.5h-2zM1306 655.9h1.5v1.5h-1.5zM1307.5 665.26h1.5v1.5h-1.5zM1307.5 667.55h1v1.5h-1zM1307.5 665.38h1.5v1.5h-1.5zM1307.5 660.05h1.5v1.5h-1.5zM1308.5 663.24h1.5v1.5h-1.5zM1308.5 664.98h1v1.5h-1zM1308.5 668.23h2v1.5h-2zM1308.5 661.64h1.5v1.5h-1.5zM1309.5 664.39h1v1.5h-1zM1309.5 662.4h1v1.5h-1zM1309.5 660.48h2v1.5h-2zM1309.5 661.97h2v1.5h-2zM1310.5 665.19h1v1.5h-1zM1310.5 662.47h2v1.5h-2zM1310.5 666.19h1.5v1.5h-1.5zM1310.5 664.55h1.5v1.5h-1.5zM1311.5 669.55h1v1.5h-1zM1311.5 668.26h1v1.5h-1zM1311.5 661.89h1v1.5h-1zM1311.5 666.5h1.5v1.5h-1.5zM1313 666.49h1v1.5h-1zM1313 666.94h1.5v1.5h-1.5zM1313 668.79h1v1.5h-1zM1313 667.32h1.5v1.5h-1.5zM1314.5 677.71h1.5v1.5h-1.5zM1314.5 671.84h1v1.5h-1zM1314.5 678.07h1v1.5h-1zM1314.5 672.83h1.5v1.5h-1.5zM1316 673.96h1v1.5h-1zM1316 674.33h1.5v1.5h-1.5zM1316 669.19h1v1.5h-1zM1316 672.21h1.5v1.5h-1.5zM1317 672.05h2v1.5h-2zM1317 666.81h2v1.5h-2zM1317 666.25h2v1.5h-2zM1317 672.58h1.5v1.5h-1.5zM1318.5 666.69h1.5v1.5h-1.5zM1318.5 666.37h1v1.5h-1zM1318.5 663.48h1v1.5h-1zM1318.5 666.37h1.5v1.5h-1.5zM1320 662.03h1.5v1.5h-1.5zM1320 661.7h1.5v1.5h-1.5zM1320 661.88h1.5v1.5h-1.5zM1320 667.03h1v1.5h-1zM1321.5 662.88h1v1.5h-1zM1321.5 660.77h1.5v1.5h-1.5zM1321.5 656.65h1v1.5h-1zM1321.5 660.81h1.5v1.5h-1.5zM1322.5 655.65h2v1.5h-2zM1322.5 654.87h2v1.5h-2zM1322.5 652.2h1.5v1.5h-1.5zM1322.5 656.73h1v1.5h-1zM1324 653.92h1v1.5h-1zM1324 652.31h2v1.5h-2zM1324 656.66h1v1.5h-1zM1324 653.12h2v1.5h-2zM1325.5 651.4h1.5v1.5h-1.5zM1325.5 652.26h1.5v1.5h-1.5zM1325.5 650.96h1.5v1.5h-1.5zM1325.5 652.33h2v1.5h-2zM1327 653.97h2v1.5h-2zM1327 653.87h1.5v1.5h-1.5zM1327 651.15h2v1.5h-2zM1327 651.77h1.5v1.5h-1.5zM1328 649.37h2v1.5h-2zM1328 654.03h2v1.5h-2zM1328 653.24h2v1.5h-2zM1328 655.37h2v1.5h-2zM1329.5 650.14h1.5v1.5h-1.5zM1329.5 654.57h1.5v1.5h-1.5zM1329.5 654.45h1v1.5h-1zM1329.5 649.62h1v1.5h-1zM1331 652.2h1v1.5h-1zM1331 653.77h2v1.5h-2zM1331 654.76h2v1.5h-2zM1331 651.98h1.5v1.5h-1.5zM1332 657.03h2v1.5h-2zM1332 652.09h1.5v1.5h-1.5zM1332 656.46h1v1.5h-1zM1332 650.59h1.5v1.5h-1.5zM1333.5 650.9h2v1.5h-2zM1333.5 655.87h2v1.5h-2zM1333.5 654.64h2v1.5h-2zM1333.5 656.63h2v1.5h-2z" fill="#5a005c"/><path d="M7.26 674L8.06 647.33L9.06 670L10.46 649.39L10.96 692.95L11.76 668M37 674L37.8 647.18L38.8 670L40.2 652.48L40.7 685.48L41.5 668M66.74 674L67.54 649.5L68.54 670L69.94 651.93L70.44 691.7L71.24 668M96.48 674L97.28 648.35L98.28 670L99.68 650.54L100.18 690.7L100.98 668M126.22 674L127.02 650.57L128.02 670L129.42 651.48L129.92 689.63L130.72 668M155.96 674L156.76 647.51L157.76 670L159.16 651.23L159.66 689.49L160.46 668M185.7 674L186.5 649.27L187.5 670L188.9 652.92L189.4 686.09L190.2 668M215.44 674L216.24 650.68L217.24 670L218.64 648.95L219.14 690.81L219.94 668M245.18 674L245.98 651.7L246.98 670L248.38 648.65L248.88 689.54L249.68 668M274.92 674L275.72 649.17L276.72 670L278.12 649.97L278.62 686.34L279.42 668M304.66 674L305.46 649.75L306.46 670L307.86 652.36L308.36 690.31L309.16 668M334.4 674L335.2 647.73L336.2 670L337.6 651.84L338.1 688.36L338.9 668M364.14 674L364.94 646.87L365.94 670L367.34 650.64L367.84 688.68L368.64 668M393.88 674L394.68 649.18L395.68 670L397.08 652.95L397.58 689.56L398.38 668M423.62 674L424.42 651.72L425.42 670L426.82 649.12L427.32 691.07L428.12 668M453.36 674L454.16 646.45L455.16 670L456.56 648.8L457.06 690.54L457.86 668M483.1 674L483.9 650.14L484.9 670L486.3 651.97L486.8 688.04L487.6 668M512.84 674L513.64 647.64L514.64 670L516.04 649.15L516.54 689.3L517.34 668M542.58 674L543.38 646.14L544.38 670L545.78 649.25L546.28 690.26L547.08 668M572.32 674L573.12 646.89L574.12 670L575.52 648.87L576.02 691.98L576.82 668M602.06 674L602.86 651.6L603.86 670L605.26 648.5L605.76 686.42L606.56 668M631.8 674L632.6 646.71L633.6 670L635 647.51L635.5 691.35L636.3 668M661.54 674L662.34 650.43L663.34 670L664.74 648.59L665.24 688.91L666.04 668M691.28 674L692.08 650.17L693.08 670L694.48 647.17L694.98 691.55L695.78 668M721.02 674L721.82 651.16L722.82 670L724.22 648.27L724.72 690.63L725.52 668M750.76 674L751.56 650.2L752.56 670L753.96 649.02L754.46 692.03L755.26 668M780.5 674L781.3 647.31L782.3 670L783.7 649.84L784.2 687.51L785 668M810.24 674L811.04 648.65L812.04 670L813.44 651.87L813.94 689.56L814.74 668M839.98 674L840.78 649.66L841.78 670L843.18 652.92L843.68 686.79L844.48 668M869.72 674L870.52 647.34L871.52 670L872.92 650.72L873.42 686.2L874.22 668M899.46 674L900.26 651.79L901.26 670L902.66 649.05L903.16 688.52L903.96 668M929.2 674L930 648.59L931 670L932.4 651.97L932.9 692.32L933.7 668M958.94 674L959.74 650.06L960.74 670L962.14 648.03L962.64 687.84L963.44 668M988.68 674L989.48 650.24L990.48 670L991.88 648.3L992.38 692.06L993.18 668M1018.42 674L1019.22 651.23L1020.22 670L1021.62 648.36L1022.12 687.91L1022.92 668M1048.16 674L1048.96 647.37L1049.96 670L1051.36 651.31L1051.86 685.38L1052.66 668M1077.9 674L1078.7 650.17L1079.7 670L1081.1 647.38L1081.6 691.73L1082.4 668M1107.64 674L1108.44 649.26L1109.44 670L1110.84 650.5L1111.34 685.76L1112.14 668M1137.38 674L1138.18 646.27L1139.18 670L1140.58 649.12L1141.08 692.88L1141.88 668M1167.12 674L1167.92 649.6L1168.92 670L1170.32 652.17L1170.82 685.5L1171.62 668M1196.86 674L1197.66 646.61L1198.66 670L1200.06 647.13L1200.56 690.58L1201.36 668M1226.6 674L1227.4 647.06L1228.4 670L1229.8 648.64L1230.3 690.34L1231.1 668M1256.34 674L1257.14 650.17L1258.14 670L1259.54 648.93L1260.04 688.74L1260.84 668M1286.08 674L1286.88 647.73L1287.88 670L1289.28 650.37L1289.78 687.85L1290.58 668M1315.82 674L1316.62 648.16L1317.62 670L1319.02 648.49L1319.52 687.34L1320.32 668M1345.56 674L1346.36 647.57L1347.36 670L1348.76 647.1L1349.26 687.48L1350.06 668M1375.3 674L1376.1 649.55L1377.1 670L1378.5 648.61L1379 685.9L1379.8 668" stroke="#5a005c" stroke-width="1.3"/><path d="M7.26 674L8.06 647.33L9.06 670L10.46 649.39L10.96 692.95L11.76 668M37 674L37.8 647.18L38.8 670L40.2 652.48L40.7 685.48L41.5 668M66.74 674L67.54 649.5L68.54 670L69.94 651.93L70.44 691.7L71.24 668M96.48 674L97.28 648.35L98.28 670L99.68 650.54L100.18 690.7L100.98 668M126.22 674L127.02 650.57L128.02 670L129.42 651.48L129.92 689.63L130.72 668M155.96 674L156.76 647.51L157.76 670L159.16 651.23L159.66 689.49L160.46 668M185.7 674L186.5 649.27L187.5 670L188.9 652.92L189.4 686.09L190.2 668M215.44 674L216.24 650.68L217.24 670L218.64 648.95L219.14 690.81L219.94 668M245.18 674L245.98 651.7L246.98 670L248.38 648.65L248.88 689.54L249.68 668M274.92 674L275.72 649.17L276.72 670L278.12 649.97L278.62 686.34L279.42 668M304.66 674L305.46 649.75L306.46 670L307.86 652.36L308.36 690.31L309.16 668M334.4 674L335.2 647.73L336.2 670L337.6 651.84L338.1 688.36L338.9 668M364.14 674L364.94 646.87L365.94 670L367.34 650.64L367.84 688.68L368.64 668M393.88 674L394.68 649.18L395.68 670L397.08 652.95L397.58 689.56L398.38 668M423.62 674L424.42 651.72L425.42 670L426.82 649.12L427.32 691.07L428.12 668M453.36 674L454.16 646.45L455.16 670L456.56 648.8L457.06 690.54L457.86 668M483.1 674L483.9 650.14L484.9 670L486.3 651.97L486.8 688.04L487.6 668M512.84 674L513.64 647.64L514.64 670L516.04 649.15L516.54 689.3L517.34 668M542.58 674L543.38 646.14L544.38 670L545.78 649.25L546.28 690.26L547.08 668M572.32 674L573.12 646.89L574.12 670L575.52 648.87L576.02 691.98L576.82 668M602.06 674L602.86 651.6L603.86 670L605.26 648.5L605.76 686.42L606.56 668M631.8 674L632.6 646.71L633.6 670L635 647.51L635.5 691.35L636.3 668M661.54 674L662.34 650.43L663.34 670L664.74 648.59L665.24 688.91L666.04 668M691.28 674L692.08 650.17L693.08 670L694.48 647.17L694.98 691.55L695.78 668M721.02 674L721.82 651.16L722.82 670L724.22 648.27L724.72 690.63L725.52 668M750.76 674L751.56 650.2L752.56 670L753.96 649.02L754.46 692.03L755.26 668M780.5 674L781.3 647.31L782.3 670L783.7 649.84L784.2 687.51L785 668M810.24 674L811.04 648.65L812.04 670L813.44 651.87L813.94 689.56L814.74 668M839.98 674L840.78 649.66L841.78 670L843.18 652.92L843.68 686.79L844.48 668M869.72 674L870.52 647.34L871.52 670L872.92 650.72L873.42 686.2L874.22 668M899.46 674L900.26 651.79L901.26 670L902.66 649.05L903.16 688.52L903.96 668M929.2 674L930 648.59L931 670L932.4 651.97L932.9 692.32L933.7 668M958.94 674L959.74 650.06L960.74 670L962.14 648.03L962.64 687.84L963.44 668M988.68 674L989.48 650.24L990.48 670L991.88 648.3L992.38 692.06L993.18 668M1018.42 674L1019.22 651.23L1020.22 670L1021.62 648.36L1022.12 687.91L1022.92 668M1048.16 674L1048.96 647.37L1049.96 670L1051.36 651.31L1051.86 685.38L1052.66 668M1077.9 674L1078.7 650.17L1079.7 670L1081.1 647.38L1081.6 691.73L1082.4 668M1107.64 674L1108.44 649.26L1109.44 670L1110.84 650.5L1111.34 685.76L1112.14 668M1137.38 674L1138.18 646.27L1139.18 670L1140.58 649.12L1141.08 692.88L1141.88 668M1167.12 674L1167.92 649.6L1168.92 670L1170.32 652.17L1170.82 685.5L1171.62 668M1196.86 674L1197.66 646.61L1198.66 670L1200.06 647.13L1200.56 690.58L1201.36 668M1226.6 674L1227.4 647.06L1228.4 670L1229.8 648.64L1230.3 690.34L1231.1 668M1256.34 674L1257.14 650.17L1258.14 670L1259.54 648.93L1260.04 688.74L1260.84 668M1286.08 674L1286.88 647.73L1287.88 670L1289.28 650.37L1289.78 687.85L1290.58 668M1315.82 674L1316.62 648.16L1317.62 670L1319.02 648.49L1319.52 687.34L1320.32 668M1345.56 674L1346.36 647.57L1347.36 670L1348.76 647.1L1349.26 687.48L1350.06 668M1375.3 674L1376.1 649.55L1377.1 670L1378.5 648.61L1379 685.9L1379.8 668" stroke="#b800c0" stroke-width="0.4"/></g><path d="M4 421.2H17L27 431L17.5 441.3H4L1.5 439V423.5Z" fill="#00a000"/><path d="M4 421.2H17L27 431M27 431L17.5 441.3" fill="none" stroke="#0a3a0a" stroke-width="1.2"/><path d="M1.5 423.5V439L4 441.3H17.5" fill="none" stroke="#30b030" stroke-width="1"/><text x="11.8" y="438.7" font-family="Liberation Sans, sans-serif" font-size="19.5" font-weight="bold" fill="#ffffff" text-anchor="middle">4</text><path d="M4 688.6H17.5L26.5 698.8L17.5 709H4L2 707V690.6Z" fill="#ffffff" stroke="#b000b8" stroke-width="1.5"/><text x="11.3" y="705.8" font-family="Liberation Sans, sans-serif" font-size="20" fill="#a800b0" stroke="#a800b0" stroke-width="0.6" text-anchor="middle">3</text><rect x="31" y="420.5" width="137" height="19.5" fill="#ffffff"/><rect x="31" y="688" width="62" height="19.5" fill="#ffffff"/><text x="33.2" y="437.4" font-family='"Liberation Sans", sans-serif' font-size="20" fill="#000000" stroke="#000000" stroke-width="0.5">I</text><rect x="40.3" y="437.2" width="11.7" height="1.8" fill="#000"/><text x="55.2" y="437.4" font-family='"Liberation Sans", sans-serif' font-size="20" fill="#000000" textLength="111.5" lengthAdjust="spacing" stroke="#000000" stroke-width="0.5">INDUCTOR</text><text x="32" y="703.9" font-family='"Liberation Sans", sans-serif' font-size="20" fill="#000000" textLength="59" lengthAdjust="spacing" stroke="#000000" stroke-width="0.5">VOUT</text><text x="1" y="17.9" font-family='"Liberation Serif", serif' font-size="27" fill="#000000" textLength="40.5" lengthAdjust="spacing" font-weight="bold" stroke="#000000" stroke-width="0.5">Tek</text><text x="47" y="15" font-family='"Liberation Sans", sans-serif' font-size="19" fill="#000000" textLength="60" lengthAdjust="spacing" stroke="#000000" stroke-width="0.32">PreVu</text><path d="M370.8 0.5L369.2 2V15.5L370.8 17" fill="none" stroke="#b0a4b8" stroke-width="1.6"/><path d="M991.6 0.5L993.2 2V15.5L991.6 17" fill="none" stroke="#b0a4b8" stroke-width="1.6"/><rect x="370" y="7.3" width="622" height="1.8" fill="#2db52d"/><path d="M943.5 0H953.5L948.5 4Z" fill="#ff9900"/><path d="M943.5 5.5H953.5V17.5L948.5 19.5L943.5 17.5Z" fill="#ff9900"/><rect x="947.6" y="7" width="1.8" height="10" fill="#ffffff"/><path d="M1232.5 20.5H1247.5L1240 28Z" fill="#ff9900"/><path d="M1232.5 29.5H1247.5V45L1240 49.5L1232.5 45Z" fill="#ff9900"/><path d="M1234.5 31H1245.5V34H1241.5V45H1238.5V34H1234.5Z" fill="#ffffff"/><path d="M1323.5 20.5L1331 28.5H1316.5Z" fill="#a000a8"/><rect x="1322.7" y="28" width="1.8" height="6.5" fill="#a000a8"/><rect x="28" y="872" width="721" height="25.6" rx="7" fill="#ffffff" stroke="#474747" stroke-width="1.8"/><rect x="28" y="900.4" width="721" height="49.6" rx="7" fill="#ffffff" stroke="#474747" stroke-width="1.8"/><rect x="760.5" y="872" width="191" height="47.5" rx="7" fill="#ffffff" stroke="#474747" stroke-width="1.8"/><rect x="961.5" y="872" width="139" height="47.5" rx="7" fill="#ffffff" stroke="#474747" stroke-width="1.8"/><rect x="1110.5" y="872" width="221.5" height="47.5" rx="7" fill="#ffffff" stroke="#474747" stroke-width="1.8"/><rect x="1186" y="949" width="146" height="41" rx="7" fill="#ffffff" stroke="#474747" stroke-width="1.8"/><rect x="397" y="875" width="33" height="20.4" rx="10.2" fill="#a200a4"/><text x="413.5" y="891.5" font-family='"Liberation Sans", sans-serif' font-size="19.5" fill="#000000" text-anchor="middle" stroke="#000000" stroke-width="0.7">3</text><text x="452.5" y="891.6" font-family='"Liberation Sans", sans-serif' font-size="20" fill="#a200a4" textLength="78" lengthAdjust="spacing" stroke="#a200a4" stroke-width="0.32">20.0mV</text><text x="550" y="886" font-family='"Liberation Sans", sans-serif' font-size="10" fill="#a200a4" textLength="5.5" lengthAdjust="spacing">B</text><text x="555" y="892" font-family='"Liberation Sans", sans-serif' font-size="10" fill="#a200a4" textLength="8" lengthAdjust="spacing">W</text><rect x="578.4" y="875" width="32.1" height="20.4" rx="10.2" fill="#00a400"/><text x="594.45" y="891.5" font-family='"Liberation Sans", sans-serif' font-size="19.5" fill="#000000" text-anchor="middle" stroke="#000000" stroke-width="0.7">4</text><text x="635" y="891.6" font-family='"Liberation Sans", sans-serif' font-size="20" fill="#00a000" textLength="65" lengthAdjust="spacing" stroke="#00a000" stroke-width="0.32">1.00 A</text><text x="712.5" y="891.6" font-family='"Liberation Sans", sans-serif' font-size="19" fill="#00a000" stroke="#00a000" stroke-width="0.32">Ω</text><text x="728.5" y="886" font-family='"Liberation Sans", sans-serif' font-size="10" fill="#00a000" textLength="5.5" lengthAdjust="spacing">B</text><text x="733.5" y="892" font-family='"Liberation Sans", sans-serif' font-size="10" fill="#00a000" textLength="8" lengthAdjust="spacing">W</text><text x="206" y="920.3" font-family='"Liberation Sans", sans-serif' font-size="20" fill="#000000" textLength="57" lengthAdjust="spacing" stroke="#000000" stroke-width="0.32">Value</text><text x="322" y="920.3" font-family='"Liberation Sans", sans-serif' font-size="20" fill="#000000" textLength="54" lengthAdjust="spacing" stroke="#000000" stroke-width="0.32">Mean</text><text x="430" y="920.3" font-family='"Liberation Sans", sans-serif' font-size="20" fill="#000000" textLength="38" lengthAdjust="spacing" stroke="#000000" stroke-width="0.32">Min</text><text x="537" y="920.3" font-family='"Liberation Sans", sans-serif' font-size="20" fill="#000000" textLength="40" lengthAdjust="spacing" stroke="#000000" stroke-width="0.32">Max</text><text x="642" y="920.3" font-family='"Liberation Sans", sans-serif' font-size="20" fill="#000000" textLength="80" lengthAdjust="spacing" stroke="#000000" stroke-width="0.32">Std Dev</text><rect x="35.1" y="927.4" width="32.5" height="20.3" rx="10.15" fill="#a200a4"/><text x="51.35" y="943.8" font-family='"Liberation Sans", sans-serif' font-size="19.5" fill="#000000" text-anchor="middle" stroke="#000000" stroke-width="0.7">3</text><text x="75" y="943.6" font-family='"Liberation Sans", sans-serif' font-size="20" fill="#a200a4" textLength="108.5" lengthAdjust="spacing" stroke="#a200a4" stroke-width="0.32">Peak–Peak</text><text x="208.5" y="943.6" font-family='"Liberation Sans", sans-serif' font-size="20" fill="#a200a4" textLength="77" lengthAdjust="spacing" stroke="#a200a4" stroke-width="0.32">12.8mV</text><text x="323.5" y="943.6" font-family='"Liberation Sans", sans-serif' font-size="20" fill="#a200a4" textLength="63" lengthAdjust="spacing" stroke="#a200a4" stroke-width="0.32">12.8m</text><text x="431" y="943.6" font-family='"Liberation Sans", sans-serif' font-size="20" fill="#a200a4" textLength="62" lengthAdjust="spacing" stroke="#a200a4" stroke-width="0.32">12.8m</text><text x="538" y="943.6" font-family='"Liberation Sans", sans-serif' font-size="20" fill="#a200a4" textLength="62" lengthAdjust="spacing" stroke="#a200a4" stroke-width="0.32">12.8m</text><text x="643.5" y="943.6" font-family='"Liberation Sans", sans-serif' font-size="20" fill="#a200a4" textLength="43.5" lengthAdjust="spacing" stroke="#a200a4" stroke-width="0.32">0.00</text><text x="767" y="891.6" font-family='"Liberation Sans", sans-serif' font-size="20" fill="#000000" textLength="71" lengthAdjust="spacing" stroke="#000000" stroke-width="0.32">4.00µs</text><rect x="765.7" y="899.1" width="16.2" height="15.7" rx="2" fill="#ff9600"/><path d="M768.3 900.8H779.3V903.3H775.1V913.3H772.5V903.3H768.3Z" fill="#ffffff"/><text x="790" y="914" font-family='"Liberation Sans", sans-serif' font-size="20" fill="#ff9600" textLength="79.5" lengthAdjust="spacing" stroke="#ff9600" stroke-width="0.32">93.00 %</text><text x="969.5" y="891.3" font-family='"Liberation Sans", sans-serif' font-size="20" fill="#000000" textLength="92" lengthAdjust="spacing" stroke="#000000" stroke-width="0.32">2.50GS/s</text><text x="970" y="913.7" font-family='"Liberation Sans", sans-serif' font-size="20" fill="#000000" textLength="123.5" lengthAdjust="spacing" stroke="#000000" stroke-width="0.32">100k points</text><rect x="1150.1" y="875.2" width="32.4" height="20.5" rx="10.25" fill="#a200a4"/><text x="1166.3" y="891.8" font-family='"Liberation Sans", sans-serif' font-size="19.5" fill="#000000" text-anchor="middle" stroke="#000000" stroke-width="0.7">3</text><path d="M1200.5 891.5H1205.5L1210 879.5H1215" fill="none" stroke="#000" stroke-width="2.2"/><text x="1260.5" y="891.6" font-family='"Liberation Sans", sans-serif' font-size="20" fill="#000000" textLength="63.5" lengthAdjust="spacing" stroke="#000000" stroke-width="0.32">1.43 V</text><rect x="1195.5" y="955.6" width="6.5" height="1.6" fill="#000"/><rect x="1211.6" y="955.6" width="2.4" height="1.6" fill="#000"/><rect x="1229.6" y="955.6" width="6.4" height="1.6" fill="#000"/><rect x="1254.6" y="955.6" width="2.4" height="1.6" fill="#000"/><rect x="1277.9" y="955.6" width="7.1" height="1.6" fill="#000"/><rect x="1291.6" y="955.6" width="4.2" height="1.6" fill="#000"/><rect x="1303.6" y="955.6" width="6.4" height="1.6" fill="#000"/><rect x="1318.5" y="955.6" width="3.5" height="1.6" fill="#000"/></svg></body></html>
